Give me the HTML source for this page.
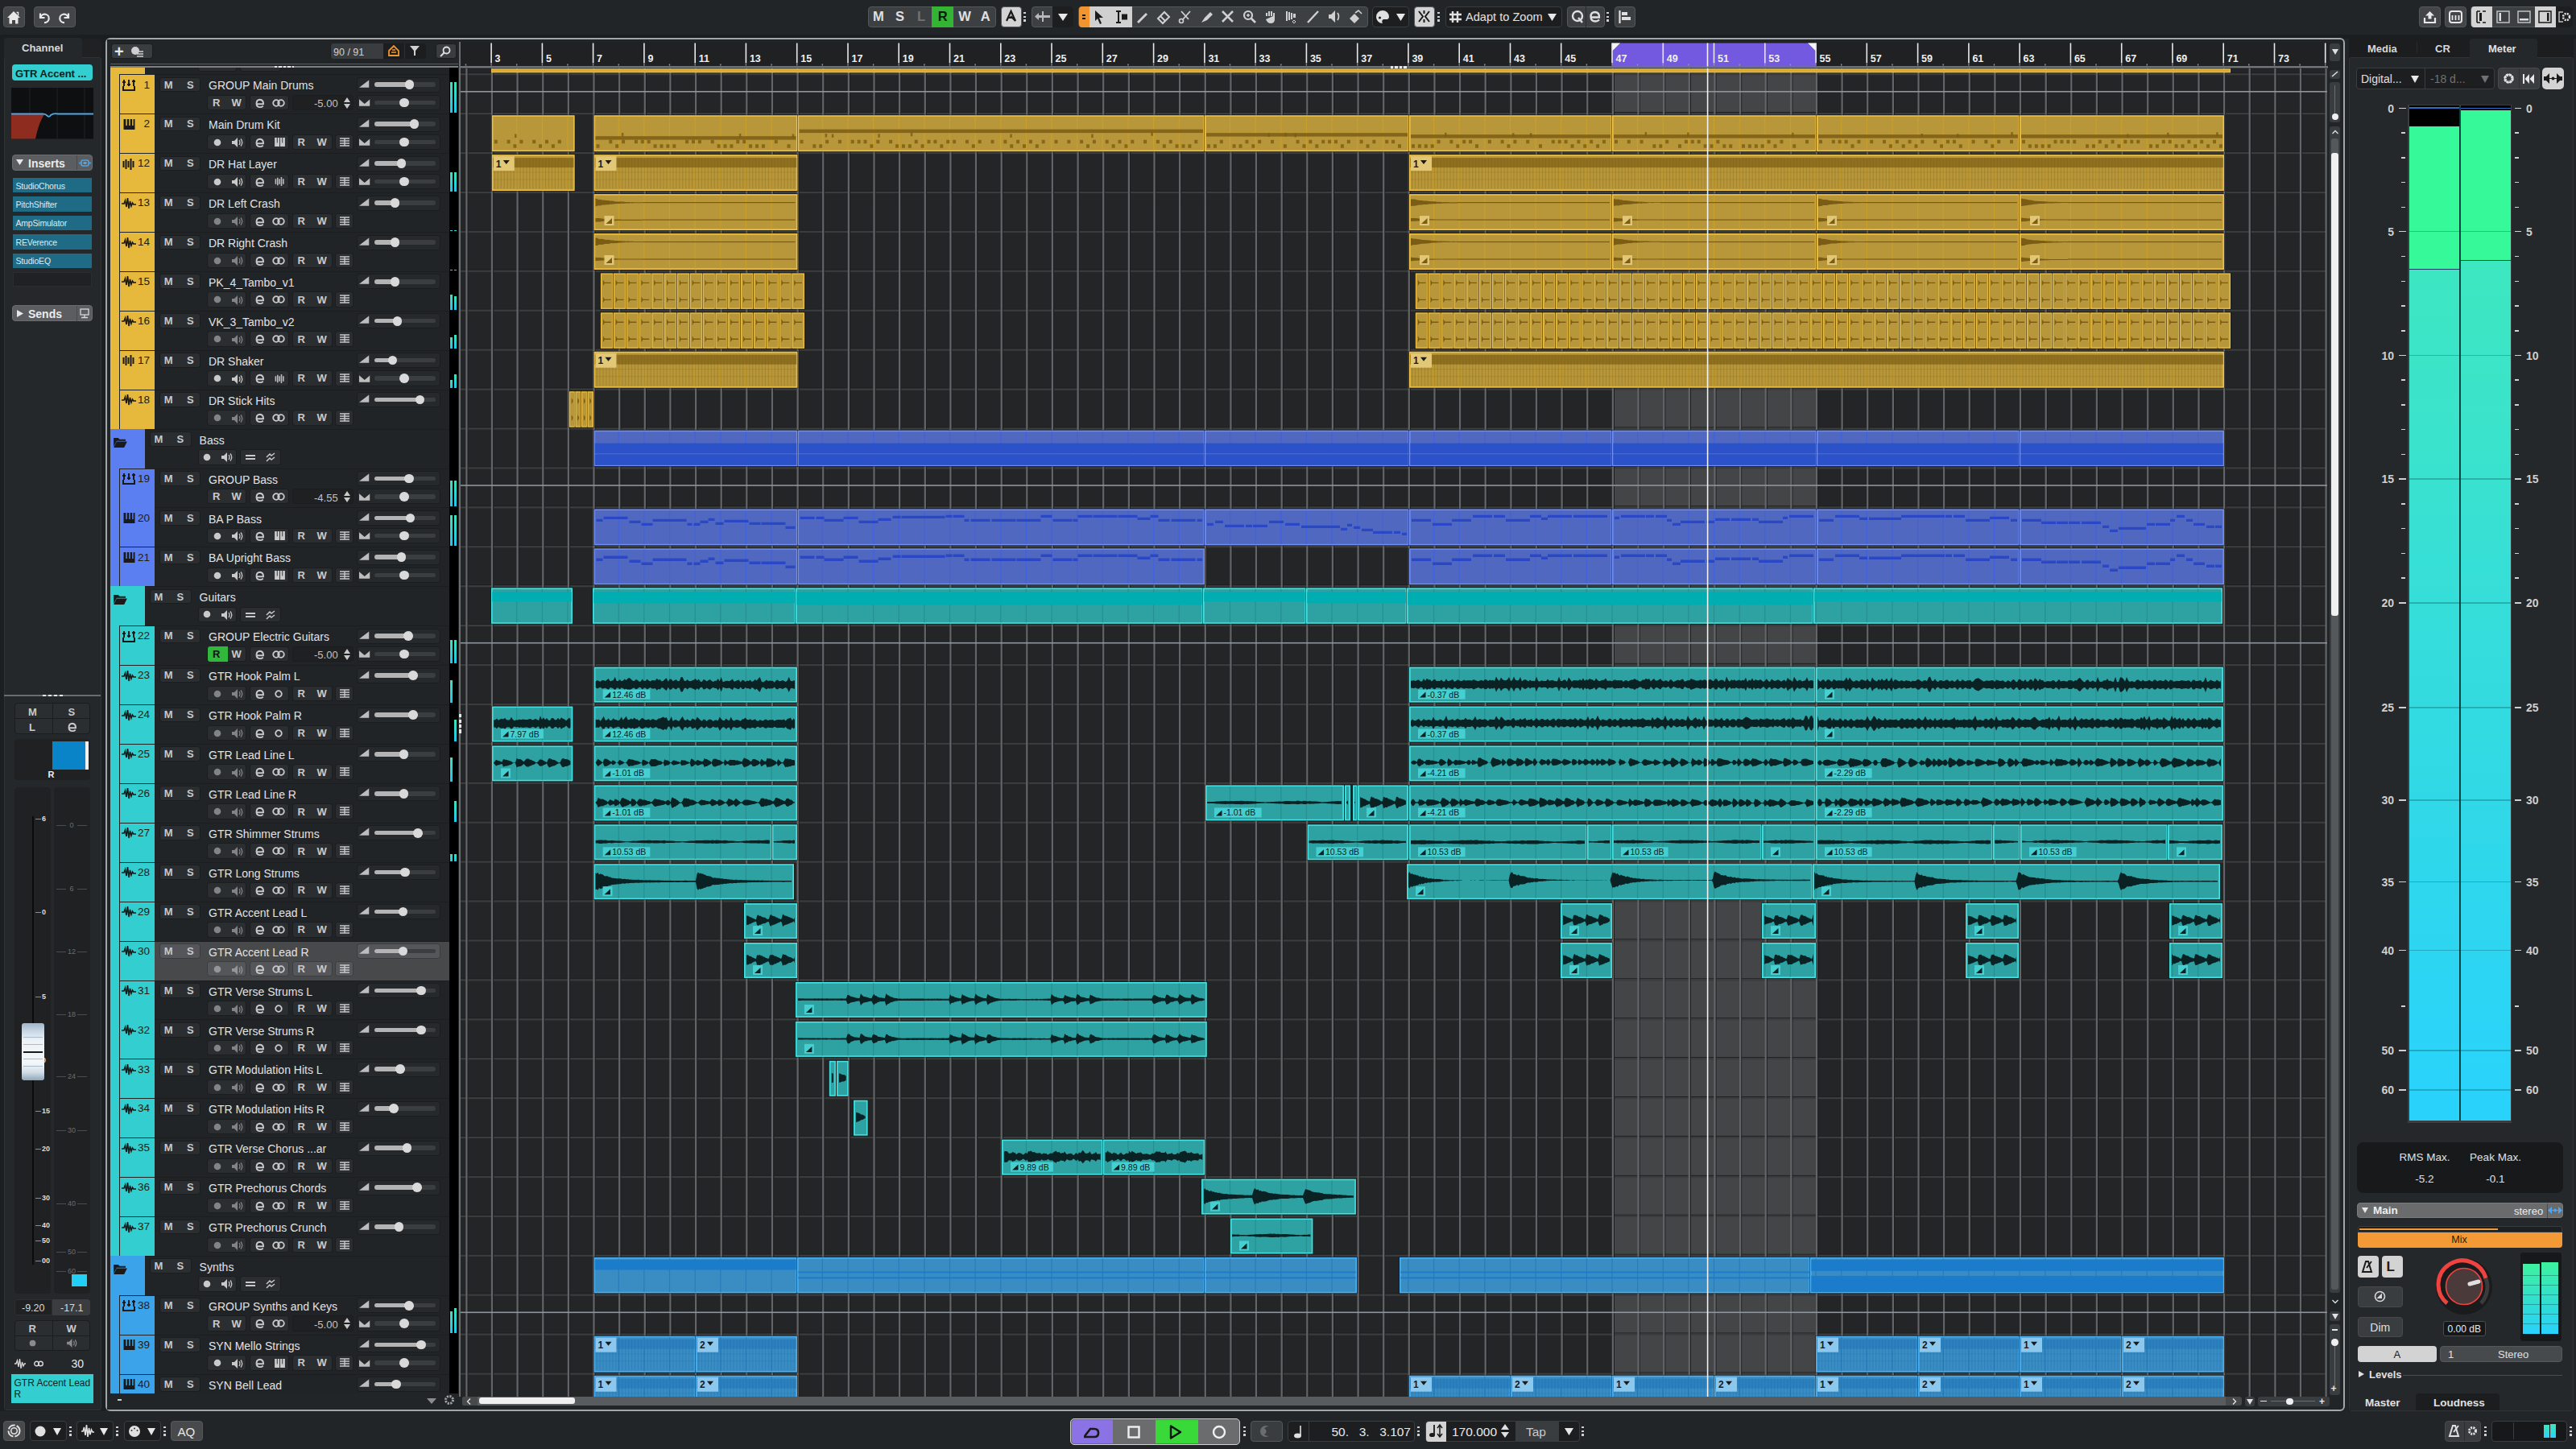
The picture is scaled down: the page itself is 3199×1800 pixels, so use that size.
<!DOCTYPE html><html><head><meta charset="utf-8"><style>
html,body{margin:0;padding:0;width:3199px;height:1800px;overflow:hidden;background:#212528;font-family:"Liberation Sans", sans-serif;}
div{box-sizing:border-box;}
.a{position:absolute;}
.t{white-space:nowrap;line-height:1;}

.r{position:absolute;left:0;width:570px;height:49px;}
.rb{position:absolute;left:192px;top:0;width:366px;height:49px;background:#212427;border-top:1.4px solid #1b1d1f;}
.sel{background:#48494b;}
.rs .bx{background:#545659;border-color:#3a3c3e;}
.cs{position:absolute;left:136.6px;top:0;width:11px;height:49px;}
.cc{position:absolute;left:148.6px;top:1px;width:43.2px;height:48px;}
.cf{position:absolute;left:136.6px;top:0;width:43.2px;height:49px;}
.num{position:absolute;right:384px;top:6.3px;font-size:13.5px;color:#241d0c;line-height:1;}
.ic{position:absolute;left:152px;top:8px;width:16px;height:14px;}
.bx{position:absolute;background:#2b2e31;border:1px solid #1a1c1e;border-radius:3.5px;}
.ms{left:197.5px;top:3.6px;width:51.6px;height:18.6px;}
.msf{left:185.6px;top:3.6px;width:52px;height:18.6px;}
.gl{position:absolute;font-weight:bold;font-size:13px;color:#c9c9c9;line-height:1;}
.nm{position:absolute;left:259px;top:7.2px;font-size:14px;color:#e2e2e2;line-height:1;white-space:nowrap;}
.nmf{left:247.6px;}
.vb{left:442.5px;top:3.5px;width:104px;height:19px;background:#26292c;}
.pb{left:442.5px;top:25.6px;width:104px;height:19.4px;background:#26292c;}
.g1{left:257px;top:25.6px;width:49.2px;height:19.4px;}
.g2{left:310px;top:25.6px;width:49.3px;height:19.4px;}
.g3{left:363px;top:25.6px;width:49.6px;height:19.4px;}
.g4{left:416.4px;top:25.6px;width:23px;height:19.4px;}
.gv{left:363px;top:25.6px;width:76.4px;height:19.4px;background:#1e2022;}
.f1{left:245.5px;top:25.6px;width:48.5px;height:19.4px;}
.f2{left:298px;top:25.6px;width:50.6px;height:19.4px;}
.st{position:absolute;left:465px;width:75.7px;height:5.5px;background:#3b3e41;border-radius:3px;}
.sf{position:absolute;left:465px;height:5.5px;background:#b4b4b4;border-radius:3px 0 0 3px;}
.kn{position:absolute;width:11.6px;height:11.6px;border-radius:50%;background:#d9d9d9;}
.mt{position:absolute;left:557.5px;top:0;width:11.5px;height:49px;background:#000;}
.mb{position:absolute;width:3.5px;background:linear-gradient(#3de3b5,#1ec8f0);}
.sv{position:absolute;overflow:visible;}

</style></head><body>
<svg width="0" height="0" style="position:absolute">
<symbol id="ivol" viewBox="0 0 13 10"><path d="M0 10L13 0V10z" fill="#bdbdbd"/></symbol>
<symbol id="ipan" viewBox="0 0 14 9"><path d="M0 0L7 6L14 0V9H0z" fill="#bdbdbd"/></symbol>
<symbol id="igrp" viewBox="0 0 16 14"><path d="M2 0v8M8 0v8M14 0v8M0 3h4M6 6h4M12 2h4M1 8v5h14v-5" stroke="#1a1a1a" stroke-width="2" fill="none"/></symbol>
<symbol id="ipia" viewBox="0 0 15 14"><path d="M0 0h3v14H0zM4.6 0h2.6v14H4.6zM8.8 0h2.6v14H8.8zM13 0h2v14h-2zM0 8.5h15v5.5H0z" fill="#1a1a1a"/></symbol>
<symbol id="iwav" viewBox="0 0 18 14"><path d="M0 7h3l1.5-4 1.5 8 1.5-11 1.5 13 1.5-9 1.5 6 1.5-4 1.2 2H18" stroke="#1a1a1a" stroke-width="1.6" fill="none"/></symbol>
<symbol id="ihat" viewBox="0 0 15 14"><path d="M1 3v8M4 1v12M7 3v8M10 0v14M13 3v8" stroke="#1a1a1a" stroke-width="2"/></symbol>
<symbol id="ifol" viewBox="0 0 18 14"><path d="M0 1h6l2 2h8v2H4L0 13z M4 6h14l-4 8H0z" fill="#1a1a1a"/></symbol>
<symbol id="irec" viewBox="0 0 10 10"><circle cx="5" cy="5" r="4.3" fill="#c9c9c9"/></symbol>
<symbol id="ispk" viewBox="0 0 14 12"><path d="M0 4h3l4-4v12l-4-4H0z" fill="#c9c9c9"/><path d="M9 3q2 3 0 6M11 1.5q3.5 4.5 0 9" stroke="#c9c9c9" stroke-width="1.3" fill="none"/></symbol>
<symbol id="ie" viewBox="0 0 12 12"><path d="M2.5 7.2h7.5q0.3-5-4.2-5.5Q1.6 1.8 1.5 6.5q0 4.6 4.6 4.6q2.3 0 3.6-1.5" stroke="#c9c9c9" stroke-width="1.9" fill="none"/></symbol>
<symbol id="iinf" viewBox="0 0 16 10"><circle cx="5" cy="5" r="3.8" stroke="#c9c9c9" stroke-width="1.8" fill="none"/><circle cx="11" cy="5" r="3.8" stroke="#c9c9c9" stroke-width="1.8" fill="none"/></symbol>
<symbol id="ioo" viewBox="0 0 10 10"><circle cx="5" cy="5" r="3.8" stroke="#c9c9c9" stroke-width="1.8" fill="none"/></symbol>
<symbol id="ikey" viewBox="0 0 14 12"><path d="M0 0h14v12H0z" fill="#c9c9c9"/><path d="M3.5 0v7M7 0v12M10.5 0v7" stroke="#2b2e31" stroke-width="1"/></symbol>
<symbol id="ilst" viewBox="0 0 12 11"><path d="M0 1h12M0 4h12M0 7h12M0 10h12M6 1v9" stroke="#c9c9c9" stroke-width="1.4"/></symbol>
<symbol id="ieq" viewBox="0 0 12 6"><path d="M0 1h12M0 5h12" stroke="#c9c9c9" stroke-width="1.8"/></symbol>
<symbol id="ishf" viewBox="0 0 12 12"><path d="M1 6l4-4 2 2 4-3M1 11l4-4 2 2 4-3" stroke="#c9c9c9" stroke-width="1.5" fill="none"/></symbol>
<symbol id="iud" viewBox="0 0 8 14"><path d="M0 6L4 0L8 6zM0 8h8L4 14z" fill="#c9c9c9"/></symbol>
</svg>
<div class="a" style="left:4.2px;top:7.5px;width:26.5px;height:26.5px;background:#434548;border:1px solid #55585b;border-radius:4px;"></div>
<svg class="sv" style="left:8.7px;top:13.5px;width:16px;height:15.5px"><path d="M0 8L8 0L16 8H13.5V15.5H10V11H6V15.5H2.5V8z" fill="#e8e8e8"/><path d="M11.5 1.5h2v4" stroke="#e8e8e8" stroke-width="1.5"/></svg>
<div class="a" style="left:41.7px;top:7.5px;width:52.8px;height:26.5px;background:#434548;border:1px solid #55585b;border-radius:4px;"></div>
<svg class="sv" style="left:47px;top:15px;width:14px;height:14px"><path d="M3 1.5V7H8.5" stroke="#e8e8e8" stroke-width="2.2" fill="none"/><path d="M3.5 6.5A5.2 5.2 0 1 1 8 13" stroke="#e8e8e8" stroke-width="2.2" fill="none"/></svg>
<svg class="sv" style="left:74px;top:15px;width:14px;height:14px"><path d="M11 1.5V7H5.5" stroke="#e8e8e8" stroke-width="2.2" fill="none"/><path d="M10.5 6.5A5.2 5.2 0 1 0 6 13" stroke="#e8e8e8" stroke-width="2.2" fill="none"/></svg>
<div class="a" style="left:1077.5px;top:7.5px;width:159.1px;height:26.5px;background:#3d4043;border:1px solid #55585b;border-radius:4px;"></div>
<div class="a" style="left:1157.0px;top:8.0px;width:26.6px;height:25.5px;background:#33b533;"></div>
<div class="gl" style="left:1083.8px;top:12px;font-size:16.5px;width:14px;text-align:center;color:#e0e0e0">M</div>
<div class="gl" style="left:1110.4px;top:12px;font-size:16.5px;width:14px;text-align:center;color:#e0e0e0">S</div>
<div class="gl" style="left:1137.0px;top:12px;font-size:16.5px;width:14px;text-align:center;color:#707274">L</div>
<div class="gl" style="left:1163.6px;top:12px;font-size:16.5px;width:14px;text-align:center;color:#0f1a0f">R</div>
<div class="gl" style="left:1190.2px;top:12px;font-size:16.5px;width:14px;text-align:center;color:#e0e0e0">W</div>
<div class="gl" style="left:1216.8px;top:12px;font-size:16.5px;width:14px;text-align:center;color:#e0e0e0">A</div>
<div class="a" style="left:1242.5px;top:7.5px;width:26.1px;height:26.5px;background:#d3d3d3;border:1px solid #55585b;border-radius:4px;"></div>
<svg class="sv" style="left:1247px;top:12px;width:17px;height:17px"><path d="M3 14L8.5 2L14 14M5 10h7" stroke="#1a1a1a" stroke-width="2.2" fill="none"/><path d="M8 8l6 6" stroke="#1a1a1a" stroke-width="2"/></svg>
<div class="a" style="left:1271px;top:15px;width:3px;height:12px;background:repeating-linear-gradient(#d0d0d0 0 2.5px,transparent 2.5px 4.6px)"></div>
<div class="a" style="left:1281.0px;top:7.5px;width:52.0px;height:26.5px;background:#3d4043;border:1px solid #55585b;border-radius:4px;"></div>
<div class="a" style="left:1307.0px;top:8.0px;width:25.5px;height:25.5px;background:#1c1e20;border-radius:0 4px 4px 0"></div>
<svg class="sv" style="left:1285px;top:13px;width:19px;height:15px"><path d="M0 7.5L5 3v9z M5 6h14v3H5z M9 1h2v13H9z" fill="#b8b8b8"/></svg>
<svg class="sv" style="left:1314px;top:17px;width:12px;height:9px"><path d="M0 0h12L6 9z" fill="#e8e8e8"/></svg>
<div class="a" style="left:1339.0px;top:7.5px;width:359.5px;height:26.5px;background:#3d4043;border:1px solid #55585b;border-radius:4px;"></div>
<div class="a" style="left:1339.5px;top:8.0px;width:13.0px;height:25.5px;background:#f0952f;border-radius:4px 0 0 4px"></div>
<div class="a" style="left:1352.5px;top:8.0px;width:53.0px;height:25.5px;background:#d0d0d0;"></div>
<div class="a" style="left:1344.0px;top:17.5px;width:4.0px;height:2.5px;background:#1a1a1a;"></div>
<div class="a" style="left:1344.0px;top:21.5px;width:4.0px;height:2.5px;background:#1a1a1a;"></div>
<svg class="sv" style="left:1359px;top:13px;width:12px;height:17px"><path d="M1 0L11 9H6l3 7-2 1-3-7-3 3z" fill="#1a1a1a"/></svg>
<svg class="sv" style="left:1385px;top:13px;width:17px;height:16px"><path d="M1 1h6M1 15h6M4 1v14" stroke="#1a1a1a" stroke-width="2"/><rect x="8" y="4.5" width="7" height="7" fill="#1a1a1a"/></svg>
<svg class="sv" style="left:1410.0px;top:12px;width:17px;height:18px"><path d="M2 15L13 4l2 2L4 17z" fill="#d0d0d0"/></svg>
<svg class="sv" style="left:1436.5px;top:12px;width:17px;height:18px"><path d="M1 11l8-8 6 6-8 8z" stroke="#d0d0d0" stroke-width="2" fill="none"/><path d="M4 8l6 6" stroke="#d0d0d0" stroke-width="2"/></svg>
<svg class="sv" style="left:1463.0px;top:12px;width:17px;height:18px"><circle cx="4" cy="14" r="2.5" stroke="#d0d0d0" stroke-width="1.6" fill="none"/><path d="M6 12L15 2M4 2l9 10" stroke="#d0d0d0" stroke-width="1.8"/></svg>
<svg class="sv" style="left:1489.5px;top:12px;width:17px;height:18px"><path d="M2 16l4-6 7-7 3 3-7 7z" fill="#d0d0d0"/></svg>
<svg class="sv" style="left:1516.0px;top:12px;width:17px;height:18px"><path d="M2 2l13 13M15 2L2 15" stroke="#d0d0d0" stroke-width="2.6"/></svg>
<svg class="sv" style="left:1542.5px;top:12px;width:17px;height:18px"><circle cx="7" cy="7" r="5" stroke="#d0d0d0" stroke-width="2.2" fill="none"/><path d="M10.5 10.5L16 16" stroke="#d0d0d0" stroke-width="2.6"/><path d="M5 7h4M7 5v4" stroke="#d0d0d0" stroke-width="1.5"/></svg>
<svg class="sv" style="left:1569.0px;top:12px;width:17px;height:18px"><path d="M3 8V4h2v4M6 8V2h2v6M9 8V2h2v6M12 8V4h2v8q0 5-5 5-4 0-6-5z" fill="#d0d0d0"/></svg>
<svg class="sv" style="left:1595.5px;top:12px;width:17px;height:18px"><path d="M1 2h2v12H1zM4 3h2v10H4zM7 4h2v8H7zM10 5h3v5h-3z" fill="#d0d0d0"/><path d="M9 15l2-2 2 2-2 2z" stroke="#d0d0d0" fill="none"/></svg>
<svg class="sv" style="left:1622.0px;top:12px;width:17px;height:18px"><path d="M2 16L15 2" stroke="#d0d0d0" stroke-width="2.4"/></svg>
<svg class="sv" style="left:1648.5px;top:12px;width:17px;height:18px"><path d="M1 6h3l5-5v15l-5-5H1z" fill="#d0d0d0"/><path d="M12 4q3 4.5 0 9" stroke="#d0d0d0" stroke-width="1.8" fill="none"/></svg>
<svg class="sv" style="left:1675.0px;top:12px;width:17px;height:18px"><path d="M1 11l6-6 6 6-6 6z" fill="#d0d0d0"/><path d="M8 4l4-3 4 4" stroke="#d0d0d0" stroke-width="1.6" fill="none"/></svg>
<div class="a" style="left:1704.0px;top:7.5px;width:46.0px;height:26.5px;background:#1c1e20;border:1px solid #3a3d40;border-radius:4px"></div>
<svg class="sv" style="left:1709px;top:13px;width:17px;height:16px"><path d="M8 0a8 8 0 1 0 0 16q-2-3 1-5l5 0q2-1 2-3A8 8 0 0 0 8 0z" fill="#e0e0e0"/><circle cx="4.5" cy="9" r="1.6" fill="#1c1e20"/></svg>
<svg class="sv" style="left:1734px;top:17px;width:11px;height:9px"><path d="M0 0h11L5.5 9z" fill="#e8e8e8"/></svg>
<div class="a" style="left:1755.7px;top:7.5px;width:26.3px;height:26.5px;background:#d3d3d3;border:1px solid #55585b;border-radius:4px;"></div>
<svg class="sv" style="left:1760px;top:12px;width:17px;height:17px"><path d="M2 2l5 6.5L2 15M15 2l-5 6.5L15 15M8.5 1v4M8.5 12v4" stroke="#1a1a1a" stroke-width="2" fill="none"/></svg>
<div class="a" style="left:1784.5px;top:15px;width:3px;height:12px;background:repeating-linear-gradient(#d0d0d0 0 2.5px,transparent 2.5px 4.6px)"></div>
<div class="a" style="left:1794.6px;top:7.5px;width:145.4px;height:26.5px;background:#1c1e20;border:1px solid #3a3d40;border-radius:4px"></div>
<svg class="sv" style="left:1799px;top:13px;width:17px;height:16px"><path d="M5 1v14M11 1v14M1 5h15M1 11h15" stroke="#e0e0e0" stroke-width="2.4"/></svg>
<div class="a t" style="left:1820.0px;top:13.5px;font-size:14.6px;color:#e2e2e2;font-weight:normal;">Adapt to Zoom</div>
<svg class="sv" style="left:1922px;top:17px;width:11px;height:9px"><path d="M0 0h11L5.5 9z" fill="#e8e8e8"/></svg>
<div class="a" style="left:1946.0px;top:7.5px;width:46.5px;height:26.5px;background:#3d4043;border:1px solid #55585b;border-radius:4px;"></div>
<div class="a" style="left:1969.0px;top:8.0px;width:1.0px;height:25.5px;background:#2a2d30;"></div>
<svg class="sv" style="left:1951px;top:12px;width:16px;height:17px"><circle cx="8" cy="8" r="6" stroke="#e0e0e0" stroke-width="2.4" fill="none"/><path d="M9 10l5 6" stroke="#e0e0e0" stroke-width="2.4"/></svg>
<svg class="sv" style="left:1974px;top:13px;width:14px;height:15px"><path d="M2.5 8.5h9.5q0.3-6-5-6.5Q1.5 2 1.5 7.5q0 6 6 6q2.5 0 4.5-2" stroke="#e0e0e0" stroke-width="2.3" fill="none"/></svg>
<div class="a" style="left:1995px;top:15px;width:3px;height:12px;background:repeating-linear-gradient(#d0d0d0 0 2.5px,transparent 2.5px 4.6px)"></div>
<div class="a" style="left:2005.0px;top:7.5px;width:26.0px;height:26.5px;background:#3d4043;border:1px solid #55585b;border-radius:4px;"></div>
<svg class="sv" style="left:2010px;top:13px;width:16px;height:16px"><path d="M1.5 0v16" stroke="#e0e0e0" stroke-width="2.2"/><path d="M4 2h7v4H4zM4 8h11v4H4z" fill="#e0e0e0"/></svg>
<div class="a" style="left:3004.0px;top:7.5px;width:27.0px;height:26.5px;background:#434548;border:1px solid #55585b;border-radius:4px;"></div>
<svg class="sv" style="left:3010px;top:13px;width:15px;height:16px"><path d="M7.5 1L2 6.5h3.5v4h4v-4H13z" fill="#e8e8e8"/><path d="M1 9v6h13V9" stroke="#e8e8e8" stroke-width="2.2" fill="none"/></svg>
<div class="a" style="left:3036.0px;top:7.5px;width:27.0px;height:26.5px;background:#434548;border:1px solid #55585b;border-radius:4px;"></div>
<svg class="sv" style="left:3041px;top:13px;width:17px;height:16px"><rect x="1" y="1" width="15" height="14" rx="3" stroke="#e8e8e8" stroke-width="2" fill="none"/><path d="M4.5 6v6M8.5 6v6M12.5 6v6" stroke="#e8e8e8" stroke-width="1.8"/></svg>
<div class="a" style="left:3068.0px;top:7.5px;width:127.0px;height:26.5px;background:#3d4043;border:1px solid #55585b;border-radius:4px;"></div>
<div class="a" style="left:3068.5px;top:8.0px;width:26.0px;height:25.5px;background:#d3d3d3;border-radius:4px 0 0 4px"></div>
<div class="a" style="left:3148.0px;top:8.0px;width:26.0px;height:25.5px;background:#d3d3d3;"></div>
<div class="a" style="left:3174.0px;top:8.0px;width:20.5px;height:25.5px;background:#1c1e20;border-radius:0 4px 4px 0"></div>
<svg class="sv" style="left:3075px;top:13px;width:13px;height:16px"><path d="M1 1h4M1 15h4M1 1v14M12 1H8M12 15H8" stroke="#1a1a1a" stroke-width="1.6" fill="none"/><rect x="4" y="3" width="3" height="10" fill="#1a1a1a"/></svg>
<svg class="sv" style="left:3100px;top:13px;width:17px;height:16px"><rect x="1" y="1" width="15" height="14" stroke="#c0c0c0" stroke-width="1.5" fill="none"/><rect x="3.5" y="3" width="2.5" height="10" fill="#e0e0e0"/></svg>
<svg class="sv" style="left:3126px;top:13px;width:17px;height:16px"><rect x="1" y="1" width="15" height="14" stroke="#c0c0c0" stroke-width="1.5" fill="none"/><rect x="3" y="10" width="11" height="2.5" fill="#e0e0e0"/></svg>
<svg class="sv" style="left:3152px;top:13px;width:17px;height:16px"><rect x="1" y="1" width="15" height="14" stroke="#1a1a1a" stroke-width="1.5" fill="none"/><rect x="11" y="3" width="2.5" height="10" fill="#1a1a1a"/></svg>
<svg class="sv" style="left:3177px;top:13px;width:16px;height:16px"><path d="M6 2H1v12h5" stroke="#c0c0c0" stroke-width="1.4" fill="none"/><circle cx="10" cy="8" r="4" stroke="#e0e0e0" stroke-width="2.6" fill="none" stroke-dasharray="2 1.2"/></svg>
<div class="a" style="left:0.0px;top:42.5px;width:3199.0px;height:5.5px;background:#1b1e20;"></div>
<div class="a" style="left:0.0px;top:48.0px;width:131.0px;height:1705.0px;background:#1c1f21;"></div>
<div class="a" style="left:5.0px;top:71.0px;width:121.0px;height:1681.0px;background:#25282b;border:1px solid #303336;border-radius:3px;"></div>
<div class="a" style="left:5.0px;top:47.0px;width:97.0px;height:25.0px;background:#25282b;border-radius:4px 4px 0 0;"></div>
<div class="a t" style="left:27.0px;top:53.0px;font-size:13px;color:#d8d8d8;font-weight:bold;">Channel</div>
<div class="a" style="left:131.0px;top:47.0px;width:2781.0px;height:1706.0px;background:#212528;border:2px solid #a3a6a7;border-radius:6px;"></div>
<div class="a" style="left:2917.0px;top:47.0px;width:279.0px;height:1706.0px;background:#1c1f21;"></div>
<div class="a" style="left:2917.0px;top:71.0px;width:279.0px;height:1682.0px;background:#25282b;border:1px solid #303336;border-radius:3px;"></div>
<div class="a" style="left:102.0px;top:47.5px;width:23.5px;height:23.5px;background:#1f2123;border-radius:4px 4px 0 0"></div>
<div class="a" style="left:15.0px;top:79.8px;width:100.0px;height:20.4px;background:#33cfd0;border-radius:4px"></div>
<div class="a t" style="left:19.0px;top:84.5px;font-size:13px;color:#0d1f20;font-weight:bold;">GTR Accent ...</div>
<svg class="sv" style="left:13.7px;top:109px;width:102px;height:63.5px"><rect width="102" height="63.5" fill="#0e0f10"/><path d="M23 0v63.5M57 0v63.5M91 0v63.5" stroke="#1b1c1d" stroke-width="1.5"/><path d="M0 32.5H42Q35 40 30 63.5H0z" fill="#8e2c1f"/><path d="M0 32.5H38Q42 32 45 35Q47 37 49 34Q52 31.5 58 32.5H102" stroke="#4ea6e6" stroke-width="1.8" fill="none"/></svg>
<div class="a" style="left:15.0px;top:192.0px;width:100.0px;height:19.5px;background:#5b5d60;border:1px solid #6a6c6f;border-radius:4px"></div>
<div class="a" style="left:95.0px;top:192.5px;width:1.0px;height:18.5px;background:#47494c;"></div>
<svg class="sv" style="left:20px;top:197px;width:9px;height:9px"><path d="M0 1h9L4.5 8z" fill="#e8e8e8"/></svg>
<div class="a t" style="left:35.0px;top:195.5px;font-size:14px;color:#ececec;font-weight:bold;">Inserts</div>
<svg class="sv" style="left:98px;top:196.5px;width:15px;height:11px"><rect x="3" y="2" width="9" height="7" rx="2" stroke="#4ea6e6" stroke-width="1.6" fill="none"/><path d="M0 5.5h3M12 5.5h3" stroke="#4ea6e6" stroke-width="1.6"/><rect x="5.5" y="4" width="4" height="3" fill="#4ea6e6"/></svg>
<div class="a" style="left:16.0px;top:221.0px;width:97.6px;height:18.2px;background:#1f6b86;"></div>
<div class="a t" style="left:19.5px;top:225.5px;font-size:10.5px;color:#dfe9ee;font-weight:normal;letter-spacing:-0.2px">StudioChorus</div>
<div class="a" style="left:16.0px;top:244.4px;width:97.6px;height:18.2px;background:#1f6b86;"></div>
<div class="a t" style="left:19.5px;top:248.9px;font-size:10.5px;color:#dfe9ee;font-weight:normal;letter-spacing:-0.2px">PitchShifter</div>
<div class="a" style="left:16.0px;top:267.9px;width:97.6px;height:18.2px;background:#1f6b86;"></div>
<div class="a t" style="left:19.5px;top:272.4px;font-size:10.5px;color:#dfe9ee;font-weight:normal;letter-spacing:-0.2px">AmpSimulator</div>
<div class="a" style="left:16.0px;top:291.4px;width:97.6px;height:18.2px;background:#1f6b86;"></div>
<div class="a t" style="left:19.5px;top:295.9px;font-size:10.5px;color:#dfe9ee;font-weight:normal;letter-spacing:-0.2px">REVerence</div>
<div class="a" style="left:16.0px;top:314.8px;width:97.6px;height:18.2px;background:#1f6b86;"></div>
<div class="a t" style="left:19.5px;top:319.3px;font-size:10.5px;color:#dfe9ee;font-weight:normal;letter-spacing:-0.2px">StudioEQ</div>
<div class="a" style="left:16.0px;top:338.0px;width:97.6px;height:18.2px;background:#1f2123;border:1px solid #2a2c2e"></div>
<div class="a" style="left:15.0px;top:379.4px;width:100.0px;height:19.9px;background:#5b5d60;border:1px solid #6a6c6f;border-radius:4px"></div>
<div class="a" style="left:95.0px;top:380.0px;width:1.0px;height:18.5px;background:#47494c;"></div>
<svg class="sv" style="left:21px;top:384.5px;width:8px;height:9px"><path d="M0 0v9l8-4.5z" fill="#e8e8e8"/></svg>
<div class="a t" style="left:35.0px;top:383.0px;font-size:14px;color:#ececec;font-weight:bold;">Sends</div>
<svg class="sv" style="left:99px;top:383px;width:12px;height:12px"><rect x="1" y="1" width="10" height="7" stroke="#d8d8d8" stroke-width="1.3" fill="none"/><path d="M6 8v3M2 11.5h8" stroke="#d8d8d8" stroke-width="1.3"/></svg>
<div class="a" style="left:5.0px;top:863.0px;width:120.0px;height:1.8px;background:#6a6d70;"></div>
<div class="a" style="left:53px;top:862.5px;width:25px;height:2.8px;background:repeating-linear-gradient(90deg,#e8e8e8 0 4px,transparent 4px 7px)"></div>
<div class="a" style="left:17.6px;top:872.8px;width:94.8px;height:39.2px;background:#2b2e31;border:1px solid #1a1c1e;border-radius:4px"></div>
<div class="a" style="left:64.6px;top:873.0px;width:1.0px;height:39.0px;background:#1a1c1e;"></div>
<div class="a" style="left:17.6px;top:892.3px;width:94.8px;height:1.0px;background:#1a1c1e;"></div>
<div class="gl" style="left:35px;top:877.5px;font-size:13px">M</div><div class="gl" style="left:84.5px;top:877.5px;font-size:13px">S</div>
<div class="gl" style="left:36px;top:897px;font-size:13px">L</div>
<svg class="sv" style="left:83.5px;top:897px;width:12px;height:12px"><use href="#ie"/></svg>
<div class="a" style="left:17.6px;top:918.3px;width:94.8px;height:50.7px;background:#1f2123;border-radius:4px"></div>
<div class="a" style="left:64.7px;top:920.8px;width:45.3px;height:34.9px;background:#0a84c8;"></div>
<div class="a" style="left:106.0px;top:920.8px;width:4.0px;height:34.9px;background:#f0f0f0;"></div>
<div class="gl" style="left:59.5px;top:957px;font-size:11px;color:#f0f0f0">R</div>
<div class="a" style="left:17.6px;top:977.5px;width:45.5px;height:629.5px;background:#1f2123;border-radius:4px"></div>
<div class="a" style="left:66.8px;top:977.5px;width:45.6px;height:629.5px;background:#1f2123;border-radius:4px"></div>
<div class="a" style="left:40.2px;top:1014.0px;width:2.2px;height:557.0px;background:#0b0b0b;"></div>
<div class="a" style="left:43.5px;top:1017.1px;width:7.0px;height:1.0px;background:#8a8c8e;"></div>
<div class="gl" style="left:52px;top:1013.1px;font-size:9px;color:#dcdcdc">6</div>
<div class="a" style="left:43.5px;top:1133.3px;width:7.0px;height:1.0px;background:#8a8c8e;"></div>
<div class="gl" style="left:52px;top:1129.3px;font-size:9px;color:#dcdcdc">0</div>
<div class="a" style="left:43.5px;top:1238.1px;width:7.0px;height:1.0px;background:#8a8c8e;"></div>
<div class="gl" style="left:52px;top:1234.1px;font-size:9px;color:#dcdcdc">5</div>
<div class="a" style="left:43.5px;top:1317.2px;width:7.0px;height:1.0px;background:#8a8c8e;"></div>
<div class="gl" style="left:52px;top:1313.2px;font-size:9px;color:#dcdcdc">0</div>
<div class="a" style="left:43.5px;top:1379.5px;width:7.0px;height:1.0px;background:#8a8c8e;"></div>
<div class="gl" style="left:52px;top:1375.5px;font-size:9px;color:#dcdcdc">15</div>
<div class="a" style="left:43.5px;top:1426.5px;width:7.0px;height:1.0px;background:#8a8c8e;"></div>
<div class="gl" style="left:52px;top:1422.5px;font-size:9px;color:#dcdcdc">20</div>
<div class="a" style="left:43.5px;top:1487.5px;width:7.0px;height:1.0px;background:#8a8c8e;"></div>
<div class="gl" style="left:52px;top:1483.5px;font-size:9px;color:#dcdcdc">30</div>
<div class="a" style="left:43.5px;top:1522.1px;width:7.0px;height:1.0px;background:#8a8c8e;"></div>
<div class="gl" style="left:52px;top:1518.1px;font-size:9px;color:#dcdcdc">40</div>
<div class="a" style="left:43.5px;top:1541.2px;width:7.0px;height:1.0px;background:#8a8c8e;"></div>
<div class="gl" style="left:52px;top:1537.2px;font-size:9px;color:#dcdcdc">50</div>
<div class="a" style="left:43.5px;top:1566.2px;width:7.0px;height:1.0px;background:#8a8c8e;"></div>
<div class="gl" style="left:52px;top:1562.2px;font-size:9px;color:#dcdcdc">00</div>
<div class="a" style="left:27px;top:1270.6px;width:27.7px;height:71px;border-radius:3px;background:linear-gradient(#9fb6cc 0,#c9d7e3 14%,#edf2f6 30%,#f4f7f9 70%,#d2dde6 86%,#8ea6bb 100%)"></div>
<div class="a" style="left:29.0px;top:1306.0px;width:23.7px;height:1.8px;background:#1a1a1a;"></div>
<div class="a" style="left:29.0px;top:1288.0px;width:23.7px;height:1.0px;background:#a9bccc;"></div>
<div class="a" style="left:29.0px;top:1297.0px;width:23.7px;height:1.0px;background:#a9bccc;"></div>
<div class="a" style="left:29.0px;top:1315.0px;width:23.7px;height:1.0px;background:#a9bccc;"></div>
<div class="a" style="left:29.0px;top:1324.0px;width:23.7px;height:1.0px;background:#a9bccc;"></div>
<div class="a" style="left:70.0px;top:1025.0px;width:12.0px;height:1.0px;background:#4a4c4e;"></div>
<div class="a" style="left:96.0px;top:1025.0px;width:12.0px;height:1.0px;background:#4a4c4e;"></div>
<div class="a t" style="left:80px;top:1021.0px;width:18px;text-align:center;font-size:9px;color:#6c6e70">0</div>
<div class="a" style="left:70.0px;top:1103.5px;width:12.0px;height:1.0px;background:#4a4c4e;"></div>
<div class="a" style="left:96.0px;top:1103.5px;width:12.0px;height:1.0px;background:#4a4c4e;"></div>
<div class="a t" style="left:80px;top:1099.5px;width:18px;text-align:center;font-size:9px;color:#6c6e70">6</div>
<div class="a" style="left:70.0px;top:1181.5px;width:12.0px;height:1.0px;background:#4a4c4e;"></div>
<div class="a" style="left:96.0px;top:1181.5px;width:12.0px;height:1.0px;background:#4a4c4e;"></div>
<div class="a t" style="left:80px;top:1177.5px;width:18px;text-align:center;font-size:9px;color:#6c6e70">12</div>
<div class="a" style="left:70.0px;top:1260.1px;width:12.0px;height:1.0px;background:#4a4c4e;"></div>
<div class="a" style="left:96.0px;top:1260.1px;width:12.0px;height:1.0px;background:#4a4c4e;"></div>
<div class="a t" style="left:80px;top:1256.1px;width:18px;text-align:center;font-size:9px;color:#6c6e70">18</div>
<div class="a" style="left:70.0px;top:1336.5px;width:12.0px;height:1.0px;background:#4a4c4e;"></div>
<div class="a" style="left:96.0px;top:1336.5px;width:12.0px;height:1.0px;background:#4a4c4e;"></div>
<div class="a t" style="left:80px;top:1332.5px;width:18px;text-align:center;font-size:9px;color:#6c6e70">24</div>
<div class="a" style="left:70.0px;top:1404.0px;width:12.0px;height:1.0px;background:#4a4c4e;"></div>
<div class="a" style="left:96.0px;top:1404.0px;width:12.0px;height:1.0px;background:#4a4c4e;"></div>
<div class="a t" style="left:80px;top:1400.0px;width:18px;text-align:center;font-size:9px;color:#6c6e70">30</div>
<div class="a" style="left:70.0px;top:1494.5px;width:12.0px;height:1.0px;background:#4a4c4e;"></div>
<div class="a" style="left:96.0px;top:1494.5px;width:12.0px;height:1.0px;background:#4a4c4e;"></div>
<div class="a t" style="left:80px;top:1490.5px;width:18px;text-align:center;font-size:9px;color:#6c6e70">40</div>
<div class="a" style="left:70.0px;top:1554.5px;width:12.0px;height:1.0px;background:#4a4c4e;"></div>
<div class="a" style="left:96.0px;top:1554.5px;width:12.0px;height:1.0px;background:#4a4c4e;"></div>
<div class="a t" style="left:80px;top:1550.5px;width:18px;text-align:center;font-size:9px;color:#6c6e70">50</div>
<div class="a" style="left:70.0px;top:1578.5px;width:12.0px;height:1.0px;background:#4a4c4e;"></div>
<div class="a" style="left:96.0px;top:1578.5px;width:12.0px;height:1.0px;background:#4a4c4e;"></div>
<div class="a t" style="left:80px;top:1574.5px;width:18px;text-align:center;font-size:9px;color:#6c6e70">60</div>
<div class="a" style="left:89.0px;top:1582.6px;width:18.7px;height:15.0px;background:#22d0f5;"></div>
<div class="a" style="left:17.6px;top:1613.8px;width:47.0px;height:19.8px;background:#1f2123;border:1px solid #2d2f31;border-radius:4px 0 0 4px"></div>
<div class="a" style="left:64.6px;top:1613.8px;width:47.8px;height:19.8px;background:#3a3c3f;border-radius:0 4px 4px 0"></div>
<div class="a t" style="left:27.0px;top:1618.5px;font-size:12.5px;color:#d8d8d8;font-weight:normal;">-9.20</div>
<div class="a t" style="left:75.0px;top:1618.5px;font-size:12.5px;color:#d8d8d8;font-weight:normal;">-17.1</div>
<div class="a" style="left:17.6px;top:1640.0px;width:94.8px;height:38.4px;background:#2b2e31;border:1px solid #1a1c1e;border-radius:4px"></div>
<div class="a" style="left:64.6px;top:1640.0px;width:1.0px;height:38.4px;background:#1a1c1e;"></div>
<div class="a" style="left:17.6px;top:1659.0px;width:94.8px;height:1.0px;background:#1a1c1e;"></div>
<div class="gl" style="left:35.5px;top:1644px;font-size:13px">R</div><div class="gl" style="left:82.5px;top:1644px;font-size:13px">W</div>
<svg class="sv" style="left:36px;top:1664px;width:9px;height:9px;opacity:.6"><use href="#irec"/></svg>
<svg class="sv" style="left:83px;top:1663px;width:13px;height:11px;opacity:.6"><use href="#ispk"/></svg>
<svg class="sv" style="left:18px;top:1688px;width:14px;height:12px"><path d="M0 6h2l1.5-4 1.5 8 1.5-10 1.5 12 1.5-8 1.5 5 1.5-3H14" stroke="#d8d8d8" stroke-width="1.3" fill="none"/></svg>
<svg class="sv" style="left:42px;top:1690px;width:12px;height:8px"><circle cx="3.5" cy="4" r="2.8" stroke="#d8d8d8" stroke-width="1.4" fill="none"/><circle cx="8.5" cy="4" r="2.8" stroke="#d8d8d8" stroke-width="1.4" fill="none"/></svg>
<div class="a t" style="left:88.5px;top:1687.0px;font-size:14px;color:#e8e8e8;font-weight:normal;">30</div>
<div class="a" style="left:13.6px;top:1707.0px;width:102.4px;height:36.0px;background:#33cfd0;"></div>
<div class="a t" style="left:17.5px;top:1711.5px;font-size:12px;color:#0d1f20;font-weight:normal;">GTR Accent Lead</div>
<div class="a t" style="left:17.5px;top:1726.0px;font-size:12px;color:#0d1f20;font-weight:normal;">R</div>
<div class="a" style="left:2917.6px;top:47.7px;width:149.4px;height:23.0px;background:#1b1d1f;border-radius:4px 4px 0 0"></div>
<div class="a" style="left:3001.0px;top:52.0px;width:1.0px;height:14.0px;background:#2a2c2e;"></div>
<div class="a" style="left:3067.0px;top:47.7px;width:83.5px;height:25.0px;background:#25282b;border-radius:4px 4px 0 0"></div>
<div class="a" style="left:3150.5px;top:47.7px;width:45.0px;height:23.0px;background:#1b1d1f;"></div>
<div class="a t" style="left:2940.0px;top:53.5px;font-size:13px;color:#d8d8d8;font-weight:bold;">Media</div>
<div class="a t" style="left:3024.0px;top:53.5px;font-size:13px;color:#d8d8d8;font-weight:bold;">CR</div>
<div class="a t" style="left:3090.0px;top:53.5px;font-size:13px;color:#e2e2e2;font-weight:bold;">Meter</div>
<div class="a" style="left:2926.0px;top:84.4px;width:171.6px;height:26.2px;background:#1c1e20;border:1px solid #3a3d40;border-radius:4px"></div>
<div class="a" style="left:3011.0px;top:85.0px;width:1.0px;height:25.0px;background:#3a3d40;"></div>
<div class="a t" style="left:2932.0px;top:91.0px;font-size:14px;color:#e0e0e0;font-weight:normal;">Digital...</div>
<svg class="sv" style="left:2994px;top:93.5px;width:10px;height:9px"><path d="M0 0h10L5 9z" fill="#e8e8e8"/></svg>
<div class="a t" style="left:3018.0px;top:91.0px;font-size:14px;color:#6f7173;font-weight:normal;">-18 d...</div>
<svg class="sv" style="left:3081px;top:93.5px;width:10px;height:9px"><path d="M0 0h10L5 9z" fill="#6f7173"/></svg>
<div class="a" style="left:3101.6px;top:84.4px;width:52.0px;height:26.2px;background:#3a3d40;border:1px solid #48494b;border-radius:4px"></div>
<div class="a" style="left:3127.5px;top:85.0px;width:1.0px;height:25.0px;background:#2e3033;"></div>
<svg class="sv" style="left:3108px;top:90px;width:15px;height:15px"><circle cx="7.5" cy="7.5" r="4.6" stroke="#e0e0e0" stroke-width="3.4" fill="none" stroke-dasharray="2.4 1.2"/><circle cx="7.5" cy="7.5" r="5" stroke="#e0e0e0" stroke-width="1.5" fill="none"/></svg>
<svg class="sv" style="left:3133px;top:92px;width:15px;height:12px"><path d="M1 0v12" stroke="#e8e8e8" stroke-width="2"/><path d="M8 0L2.5 6 8 12zM14 0L8.5 6 14 12z" fill="#e8e8e8"/></svg>
<div class="a" style="left:3157.0px;top:84.4px;width:26.7px;height:26.2px;background:#d3d3d3;border-radius:5px"></div>
<svg class="sv" style="left:3159px;top:91px;width:23px;height:13px"><path d="M0 4h3l4-4v13l-4-4H0zM23 4h-3l-4-4v13l4-4h3z" fill="#1a1a1a"/><circle cx="11.5" cy="6.5" r="2" fill="#1a1a1a"/><path d="M7 6.5h9" stroke="#1a1a1a" stroke-width="1"/></svg>
<div class="a" style="left:2990.4px;top:129.8px;width:129.1px;height:1265.2px;background:#3b3d3f;"></div>
<div class="a" style="left:3054.4px;top:131.0px;width:1.1px;height:1261.4px;background:#0c3a38;"></div>
<div class="a" style="left:2992.0px;top:131.0px;width:62.4px;height:1261.4px;background:#000;"></div>
<div class="a" style="left:3055.5px;top:131.0px;width:62.5px;height:1261.4px;background:#000;"></div>
<div class="a" style="left:2992.0px;top:335.0px;width:62.4px;height:1057.4px;background:linear-gradient(#3de6c2 0%,#3ae3cc 20%,#33dbe0 50%,#2ed6ef 75%,#29d2fc 100%);"></div>
<div class="a" style="left:3055.5px;top:324.0px;width:62.5px;height:1068.4px;background:linear-gradient(#3de7c0 0%,#3ae3cc 21%,#33dbe0 51%,#2ed6ef 76%,#29d2fc 100%);"></div>
<div class="a" style="left:2992.0px;top:156.6px;width:62.4px;height:178.4px;background:#36f99a;"></div>
<div class="a" style="left:3055.5px;top:137.0px;width:62.5px;height:187.0px;background:#36f99a;"></div>
<div class="a" style="left:2992.0px;top:334.0px;width:62.4px;height:1.3px;background:#1d3f6a;"></div>
<div class="a" style="left:3055.5px;top:323.0px;width:62.5px;height:1.3px;background:#1d3f6a;"></div>
<div class="a" style="left:2992.0px;top:133.0px;width:62.4px;height:1.5px;background:#2a6fc0;"></div>
<div class="a" style="left:3055.5px;top:133.5px;width:62.5px;height:1.5px;background:#2a6fc0;"></div>
<div class="a" style="left:2979.0px;top:133.7px;width:8.5px;height:1.6px;background:#d0d0d0;"></div>
<div class="a" style="left:3122.5px;top:133.7px;width:8.5px;height:1.6px;background:#d0d0d0;"></div>
<div class="a t" style="left:2937px;top:127.5px;width:36px;text-align:right;font-size:14px;font-weight:bold;color:#cfcfcf">0</div>
<div class="a t" style="left:3137px;top:127.5px;font-size:14px;font-weight:bold;color:#cfcfcf">0</div>
<div class="a" style="left:2992.0px;top:287.0px;width:126.0px;height:1.2px;background:rgba(0,60,60,.28);"></div>
<div class="a" style="left:2979.0px;top:286.8px;width:8.5px;height:1.6px;background:#d0d0d0;"></div>
<div class="a" style="left:3122.5px;top:286.8px;width:8.5px;height:1.6px;background:#d0d0d0;"></div>
<div class="a t" style="left:2937px;top:280.6px;width:36px;text-align:right;font-size:14px;font-weight:bold;color:#cfcfcf">5</div>
<div class="a t" style="left:3137px;top:280.6px;font-size:14px;font-weight:bold;color:#cfcfcf">5</div>
<div class="a" style="left:2992.0px;top:441.0px;width:126.0px;height:1.2px;background:rgba(0,60,60,.28);"></div>
<div class="a" style="left:2979.0px;top:440.8px;width:8.5px;height:1.6px;background:#d0d0d0;"></div>
<div class="a" style="left:3122.5px;top:440.8px;width:8.5px;height:1.6px;background:#d0d0d0;"></div>
<div class="a t" style="left:2937px;top:434.6px;width:36px;text-align:right;font-size:14px;font-weight:bold;color:#cfcfcf">10</div>
<div class="a t" style="left:3137px;top:434.6px;font-size:14px;font-weight:bold;color:#cfcfcf">10</div>
<div class="a" style="left:2992.0px;top:594.4px;width:126.0px;height:1.2px;background:rgba(0,60,60,.28);"></div>
<div class="a" style="left:2979.0px;top:594.2px;width:8.5px;height:1.6px;background:#d0d0d0;"></div>
<div class="a" style="left:3122.5px;top:594.2px;width:8.5px;height:1.6px;background:#d0d0d0;"></div>
<div class="a t" style="left:2937px;top:588.0px;width:36px;text-align:right;font-size:14px;font-weight:bold;color:#cfcfcf">15</div>
<div class="a t" style="left:3137px;top:588.0px;font-size:14px;font-weight:bold;color:#cfcfcf">15</div>
<div class="a" style="left:2992.0px;top:748.4px;width:126.0px;height:1.2px;background:rgba(0,60,60,.28);"></div>
<div class="a" style="left:2979.0px;top:748.2px;width:8.5px;height:1.6px;background:#d0d0d0;"></div>
<div class="a" style="left:3122.5px;top:748.2px;width:8.5px;height:1.6px;background:#d0d0d0;"></div>
<div class="a t" style="left:2937px;top:742.0px;width:36px;text-align:right;font-size:14px;font-weight:bold;color:#cfcfcf">20</div>
<div class="a t" style="left:3137px;top:742.0px;font-size:14px;font-weight:bold;color:#cfcfcf">20</div>
<div class="a" style="left:2992.0px;top:878.4px;width:126.0px;height:1.2px;background:rgba(0,60,60,.28);"></div>
<div class="a" style="left:2979.0px;top:878.2px;width:8.5px;height:1.6px;background:#d0d0d0;"></div>
<div class="a" style="left:3122.5px;top:878.2px;width:8.5px;height:1.6px;background:#d0d0d0;"></div>
<div class="a t" style="left:2937px;top:872.0px;width:36px;text-align:right;font-size:14px;font-weight:bold;color:#cfcfcf">25</div>
<div class="a t" style="left:3137px;top:872.0px;font-size:14px;font-weight:bold;color:#cfcfcf">25</div>
<div class="a" style="left:2992.0px;top:993.4px;width:126.0px;height:1.2px;background:rgba(0,60,60,.28);"></div>
<div class="a" style="left:2979.0px;top:993.2px;width:8.5px;height:1.6px;background:#d0d0d0;"></div>
<div class="a" style="left:3122.5px;top:993.2px;width:8.5px;height:1.6px;background:#d0d0d0;"></div>
<div class="a t" style="left:2937px;top:987.0px;width:36px;text-align:right;font-size:14px;font-weight:bold;color:#cfcfcf">30</div>
<div class="a t" style="left:3137px;top:987.0px;font-size:14px;font-weight:bold;color:#cfcfcf">30</div>
<div class="a" style="left:2992.0px;top:1095.1px;width:126.0px;height:1.2px;background:rgba(0,60,60,.28);"></div>
<div class="a" style="left:2979.0px;top:1094.9px;width:8.5px;height:1.6px;background:#d0d0d0;"></div>
<div class="a" style="left:3122.5px;top:1094.9px;width:8.5px;height:1.6px;background:#d0d0d0;"></div>
<div class="a t" style="left:2937px;top:1088.7px;width:36px;text-align:right;font-size:14px;font-weight:bold;color:#cfcfcf">35</div>
<div class="a t" style="left:3137px;top:1088.7px;font-size:14px;font-weight:bold;color:#cfcfcf">35</div>
<div class="a" style="left:2992.0px;top:1180.1px;width:126.0px;height:1.2px;background:rgba(0,60,60,.28);"></div>
<div class="a" style="left:2979.0px;top:1179.9px;width:8.5px;height:1.6px;background:#d0d0d0;"></div>
<div class="a" style="left:3122.5px;top:1179.9px;width:8.5px;height:1.6px;background:#d0d0d0;"></div>
<div class="a t" style="left:2937px;top:1173.7px;width:36px;text-align:right;font-size:14px;font-weight:bold;color:#cfcfcf">40</div>
<div class="a t" style="left:3137px;top:1173.7px;font-size:14px;font-weight:bold;color:#cfcfcf">40</div>
<div class="a" style="left:2992.0px;top:1304.4px;width:126.0px;height:1.2px;background:rgba(0,60,60,.28);"></div>
<div class="a" style="left:2979.0px;top:1304.2px;width:8.5px;height:1.6px;background:#d0d0d0;"></div>
<div class="a" style="left:3122.5px;top:1304.2px;width:8.5px;height:1.6px;background:#d0d0d0;"></div>
<div class="a t" style="left:2937px;top:1298.0px;width:36px;text-align:right;font-size:14px;font-weight:bold;color:#cfcfcf">50</div>
<div class="a t" style="left:3137px;top:1298.0px;font-size:14px;font-weight:bold;color:#cfcfcf">50</div>
<div class="a" style="left:2992.0px;top:1353.4px;width:126.0px;height:1.2px;background:rgba(0,60,60,.28);"></div>
<div class="a" style="left:2979.0px;top:1353.2px;width:8.5px;height:1.6px;background:#d0d0d0;"></div>
<div class="a" style="left:3122.5px;top:1353.2px;width:8.5px;height:1.6px;background:#d0d0d0;"></div>
<div class="a t" style="left:2937px;top:1347.0px;width:36px;text-align:right;font-size:14px;font-weight:bold;color:#cfcfcf">60</div>
<div class="a t" style="left:3137px;top:1347.0px;font-size:14px;font-weight:bold;color:#cfcfcf">60</div>
<div class="a" style="left:2982.0px;top:164.4px;width:5.0px;height:1.6px;background:#d0d0d0;"></div>
<div class="a" style="left:3122.5px;top:164.4px;width:5.0px;height:1.6px;background:#d0d0d0;"></div>
<div class="a" style="left:2982.0px;top:195.1px;width:5.0px;height:1.6px;background:#d0d0d0;"></div>
<div class="a" style="left:3122.5px;top:195.1px;width:5.0px;height:1.6px;background:#d0d0d0;"></div>
<div class="a" style="left:2982.0px;top:225.8px;width:5.0px;height:1.6px;background:#d0d0d0;"></div>
<div class="a" style="left:3122.5px;top:225.8px;width:5.0px;height:1.6px;background:#d0d0d0;"></div>
<div class="a" style="left:2982.0px;top:256.5px;width:5.0px;height:1.6px;background:#d0d0d0;"></div>
<div class="a" style="left:3122.5px;top:256.5px;width:5.0px;height:1.6px;background:#d0d0d0;"></div>
<div class="a" style="left:2982.0px;top:317.9px;width:5.0px;height:1.6px;background:#d0d0d0;"></div>
<div class="a" style="left:3122.5px;top:317.9px;width:5.0px;height:1.6px;background:#d0d0d0;"></div>
<div class="a" style="left:2982.0px;top:348.6px;width:5.0px;height:1.6px;background:#d0d0d0;"></div>
<div class="a" style="left:3122.5px;top:348.6px;width:5.0px;height:1.6px;background:#d0d0d0;"></div>
<div class="a" style="left:2982.0px;top:379.3px;width:5.0px;height:1.6px;background:#d0d0d0;"></div>
<div class="a" style="left:3122.5px;top:379.3px;width:5.0px;height:1.6px;background:#d0d0d0;"></div>
<div class="a" style="left:2982.0px;top:410.0px;width:5.0px;height:1.6px;background:#d0d0d0;"></div>
<div class="a" style="left:3122.5px;top:410.0px;width:5.0px;height:1.6px;background:#d0d0d0;"></div>
<div class="a" style="left:2982.0px;top:471.4px;width:5.0px;height:1.6px;background:#d0d0d0;"></div>
<div class="a" style="left:3122.5px;top:471.4px;width:5.0px;height:1.6px;background:#d0d0d0;"></div>
<div class="a" style="left:2982.0px;top:502.1px;width:5.0px;height:1.6px;background:#d0d0d0;"></div>
<div class="a" style="left:3122.5px;top:502.1px;width:5.0px;height:1.6px;background:#d0d0d0;"></div>
<div class="a" style="left:2982.0px;top:532.8px;width:5.0px;height:1.6px;background:#d0d0d0;"></div>
<div class="a" style="left:3122.5px;top:532.8px;width:5.0px;height:1.6px;background:#d0d0d0;"></div>
<div class="a" style="left:2982.0px;top:563.5px;width:5.0px;height:1.6px;background:#d0d0d0;"></div>
<div class="a" style="left:3122.5px;top:563.5px;width:5.0px;height:1.6px;background:#d0d0d0;"></div>
<div class="a" style="left:2982.0px;top:625.0px;width:5.0px;height:1.6px;background:#d0d0d0;"></div>
<div class="a" style="left:3122.5px;top:625.0px;width:5.0px;height:1.6px;background:#d0d0d0;"></div>
<div class="a" style="left:2982.0px;top:655.8px;width:5.0px;height:1.6px;background:#d0d0d0;"></div>
<div class="a" style="left:3122.5px;top:655.8px;width:5.0px;height:1.6px;background:#d0d0d0;"></div>
<div class="a" style="left:2982.0px;top:686.6px;width:5.0px;height:1.6px;background:#d0d0d0;"></div>
<div class="a" style="left:3122.5px;top:686.6px;width:5.0px;height:1.6px;background:#d0d0d0;"></div>
<div class="a" style="left:2982.0px;top:717.4px;width:5.0px;height:1.6px;background:#d0d0d0;"></div>
<div class="a" style="left:3122.5px;top:717.4px;width:5.0px;height:1.6px;background:#d0d0d0;"></div>
<div class="a" style="left:2982.0px;top:1249.2px;width:5.0px;height:1.6px;background:#d0d0d0;"></div>
<div class="a" style="left:3122.5px;top:1249.2px;width:5.0px;height:1.6px;background:#d0d0d0;"></div>
<div class="a" style="left:2926.7px;top:1419.0px;width:256.7px;height:63.0px;background:#18191b;border-radius:8px"></div>
<div class="a t" style="left:2971px;top:1431px;width:80px;text-align:center;font-size:13.5px;color:#e0e0e0">RMS Max.</div>
<div class="a t" style="left:3059px;top:1431px;width:80px;text-align:center;font-size:13.5px;color:#e0e0e0">Peak Max.</div>
<div class="a t" style="left:2971px;top:1457.5px;width:80px;text-align:center;font-size:13.5px;color:#e0e0e0">-5.2</div>
<div class="a t" style="left:3059px;top:1457.5px;width:80px;text-align:center;font-size:13.5px;color:#e0e0e0">-0.1</div>
<div class="a" style="left:2927.0px;top:1494.0px;width:256.0px;height:19.0px;background:#6a6b6d;border:1px solid #7a7b7d;border-radius:4px"></div>
<div class="a" style="left:3163.0px;top:1494.5px;width:1.0px;height:18.0px;background:#4a4b4d;"></div>
<svg class="sv" style="left:2933px;top:1500px;width:8px;height:8px"><path d="M0 0h8L4 7z" fill="#e8e8e8"/></svg>
<div class="a t" style="left:2947.0px;top:1497.0px;font-size:13.5px;color:#f0f0f0;font-weight:bold;">Main</div>
<div class="a t" style="left:3122.0px;top:1497.5px;font-size:13px;color:#ececec;font-weight:normal;">stereo</div>
<svg class="sv" style="left:3164px;top:1498px;width:18px;height:11px"><path d="M0 5.5L5 1v9zM18 5.5L13 1v9z" fill="#4ea6f0"/><circle cx="9" cy="5.5" r="2" fill="#4ea6f0"/><path d="M4 5.5h10" stroke="#4ea6f0"/></svg>
<div class="a" style="left:2927.7px;top:1523.0px;width:254.0px;height:8.0px;background:#1d1f21;border:1px solid #3a3c3e;border-radius:3px 3px 0 0"></div>
<div class="a" style="left:2930.0px;top:1525.5px;width:172.0px;height:2.2px;background:#f39a37;"></div>
<div class="a" style="left:2927.7px;top:1530.5px;width:254.0px;height:19.0px;background:#f39a37;border-radius:0 0 4px 4px"></div>
<div class="a t" style="left:2927px;top:1534px;width:254px;text-align:center;font-size:12.5px;color:#2a1a08">Mix</div>
<div class="a" style="left:2927.5px;top:1560.0px;width:26.5px;height:27.0px;background:#d3d3d3;border-radius:4px"></div>
<svg class="sv" style="left:2932px;top:1565px;width:16px;height:16px"><path d="M2 15L6 2h3l4 13z" stroke="#1a1a1a" stroke-width="2" fill="none"/><path d="M7 10l6-8" stroke="#1a1a1a" stroke-width="1.8"/></svg>
<div class="a" style="left:2957.8px;top:1560.0px;width:26.2px;height:27.0px;background:#d3d3d3;border-radius:4px"></div>
<div class="gl" style="left:2963.5px;top:1565px;font-size:17px;color:#1a1a1a">L</div>
<div class="a" style="left:2927.5px;top:1598.0px;width:56.5px;height:25.5px;background:#3a3d40;border:1px solid #48494b;border-radius:4px"></div>
<svg class="sv" style="left:2948px;top:1603px;width:15px;height:15px"><circle cx="7.5" cy="7.5" r="6" stroke="#d8d8d8" stroke-width="1.6" fill="none"/><path d="M3.5 10L10 3.5V10z" fill="#d8d8d8"/></svg>
<div class="a" style="left:2927.5px;top:1635.7px;width:56.5px;height:25.3px;background:#3a3d40;border:1px solid #48494b;border-radius:4px"></div>
<div class="a t" style="left:2927.5px;top:1641.5px;width:56.5px;text-align:center;font-size:14px;color:#e0e0e0">Dim</div>
<svg class="sv" style="left:3024px;top:1562px;width:72px;height:72px"><circle cx="36" cy="36" r="35" fill="#1a1b1d"/><path d="M15 57A30 30 0 1 1 63 26" stroke="#f0433f" stroke-width="5" fill="none"/><path d="M63 26A30 30 0 0 1 57 57" stroke="#3a3b3d" stroke-width="5" fill="none"/><circle cx="36" cy="36" r="22.5" fill="#4a3a3a" stroke="#f0433f" stroke-width="1.6"/><path d="M43 33L54 30" stroke="#e0e0e0" stroke-width="5" stroke-linecap="round"/></svg>
<div class="a" style="left:3034.0px;top:1640.5px;width:52.6px;height:19.2px;background:#161719;border:1px solid #4a4c4e;border-radius:3px"></div>
<div class="a t" style="left:3034px;top:1645px;width:52.6px;text-align:center;font-size:12px;color:#e8e8e8">0.00 dB</div>
<div class="a" style="left:3129.6px;top:1556.4px;width:51.0px;height:109.6px;background:#17181a;border-radius:3px"></div>
<div class="a" style="left:3133.0px;top:1570.0px;width:21.0px;height:87.0px;background:linear-gradient(#3df29e,#30dcd6 60%,#29d2fc);"></div>
<div class="a" style="left:3155.5px;top:1568.0px;width:21.0px;height:89.0px;background:linear-gradient(#3df29e,#30dcd6 60%,#29d2fc);"></div>
<div class="a" style="left:3133.0px;top:1584.0px;width:43.5px;height:0.8px;background:rgba(0,60,60,.35);"></div>
<div class="a" style="left:3133.0px;top:1596.0px;width:43.5px;height:0.8px;background:rgba(0,60,60,.35);"></div>
<div class="a" style="left:3133.0px;top:1608.0px;width:43.5px;height:0.8px;background:rgba(0,60,60,.35);"></div>
<div class="a" style="left:3133.0px;top:1620.0px;width:43.5px;height:0.8px;background:rgba(0,60,60,.35);"></div>
<div class="a" style="left:3133.0px;top:1632.0px;width:43.5px;height:0.8px;background:rgba(0,60,60,.35);"></div>
<div class="a" style="left:3133.0px;top:1644.0px;width:43.5px;height:0.8px;background:rgba(0,60,60,.35);"></div>
<div class="a" style="left:2927.5px;top:1672.0px;width:98.8px;height:20.3px;background:#d3d3d3;border-radius:4px"></div>
<div class="a t" style="left:2927.5px;top:1676px;width:98.8px;text-align:center;font-size:13px;color:#1a1a1a">A</div>
<div class="a" style="left:3029.5px;top:1672.0px;width:152.5px;height:20.3px;background:#474a4d;border:1px solid #55585b;border-radius:4px"></div>
<div class="a t" style="left:3040.0px;top:1676.0px;font-size:13px;color:#e0e0e0;font-weight:normal;">1</div>
<div class="a t" style="left:3102.0px;top:1676.0px;font-size:13px;color:#e0e0e0;font-weight:normal;">Stereo</div>
<svg class="sv" style="left:2929px;top:1703px;width:7px;height:8px"><path d="M0 0v8l7-4z" fill="#e0e0e0"/></svg>
<div class="a t" style="left:2942.0px;top:1701.0px;font-size:13px;color:#e0e0e0;font-weight:bold;">Levels</div>
<div class="a" style="left:2984.0px;top:1708.0px;width:98.0px;height:1.2px;background:#4a4c4e;"></div>
<div class="a" style="left:2984.0px;top:1708.0px;width:198.0px;height:1.2px;background:#4a4c4e;"></div>
<div class="a" style="left:2917.6px;top:1731.0px;width:82.0px;height:21.0px;background:#25282b;"></div>
<div class="a" style="left:2999.5px;top:1731.0px;width:104.0px;height:21.0px;background:#1b1d1f;border-radius:4px 4px 0 0"></div>
<div class="a t" style="left:2937.0px;top:1736.0px;font-size:13.5px;color:#e0e0e0;font-weight:bold;">Master</div>
<div class="a t" style="left:3022.0px;top:1736.0px;font-size:13.5px;color:#e0e0e0;font-weight:bold;">Loudness</div>
<div class="a" style="left:4.2px;top:1765.4px;width:26.5px;height:24.9px;background:#48494b;border:1px solid #55585b;border-radius:4px;"></div>
<svg class="sv" style="left:9px;top:1769px;width:17px;height:17px"><circle cx="8.5" cy="8.5" r="7" stroke="#e0e0e0" stroke-width="2" fill="none" stroke-dasharray="10 2"/><circle cx="8.5" cy="8.5" r="3.8" stroke="#e0e0e0" stroke-width="1.6" fill="none"/></svg>
<div class="a" style="left:36.6px;top:1765.4px;width:46.1px;height:24.9px;background:#1c1e20;border:1px solid #3a3d40;border-radius:4px"></div>
<svg class="sv" style="left:42.1px;top:1770px;width:16px;height:16px"><circle cx="8" cy="8" r="6.5" fill="#e0e0e0"/></svg>
<svg class="sv" style="left:65.6px;top:1774px;width:10px;height:9px"><path d="M0 0h10L5 9z" fill="#e8e8e8"/></svg>
<div class="a" style="left:85.7px;top:1771.5px;width:3px;height:12px;background:repeating-linear-gradient(#d0d0d0 0 2.5px,transparent 2.5px 4.6px)"></div>
<div class="a" style="left:95.0px;top:1765.4px;width:46.4px;height:24.9px;background:#1c1e20;border:1px solid #3a3d40;border-radius:4px"></div>
<svg class="sv" style="left:100.5px;top:1770px;width:16px;height:16px"><path d="M0 8h2l1.5-5 1.5 10 1.5-13 1.5 15 1.5-11 1.5 8 1.5-6 1.5 3H16" stroke="#e0e0e0" stroke-width="1.6" fill="none"/></svg>
<svg class="sv" style="left:124px;top:1774px;width:10px;height:9px"><path d="M0 0h10L5 9z" fill="#e8e8e8"/></svg>
<div class="a" style="left:144.4px;top:1771.5px;width:3px;height:12px;background:repeating-linear-gradient(#d0d0d0 0 2.5px,transparent 2.5px 4.6px)"></div>
<div class="a" style="left:153.7px;top:1765.4px;width:45.9px;height:24.9px;background:#1c1e20;border:1px solid #3a3d40;border-radius:4px"></div>
<svg class="sv" style="left:159.2px;top:1770px;width:16px;height:16px"><circle cx="8" cy="8" r="7" fill="#e0e0e0"/><circle cx="4.5" cy="7" r="1" fill="#333"/><circle cx="8" cy="4.5" r="1" fill="#333"/><circle cx="11.5" cy="7" r="1" fill="#333"/></svg>
<svg class="sv" style="left:182.7px;top:1774px;width:10px;height:9px"><path d="M0 0h10L5 9z" fill="#e8e8e8"/></svg>
<div class="a" style="left:202.6px;top:1771.5px;width:3px;height:12px;background:repeating-linear-gradient(#d0d0d0 0 2.5px,transparent 2.5px 4.6px)"></div>
<div class="a" style="left:212.0px;top:1765.4px;width:39.6px;height:24.9px;background:#48494b;border:1px solid #55585b;border-radius:4px;"></div>
<div class="gl" style="left:220.5px;top:1771px;font-size:15px;font-weight:normal;color:#e8e8e8">AQ</div>
<div class="a" style="left:1329.3px;top:1762.0px;width:211.2px;height:32.7px;background:#6b6c6e;border:1.5px solid #cfd0d1;border-radius:5px"></div>
<div class="a" style="left:1330.8px;top:1763.5px;width:51.0px;height:29.7px;background:#8b73e6;border-radius:3.5px 0 0 3.5px"></div>
<div class="a" style="left:1434.5px;top:1763.5px;width:53.0px;height:29.7px;background:#39d93a;"></div>
<svg class="sv" style="left:1343px;top:1769px;width:24px;height:18px"><path d="M3 16h13q5 0 5-5t-5-5h-5l-7 9" stroke="#1a1a1a" stroke-width="2.6" fill="none"/></svg>
<svg class="sv" style="left:1400px;top:1771px;width:16px;height:16px"><rect x="1.5" y="1.5" width="13" height="13" stroke="#f0f0f0" stroke-width="2.4" fill="none"/></svg>
<svg class="sv" style="left:1452px;top:1770px;width:16px;height:18px"><path d="M2 1.5L14 9L2 16.5z" stroke="#111" stroke-width="2.4" fill="none" stroke-linejoin="round"/></svg>
<svg class="sv" style="left:1505px;top:1770px;width:18px;height:18px"><circle cx="9" cy="9" r="7" stroke="#f0f0f0" stroke-width="2.4" fill="none"/></svg>
<div class="a" style="left:1543.5px;top:1772px;width:3px;height:12px;background:repeating-linear-gradient(#d0d0d0 0 2.5px,transparent 2.5px 4.6px)"></div>
<div class="a" style="left:1552.7px;top:1765.4px;width:40.0px;height:25.6px;background:#3a3d40;border:1px solid #55585b;border-radius:4px;"></div>
<svg class="sv" style="left:1563px;top:1770px;width:18px;height:16px"><circle cx="9" cy="8" r="7" fill="#6a6c6e"/><circle cx="12" cy="8" r="6" fill="#3a3d40"/><circle cx="6" cy="8" r="3.5" fill="#6a6c6e"/></svg>
<div class="a" style="left:1599.0px;top:1765.4px;width:158.0px;height:25.6px;background:#1c1e20;border:1px solid #3a3d40;border-radius:4px"></div>
<div class="a" style="left:1624.7px;top:1766.0px;width:1.0px;height:24.5px;background:#3a3d40;"></div>
<svg class="sv" style="left:1606px;top:1770px;width:12px;height:17px"><path d="M9 1v12" stroke="#e0e0e0" stroke-width="1.6"/><ellipse cx="5.5" cy="13.5" rx="4.5" ry="3" fill="#e0e0e0"/></svg>
<div class="a t" style="left:1630px;top:1771px;width:122px;text-align:right;font-size:15.5px;color:#e8e8e8;word-spacing:2px">50.&nbsp; 3.&nbsp; 3.107</div>
<div class="a" style="left:1760px;top:1772px;width:3px;height:12px;background:repeating-linear-gradient(#d0d0d0 0 2.5px,transparent 2.5px 4.6px)"></div>
<div class="a" style="left:1770.0px;top:1765.4px;width:191.7px;height:25.6px;background:#1c1e20;border:1px solid #3a3d40;border-radius:4px"></div>
<div class="a" style="left:1770.5px;top:1766.0px;width:25.5px;height:24.5px;background:#d3d3d3;border-radius:3.5px 0 0 3.5px"></div>
<svg class="sv" style="left:1775px;top:1769px;width:16px;height:18px"><path d="M6 1v12" stroke="#1a1a1a" stroke-width="1.8"/><ellipse cx="3.5" cy="13.5" rx="3.5" ry="2.6" fill="#1a1a1a"/><path d="M10 5l3-4 3 4M10 12l3 4 3-4M13 1v15" stroke="#1a1a1a" stroke-width="1.5" fill="none"/></svg>
<div class="a t" style="left:1803.0px;top:1771.0px;font-size:15.5px;color:#e8e8e8;font-weight:normal;">170.000</div>
<svg class="sv" style="left:1864px;top:1769px;width:10px;height:18px"><path d="M0 7L5 0L10 7zM0 10h10L5 17z" fill="#e0e0e0"/></svg>
<div class="a" style="left:1881.5px;top:1766.0px;width:54.5px;height:24.5px;background:#3a3d40;"></div>
<div class="a t" style="left:1895.0px;top:1771.0px;font-size:15.5px;color:#c8c8c8;font-weight:normal;">Tap</div>
<svg class="sv" style="left:1943px;top:1774px;width:11px;height:9px"><path d="M0 0h11L5.5 9z" fill="#e8e8e8"/></svg>
<div class="a" style="left:1964px;top:1772px;width:3px;height:12px;background:repeating-linear-gradient(#d0d0d0 0 2.5px,transparent 2.5px 4.6px)"></div>
<div class="a" style="left:3035.7px;top:1765.0px;width:45.8px;height:25.5px;background:#3a3d40;border:1px solid #48494b;border-radius:4px"></div>
<div class="a" style="left:3060.0px;top:1765.5px;width:1.0px;height:24.5px;background:#2a2c2e;"></div>
<svg class="sv" style="left:3040px;top:1769px;width:16px;height:16px"><path d="M2 15L6 2h3l4 13z" stroke="#e0e0e0" stroke-width="2" fill="none"/><path d="M7 10l6-8" stroke="#e0e0e0" stroke-width="1.8"/></svg>
<svg class="sv" style="left:3064px;top:1771px;width:13px;height:13px"><circle cx="6.5" cy="6.5" r="4" stroke="#e0e0e0" stroke-width="3" fill="none" stroke-dasharray="2 1.2"/></svg>
<div class="a" style="left:3084.5px;top:1771.5px;width:3px;height:12px;background:repeating-linear-gradient(#d0d0d0 0 2.5px,transparent 2.5px 4.6px)"></div>
<div class="a" style="left:3093.7px;top:1765.0px;width:94.3px;height:25.5px;background:#17181a;border:1px solid #3a3d40;border-radius:4px"></div>
<div class="a" style="left:3121.0px;top:1767.0px;width:1.0px;height:21.0px;background:#3a3d40;"></div>
<div class="a" style="left:3159.0px;top:1769.5px;width:6.5px;height:16.5px;background:linear-gradient(#3de6b5,#29d2fc);"></div>
<div class="a" style="left:3167.0px;top:1768.5px;width:6.5px;height:17.5px;background:linear-gradient(#3de6b5,#29d2fc);"></div>
<div class="a" style="left:3191px;top:1771.5px;width:3px;height:12px;background:repeating-linear-gradient(#d0d0d0 0 2.5px,transparent 2.5px 4.6px)"></div>
<div class="a" style="left:133px;top:49px;width:437px;height:35px;background:#212528"></div>
<div class="bx" style="left:137.7px;top:53.7px;width:52.3px;height:19.7px;background:#3a3d40"></div>
<div class="a" style="left:142px;top:54px;font-size:20px;color:#e8e8e8;font-weight:bold;line-height:1">+</div>
<svg class="sv" style="left:162px;top:57px;width:16px;height:14px"><circle cx="6" cy="6" r="5" fill="#cfcfcf"/><path d="M8 7h8M8 10h8M8 13h8" stroke="#cfcfcf" stroke-width="1.5"/></svg>
<div class="bx" style="left:410px;top:53.7px;width:118.6px;height:19.7px;background:#1b1d1f"></div>
<div class="a" style="left:410.5px;top:54.2px;width:65px;height:18.7px;background:#3a3d40;border-radius:3px 0 0 3px"></div>
<div class="a" style="left:414px;top:58.5px;font-size:12.5px;color:#cfcfcf;line-height:1">90 / 91</div>
<svg class="sv" style="left:482px;top:56px;width:14px;height:14px"><path d="M1 7L7 1L13 7V13H1z" stroke="#f0962e" stroke-width="1.8" fill="none"/><path d="M4 9h6M5 6h4" stroke="#f0962e" stroke-width="1.4"/></svg>
<div class="a" style="left:502px;top:54.2px;width:1px;height:18.7px;background:#2c2f32"></div>
<svg class="sv" style="left:509px;top:56px;width:12px;height:14px"><path d="M0 1h12L7 7v6H5V7z" fill="#d0d0d0"/></svg>
<div class="bx" style="left:540.5px;top:53.7px;width:26px;height:19.7px;background:#3a3d40"></div>
<svg class="sv" style="left:546px;top:57px;width:14px;height:14px"><circle cx="8.5" cy="5.5" r="4" stroke="#e0e0e0" stroke-width="1.8" fill="none"/><path d="M5.5 8.5L1 13" stroke="#e0e0e0" stroke-width="2"/></svg>
<div class="a" style="left:137px;top:82.2px;width:432px;height:2.2px;background:#7d8083"></div>
<div class="a" style="left:137px;top:78.8px;width:432px;height:1.4px;background:#5d6063"></div>
<div class="a" style="left:137px;top:78.8px;width:43px;height:1.6px;background:#d0342c"></div>
<div class="a" style="left:341px;top:82px;width:24px;height:2.5px;background:repeating-linear-gradient(90deg,#e8e8e8 0 3.5px,transparent 3.5px 5.5px)"></div>
<div class="a" style="left:569.8px;top:52px;width:2.5px;height:1683px;background:#6b6e70"></div>
<div class="a" style="left:0;top:84.4px;width:570px;height:1646.6px;overflow:hidden"><div class="a" style="left:0;top:-84.4px;width:570px;height:1800px">
<div class="a" style="left:136.6px;top:84.4px;width:43.5px;height:7.9px;background:#e6b83c"></div>
<div class="a" style="left:192px;top:84.4px;width:366px;height:7.9px;background:#212427"></div>
<div class="a" style="left:557.5px;top:84.4px;width:11.5px;height:7.9px;background:#000"></div>
<div class="bx" style="left:245.5px;top:78px;width:48.5px;height:10.5px"></div><div class="bx" style="left:298px;top:78px;width:50.6px;height:10.5px"></div>
<div class="r" style="top:92.3px">
<div class="mt"></div>
<div class="cs" style="background:#e6b83c"></div>
<div class="rb"></div>
<div class="cc" style="background:#e6b83c"></div>
<svg class="sv" style="left:152px;top:6.5px;width:16px;height:14px;"><use href="#igrp"/></svg>
<div class="num" style="right:384px">1</div>
<div class="bx ms"></div>
<div class="gl" style="left:203.7px;top:6.3px;">M</div>
<div class="gl" style="left:232px;top:6.3px;">S</div>
<div class="nm">GROUP Main Drums</div>
<div class="bx vb"></div>
<svg class="sv" style="left:446px;top:6.5px;width:12.5px;height:10px;"><use href="#ivol"/></svg>
<div class="st" style="top:10.2px"></div><div class="sf" style="top:10.2px;width:43.4px"></div>
<div class="kn" style="left:502.6px;top:7.2px"></div>
<div class="bx g1"></div><div class="bx g2"></div><div class="bx gv"></div>
<div class="gl" style="left:264px;top:28.8px;">R</div>
<div class="gl" style="left:287.5px;top:28.8px;">W</div>
<svg class="sv" style="left:317px;top:29.5px;width:12px;height:12px;"><use href="#ie"/></svg>
<svg class="sv" style="left:338px;top:30.5px;width:16px;height:10px;"><use href="#iinf"/></svg>
<div class="gl" style="left:390px;top:30px;font-weight:normal;font-size:13px;color:#c2c2c2">-5.00</div>
<svg class="sv" style="left:427px;top:28.5px;width:8px;height:14px;"><use href="#iud"/></svg>
<div class="bx pb"></div>
<svg class="sv" style="left:446px;top:31px;width:13.5px;height:9px;"><use href="#ipan"/></svg>
<div class="st" style="top:32.6px"></div>
<div class="kn" style="left:496.4px;top:29.5px"></div>
</div>
<div class="mb" style="left:558.8px;top:102.3px;height:37.5px"></div>
<div class="mb" style="left:563.5px;top:102.3px;height:37.5px"></div>
<div class="r" style="top:141.2px">
<div class="mt"></div>
<div class="cs" style="background:#e6b83c"></div>
<div class="rb"></div>
<div class="cc" style="background:#e6b83c"></div>
<svg class="sv" style="left:153px;top:6.5px;width:15px;height:13px;"><use href="#ipia"/></svg>
<div class="num" style="right:384px">2</div>
<div class="bx ms"></div>
<div class="gl" style="left:203.7px;top:6.3px;">M</div>
<div class="gl" style="left:232px;top:6.3px;">S</div>
<div class="nm">Main Drum Kit</div>
<div class="bx vb"></div>
<svg class="sv" style="left:446px;top:6.5px;width:12.5px;height:10px;"><use href="#ivol"/></svg>
<div class="st" style="top:10.2px"></div><div class="sf" style="top:10.2px;width:49.5px"></div>
<div class="kn" style="left:508.7px;top:7.2px"></div>
<div class="bx g1"></div><div class="bx g2"></div><div class="bx g3"></div><div class="bx g4"></div>
<svg class="sv" style="left:264.5px;top:30.5px;width:10px;height:10px;"><use href="#irec"/></svg>
<svg class="sv" style="left:287.5px;top:30px;width:14px;height:12px;"><use href="#ispk"/></svg>
<svg class="sv" style="left:317px;top:29.5px;width:12px;height:12px;"><use href="#ie"/></svg>
<svg class="sv" style="left:340.5px;top:30px;width:13px;height:11px;"><use href="#ikey"/></svg>
<div class="gl" style="left:369.5px;top:28.8px;">R</div>
<div class="gl" style="left:393.5px;top:28.8px;">W</div>
<svg class="sv" style="left:422px;top:29.5px;width:12px;height:11px;"><use href="#ilst"/></svg>
<div class="bx pb"></div>
<svg class="sv" style="left:446px;top:31px;width:13.5px;height:9px;"><use href="#ipan"/></svg>
<div class="st" style="top:32.6px"></div>
<div class="kn" style="left:496.4px;top:29.5px"></div>
</div>
<div class="r" style="top:190.1px">
<div class="mt"></div>
<div class="cs" style="background:#e6b83c"></div>
<div class="rb"></div>
<div class="cc" style="background:#e6b83c"></div>
<svg class="sv" style="left:152px;top:6.5px;width:16px;height:14px;"><use href="#ihat"/></svg>
<div class="num" style="right:384px">12</div>
<div class="bx ms"></div>
<div class="gl" style="left:203.7px;top:6.3px;">M</div>
<div class="gl" style="left:232px;top:6.3px;">S</div>
<div class="nm">DR Hat Layer</div>
<div class="bx vb"></div>
<svg class="sv" style="left:446px;top:6.5px;width:12.5px;height:10px;"><use href="#ivol"/></svg>
<div class="st" style="top:10.2px"></div><div class="sf" style="top:10.2px;width:33.4px"></div>
<div class="kn" style="left:492.6px;top:7.2px"></div>
<div class="bx g1"></div><div class="bx g2"></div><div class="bx g3"></div><div class="bx g4"></div>
<svg class="sv" style="left:264.5px;top:30.5px;width:10px;height:10px;"><use href="#irec"/></svg>
<svg class="sv" style="left:287.5px;top:30px;width:14px;height:12px;"><use href="#ispk"/></svg>
<svg class="sv" style="left:317px;top:29.5px;width:12px;height:12px;"><use href="#ie"/></svg>
<svg class="sv" style="left:340.5px;top:30px;width:13px;height:11px;filter:invert(.8)"><use href="#ihat"/></svg>
<div class="gl" style="left:369.5px;top:28.8px;">R</div>
<div class="gl" style="left:393.5px;top:28.8px;">W</div>
<svg class="sv" style="left:422px;top:29.5px;width:12px;height:11px;"><use href="#ilst"/></svg>
<div class="bx pb"></div>
<svg class="sv" style="left:446px;top:31px;width:13.5px;height:9px;"><use href="#ipan"/></svg>
<div class="st" style="top:32.6px"></div>
<div class="kn" style="left:496.4px;top:29.5px"></div>
</div>
<div class="mb" style="left:558.8px;top:214.1px;height:23.5px"></div>
<div class="mb" style="left:563.5px;top:214.1px;height:23.5px"></div>
<div class="r" style="top:239.1px">
<div class="mt"></div>
<div class="cs" style="background:#e6b83c"></div>
<div class="rb"></div>
<div class="cc" style="background:#e6b83c"></div>
<svg class="sv" style="left:150.5px;top:6.5px;width:18px;height:14px;"><use href="#iwav"/></svg>
<div class="num" style="right:384px">13</div>
<div class="bx ms"></div>
<div class="gl" style="left:203.7px;top:6.3px;">M</div>
<div class="gl" style="left:232px;top:6.3px;">S</div>
<div class="nm">DR Left Crash</div>
<div class="bx vb"></div>
<svg class="sv" style="left:446px;top:6.5px;width:12.5px;height:10px;"><use href="#ivol"/></svg>
<div class="st" style="top:10.2px"></div><div class="sf" style="top:10.2px;width:25.7px"></div>
<div class="kn" style="left:484.9px;top:7.2px"></div>
<div class="bx g1"></div><div class="bx g2"></div><div class="bx g3"></div><div class="bx g4"></div>
<svg class="sv" style="left:264.5px;top:30.5px;width:10px;height:10px;opacity:.55"><use href="#irec"/></svg>
<svg class="sv" style="left:287.5px;top:30px;width:14px;height:12px;opacity:.55"><use href="#ispk"/></svg>
<svg class="sv" style="left:317px;top:29.5px;width:12px;height:12px;"><use href="#ie"/></svg>
<svg class="sv" style="left:338px;top:30.5px;width:16px;height:10px;"><use href="#iinf"/></svg>
<div class="gl" style="left:369.5px;top:28.8px;">R</div>
<div class="gl" style="left:393.5px;top:28.8px;">W</div>
<svg class="sv" style="left:422px;top:29.5px;width:12px;height:11px;"><use href="#ilst"/></svg>
</div>
<div class="mb" style="left:558.8px;top:285.6px;height:1.5px"></div>
<div class="mb" style="left:563.5px;top:285.6px;height:1.5px"></div>
<div class="r" style="top:288.0px">
<div class="mt"></div>
<div class="cs" style="background:#e6b83c"></div>
<div class="rb"></div>
<div class="cc" style="background:#e6b83c"></div>
<svg class="sv" style="left:150.5px;top:6.5px;width:18px;height:14px;"><use href="#iwav"/></svg>
<div class="num" style="right:384px">14</div>
<div class="bx ms"></div>
<div class="gl" style="left:203.7px;top:6.3px;">M</div>
<div class="gl" style="left:232px;top:6.3px;">S</div>
<div class="nm">DR Right Crash</div>
<div class="bx vb"></div>
<svg class="sv" style="left:446px;top:6.5px;width:12.5px;height:10px;"><use href="#ivol"/></svg>
<div class="st" style="top:10.2px"></div><div class="sf" style="top:10.2px;width:25.7px"></div>
<div class="kn" style="left:484.9px;top:7.2px"></div>
<div class="bx g1"></div><div class="bx g2"></div><div class="bx g3"></div><div class="bx g4"></div>
<svg class="sv" style="left:264.5px;top:30.5px;width:10px;height:10px;opacity:.55"><use href="#irec"/></svg>
<svg class="sv" style="left:287.5px;top:30px;width:14px;height:12px;opacity:.55"><use href="#ispk"/></svg>
<svg class="sv" style="left:317px;top:29.5px;width:12px;height:12px;"><use href="#ie"/></svg>
<svg class="sv" style="left:338px;top:30.5px;width:16px;height:10px;"><use href="#iinf"/></svg>
<div class="gl" style="left:369.5px;top:28.8px;">R</div>
<div class="gl" style="left:393.5px;top:28.8px;">W</div>
<svg class="sv" style="left:422px;top:29.5px;width:12px;height:11px;"><use href="#ilst"/></svg>
</div>
<div class="mb" style="left:558.8px;top:334.8px;height:1.2px"></div>
<div class="mb" style="left:563.5px;top:334.8px;height:1.2px"></div>
<div class="r" style="top:336.9px">
<div class="mt"></div>
<div class="cs" style="background:#e6b83c"></div>
<div class="rb"></div>
<div class="cc" style="background:#e6b83c"></div>
<svg class="sv" style="left:150.5px;top:6.5px;width:18px;height:14px;"><use href="#iwav"/></svg>
<div class="num" style="right:384px">15</div>
<div class="bx ms"></div>
<div class="gl" style="left:203.7px;top:6.3px;">M</div>
<div class="gl" style="left:232px;top:6.3px;">S</div>
<div class="nm">PK_4_Tambo_v1</div>
<div class="bx vb"></div>
<svg class="sv" style="left:446px;top:6.5px;width:12.5px;height:10px;"><use href="#ivol"/></svg>
<div class="st" style="top:10.2px"></div><div class="sf" style="top:10.2px;width:25.7px"></div>
<div class="kn" style="left:484.9px;top:7.2px"></div>
<div class="bx g1"></div><div class="bx g2"></div><div class="bx g3"></div><div class="bx g4"></div>
<svg class="sv" style="left:264.5px;top:30.5px;width:10px;height:10px;opacity:.55"><use href="#irec"/></svg>
<svg class="sv" style="left:287.5px;top:30px;width:14px;height:12px;opacity:.55"><use href="#ispk"/></svg>
<svg class="sv" style="left:317px;top:29.5px;width:12px;height:12px;"><use href="#ie"/></svg>
<svg class="sv" style="left:338px;top:30.5px;width:16px;height:10px;"><use href="#iinf"/></svg>
<div class="gl" style="left:369.5px;top:28.8px;">R</div>
<div class="gl" style="left:393.5px;top:28.8px;">W</div>
<svg class="sv" style="left:422px;top:29.5px;width:12px;height:11px;"><use href="#ilst"/></svg>
</div>
<div class="mb" style="left:558.8px;top:366.4px;height:18.5px"></div>
<div class="mb" style="left:563.5px;top:367.9px;height:17.0px"></div>
<div class="r" style="top:385.8px">
<div class="mt"></div>
<div class="cs" style="background:#e6b83c"></div>
<div class="rb"></div>
<div class="cc" style="background:#e6b83c"></div>
<svg class="sv" style="left:150.5px;top:6.5px;width:18px;height:14px;"><use href="#iwav"/></svg>
<div class="num" style="right:384px">16</div>
<div class="bx ms"></div>
<div class="gl" style="left:203.7px;top:6.3px;">M</div>
<div class="gl" style="left:232px;top:6.3px;">S</div>
<div class="nm">VK_3_Tambo_v2</div>
<div class="bx vb"></div>
<svg class="sv" style="left:446px;top:6.5px;width:12.5px;height:10px;"><use href="#ivol"/></svg>
<div class="st" style="top:10.2px"></div><div class="sf" style="top:10.2px;width:28.5px"></div>
<div class="kn" style="left:487.7px;top:7.2px"></div>
<div class="bx g1"></div><div class="bx g2"></div><div class="bx g3"></div><div class="bx g4"></div>
<svg class="sv" style="left:264.5px;top:30.5px;width:10px;height:10px;opacity:.55"><use href="#irec"/></svg>
<svg class="sv" style="left:287.5px;top:30px;width:14px;height:12px;opacity:.55"><use href="#ispk"/></svg>
<svg class="sv" style="left:317px;top:29.5px;width:12px;height:12px;"><use href="#ie"/></svg>
<svg class="sv" style="left:338px;top:30.5px;width:16px;height:10px;"><use href="#iinf"/></svg>
<div class="gl" style="left:369.5px;top:28.8px;">R</div>
<div class="gl" style="left:393.5px;top:28.8px;">W</div>
<svg class="sv" style="left:422px;top:29.5px;width:12px;height:11px;"><use href="#ilst"/></svg>
</div>
<div class="mb" style="left:558.8px;top:418.8px;height:14.5px"></div>
<div class="mb" style="left:563.5px;top:415.8px;height:17.5px"></div>
<div class="r" style="top:434.7px">
<div class="mt"></div>
<div class="cs" style="background:#e6b83c"></div>
<div class="rb"></div>
<div class="cc" style="background:#e6b83c"></div>
<svg class="sv" style="left:152px;top:6.5px;width:16px;height:14px;"><use href="#ihat"/></svg>
<div class="num" style="right:384px">17</div>
<div class="bx ms"></div>
<div class="gl" style="left:203.7px;top:6.3px;">M</div>
<div class="gl" style="left:232px;top:6.3px;">S</div>
<div class="nm">DR Shaker</div>
<div class="bx vb"></div>
<svg class="sv" style="left:446px;top:6.5px;width:12.5px;height:10px;"><use href="#ivol"/></svg>
<div class="st" style="top:10.2px"></div><div class="sf" style="top:10.2px;width:22.5px"></div>
<div class="kn" style="left:481.7px;top:7.2px"></div>
<div class="bx g1"></div><div class="bx g2"></div><div class="bx g3"></div><div class="bx g4"></div>
<svg class="sv" style="left:264.5px;top:30.5px;width:10px;height:10px;"><use href="#irec"/></svg>
<svg class="sv" style="left:287.5px;top:30px;width:14px;height:12px;"><use href="#ispk"/></svg>
<svg class="sv" style="left:317px;top:29.5px;width:12px;height:12px;"><use href="#ie"/></svg>
<svg class="sv" style="left:340.5px;top:30px;width:13px;height:11px;filter:invert(.8)"><use href="#ihat"/></svg>
<div class="gl" style="left:369.5px;top:28.8px;">R</div>
<div class="gl" style="left:393.5px;top:28.8px;">W</div>
<svg class="sv" style="left:422px;top:29.5px;width:12px;height:11px;"><use href="#ilst"/></svg>
<div class="bx pb"></div>
<svg class="sv" style="left:446px;top:31px;width:13.5px;height:9px;"><use href="#ipan"/></svg>
<div class="st" style="top:32.6px"></div>
<div class="kn" style="left:496.4px;top:29.5px"></div>
</div>
<div class="mb" style="left:558.8px;top:471.7px;height:10.6px"></div>
<div class="mb" style="left:563.5px;top:464.7px;height:17.6px"></div>
<div class="r" style="top:483.7px">
<div class="mt"></div>
<div class="cs" style="background:#e6b83c"></div>
<div class="rb"></div>
<div class="cc" style="background:#e6b83c"></div>
<svg class="sv" style="left:150.5px;top:6.5px;width:18px;height:14px;"><use href="#iwav"/></svg>
<div class="num" style="right:384px">18</div>
<div class="bx ms"></div>
<div class="gl" style="left:203.7px;top:6.3px;">M</div>
<div class="gl" style="left:232px;top:6.3px;">S</div>
<div class="nm">DR Stick Hits</div>
<div class="bx vb"></div>
<svg class="sv" style="left:446px;top:6.5px;width:12.5px;height:10px;"><use href="#ivol"/></svg>
<div class="st" style="top:10.2px"></div><div class="sf" style="top:10.2px;width:56.5px"></div>
<div class="kn" style="left:515.7px;top:7.2px"></div>
<div class="bx g1"></div><div class="bx g2"></div><div class="bx g3"></div><div class="bx g4"></div>
<svg class="sv" style="left:264.5px;top:30.5px;width:10px;height:10px;opacity:.55"><use href="#irec"/></svg>
<svg class="sv" style="left:287.5px;top:30px;width:14px;height:12px;opacity:.55"><use href="#ispk"/></svg>
<svg class="sv" style="left:317px;top:29.5px;width:12px;height:12px;"><use href="#ie"/></svg>
<svg class="sv" style="left:338px;top:30.5px;width:16px;height:10px;"><use href="#iinf"/></svg>
<div class="gl" style="left:369.5px;top:28.8px;">R</div>
<div class="gl" style="left:393.5px;top:28.8px;">W</div>
<svg class="sv" style="left:422px;top:29.5px;width:12px;height:11px;"><use href="#ilst"/></svg>
</div>
<div class="r" style="top:532.6px">
<div class="mt"></div>
<div class="cf" style="background:#5b7ff0"></div>
<div class="rb" style="left:180px;width:378px"></div>
<svg class="sv" style="left:141px;top:10px;width:17px;height:13px;"><use href="#ifol"/></svg>
<div class="bx msf"></div>
<div class="gl" style="left:191.5px;top:6.3px;">M</div>
<div class="gl" style="left:219.5px;top:6.3px;">S</div>
<div class="nm nmf">Bass</div>
<div class="bx f1"></div><div class="bx f2"></div>
<svg class="sv" style="left:251.5px;top:30px;width:10px;height:10px;"><use href="#irec"/></svg>
<svg class="sv" style="left:275px;top:29.5px;width:14px;height:12px;"><use href="#ispk"/></svg>
<svg class="sv" style="left:305px;top:32.5px;width:12px;height:6px;"><use href="#ieq"/></svg>
<svg class="sv" style="left:330px;top:29.5px;width:12px;height:12px;"><use href="#ishf"/></svg>
</div>
<div class="r" style="top:581.5px">
<div class="mt"></div>
<div class="cs" style="background:#5b7ff0"></div>
<div class="rb"></div>
<div class="cc" style="background:#5b7ff0"></div>
<svg class="sv" style="left:152px;top:6.5px;width:16px;height:14px;"><use href="#igrp"/></svg>
<div class="num" style="right:384px">19</div>
<div class="bx ms"></div>
<div class="gl" style="left:203.7px;top:6.3px;">M</div>
<div class="gl" style="left:232px;top:6.3px;">S</div>
<div class="nm">GROUP Bass</div>
<div class="bx vb"></div>
<svg class="sv" style="left:446px;top:6.5px;width:12.5px;height:10px;"><use href="#ivol"/></svg>
<div class="st" style="top:10.2px"></div><div class="sf" style="top:10.2px;width:43.0px"></div>
<div class="kn" style="left:502.2px;top:7.2px"></div>
<div class="bx g1"></div><div class="bx g2"></div><div class="bx gv"></div>
<div class="gl" style="left:264px;top:28.8px;">R</div>
<div class="gl" style="left:287.5px;top:28.8px;">W</div>
<svg class="sv" style="left:317px;top:29.5px;width:12px;height:12px;"><use href="#ie"/></svg>
<svg class="sv" style="left:338px;top:30.5px;width:16px;height:10px;"><use href="#iinf"/></svg>
<div class="gl" style="left:390px;top:30px;font-weight:normal;font-size:13px;color:#c2c2c2">-4.55</div>
<svg class="sv" style="left:427px;top:28.5px;width:8px;height:14px;"><use href="#iud"/></svg>
<div class="bx pb"></div>
<svg class="sv" style="left:446px;top:31px;width:13.5px;height:9px;"><use href="#ipan"/></svg>
<div class="st" style="top:32.6px"></div>
<div class="kn" style="left:496.4px;top:29.5px"></div>
</div>
<div class="mb" style="left:558.8px;top:597.0px;height:31.5px"></div>
<div class="mb" style="left:563.5px;top:597.0px;height:31.5px"></div>
<div class="r" style="top:630.4px">
<div class="mt"></div>
<div class="cs" style="background:#5b7ff0"></div>
<div class="rb"></div>
<div class="cc" style="background:#5b7ff0"></div>
<svg class="sv" style="left:153px;top:6.5px;width:15px;height:13px;"><use href="#ipia"/></svg>
<div class="num" style="right:384px">20</div>
<div class="bx ms"></div>
<div class="gl" style="left:203.7px;top:6.3px;">M</div>
<div class="gl" style="left:232px;top:6.3px;">S</div>
<div class="nm">BA P Bass</div>
<div class="bx vb"></div>
<svg class="sv" style="left:446px;top:6.5px;width:12.5px;height:10px;"><use href="#ivol"/></svg>
<div class="st" style="top:10.2px"></div><div class="sf" style="top:10.2px;width:44.5px"></div>
<div class="kn" style="left:503.7px;top:7.2px"></div>
<div class="bx g1"></div><div class="bx g2"></div><div class="bx g3"></div><div class="bx g4"></div>
<svg class="sv" style="left:264.5px;top:30.5px;width:10px;height:10px;"><use href="#irec"/></svg>
<svg class="sv" style="left:287.5px;top:30px;width:14px;height:12px;"><use href="#ispk"/></svg>
<svg class="sv" style="left:317px;top:29.5px;width:12px;height:12px;"><use href="#ie"/></svg>
<svg class="sv" style="left:340.5px;top:30px;width:13px;height:11px;"><use href="#ikey"/></svg>
<div class="gl" style="left:369.5px;top:28.8px;">R</div>
<div class="gl" style="left:393.5px;top:28.8px;">W</div>
<svg class="sv" style="left:422px;top:29.5px;width:12px;height:11px;"><use href="#ilst"/></svg>
<div class="bx pb"></div>
<svg class="sv" style="left:446px;top:31px;width:13.5px;height:9px;"><use href="#ipan"/></svg>
<div class="st" style="top:32.6px"></div>
<div class="kn" style="left:496.4px;top:29.5px"></div>
</div>
<div class="mb" style="left:558.8px;top:640.4px;height:37.5px"></div>
<div class="mb" style="left:563.5px;top:640.4px;height:37.5px"></div>
<div class="r" style="top:679.3px">
<div class="mt"></div>
<div class="cs" style="background:#5b7ff0"></div>
<div class="rb"></div>
<div class="cc" style="background:#5b7ff0"></div>
<svg class="sv" style="left:153px;top:6.5px;width:15px;height:13px;"><use href="#ipia"/></svg>
<div class="num" style="right:384px">21</div>
<div class="bx ms"></div>
<div class="gl" style="left:203.7px;top:6.3px;">M</div>
<div class="gl" style="left:232px;top:6.3px;">S</div>
<div class="nm">BA Upright Bass</div>
<div class="bx vb"></div>
<svg class="sv" style="left:446px;top:6.5px;width:12.5px;height:10px;"><use href="#ivol"/></svg>
<div class="st" style="top:10.2px"></div><div class="sf" style="top:10.2px;width:33.5px"></div>
<div class="kn" style="left:492.7px;top:7.2px"></div>
<div class="bx g1"></div><div class="bx g2"></div><div class="bx g3"></div><div class="bx g4"></div>
<svg class="sv" style="left:264.5px;top:30.5px;width:10px;height:10px;"><use href="#irec"/></svg>
<svg class="sv" style="left:287.5px;top:30px;width:14px;height:12px;"><use href="#ispk"/></svg>
<svg class="sv" style="left:317px;top:29.5px;width:12px;height:12px;"><use href="#ie"/></svg>
<svg class="sv" style="left:340.5px;top:30px;width:13px;height:11px;"><use href="#ikey"/></svg>
<div class="gl" style="left:369.5px;top:28.8px;">R</div>
<div class="gl" style="left:393.5px;top:28.8px;">W</div>
<svg class="sv" style="left:422px;top:29.5px;width:12px;height:11px;"><use href="#ilst"/></svg>
<div class="bx pb"></div>
<svg class="sv" style="left:446px;top:31px;width:13.5px;height:9px;"><use href="#ipan"/></svg>
<div class="st" style="top:32.6px"></div>
<div class="kn" style="left:496.4px;top:29.5px"></div>
</div>
<div class="r" style="top:728.3px">
<div class="mt"></div>
<div class="cf" style="background:#33cfd0"></div>
<div class="rb" style="left:180px;width:378px"></div>
<svg class="sv" style="left:141px;top:10px;width:17px;height:13px;"><use href="#ifol"/></svg>
<div class="bx msf"></div>
<div class="gl" style="left:191.5px;top:6.3px;">M</div>
<div class="gl" style="left:219.5px;top:6.3px;">S</div>
<div class="nm nmf">Guitars</div>
<div class="bx f1"></div><div class="bx f2"></div>
<svg class="sv" style="left:251.5px;top:30px;width:10px;height:10px;"><use href="#irec"/></svg>
<svg class="sv" style="left:275px;top:29.5px;width:14px;height:12px;"><use href="#ispk"/></svg>
<svg class="sv" style="left:305px;top:32.5px;width:12px;height:6px;"><use href="#ieq"/></svg>
<svg class="sv" style="left:330px;top:29.5px;width:12px;height:12px;"><use href="#ishf"/></svg>
</div>
<div class="r" style="top:777.2px">
<div class="mt"></div>
<div class="cs" style="background:#33cfd0"></div>
<div class="rb"></div>
<div class="cc" style="background:#33cfd0"></div>
<svg class="sv" style="left:152px;top:6.5px;width:16px;height:14px;"><use href="#igrp"/></svg>
<div class="num" style="right:384px">22</div>
<div class="bx ms"></div>
<div class="gl" style="left:203.7px;top:6.3px;">M</div>
<div class="gl" style="left:232px;top:6.3px;">S</div>
<div class="nm">GROUP Electric Guitars</div>
<div class="bx vb"></div>
<svg class="sv" style="left:446px;top:6.5px;width:12.5px;height:10px;"><use href="#ivol"/></svg>
<div class="st" style="top:10.2px"></div><div class="sf" style="top:10.2px;width:42.0px"></div>
<div class="kn" style="left:501.2px;top:7.2px"></div>
<div class="bx g1"></div><div class="bx g2"></div><div class="bx gv"></div>
<div class="a" style="left:257.5px;top:26.1px;width:25px;height:18.4px;background:#2fb83a;border-radius:3px 0 0 3px"></div>
<div class="gl" style="left:264px;top:28.8px;color:#111;">R</div>
<div class="gl" style="left:287.5px;top:28.8px;">W</div>
<svg class="sv" style="left:317px;top:29.5px;width:12px;height:12px;"><use href="#ie"/></svg>
<svg class="sv" style="left:338px;top:30.5px;width:16px;height:10px;"><use href="#iinf"/></svg>
<div class="gl" style="left:390px;top:30px;font-weight:normal;font-size:13px;color:#c2c2c2">-5.00</div>
<svg class="sv" style="left:427px;top:28.5px;width:8px;height:14px;"><use href="#iud"/></svg>
<div class="bx pb"></div>
<svg class="sv" style="left:446px;top:31px;width:13.5px;height:9px;"><use href="#ipan"/></svg>
<div class="st" style="top:32.6px"></div>
<div class="kn" style="left:496.4px;top:29.5px"></div>
</div>
<div class="mb" style="left:558.8px;top:795.2px;height:29.0px"></div>
<div class="mb" style="left:563.5px;top:795.2px;height:29.0px"></div>
<div class="r" style="top:826.1px">
<div class="mt"></div>
<div class="cs" style="background:#33cfd0"></div>
<div class="rb"></div>
<div class="cc" style="background:#33cfd0"></div>
<svg class="sv" style="left:150.5px;top:6.5px;width:18px;height:14px;"><use href="#iwav"/></svg>
<div class="num" style="right:384px">23</div>
<div class="bx ms"></div>
<div class="gl" style="left:203.7px;top:6.3px;">M</div>
<div class="gl" style="left:232px;top:6.3px;">S</div>
<div class="nm">GTR Hook Palm L</div>
<div class="bx vb"></div>
<svg class="sv" style="left:446px;top:6.5px;width:12.5px;height:10px;"><use href="#ivol"/></svg>
<div class="st" style="top:10.2px"></div><div class="sf" style="top:10.2px;width:48.0px"></div>
<div class="kn" style="left:507.2px;top:7.2px"></div>
<div class="bx g1"></div><div class="bx g2"></div><div class="bx g3"></div><div class="bx g4"></div>
<svg class="sv" style="left:264.5px;top:30.5px;width:10px;height:10px;opacity:.55"><use href="#irec"/></svg>
<svg class="sv" style="left:287.5px;top:30px;width:14px;height:12px;opacity:.55"><use href="#ispk"/></svg>
<svg class="sv" style="left:317px;top:29.5px;width:12px;height:12px;"><use href="#ie"/></svg>
<svg class="sv" style="left:341px;top:30.5px;width:10px;height:10px;"><use href="#ioo"/></svg>
<div class="gl" style="left:369.5px;top:28.8px;">R</div>
<div class="gl" style="left:393.5px;top:28.8px;">W</div>
<svg class="sv" style="left:422px;top:29.5px;width:12px;height:11px;"><use href="#ilst"/></svg>
</div>
<div class="mb" style="left:558.8px;top:844.7px;height:28.1px"></div>
<div class="r" style="top:875.0px">
<div class="mt"></div>
<div class="cs" style="background:#33cfd0"></div>
<div class="rb"></div>
<div class="cc" style="background:#33cfd0"></div>
<svg class="sv" style="left:150.5px;top:6.5px;width:18px;height:14px;"><use href="#iwav"/></svg>
<div class="num" style="right:384px">24</div>
<div class="bx ms"></div>
<div class="gl" style="left:203.7px;top:6.3px;">M</div>
<div class="gl" style="left:232px;top:6.3px;">S</div>
<div class="nm">GTR Hook Palm R</div>
<div class="bx vb"></div>
<svg class="sv" style="left:446px;top:6.5px;width:12.5px;height:10px;"><use href="#ivol"/></svg>
<div class="st" style="top:10.2px"></div><div class="sf" style="top:10.2px;width:48.0px"></div>
<div class="kn" style="left:507.2px;top:7.2px"></div>
<div class="bx g1"></div><div class="bx g2"></div><div class="bx g3"></div><div class="bx g4"></div>
<svg class="sv" style="left:264.5px;top:30.5px;width:10px;height:10px;opacity:.55"><use href="#irec"/></svg>
<svg class="sv" style="left:287.5px;top:30px;width:14px;height:12px;opacity:.55"><use href="#ispk"/></svg>
<svg class="sv" style="left:317px;top:29.5px;width:12px;height:12px;"><use href="#ie"/></svg>
<svg class="sv" style="left:341px;top:30.5px;width:10px;height:10px;"><use href="#ioo"/></svg>
<div class="gl" style="left:369.5px;top:28.8px;">R</div>
<div class="gl" style="left:393.5px;top:28.8px;">W</div>
<svg class="sv" style="left:422px;top:29.5px;width:12px;height:11px;"><use href="#ilst"/></svg>
</div>
<div class="mb" style="left:563.5px;top:894.0px;height:27.0px"></div>
<div class="r" style="top:923.9px">
<div class="mt"></div>
<div class="cs" style="background:#33cfd0"></div>
<div class="rb"></div>
<div class="cc" style="background:#33cfd0"></div>
<svg class="sv" style="left:150.5px;top:6.5px;width:18px;height:14px;"><use href="#iwav"/></svg>
<div class="num" style="right:384px">25</div>
<div class="bx ms"></div>
<div class="gl" style="left:203.7px;top:6.3px;">M</div>
<div class="gl" style="left:232px;top:6.3px;">S</div>
<div class="nm">GTR Lead Line L</div>
<div class="bx vb"></div>
<svg class="sv" style="left:446px;top:6.5px;width:12.5px;height:10px;"><use href="#ivol"/></svg>
<div class="st" style="top:10.2px"></div><div class="sf" style="top:10.2px;width:36.5px"></div>
<div class="kn" style="left:495.7px;top:7.2px"></div>
<div class="bx g1"></div><div class="bx g2"></div><div class="bx g3"></div><div class="bx g4"></div>
<svg class="sv" style="left:264.5px;top:30.5px;width:10px;height:10px;opacity:.55"><use href="#irec"/></svg>
<svg class="sv" style="left:287.5px;top:30px;width:14px;height:12px;opacity:.55"><use href="#ispk"/></svg>
<svg class="sv" style="left:317px;top:29.5px;width:12px;height:12px;"><use href="#ie"/></svg>
<svg class="sv" style="left:338px;top:30.5px;width:16px;height:10px;"><use href="#iinf"/></svg>
<div class="gl" style="left:369.5px;top:28.8px;">R</div>
<div class="gl" style="left:393.5px;top:28.8px;">W</div>
<svg class="sv" style="left:422px;top:29.5px;width:12px;height:11px;"><use href="#ilst"/></svg>
</div>
<div class="mb" style="left:558.8px;top:940.9px;height:30.0px"></div>
<div class="r" style="top:972.9px">
<div class="mt"></div>
<div class="cs" style="background:#33cfd0"></div>
<div class="rb"></div>
<div class="cc" style="background:#33cfd0"></div>
<svg class="sv" style="left:150.5px;top:6.5px;width:18px;height:14px;"><use href="#iwav"/></svg>
<div class="num" style="right:384px">26</div>
<div class="bx ms"></div>
<div class="gl" style="left:203.7px;top:6.3px;">M</div>
<div class="gl" style="left:232px;top:6.3px;">S</div>
<div class="nm">GTR Lead Line R</div>
<div class="bx vb"></div>
<svg class="sv" style="left:446px;top:6.5px;width:12.5px;height:10px;"><use href="#ivol"/></svg>
<div class="st" style="top:10.2px"></div><div class="sf" style="top:10.2px;width:36.5px"></div>
<div class="kn" style="left:495.7px;top:7.2px"></div>
<div class="bx g1"></div><div class="bx g2"></div><div class="bx g3"></div><div class="bx g4"></div>
<svg class="sv" style="left:264.5px;top:30.5px;width:10px;height:10px;opacity:.55"><use href="#irec"/></svg>
<svg class="sv" style="left:287.5px;top:30px;width:14px;height:12px;opacity:.55"><use href="#ispk"/></svg>
<svg class="sv" style="left:317px;top:29.5px;width:12px;height:12px;"><use href="#ie"/></svg>
<svg class="sv" style="left:338px;top:30.5px;width:16px;height:10px;"><use href="#iinf"/></svg>
<div class="gl" style="left:369.5px;top:28.8px;">R</div>
<div class="gl" style="left:393.5px;top:28.8px;">W</div>
<svg class="sv" style="left:422px;top:29.5px;width:12px;height:11px;"><use href="#ilst"/></svg>
</div>
<div class="mb" style="left:563.5px;top:994.9px;height:25.8px"></div>
<div class="r" style="top:1021.8px">
<div class="mt"></div>
<div class="cs" style="background:#33cfd0"></div>
<div class="rb"></div>
<div class="cc" style="background:#33cfd0"></div>
<svg class="sv" style="left:150.5px;top:6.5px;width:18px;height:14px;"><use href="#iwav"/></svg>
<div class="num" style="right:384px">27</div>
<div class="bx ms"></div>
<div class="gl" style="left:203.7px;top:6.3px;">M</div>
<div class="gl" style="left:232px;top:6.3px;">S</div>
<div class="nm">GTR Shimmer Strums</div>
<div class="bx vb"></div>
<svg class="sv" style="left:446px;top:6.5px;width:12.5px;height:10px;"><use href="#ivol"/></svg>
<div class="st" style="top:10.2px"></div><div class="sf" style="top:10.2px;width:54.0px"></div>
<div class="kn" style="left:513.2px;top:7.2px"></div>
<div class="bx g1"></div><div class="bx g2"></div><div class="bx g3"></div><div class="bx g4"></div>
<svg class="sv" style="left:264.5px;top:30.5px;width:10px;height:10px;opacity:.55"><use href="#irec"/></svg>
<svg class="sv" style="left:287.5px;top:30px;width:14px;height:12px;opacity:.55"><use href="#ispk"/></svg>
<svg class="sv" style="left:317px;top:29.5px;width:12px;height:12px;"><use href="#ie"/></svg>
<svg class="sv" style="left:338px;top:30.5px;width:16px;height:10px;"><use href="#iinf"/></svg>
<div class="gl" style="left:369.5px;top:28.8px;">R</div>
<div class="gl" style="left:393.5px;top:28.8px;">W</div>
<svg class="sv" style="left:422px;top:29.5px;width:12px;height:11px;"><use href="#ilst"/></svg>
</div>
<div class="mb" style="left:558.8px;top:1060.5px;height:9.3px"></div>
<div class="mb" style="left:563.5px;top:1060.5px;height:9.3px"></div>
<div class="r" style="top:1070.7px">
<div class="mt"></div>
<div class="cs" style="background:#33cfd0"></div>
<div class="rb"></div>
<div class="cc" style="background:#33cfd0"></div>
<svg class="sv" style="left:150.5px;top:6.5px;width:18px;height:14px;"><use href="#iwav"/></svg>
<div class="num" style="right:384px">28</div>
<div class="bx ms"></div>
<div class="gl" style="left:203.7px;top:6.3px;">M</div>
<div class="gl" style="left:232px;top:6.3px;">S</div>
<div class="nm">GTR Long Strums</div>
<div class="bx vb"></div>
<svg class="sv" style="left:446px;top:6.5px;width:12.5px;height:10px;"><use href="#ivol"/></svg>
<div class="st" style="top:10.2px"></div><div class="sf" style="top:10.2px;width:38.0px"></div>
<div class="kn" style="left:497.2px;top:7.2px"></div>
<div class="bx g1"></div><div class="bx g2"></div><div class="bx g3"></div><div class="bx g4"></div>
<svg class="sv" style="left:264.5px;top:30.5px;width:10px;height:10px;opacity:.55"><use href="#irec"/></svg>
<svg class="sv" style="left:287.5px;top:30px;width:14px;height:12px;opacity:.55"><use href="#ispk"/></svg>
<svg class="sv" style="left:317px;top:29.5px;width:12px;height:12px;"><use href="#ie"/></svg>
<svg class="sv" style="left:338px;top:30.5px;width:16px;height:10px;"><use href="#iinf"/></svg>
<div class="gl" style="left:369.5px;top:28.8px;">R</div>
<div class="gl" style="left:393.5px;top:28.8px;">W</div>
<svg class="sv" style="left:422px;top:29.5px;width:12px;height:11px;"><use href="#ilst"/></svg>
</div>
<div class="r" style="top:1119.6px">
<div class="mt"></div>
<div class="cs" style="background:#33cfd0"></div>
<div class="rb"></div>
<div class="cc" style="background:#33cfd0"></div>
<svg class="sv" style="left:150.5px;top:6.5px;width:18px;height:14px;"><use href="#iwav"/></svg>
<div class="num" style="right:384px">29</div>
<div class="bx ms"></div>
<div class="gl" style="left:203.7px;top:6.3px;">M</div>
<div class="gl" style="left:232px;top:6.3px;">S</div>
<div class="nm">GTR Accent Lead L</div>
<div class="bx vb"></div>
<svg class="sv" style="left:446px;top:6.5px;width:12.5px;height:10px;"><use href="#ivol"/></svg>
<div class="st" style="top:10.2px"></div><div class="sf" style="top:10.2px;width:35.5px"></div>
<div class="kn" style="left:494.7px;top:7.2px"></div>
<div class="bx g1"></div><div class="bx g2"></div><div class="bx g3"></div><div class="bx g4"></div>
<svg class="sv" style="left:264.5px;top:30.5px;width:10px;height:10px;opacity:.55"><use href="#irec"/></svg>
<svg class="sv" style="left:287.5px;top:30px;width:14px;height:12px;opacity:.55"><use href="#ispk"/></svg>
<svg class="sv" style="left:317px;top:29.5px;width:12px;height:12px;"><use href="#ie"/></svg>
<svg class="sv" style="left:338px;top:30.5px;width:16px;height:10px;"><use href="#iinf"/></svg>
<div class="gl" style="left:369.5px;top:28.8px;">R</div>
<div class="gl" style="left:393.5px;top:28.8px;">W</div>
<svg class="sv" style="left:422px;top:29.5px;width:12px;height:11px;"><use href="#ilst"/></svg>
</div>
<div class="r rs" style="top:1168.5px">
<div class="mt"></div>
<div class="cs" style="background:#33cfd0"></div>
<div class="rb sel"></div>
<div class="cc" style="background:#33cfd0"></div>
<svg class="sv" style="left:150.5px;top:6.5px;width:18px;height:14px;"><use href="#iwav"/></svg>
<div class="num" style="right:384px">30</div>
<div class="bx ms"></div>
<div class="gl" style="left:203.7px;top:6.3px;">M</div>
<div class="gl" style="left:232px;top:6.3px;">S</div>
<div class="nm">GTR Accent Lead R</div>
<div class="bx vb"></div>
<svg class="sv" style="left:446px;top:6.5px;width:12.5px;height:10px;"><use href="#ivol"/></svg>
<div class="st" style="top:10.2px"></div><div class="sf" style="top:10.2px;width:35.5px"></div>
<div class="kn" style="left:494.7px;top:7.2px"></div>
<div class="bx g1"></div><div class="bx g2"></div><div class="bx g3"></div><div class="bx g4"></div>
<svg class="sv" style="left:264.5px;top:30.5px;width:10px;height:10px;opacity:.55"><use href="#irec"/></svg>
<svg class="sv" style="left:287.5px;top:30px;width:14px;height:12px;opacity:.55"><use href="#ispk"/></svg>
<svg class="sv" style="left:317px;top:29.5px;width:12px;height:12px;"><use href="#ie"/></svg>
<svg class="sv" style="left:338px;top:30.5px;width:16px;height:10px;"><use href="#iinf"/></svg>
<div class="gl" style="left:369.5px;top:28.8px;">R</div>
<div class="gl" style="left:393.5px;top:28.8px;">W</div>
<svg class="sv" style="left:422px;top:29.5px;width:12px;height:11px;"><use href="#ilst"/></svg>
</div>
<div class="r" style="top:1217.5px">
<div class="mt"></div>
<div class="cs" style="background:#33cfd0"></div>
<div class="rb"></div>
<div class="cc" style="background:#33cfd0"></div>
<svg class="sv" style="left:150.5px;top:6.5px;width:18px;height:14px;"><use href="#iwav"/></svg>
<div class="num" style="right:384px">31</div>
<div class="bx ms"></div>
<div class="gl" style="left:203.7px;top:6.3px;">M</div>
<div class="gl" style="left:232px;top:6.3px;">S</div>
<div class="nm">GTR Verse Strums L</div>
<div class="bx vb"></div>
<svg class="sv" style="left:446px;top:6.5px;width:12.5px;height:10px;"><use href="#ivol"/></svg>
<div class="st" style="top:10.2px"></div><div class="sf" style="top:10.2px;width:58.0px"></div>
<div class="kn" style="left:517.2px;top:7.2px"></div>
<div class="bx g1"></div><div class="bx g2"></div><div class="bx g3"></div><div class="bx g4"></div>
<svg class="sv" style="left:264.5px;top:30.5px;width:10px;height:10px;opacity:.55"><use href="#irec"/></svg>
<svg class="sv" style="left:287.5px;top:30px;width:14px;height:12px;opacity:.55"><use href="#ispk"/></svg>
<svg class="sv" style="left:317px;top:29.5px;width:12px;height:12px;"><use href="#ie"/></svg>
<svg class="sv" style="left:341px;top:30.5px;width:10px;height:10px;"><use href="#ioo"/></svg>
<div class="gl" style="left:369.5px;top:28.8px;">R</div>
<div class="gl" style="left:393.5px;top:28.8px;">W</div>
<svg class="sv" style="left:422px;top:29.5px;width:12px;height:11px;"><use href="#ilst"/></svg>
</div>
<div class="r" style="top:1266.4px">
<div class="mt"></div>
<div class="cs" style="background:#33cfd0"></div>
<div class="rb"></div>
<div class="cc" style="background:#33cfd0"></div>
<svg class="sv" style="left:150.5px;top:6.5px;width:18px;height:14px;"><use href="#iwav"/></svg>
<div class="num" style="right:384px">32</div>
<div class="bx ms"></div>
<div class="gl" style="left:203.7px;top:6.3px;">M</div>
<div class="gl" style="left:232px;top:6.3px;">S</div>
<div class="nm">GTR Verse Strums R</div>
<div class="bx vb"></div>
<svg class="sv" style="left:446px;top:6.5px;width:12.5px;height:10px;"><use href="#ivol"/></svg>
<div class="st" style="top:10.2px"></div><div class="sf" style="top:10.2px;width:58.0px"></div>
<div class="kn" style="left:517.2px;top:7.2px"></div>
<div class="bx g1"></div><div class="bx g2"></div><div class="bx g3"></div><div class="bx g4"></div>
<svg class="sv" style="left:264.5px;top:30.5px;width:10px;height:10px;opacity:.55"><use href="#irec"/></svg>
<svg class="sv" style="left:287.5px;top:30px;width:14px;height:12px;opacity:.55"><use href="#ispk"/></svg>
<svg class="sv" style="left:317px;top:29.5px;width:12px;height:12px;"><use href="#ie"/></svg>
<svg class="sv" style="left:341px;top:30.5px;width:10px;height:10px;"><use href="#ioo"/></svg>
<div class="gl" style="left:369.5px;top:28.8px;">R</div>
<div class="gl" style="left:393.5px;top:28.8px;">W</div>
<svg class="sv" style="left:422px;top:29.5px;width:12px;height:11px;"><use href="#ilst"/></svg>
</div>
<div class="r" style="top:1315.3px">
<div class="mt"></div>
<div class="cs" style="background:#33cfd0"></div>
<div class="rb"></div>
<div class="cc" style="background:#33cfd0"></div>
<svg class="sv" style="left:150.5px;top:6.5px;width:18px;height:14px;"><use href="#iwav"/></svg>
<div class="num" style="right:384px">33</div>
<div class="bx ms"></div>
<div class="gl" style="left:203.7px;top:6.3px;">M</div>
<div class="gl" style="left:232px;top:6.3px;">S</div>
<div class="nm">GTR Modulation Hits L</div>
<div class="bx vb"></div>
<svg class="sv" style="left:446px;top:6.5px;width:12.5px;height:10px;"><use href="#ivol"/></svg>
<div class="st" style="top:10.2px"></div><div class="sf" style="top:10.2px;width:32.0px"></div>
<div class="kn" style="left:491.2px;top:7.2px"></div>
<div class="bx g1"></div><div class="bx g2"></div><div class="bx g3"></div><div class="bx g4"></div>
<svg class="sv" style="left:264.5px;top:30.5px;width:10px;height:10px;opacity:.55"><use href="#irec"/></svg>
<svg class="sv" style="left:287.5px;top:30px;width:14px;height:12px;opacity:.55"><use href="#ispk"/></svg>
<svg class="sv" style="left:317px;top:29.5px;width:12px;height:12px;"><use href="#ie"/></svg>
<svg class="sv" style="left:338px;top:30.5px;width:16px;height:10px;"><use href="#iinf"/></svg>
<div class="gl" style="left:369.5px;top:28.8px;">R</div>
<div class="gl" style="left:393.5px;top:28.8px;">W</div>
<svg class="sv" style="left:422px;top:29.5px;width:12px;height:11px;"><use href="#ilst"/></svg>
</div>
<div class="r" style="top:1364.2px">
<div class="mt"></div>
<div class="cs" style="background:#33cfd0"></div>
<div class="rb"></div>
<div class="cc" style="background:#33cfd0"></div>
<svg class="sv" style="left:150.5px;top:6.5px;width:18px;height:14px;"><use href="#iwav"/></svg>
<div class="num" style="right:384px">34</div>
<div class="bx ms"></div>
<div class="gl" style="left:203.7px;top:6.3px;">M</div>
<div class="gl" style="left:232px;top:6.3px;">S</div>
<div class="nm">GTR Modulation Hits R</div>
<div class="bx vb"></div>
<svg class="sv" style="left:446px;top:6.5px;width:12.5px;height:10px;"><use href="#ivol"/></svg>
<div class="st" style="top:10.2px"></div><div class="sf" style="top:10.2px;width:24.0px"></div>
<div class="kn" style="left:483.2px;top:7.2px"></div>
<div class="bx g1"></div><div class="bx g2"></div><div class="bx g3"></div><div class="bx g4"></div>
<svg class="sv" style="left:264.5px;top:30.5px;width:10px;height:10px;opacity:.55"><use href="#irec"/></svg>
<svg class="sv" style="left:287.5px;top:30px;width:14px;height:12px;opacity:.55"><use href="#ispk"/></svg>
<svg class="sv" style="left:317px;top:29.5px;width:12px;height:12px;"><use href="#ie"/></svg>
<svg class="sv" style="left:338px;top:30.5px;width:16px;height:10px;"><use href="#iinf"/></svg>
<div class="gl" style="left:369.5px;top:28.8px;">R</div>
<div class="gl" style="left:393.5px;top:28.8px;">W</div>
<svg class="sv" style="left:422px;top:29.5px;width:12px;height:11px;"><use href="#ilst"/></svg>
</div>
<div class="r" style="top:1413.1px">
<div class="mt"></div>
<div class="cs" style="background:#33cfd0"></div>
<div class="rb"></div>
<div class="cc" style="background:#33cfd0"></div>
<svg class="sv" style="left:150.5px;top:6.5px;width:18px;height:14px;"><use href="#iwav"/></svg>
<div class="num" style="right:384px">35</div>
<div class="bx ms"></div>
<div class="gl" style="left:203.7px;top:6.3px;">M</div>
<div class="gl" style="left:232px;top:6.3px;">S</div>
<div class="nm">GTR Verse Chorus ...ar</div>
<div class="bx vb"></div>
<svg class="sv" style="left:446px;top:6.5px;width:12.5px;height:10px;"><use href="#ivol"/></svg>
<div class="st" style="top:10.2px"></div><div class="sf" style="top:10.2px;width:40.5px"></div>
<div class="kn" style="left:499.7px;top:7.2px"></div>
<div class="bx g1"></div><div class="bx g2"></div><div class="bx g3"></div><div class="bx g4"></div>
<svg class="sv" style="left:264.5px;top:30.5px;width:10px;height:10px;opacity:.55"><use href="#irec"/></svg>
<svg class="sv" style="left:287.5px;top:30px;width:14px;height:12px;opacity:.55"><use href="#ispk"/></svg>
<svg class="sv" style="left:317px;top:29.5px;width:12px;height:12px;"><use href="#ie"/></svg>
<svg class="sv" style="left:338px;top:30.5px;width:16px;height:10px;"><use href="#iinf"/></svg>
<div class="gl" style="left:369.5px;top:28.8px;">R</div>
<div class="gl" style="left:393.5px;top:28.8px;">W</div>
<svg class="sv" style="left:422px;top:29.5px;width:12px;height:11px;"><use href="#ilst"/></svg>
</div>
<div class="r" style="top:1462.1px">
<div class="mt"></div>
<div class="cs" style="background:#33cfd0"></div>
<div class="rb"></div>
<div class="cc" style="background:#33cfd0"></div>
<svg class="sv" style="left:150.5px;top:6.5px;width:18px;height:14px;"><use href="#iwav"/></svg>
<div class="num" style="right:384px">36</div>
<div class="bx ms"></div>
<div class="gl" style="left:203.7px;top:6.3px;">M</div>
<div class="gl" style="left:232px;top:6.3px;">S</div>
<div class="nm">GTR Prechorus Chords</div>
<div class="bx vb"></div>
<svg class="sv" style="left:446px;top:6.5px;width:12.5px;height:10px;"><use href="#ivol"/></svg>
<div class="st" style="top:10.2px"></div><div class="sf" style="top:10.2px;width:53.0px"></div>
<div class="kn" style="left:512.2px;top:7.2px"></div>
<div class="bx g1"></div><div class="bx g2"></div><div class="bx g3"></div><div class="bx g4"></div>
<svg class="sv" style="left:264.5px;top:30.5px;width:10px;height:10px;opacity:.55"><use href="#irec"/></svg>
<svg class="sv" style="left:287.5px;top:30px;width:14px;height:12px;opacity:.55"><use href="#ispk"/></svg>
<svg class="sv" style="left:317px;top:29.5px;width:12px;height:12px;"><use href="#ie"/></svg>
<svg class="sv" style="left:338px;top:30.5px;width:16px;height:10px;"><use href="#iinf"/></svg>
<div class="gl" style="left:369.5px;top:28.8px;">R</div>
<div class="gl" style="left:393.5px;top:28.8px;">W</div>
<svg class="sv" style="left:422px;top:29.5px;width:12px;height:11px;"><use href="#ilst"/></svg>
</div>
<div class="r" style="top:1511.0px">
<div class="mt"></div>
<div class="cs" style="background:#33cfd0"></div>
<div class="rb"></div>
<div class="cc" style="background:#33cfd0"></div>
<svg class="sv" style="left:150.5px;top:6.5px;width:18px;height:14px;"><use href="#iwav"/></svg>
<div class="num" style="right:384px">37</div>
<div class="bx ms"></div>
<div class="gl" style="left:203.7px;top:6.3px;">M</div>
<div class="gl" style="left:232px;top:6.3px;">S</div>
<div class="nm">GTR Prechorus Crunch</div>
<div class="bx vb"></div>
<svg class="sv" style="left:446px;top:6.5px;width:12.5px;height:10px;"><use href="#ivol"/></svg>
<div class="st" style="top:10.2px"></div><div class="sf" style="top:10.2px;width:30.5px"></div>
<div class="kn" style="left:489.7px;top:7.2px"></div>
<div class="bx g1"></div><div class="bx g2"></div><div class="bx g3"></div><div class="bx g4"></div>
<svg class="sv" style="left:264.5px;top:30.5px;width:10px;height:10px;opacity:.55"><use href="#irec"/></svg>
<svg class="sv" style="left:287.5px;top:30px;width:14px;height:12px;opacity:.55"><use href="#ispk"/></svg>
<svg class="sv" style="left:317px;top:29.5px;width:12px;height:12px;"><use href="#ie"/></svg>
<svg class="sv" style="left:338px;top:30.5px;width:16px;height:10px;"><use href="#iinf"/></svg>
<div class="gl" style="left:369.5px;top:28.8px;">R</div>
<div class="gl" style="left:393.5px;top:28.8px;">W</div>
<svg class="sv" style="left:422px;top:29.5px;width:12px;height:11px;"><use href="#ilst"/></svg>
</div>
<div class="r" style="top:1559.9px">
<div class="mt"></div>
<div class="cf" style="background:#3aa3ea"></div>
<div class="rb" style="left:180px;width:378px"></div>
<svg class="sv" style="left:141px;top:10px;width:17px;height:13px;"><use href="#ifol"/></svg>
<div class="bx msf"></div>
<div class="gl" style="left:191.5px;top:6.3px;">M</div>
<div class="gl" style="left:219.5px;top:6.3px;">S</div>
<div class="nm nmf">Synths</div>
<div class="bx f1"></div><div class="bx f2"></div>
<svg class="sv" style="left:251.5px;top:30px;width:10px;height:10px;"><use href="#irec"/></svg>
<svg class="sv" style="left:275px;top:29.5px;width:14px;height:12px;"><use href="#ispk"/></svg>
<svg class="sv" style="left:305px;top:32.5px;width:12px;height:6px;"><use href="#ieq"/></svg>
<svg class="sv" style="left:330px;top:29.5px;width:12px;height:12px;"><use href="#ishf"/></svg>
</div>
<div class="r" style="top:1608.8px">
<div class="mt"></div>
<div class="cs" style="background:#3aa3ea"></div>
<div class="rb"></div>
<div class="cc" style="background:#3aa3ea"></div>
<svg class="sv" style="left:152px;top:6.5px;width:16px;height:14px;"><use href="#igrp"/></svg>
<div class="num" style="right:384px">38</div>
<div class="bx ms"></div>
<div class="gl" style="left:203.7px;top:6.3px;">M</div>
<div class="gl" style="left:232px;top:6.3px;">S</div>
<div class="nm">GROUP Synths and Keys</div>
<div class="bx vb"></div>
<svg class="sv" style="left:446px;top:6.5px;width:12.5px;height:10px;"><use href="#ivol"/></svg>
<div class="st" style="top:10.2px"></div><div class="sf" style="top:10.2px;width:43.0px"></div>
<div class="kn" style="left:502.2px;top:7.2px"></div>
<div class="bx g1"></div><div class="bx g2"></div><div class="bx gv"></div>
<div class="gl" style="left:264px;top:28.8px;">R</div>
<div class="gl" style="left:287.5px;top:28.8px;">W</div>
<svg class="sv" style="left:317px;top:29.5px;width:12px;height:12px;"><use href="#ie"/></svg>
<svg class="sv" style="left:338px;top:30.5px;width:16px;height:10px;"><use href="#iinf"/></svg>
<div class="gl" style="left:390px;top:30px;font-weight:normal;font-size:13px;color:#c2c2c2">-5.00</div>
<svg class="sv" style="left:427px;top:28.5px;width:8px;height:14px;"><use href="#iud"/></svg>
<div class="bx pb"></div>
<svg class="sv" style="left:446px;top:31px;width:13.5px;height:9px;"><use href="#ipan"/></svg>
<div class="st" style="top:32.6px"></div>
<div class="kn" style="left:496.4px;top:29.5px"></div>
</div>
<div class="mb" style="left:558.8px;top:1629.1px;height:27.2px"></div>
<div class="mb" style="left:563.5px;top:1625.3px;height:31.0px"></div>
<div class="r" style="top:1657.7px">
<div class="mt"></div>
<div class="cs" style="background:#3aa3ea"></div>
<div class="rb"></div>
<div class="cc" style="background:#3aa3ea"></div>
<svg class="sv" style="left:153px;top:6.5px;width:15px;height:13px;"><use href="#ipia"/></svg>
<div class="num" style="right:384px">39</div>
<div class="bx ms"></div>
<div class="gl" style="left:203.7px;top:6.3px;">M</div>
<div class="gl" style="left:232px;top:6.3px;">S</div>
<div class="nm">SYN Mello Strings</div>
<div class="bx vb"></div>
<svg class="sv" style="left:446px;top:6.5px;width:12.5px;height:10px;"><use href="#ivol"/></svg>
<div class="st" style="top:10.2px"></div><div class="sf" style="top:10.2px;width:58.0px"></div>
<div class="kn" style="left:517.2px;top:7.2px"></div>
<div class="bx g1"></div><div class="bx g2"></div><div class="bx g3"></div><div class="bx g4"></div>
<svg class="sv" style="left:264.5px;top:30.5px;width:10px;height:10px;"><use href="#irec"/></svg>
<svg class="sv" style="left:287.5px;top:30px;width:14px;height:12px;"><use href="#ispk"/></svg>
<svg class="sv" style="left:317px;top:29.5px;width:12px;height:12px;"><use href="#ie"/></svg>
<svg class="sv" style="left:340.5px;top:30px;width:13px;height:11px;"><use href="#ikey"/></svg>
<div class="gl" style="left:369.5px;top:28.8px;">R</div>
<div class="gl" style="left:393.5px;top:28.8px;">W</div>
<svg class="sv" style="left:422px;top:29.5px;width:12px;height:11px;"><use href="#ilst"/></svg>
<div class="bx pb"></div>
<svg class="sv" style="left:446px;top:31px;width:13.5px;height:9px;"><use href="#ipan"/></svg>
<div class="st" style="top:32.6px"></div>
<div class="kn" style="left:496.4px;top:29.5px"></div>
</div>
<div class="r" style="top:1706.7px">
<div class="mt"></div>
<div class="cs" style="background:#3aa3ea"></div>
<div class="rb"></div>
<div class="cc" style="background:#3aa3ea"></div>
<svg class="sv" style="left:153px;top:6.5px;width:15px;height:13px;"><use href="#ipia"/></svg>
<div class="num" style="right:384px">40</div>
<div class="bx ms"></div>
<div class="gl" style="left:203.7px;top:6.3px;">M</div>
<div class="gl" style="left:232px;top:6.3px;">S</div>
<div class="nm">SYN Bell Lead</div>
<div class="bx vb"></div>
<svg class="sv" style="left:446px;top:6.5px;width:12.5px;height:10px;"><use href="#ivol"/></svg>
<div class="st" style="top:10.2px"></div><div class="sf" style="top:10.2px;width:27.0px"></div>
<div class="kn" style="left:486.2px;top:7.2px"></div>
<div class="bx g1"></div><div class="bx g2"></div><div class="bx g3"></div><div class="bx g4"></div>
<svg class="sv" style="left:264.5px;top:30.5px;width:10px;height:10px;"><use href="#irec"/></svg>
<svg class="sv" style="left:287.5px;top:30px;width:14px;height:12px;"><use href="#ispk"/></svg>
<svg class="sv" style="left:317px;top:29.5px;width:12px;height:12px;"><use href="#ie"/></svg>
<svg class="sv" style="left:340.5px;top:30px;width:13px;height:11px;"><use href="#ikey"/></svg>
<div class="gl" style="left:369.5px;top:28.8px;">R</div>
<div class="gl" style="left:393.5px;top:28.8px;">W</div>
<svg class="sv" style="left:422px;top:29.5px;width:12px;height:11px;"><use href="#ilst"/></svg>
<div class="bx pb"></div>
<svg class="sv" style="left:446px;top:31px;width:13.5px;height:9px;"><use href="#ipan"/></svg>
<div class="st" style="top:32.6px"></div>
<div class="kn" style="left:496.4px;top:29.5px"></div>
</div>
</div></div>
<div class="a" style="left:133px;top:1731px;width:437px;height:20px;background:#212528"></div>
<div class="a" style="left:146px;top:1738px;width:5px;height:1.5px;background:#cfcfcf"></div>
<svg class="sv" style="left:530px;top:1737px;width:12px;height:8px"><path d="M0 0h12L6 7z" fill="#8a8c8e"/></svg>
<svg class="sv" style="left:551px;top:1732px;width:14px;height:14px"><circle cx="7" cy="7" r="4.5" stroke="#a0a0a0" stroke-width="3" fill="none" stroke-dasharray="2.2 1.3"/><circle cx="7" cy="7" r="2" fill="#212528"/></svg>
<svg class="a" style="left:0;top:0;font-family:Liberation Sans" width="3199" height="1800" viewBox="0 0 3199 1800">
<defs><clipPath id="arrclip"><rect x="572" y="84.4" width="2318" height="1650.6"/></clipPath></defs>
<rect x="572" y="52.5" width="2320.5" height="30" fill="#1f2123"/>
<rect x="572" y="82.2" width="2319" height="2.2" fill="#7d8083"/>
<rect x="2002.0" y="53.5" width="253.1" height="29" fill="#7359e0"/>
<path d="M2002.0 53.5h10l-10 10zM2255.1 53.5h-10l10 10z" fill="#f4f4f4"/>
<text x="614.6" y="76.5" font-size="12.5" font-weight="bold" fill="#f0f0f0">3</text>
<text x="677.9" y="76.5" font-size="12.5" font-weight="bold" fill="#f0f0f0">5</text>
<text x="741.1" y="76.5" font-size="12.5" font-weight="bold" fill="#f0f0f0">7</text>
<text x="804.4" y="76.5" font-size="12.5" font-weight="bold" fill="#f0f0f0">9</text>
<text x="867.7" y="76.5" font-size="12.5" font-weight="bold" fill="#f0f0f0">11</text>
<text x="930.9" y="76.5" font-size="12.5" font-weight="bold" fill="#f0f0f0">13</text>
<text x="994.2" y="76.5" font-size="12.5" font-weight="bold" fill="#f0f0f0">15</text>
<text x="1057.5" y="76.5" font-size="12.5" font-weight="bold" fill="#f0f0f0">17</text>
<text x="1120.7" y="76.5" font-size="12.5" font-weight="bold" fill="#f0f0f0">19</text>
<text x="1184.0" y="76.5" font-size="12.5" font-weight="bold" fill="#f0f0f0">21</text>
<text x="1247.3" y="76.5" font-size="12.5" font-weight="bold" fill="#f0f0f0">23</text>
<text x="1310.5" y="76.5" font-size="12.5" font-weight="bold" fill="#f0f0f0">25</text>
<text x="1373.8" y="76.5" font-size="12.5" font-weight="bold" fill="#f0f0f0">27</text>
<text x="1437.1" y="76.5" font-size="12.5" font-weight="bold" fill="#f0f0f0">29</text>
<text x="1500.4" y="76.5" font-size="12.5" font-weight="bold" fill="#f0f0f0">31</text>
<text x="1563.6" y="76.5" font-size="12.5" font-weight="bold" fill="#f0f0f0">33</text>
<text x="1626.9" y="76.5" font-size="12.5" font-weight="bold" fill="#f0f0f0">35</text>
<text x="1690.2" y="76.5" font-size="12.5" font-weight="bold" fill="#f0f0f0">37</text>
<text x="1753.4" y="76.5" font-size="12.5" font-weight="bold" fill="#f0f0f0">39</text>
<text x="1816.7" y="76.5" font-size="12.5" font-weight="bold" fill="#f0f0f0">41</text>
<text x="1880.0" y="76.5" font-size="12.5" font-weight="bold" fill="#f0f0f0">43</text>
<text x="1943.2" y="76.5" font-size="12.5" font-weight="bold" fill="#f0f0f0">45</text>
<text x="2006.5" y="76.5" font-size="12.5" font-weight="bold" fill="#f0f0f0">47</text>
<text x="2069.8" y="76.5" font-size="12.5" font-weight="bold" fill="#f0f0f0">49</text>
<text x="2133.0" y="76.5" font-size="12.5" font-weight="bold" fill="#f0f0f0">51</text>
<text x="2196.3" y="76.5" font-size="12.5" font-weight="bold" fill="#f0f0f0">53</text>
<text x="2259.6" y="76.5" font-size="12.5" font-weight="bold" fill="#f0f0f0">55</text>
<text x="2322.8" y="76.5" font-size="12.5" font-weight="bold" fill="#f0f0f0">57</text>
<text x="2386.1" y="76.5" font-size="12.5" font-weight="bold" fill="#f0f0f0">59</text>
<text x="2449.4" y="76.5" font-size="12.5" font-weight="bold" fill="#f0f0f0">61</text>
<text x="2512.6" y="76.5" font-size="12.5" font-weight="bold" fill="#f0f0f0">63</text>
<text x="2575.9" y="76.5" font-size="12.5" font-weight="bold" fill="#f0f0f0">65</text>
<text x="2639.2" y="76.5" font-size="12.5" font-weight="bold" fill="#f0f0f0">67</text>
<text x="2702.4" y="76.5" font-size="12.5" font-weight="bold" fill="#f0f0f0">69</text>
<text x="2765.7" y="76.5" font-size="12.5" font-weight="bold" fill="#f0f0f0">71</text>
<text x="2829.0" y="76.5" font-size="12.5" font-weight="bold" fill="#f0f0f0">73</text>
<path d="M610.1 53.5V78.5M673.4 53.5V78.5M736.6 53.5V78.5M799.9 53.5V78.5M863.2 53.5V78.5M926.4 53.5V78.5M989.7 53.5V78.5M1053.0 53.5V78.5M1116.2 53.5V78.5M1179.5 53.5V78.5M1242.8 53.5V78.5M1306.0 53.5V78.5M1369.3 53.5V78.5M1432.6 53.5V78.5M1495.9 53.5V78.5M1559.1 53.5V78.5M1622.4 53.5V78.5M1685.7 53.5V78.5M1748.9 53.5V78.5M1812.2 53.5V78.5M1875.5 53.5V78.5M1938.7 53.5V78.5M2002.0 53.5V78.5M2065.3 53.5V78.5M2128.5 53.5V78.5M2191.8 53.5V78.5M2255.1 53.5V78.5M2318.3 53.5V78.5M2381.6 53.5V78.5M2444.9 53.5V78.5M2508.1 53.5V78.5M2571.4 53.5V78.5M2634.7 53.5V78.5M2697.9 53.5V78.5M2761.2 53.5V78.5M2824.5 53.5V78.5M2887.7 53.5V78.5" stroke="#e8e8e8" stroke-width="1.6"/>
<path d="M578.5 79.5v2M610.1 79.5v2M641.7 79.5v2M673.4 79.5v2M705.0 79.5v2M736.6 79.5v2M768.3 79.5v2M799.9 79.5v2M831.5 79.5v2M863.2 79.5v2M894.8 79.5v2M926.4 79.5v2M958.1 79.5v2M989.7 79.5v2M1021.3 79.5v2M1053.0 79.5v2M1084.6 79.5v2M1116.2 79.5v2M1147.9 79.5v2M1179.5 79.5v2M1211.1 79.5v2M1242.8 79.5v2M1274.4 79.5v2M1306.0 79.5v2M1337.7 79.5v2M1369.3 79.5v2M1401.0 79.5v2M1432.6 79.5v2M1464.2 79.5v2M1495.9 79.5v2M1527.5 79.5v2M1559.1 79.5v2M1590.8 79.5v2M1622.4 79.5v2M1654.0 79.5v2M1685.7 79.5v2M1717.3 79.5v2M1748.9 79.5v2M1780.6 79.5v2M1812.2 79.5v2M1843.8 79.5v2M1875.5 79.5v2M1907.1 79.5v2M1938.7 79.5v2M1970.4 79.5v2M2002.0 79.5v2M2033.6 79.5v2M2065.3 79.5v2M2096.9 79.5v2M2128.5 79.5v2M2160.2 79.5v2M2191.8 79.5v2M2223.4 79.5v2M2255.1 79.5v2M2286.7 79.5v2M2318.3 79.5v2M2350.0 79.5v2M2381.6 79.5v2M2413.2 79.5v2M2444.9 79.5v2M2476.5 79.5v2M2508.1 79.5v2M2539.8 79.5v2M2571.4 79.5v2M2603.0 79.5v2M2634.7 79.5v2M2666.3 79.5v2M2697.9 79.5v2M2729.6 79.5v2M2761.2 79.5v2M2792.8 79.5v2M2824.5 79.5v2M2856.1 79.5v2M2887.7 79.5v2" stroke="#9a9c9e" stroke-width="1.4"/>
<rect x="2119.7" y="53.5" width="1.6" height="29" fill="#f2f2f2"/>
<g clip-path="url(#arrclip)">
<rect x="572" y="84.4" width="2318" height="1650.6" fill="#242527"/>
<rect x="2002.0" y="84.4" width="253.1" height="1650.6" fill="#444547"/>
<rect x="572" y="90.1" width="2318" height="1" fill="#1e1f21"/>
<rect x="572" y="91.1" width="2318" height="2.2" fill="#3b3c3e"/>
<rect x="572" y="139.0" width="2318" height="1" fill="#1e1f21"/>
<rect x="572" y="140.0" width="2318" height="2.2" fill="#3b3c3e"/>
<rect x="572" y="187.9" width="2318" height="1" fill="#1e1f21"/>
<rect x="572" y="188.9" width="2318" height="2.2" fill="#3b3c3e"/>
<rect x="572" y="236.9" width="2318" height="1" fill="#1e1f21"/>
<rect x="572" y="237.9" width="2318" height="2.2" fill="#3b3c3e"/>
<rect x="572" y="285.8" width="2318" height="1" fill="#1e1f21"/>
<rect x="572" y="286.8" width="2318" height="2.2" fill="#3b3c3e"/>
<rect x="572" y="334.7" width="2318" height="1" fill="#1e1f21"/>
<rect x="572" y="335.7" width="2318" height="2.2" fill="#3b3c3e"/>
<rect x="572" y="383.6" width="2318" height="1" fill="#1e1f21"/>
<rect x="572" y="384.6" width="2318" height="2.2" fill="#3b3c3e"/>
<rect x="572" y="432.5" width="2318" height="1" fill="#1e1f21"/>
<rect x="572" y="433.5" width="2318" height="2.2" fill="#3b3c3e"/>
<rect x="572" y="481.5" width="2318" height="1" fill="#1e1f21"/>
<rect x="572" y="482.5" width="2318" height="2.2" fill="#3b3c3e"/>
<rect x="572" y="530.4" width="2318" height="1" fill="#1e1f21"/>
<rect x="572" y="531.4" width="2318" height="2.2" fill="#3b3c3e"/>
<rect x="572" y="579.3" width="2318" height="1" fill="#1e1f21"/>
<rect x="572" y="580.3" width="2318" height="2.2" fill="#3b3c3e"/>
<rect x="572" y="628.2" width="2318" height="1" fill="#1e1f21"/>
<rect x="572" y="629.2" width="2318" height="2.2" fill="#3b3c3e"/>
<rect x="572" y="677.1" width="2318" height="1" fill="#1e1f21"/>
<rect x="572" y="678.1" width="2318" height="2.2" fill="#3b3c3e"/>
<rect x="572" y="726.1" width="2318" height="1" fill="#1e1f21"/>
<rect x="572" y="727.1" width="2318" height="2.2" fill="#3b3c3e"/>
<rect x="572" y="775.0" width="2318" height="1" fill="#1e1f21"/>
<rect x="572" y="776.0" width="2318" height="2.2" fill="#3b3c3e"/>
<rect x="572" y="823.9" width="2318" height="1" fill="#1e1f21"/>
<rect x="572" y="824.9" width="2318" height="2.2" fill="#3b3c3e"/>
<rect x="572" y="872.8" width="2318" height="1" fill="#1e1f21"/>
<rect x="572" y="873.8" width="2318" height="2.2" fill="#3b3c3e"/>
<rect x="572" y="921.7" width="2318" height="1" fill="#1e1f21"/>
<rect x="572" y="922.7" width="2318" height="2.2" fill="#3b3c3e"/>
<rect x="572" y="970.7" width="2318" height="1" fill="#1e1f21"/>
<rect x="572" y="971.7" width="2318" height="2.2" fill="#3b3c3e"/>
<rect x="572" y="1019.6" width="2318" height="1" fill="#1e1f21"/>
<rect x="572" y="1020.6" width="2318" height="2.2" fill="#3b3c3e"/>
<rect x="572" y="1068.5" width="2318" height="1" fill="#1e1f21"/>
<rect x="572" y="1069.5" width="2318" height="2.2" fill="#3b3c3e"/>
<rect x="572" y="1117.4" width="2318" height="1" fill="#1e1f21"/>
<rect x="572" y="1118.4" width="2318" height="2.2" fill="#3b3c3e"/>
<rect x="572" y="1166.3" width="2318" height="1" fill="#1e1f21"/>
<rect x="572" y="1167.3" width="2318" height="2.2" fill="#3b3c3e"/>
<rect x="572" y="1215.3" width="2318" height="1" fill="#1e1f21"/>
<rect x="572" y="1216.3" width="2318" height="2.2" fill="#3b3c3e"/>
<rect x="572" y="1264.2" width="2318" height="1" fill="#1e1f21"/>
<rect x="572" y="1265.2" width="2318" height="2.2" fill="#3b3c3e"/>
<rect x="572" y="1313.1" width="2318" height="1" fill="#1e1f21"/>
<rect x="572" y="1314.1" width="2318" height="2.2" fill="#3b3c3e"/>
<rect x="572" y="1362.0" width="2318" height="1" fill="#1e1f21"/>
<rect x="572" y="1363.0" width="2318" height="2.2" fill="#3b3c3e"/>
<rect x="572" y="1410.9" width="2318" height="1" fill="#1e1f21"/>
<rect x="572" y="1411.9" width="2318" height="2.2" fill="#3b3c3e"/>
<rect x="572" y="1459.9" width="2318" height="1" fill="#1e1f21"/>
<rect x="572" y="1460.9" width="2318" height="2.2" fill="#3b3c3e"/>
<rect x="572" y="1508.8" width="2318" height="1" fill="#1e1f21"/>
<rect x="572" y="1509.8" width="2318" height="2.2" fill="#3b3c3e"/>
<rect x="572" y="1557.7" width="2318" height="1" fill="#1e1f21"/>
<rect x="572" y="1558.7" width="2318" height="2.2" fill="#3b3c3e"/>
<rect x="572" y="1606.6" width="2318" height="1" fill="#1e1f21"/>
<rect x="572" y="1607.6" width="2318" height="2.2" fill="#3b3c3e"/>
<rect x="572" y="1655.5" width="2318" height="1" fill="#1e1f21"/>
<rect x="572" y="1656.5" width="2318" height="2.2" fill="#3b3c3e"/>
<rect x="572" y="1704.5" width="2318" height="1" fill="#1e1f21"/>
<rect x="572" y="1705.5" width="2318" height="2.2" fill="#3b3c3e"/>
<rect x="572" y="1753.4" width="2318" height="1" fill="#1e1f21"/>
<rect x="572" y="1754.4" width="2318" height="2.2" fill="#3b3c3e"/>
<path d="M581.0 84.4V1735M612.6 84.4V1735M644.2 84.4V1735M675.9 84.4V1735M707.5 84.4V1735M739.1 84.4V1735M770.8 84.4V1735M802.4 84.4V1735M834.0 84.4V1735M865.7 84.4V1735M897.3 84.4V1735M928.9 84.4V1735M960.6 84.4V1735M992.2 84.4V1735M1023.8 84.4V1735M1055.5 84.4V1735M1087.1 84.4V1735M1118.7 84.4V1735M1150.4 84.4V1735M1182.0 84.4V1735M1213.6 84.4V1735M1245.3 84.4V1735M1276.9 84.4V1735M1308.5 84.4V1735M1340.2 84.4V1735M1371.8 84.4V1735M1403.5 84.4V1735M1435.1 84.4V1735M1466.7 84.4V1735M1498.4 84.4V1735M1530.0 84.4V1735M1561.6 84.4V1735M1593.3 84.4V1735M1624.9 84.4V1735M1656.5 84.4V1735M1688.2 84.4V1735M1719.8 84.4V1735M1751.4 84.4V1735M1783.1 84.4V1735M1814.7 84.4V1735M1846.3 84.4V1735M1878.0 84.4V1735M1909.6 84.4V1735M1941.2 84.4V1735M1972.9 84.4V1735M2004.5 84.4V1735M2036.1 84.4V1735M2067.8 84.4V1735M2099.4 84.4V1735M2131.0 84.4V1735M2162.7 84.4V1735M2194.3 84.4V1735M2225.9 84.4V1735M2257.6 84.4V1735M2289.2 84.4V1735M2320.8 84.4V1735M2352.5 84.4V1735M2384.1 84.4V1735M2415.7 84.4V1735M2447.4 84.4V1735M2479.0 84.4V1735M2510.6 84.4V1735M2542.3 84.4V1735M2573.9 84.4V1735M2605.5 84.4V1735M2637.2 84.4V1735M2668.8 84.4V1735M2700.4 84.4V1735M2732.1 84.4V1735M2763.7 84.4V1735M2795.3 84.4V1735M2827.0 84.4V1735M2858.6 84.4V1735M2890.2 84.4V1735" stroke="#1c1d1f" stroke-width="1"/>
<path d="M579.4 84.4V1735M611.0 84.4V1735M642.6 84.4V1735M674.3 84.4V1735M705.9 84.4V1735M737.5 84.4V1735M769.2 84.4V1735M800.8 84.4V1735M832.4 84.4V1735M864.1 84.4V1735M895.7 84.4V1735M927.3 84.4V1735M959.0 84.4V1735M990.6 84.4V1735M1022.2 84.4V1735M1053.9 84.4V1735M1085.5 84.4V1735M1117.1 84.4V1735M1148.8 84.4V1735M1180.4 84.4V1735M1212.0 84.4V1735M1243.7 84.4V1735M1275.3 84.4V1735M1306.9 84.4V1735M1338.6 84.4V1735M1370.2 84.4V1735M1401.9 84.4V1735M1433.5 84.4V1735M1465.1 84.4V1735M1496.8 84.4V1735M1528.4 84.4V1735M1560.0 84.4V1735M1591.7 84.4V1735M1623.3 84.4V1735M1654.9 84.4V1735M1686.6 84.4V1735M1718.2 84.4V1735M1749.8 84.4V1735M1781.5 84.4V1735M1813.1 84.4V1735M1844.7 84.4V1735M1876.4 84.4V1735M1908.0 84.4V1735M1939.6 84.4V1735M1971.3 84.4V1735M2002.9 84.4V1735M2034.5 84.4V1735M2066.2 84.4V1735M2097.8 84.4V1735M2129.4 84.4V1735M2161.1 84.4V1735M2192.7 84.4V1735M2224.3 84.4V1735M2256.0 84.4V1735M2287.6 84.4V1735M2319.2 84.4V1735M2350.9 84.4V1735M2382.5 84.4V1735M2414.1 84.4V1735M2445.8 84.4V1735M2477.4 84.4V1735M2509.0 84.4V1735M2540.7 84.4V1735M2572.3 84.4V1735M2603.9 84.4V1735M2635.6 84.4V1735M2667.2 84.4V1735M2698.8 84.4V1735M2730.5 84.4V1735M2762.1 84.4V1735M2793.7 84.4V1735M2825.4 84.4V1735M2857.0 84.4V1735M2888.6 84.4V1735" stroke="#636467" stroke-width="2.2"/>
<rect x="572" y="113.0" width="2318" height="1.6" fill="#8e959c"/>
<rect x="572" y="602.2" width="2318" height="1.6" fill="#8e959c"/>
<rect x="572" y="797.9" width="2318" height="1.6" fill="#8e959c"/>
<rect x="572" y="1629.5" width="2318" height="1.6" fill="#8e959c"/>
<rect x="610.1" y="85.3" width="2159.9" height="5" fill="#efc245"/>
<rect x="611.1" y="86.3" width="2157.9" height="3" fill="#d9aa35"/>
<rect x="610.3" y="142.7" width="103.9" height="46" fill="#15150f"/>
<rect x="610.8" y="143.2" width="102.9" height="45" fill="#efc245"/>
<rect x="612.4" y="144.8" width="99.7" height="41.8" fill="#b8973a"/>
<path d="M641.7 144.7v42M673.4 144.7v42M705 144.7v42" stroke="#c99f2a" stroke-width="1.2"/>
<path d="M613.8 176h4M629.6 176h4M637.5 181.5h4M645.4 176h4M661.2 176h4M669.1 181.5h4M677 176h4M684.9 181.5h4M692.8 176h4M639.1 168.9h2.5" stroke="#7a5c14" stroke-width="4.6" opacity="0.8"/>
<rect x="737" y="142.7" width="254" height="46" fill="#15150f"/>
<rect x="737.5" y="143.2" width="253" height="45" fill="#efc245"/>
<rect x="739.1" y="144.8" width="249.8" height="41.8" fill="#b8973a"/>
<path d="M768.3 144.7v42M799.9 144.7v42M831.5 144.7v42M863.2 144.7v42M894.8 144.7v42M926.4 144.7v42M958.1 144.7v42" stroke="#c99f2a" stroke-width="1.2"/>
<rect x="739.5" y="169.2" width="249" height="4.4" fill="#7a5c14" opacity="0.85"/>
<path d="M740.5 181.5h4M756.3 176h4M764.2 181.5h4M772.1 176h4M787.9 176h4M795.8 176h4M803.7 176h4M811.6 181.5h4M819.5 181.5h4M827.4 181.5h4M835.3 181.5h4M851.1 176h4M859 176h4M866.9 176h4M882.7 176h4M890.6 181.5h4M898.5 181.5h4M906.4 181.5h4M914.3 176h4M922.2 176h4M930.1 181.5h4M938 181.5h4M945.9 181.5h4M961.7 176h4M977.5 181.5h4M983.7 168.8h2.5M771.9 167.2h2.5M917.8 168.4h2.5" stroke="#7a5c14" stroke-width="4.6" opacity="0.8"/>
<rect x="990" y="142.7" width="506.5" height="46" fill="#15150f"/>
<rect x="990.5" y="143.2" width="505.5" height="45" fill="#efc245"/>
<rect x="992.1" y="144.8" width="502.3" height="41.8" fill="#b8973a"/>
<path d="M1021.3 144.7v42M1053 144.7v42M1084.6 144.7v42M1116.2 144.7v42M1147.9 144.7v42M1179.5 144.7v42M1211.1 144.7v42M1242.8 144.7v42M1274.4 144.7v42M1306 144.7v42M1337.7 144.7v42M1369.3 144.7v42M1401 144.7v42M1432.6 144.7v42M1464.2 144.7v42" stroke="#c99f2a" stroke-width="1.2"/>
<rect x="992.5" y="160.7" width="501.5" height="4.4" fill="#7a5c14" opacity="0.85"/>
<path d="M993.5 176h4M1009.3 181.5h4M1017.2 181.5h4M1025.1 176h4M1040.9 176h4M1056.7 176h4M1064.6 176h4M1072.5 176h4M1080.4 181.5h4M1088.3 176h4M1104.1 176h4M1112 181.5h4M1119.9 181.5h4M1127.8 181.5h4M1135.7 176h4M1143.6 181.5h4M1151.5 176h4M1159.4 176h4M1167.3 181.5h4M1175.2 176h4M1183.1 176h4M1198.9 176h4M1206.8 181.5h4M1214.7 176h4M1230.5 176h4M1246.3 176h4M1254.2 181.5h4M1262.1 176h4M1270 181.5h4M1277.9 176h4M1285.8 181.5h4M1293.7 176h4M1309.5 176h4M1325.3 176h4M1341.1 176h4M1349 181.5h4M1356.9 176h4M1372.7 176h4M1380.6 181.5h4M1388.5 176h4M1396.4 181.5h4M1404.3 176h4M1420.1 176h4M1435.9 176h4M1443.8 181.5h4M1451.7 176h4M1459.6 181.5h4M1467.5 181.5h4M1475.4 181.5h4M1483.3 176h4M1032.8 168.7h2.5M1355.2 168.9h2.5M1090.3 168.5h2.5M1024.6 168.2h2.5M1130.8 166.9h2.5M1429.3 166.5h2.5M1254.3 168.8h2.5" stroke="#7a5c14" stroke-width="4.6" opacity="0.8"/>
<rect x="1495.5" y="142.7" width="255" height="46" fill="#15150f"/>
<rect x="1496" y="143.2" width="254" height="45" fill="#efc245"/>
<rect x="1497.6" y="144.8" width="250.8" height="41.8" fill="#b8973a"/>
<path d="M1527.5 144.7v42M1559.1 144.7v42M1590.8 144.7v42M1622.4 144.7v42M1654 144.7v42M1685.7 144.7v42M1717.3 144.7v42" stroke="#c99f2a" stroke-width="1.2"/>
<rect x="1498" y="165.2" width="250" height="4.4" fill="#7a5c14" opacity="0.85"/>
<path d="M1499 181.5h4M1506.9 181.5h4M1514.8 176h4M1530.6 181.5h4M1538.5 181.5h4M1546.4 176h4M1554.3 181.5h4M1562.2 176h4M1578 176h4M1593.8 181.5h4M1609.6 176h4M1617.5 181.5h4M1625.4 176h4M1633.3 181.5h4M1641.2 176h4M1649.1 176h4M1657 176h4M1664.9 181.5h4M1672.8 176h4M1688.6 176h4M1696.5 181.5h4M1704.4 176h4M1720.2 176h4M1728.1 176h4M1736 181.5h4M1607.4 168.1h2.5M1574.5 167.7h2.5M1595.2 167.3h2.5" stroke="#7a5c14" stroke-width="4.6" opacity="0.8"/>
<rect x="1749.5" y="142.7" width="253" height="46" fill="#15150f"/>
<rect x="1750" y="143.2" width="252" height="45" fill="#efc245"/>
<rect x="1751.6" y="144.8" width="248.8" height="41.8" fill="#b8973a"/>
<path d="M1780.6 144.7v42M1812.2 144.7v42M1843.8 144.7v42M1875.5 144.7v42M1907.1 144.7v42M1938.7 144.7v42M1970.4 144.7v42" stroke="#c99f2a" stroke-width="1.2"/>
<rect x="1752" y="167.2" width="248" height="4.4" fill="#7a5c14" opacity="0.85"/>
<path d="M1753 181.5h4M1760.9 181.5h4M1768.8 181.5h4M1776.7 181.5h4M1784.6 176h4M1800.4 176h4M1808.3 181.5h4M1816.2 176h4M1824.1 176h4M1832 181.5h4M1847.8 176h4M1863.6 176h4M1871.5 181.5h4M1879.4 176h4M1895.2 176h4M1911 181.5h4M1926.8 176h4M1934.7 176h4M1942.6 176h4M1950.5 181.5h4M1958.4 176h4M1966.3 181.5h4M1974.2 176h4M1982.1 181.5h4M1990 176h4M1878 167.5h2.5M1899.9 167.5h2.5M1794 167.1h2.5" stroke="#7a5c14" stroke-width="4.6" opacity="0.8"/>
<rect x="2001.5" y="142.7" width="255" height="46" fill="#15150f"/>
<rect x="2002" y="143.2" width="254" height="45" fill="#efc245"/>
<rect x="2003.6" y="144.8" width="250.8" height="41.8" fill="#b8973a"/>
<path d="M2033.6 144.7v42M2065.3 144.7v42M2096.9 144.7v42M2128.5 144.7v42M2160.2 144.7v42M2191.8 144.7v42M2223.4 144.7v42" stroke="#c99f2a" stroke-width="1.2"/>
<rect x="2004" y="167.2" width="250" height="4.4" fill="#7a5c14" opacity="0.85"/>
<path d="M2005 176h4M2020.8 176h4M2036.6 176h4M2052.4 181.5h4M2060.3 181.5h4M2068.2 176h4M2084 181.5h4M2091.9 176h4M2099.8 176h4M2107.7 176h4M2115.6 181.5h4M2123.5 181.5h4M2131.4 176h4M2139.3 181.5h4M2147.2 181.5h4M2163 181.5h4M2170.9 181.5h4M2178.8 181.5h4M2186.7 181.5h4M2194.6 176h4M2202.5 181.5h4M2210.4 176h4M2226.2 181.5h4M2242 176h4M2225.1 167.1h2.5M2095.1 166.7h2.5M2042.6 166.4h2.5" stroke="#7a5c14" stroke-width="4.6" opacity="0.8"/>
<rect x="2255.5" y="142.7" width="253" height="46" fill="#15150f"/>
<rect x="2256" y="143.2" width="252" height="45" fill="#efc245"/>
<rect x="2257.6" y="144.8" width="248.8" height="41.8" fill="#b8973a"/>
<path d="M2286.7 144.7v42M2318.3 144.7v42M2350 144.7v42M2381.6 144.7v42M2413.2 144.7v42M2444.9 144.7v42M2476.5 144.7v42" stroke="#c99f2a" stroke-width="1.2"/>
<rect x="2258" y="167.2" width="248" height="4.4" fill="#7a5c14" opacity="0.85"/>
<path d="M2259 176h4M2274.8 176h4M2282.7 176h4M2290.6 176h4M2298.5 181.5h4M2306.4 176h4M2322.2 176h4M2338 176h4M2345.9 181.5h4M2353.8 176h4M2361.7 181.5h4M2369.6 176h4M2377.5 181.5h4M2385.4 176h4M2401.2 176h4M2409.1 181.5h4M2417 176h4M2424.9 176h4M2432.8 181.5h4M2448.6 176h4M2464.4 176h4M2472.3 181.5h4M2480.2 176h4M2496 176h4M2385.5 168.2h2.5M2429.9 168.6h2.5M2497.3 166.3h2.5" stroke="#7a5c14" stroke-width="4.6" opacity="0.8"/>
<rect x="2507.5" y="142.7" width="255" height="46" fill="#15150f"/>
<rect x="2508" y="143.2" width="254" height="45" fill="#efc245"/>
<rect x="2509.6" y="144.8" width="250.8" height="41.8" fill="#b8973a"/>
<path d="M2539.8 144.7v42M2571.4 144.7v42M2603 144.7v42M2634.7 144.7v42M2666.3 144.7v42M2697.9 144.7v42M2729.6 144.7v42" stroke="#c99f2a" stroke-width="1.2"/>
<rect x="2510" y="167.2" width="250" height="4.4" fill="#7a5c14" opacity="0.85"/>
<path d="M2511 176h4M2518.9 181.5h4M2526.8 181.5h4M2534.7 181.5h4M2542.6 181.5h4M2550.5 176h4M2558.4 176h4M2566.3 176h4M2574.2 176h4M2590 181.5h4M2597.9 181.5h4M2605.8 176h4M2613.7 181.5h4M2621.6 176h4M2629.5 181.5h4M2637.4 176h4M2645.3 176h4M2653.2 176h4M2669 181.5h4M2676.9 181.5h4M2684.8 176h4M2692.7 176h4M2700.6 181.5h4M2708.5 181.5h4M2716.4 176h4M2724.3 181.5h4M2732.2 176h4M2740.1 181.5h4M2748 176h4M2755.9 181.5h4M2641.1 168.8h2.5M2691 167.1h2.5M2752.2 166.6h2.5" stroke="#7a5c14" stroke-width="4.6" opacity="0.8"/>
<rect x="610.3" y="191.6" width="103.9" height="46" fill="#15150f"/>
<rect x="610.8" y="192.1" width="102.9" height="45" fill="#efc245"/>
<rect x="612.4" y="193.7" width="99.7" height="41.8" fill="#b8973a"/>
<path d="M641.7 193.6v42M673.4 193.6v42M705 193.6v42" stroke="#c99f2a" stroke-width="1.2"/>
<rect x="612.1" y="196.1" width="100.3" height="12" fill="#8f7020"/>
<path d="M613.8 215.6H710.7" stroke="#7a5c14" stroke-width="38" stroke-dasharray="1.2 2.75" opacity="0.28"/>
<path d="M612.1 214.1H712.4M612.1 223.1H712.4" stroke="#7a5c14" stroke-width="1" opacity="0.2"/>
<rect x="612.8" y="194.1" width="26" height="18" fill="#e2c777"/>
<text x="615.8" y="207.6" font-size="12" font-weight="bold" fill="#1a1a1a">1</text>
<path d="M624.8 199.1h8l-4 5z" fill="#1a1a1a"/>
<rect x="737" y="191.6" width="254" height="46" fill="#15150f"/>
<rect x="737.5" y="192.1" width="253" height="45" fill="#efc245"/>
<rect x="739.1" y="193.7" width="249.8" height="41.8" fill="#b8973a"/>
<path d="M768.3 193.6v42M799.9 193.6v42M831.5 193.6v42M863.2 193.6v42M894.8 193.6v42M926.4 193.6v42M958.1 193.6v42" stroke="#c99f2a" stroke-width="1.2"/>
<rect x="738.8" y="196.1" width="250.4" height="12" fill="#8f7020"/>
<path d="M740.5 215.6H987.5" stroke="#7a5c14" stroke-width="38" stroke-dasharray="1.2 2.75" opacity="0.28"/>
<path d="M738.8 214.1H989.2M738.8 223.1H989.2" stroke="#7a5c14" stroke-width="1" opacity="0.2"/>
<rect x="739.5" y="194.1" width="26" height="18" fill="#e2c777"/>
<text x="742.5" y="207.6" font-size="12" font-weight="bold" fill="#1a1a1a">1</text>
<path d="M751.5 199.1h8l-4 5z" fill="#1a1a1a"/>
<rect x="1749.5" y="191.6" width="1013" height="46" fill="#15150f"/>
<rect x="1750" y="192.1" width="1012" height="45" fill="#efc245"/>
<rect x="1751.6" y="193.7" width="1008.8" height="41.8" fill="#b8973a"/>
<path d="M1780.6 193.6v42M1812.2 193.6v42M1843.8 193.6v42M1875.5 193.6v42M1907.1 193.6v42M1938.7 193.6v42M1970.4 193.6v42M2002 193.6v42M2033.6 193.6v42M2065.3 193.6v42M2096.9 193.6v42M2128.5 193.6v42M2160.2 193.6v42M2191.8 193.6v42M2223.4 193.6v42M2255.1 193.6v42M2286.7 193.6v42M2318.3 193.6v42M2350 193.6v42M2381.6 193.6v42M2413.2 193.6v42M2444.9 193.6v42M2476.5 193.6v42M2508.1 193.6v42M2539.8 193.6v42M2571.4 193.6v42M2603 193.6v42M2634.7 193.6v42M2666.3 193.6v42M2697.9 193.6v42M2729.6 193.6v42" stroke="#c99f2a" stroke-width="1.2"/>
<rect x="1751.3" y="196.1" width="1009.4" height="12" fill="#8f7020"/>
<path d="M1753 215.6H2759" stroke="#7a5c14" stroke-width="38" stroke-dasharray="1.2 2.75" opacity="0.28"/>
<path d="M1751.3 214.1H2760.7M1751.3 223.1H2760.7" stroke="#7a5c14" stroke-width="1" opacity="0.2"/>
<rect x="1752" y="194.1" width="26" height="18" fill="#e2c777"/>
<text x="1755" y="207.6" font-size="12" font-weight="bold" fill="#1a1a1a">1</text>
<path d="M1764 199.1h8l-4 5z" fill="#1a1a1a"/>
<rect x="737" y="240.6" width="254" height="46" fill="#15150f"/>
<rect x="737.5" y="241.1" width="253" height="45" fill="#efc245"/>
<rect x="739.1" y="242.7" width="249.8" height="41.8" fill="#b8973a"/>
<path d="M768.3 242.6v42M799.9 242.6v42M831.5 242.6v42M863.2 242.6v42M894.8 242.6v42M926.4 242.6v42M958.1 242.6v42" stroke="#c99f2a" stroke-width="1.2"/>
<path d="M739.5 251.6l0 -5 2 0.7 2 0.6 2 -0.2 2 0.7 2 0.2 2 0.2 2 0.1 2 0.1 2 0.5 2 0 2 0.2 2 0.5 2 0.2 2 0.1 2 -0.1 2 0.2 2 0 2 0.1 2 0.2 2 0.1 2 0.1 2 0.1 2 -0.1 2 0.1 2 0 2 0 2 0 2 0 2 0 0 1.1 -2 0 -2 0 -2 0 -2 0 -2 0 -2 0.1 -2 -0.1 -2 0.1 -2 0.1 -2 0.1 -2 0.1 -2 0.1 -2 0 -2 0.2 -2 -0.1 -2 0.1 -2 0.2 -2 0.4 -2 0.2 -2 0 -2 0.5 -2 0 -2 0.1 -2 0.2 -2 0.2 -2 0.6 -2 -0.2 -2 0.6 -2 0.6z" fill="#7a5c14"/>
<rect x="797.5" y="251" width="190" height="1.2" fill="#7a5c14"/>
<path d="M739.5 273.1l0 -2.2 2 0.1 2 0.1 2 0.1 2 0.4 2 0.1 2 0.1 2 0 2 0.3 2 0 2 0.1 2 0.2 2 0 2 0.1 2 0.1 2 0 2 0.2 2 0 2 -0.1 2 0.1 2 0 2 0 2 0 2 -0.1 2 0.1 2 0 2 0 2 0 2 0 2 0 0 1.1 -2 0 -2 0 -2 0 -2 0 -2 0 -2 0.1 -2 -0.1 -2 0 -2 0 -2 0 -2 0.1 -2 -0.1 -2 0 -2 0.2 -2 0 -2 0.1 -2 0.1 -2 0 -2 0.2 -2 0.1 -2 0 -2 0.3 -2 0 -2 0.1 -2 0.1 -2 0.4 -2 0.1 -2 0 -2 0.1z" fill="#7a5c14"/>
<rect x="797.5" y="272.5" width="190" height="1.2" fill="#7a5c14"/>
<rect x="750.5" y="268.1" width="12" height="12" fill="#e2c777"/>
<path d="M752.5 278.1L760 271.1V278.1z" fill="#7a5c14"/>
<rect x="1749.5" y="240.6" width="253" height="46" fill="#15150f"/>
<rect x="1750" y="241.1" width="252" height="45" fill="#efc245"/>
<rect x="1751.6" y="242.7" width="248.8" height="41.8" fill="#b8973a"/>
<path d="M1780.6 242.6v42M1812.2 242.6v42M1843.8 242.6v42M1875.5 242.6v42M1907.1 242.6v42M1938.7 242.6v42M1970.4 242.6v42" stroke="#c99f2a" stroke-width="1.2"/>
<path d="M1752 251.6l0 -4.4 2 0.3 2 0.1 2 0.1 2 0.8 2 0.3 2 0.2 2 -0.1 2 0.6 2 -0.1 2 0.2 2 0.4 2 0 2 0.2 2 0.1 2 0 2 0.4 2 0.1 2 -0.1 2 0.2 2 0.1 2 0 2 0.1 2 0 2 0.2 2 0 2 0 2 0 2 0 2 0 0 1.1 -2 0 -2 0 -2 0 -2 0 -2 0 -2 0.1 -2 0 -2 0.1 -2 0 -2 0.1 -2 0.2 -2 -0.1 -2 0.1 -2 0.3 -2 0 -2 0.1 -2 0.2 -2 0 -2 0.4 -2 0.2 -2 -0.1 -2 0.5 -2 -0.1 -2 0.2 -2 0.3 -2 0.7 -2 0.1 -2 0.1 -2 0.3z" fill="#7a5c14"/>
<rect x="1810" y="251" width="189" height="1.2" fill="#7a5c14"/>
<path d="M1752 273.1l0 -2.2 2 0.1 2 0.1 2 -0.1 2 0.3 2 0.1 2 0.3 2 0 2 0 2 0.2 2 0 2 0.1 2 0.2 2 0.1 2 -0.1 2 0.2 2 0.1 2 -0.1 2 0 2 0 2 0 2 0.1 2 0 2 0 2 -0.1 2 0.1 2 0 2 0 2 0 2 0 0 0.9 -2 0 -2 0 -2 0 -2 0 -2 0.1 -2 -0.1 -2 0 -2 0 -2 0.1 -2 0 -2 0 -2 0 -2 -0.1 -2 0.1 -2 0.1 -2 -0.1 -2 0.1 -2 0.2 -2 0.1 -2 0 -2 0.2 -2 0 -2 0 -2 0.3 -2 0.1 -2 0.3 -2 -0.1 -2 0.1 -2 0.1z" fill="#7a5c14"/>
<rect x="1810" y="272.5" width="189" height="1.2" fill="#7a5c14"/>
<rect x="1763" y="268.1" width="12" height="12" fill="#e2c777"/>
<path d="M1765 278.1L1772.5 271.1V278.1z" fill="#7a5c14"/>
<rect x="2001.5" y="240.6" width="255" height="46" fill="#15150f"/>
<rect x="2002" y="241.1" width="254" height="45" fill="#efc245"/>
<rect x="2003.6" y="242.7" width="250.8" height="41.8" fill="#b8973a"/>
<path d="M2033.6 242.6v42M2065.3 242.6v42M2096.9 242.6v42M2128.5 242.6v42M2160.2 242.6v42M2191.8 242.6v42M2223.4 242.6v42" stroke="#c99f2a" stroke-width="1.2"/>
<path d="M2004 251.6l0 -4.5 2 0.3 2 0.3 2 -0.2 2 0.7 2 0.1 2 0.7 2 0 2 0.1 2 0.4 2 0 2 0.2 2 0.4 2 0.3 2 -0.1 2 0.3 2 0.1 2 -0.1 2 0.1 2 0.1 2 0.1 2 0.2 2 0.1 2 0 2 -0.1 2 0.1 2 0 2 0 2 0 2 0 0 0.9 -2 0 -2 0 -2 0 -2 0 -2 0.1 -2 -0.1 -2 0 -2 0.1 -2 0.2 -2 0.1 -2 0.1 -2 0.1 -2 -0.1 -2 0.1 -2 0.3 -2 -0.1 -2 0.3 -2 0.3 -2 0.2 -2 0 -2 0.4 -2 0 -2 0 -2 0.6 -2 0.1 -2 0.6 -2 -0.1 -2 0.3 -2 0.2z" fill="#7a5c14"/>
<rect x="2062" y="251" width="191" height="1.2" fill="#7a5c14"/>
<path d="M2004 273.1l0 -2.5 2 0.2 2 0.1 2 0.4 2 0 2 0.1 2 0.1 2 0.3 2 0 2 0.1 2 0.1 2 0 2 0.2 2 0.1 2 0 2 0.1 2 0.1 2 0 2 0 2 0.1 2 -0.1 2 0 2 0 2 -0.1 2 0 2 0 2 0 2 0.1 2 0 2 -0.1 0 1.2 -2 -0.1 -2 0 -2 0.1 -2 0 -2 0 -2 0 -2 0 -2 0 -2 0 -2 -0.1 -2 0.1 -2 0 -2 0 -2 0.1 -2 0.1 -2 0 -2 0.1 -2 0.2 -2 0 -2 0.1 -2 0.1 -2 0 -2 0.3 -2 0.1 -2 0.1 -2 0 -2 0.4 -2 0.1 -2 0.2z" fill="#7a5c14"/>
<rect x="2062" y="272.5" width="191" height="1.2" fill="#7a5c14"/>
<rect x="2015" y="268.1" width="12" height="12" fill="#e2c777"/>
<path d="M2017 278.1L2024.5 271.1V278.1z" fill="#7a5c14"/>
<rect x="2255.5" y="240.6" width="253" height="46" fill="#15150f"/>
<rect x="2256" y="241.1" width="252" height="45" fill="#efc245"/>
<rect x="2257.6" y="242.7" width="248.8" height="41.8" fill="#b8973a"/>
<path d="M2286.7 242.6v42M2318.3 242.6v42M2350 242.6v42M2381.6 242.6v42M2413.2 242.6v42M2444.9 242.6v42M2476.5 242.6v42" stroke="#c99f2a" stroke-width="1.2"/>
<path d="M2258 251.6l0 -5 2 0.4 2 0.2 2 0.8 2 0 2 0.1 2 0.3 2 0.7 2 0 2 0.2 2 0.2 2 0 2 0.3 2 0.2 2 0 2 0.2 2 0.2 2 0.1 2 0 2 0.2 2 0 2 0.1 2 0.1 2 0 2 0 2 0.1 2 0 2 0.1 2 0 2 -0.1 0 1.2 -2 -0.1 -2 0 -2 0.1 -2 0 -2 0.1 -2 0 -2 0 -2 0.1 -2 0 -2 0 -2 0.2 -2 0 -2 0.1 -2 0.2 -2 0.2 -2 0 -2 0.2 -2 0.3 -2 0 -2 0.2 -2 0.2 -2 0 -2 0.7 -2 0.3 -2 0.1 -2 0 -2 0.8 -2 0.2 -2 0.4z" fill="#7a5c14"/>
<rect x="2316" y="251" width="189" height="1.2" fill="#7a5c14"/>
<path d="M2258 273.1l0 -2.5 2 0.2 2 0.1 2 0.2 2 0.2 2 0.3 2 -0.1 2 0.3 2 0.1 2 0.2 2 0 2 0.2 2 0.1 2 0 2 0 2 0.1 2 0.1 2 0 2 0 2 0 2 0 2 0 2 0 2 0 2 0 2 0 2 0 2 0 2 0 2 0 0 1.1 -2 0 -2 0 -2 0 -2 0 -2 0 -2 0 -2 0 -2 0 -2 0 -2 0 -2 0 -2 0 -2 0 -2 0.1 -2 0.1 -2 0 -2 0 -2 0 -2 0.2 -2 0 -2 0.1 -2 0.1 -2 0.3 -2 -0.1 -2 0.3 -2 0.2 -2 0.2 -2 0.1 -2 0.2z" fill="#7a5c14"/>
<rect x="2316" y="272.5" width="189" height="1.2" fill="#7a5c14"/>
<rect x="2269" y="268.1" width="12" height="12" fill="#e2c777"/>
<path d="M2271 278.1L2278.5 271.1V278.1z" fill="#7a5c14"/>
<rect x="2507.5" y="240.6" width="255" height="46" fill="#15150f"/>
<rect x="2508" y="241.1" width="254" height="45" fill="#efc245"/>
<rect x="2509.6" y="242.7" width="250.8" height="41.8" fill="#b8973a"/>
<path d="M2539.8 242.6v42M2571.4 242.6v42M2603 242.6v42M2634.7 242.6v42M2666.3 242.6v42M2697.9 242.6v42M2729.6 242.6v42" stroke="#c99f2a" stroke-width="1.2"/>
<path d="M2510 251.6l0 -5 2 0.4 2 0.2 2 0.3 2 0.4 2 0.7 2 -0.1 2 0.6 2 0.3 2 0.3 2 0 2 0.3 2 0.1 2 0 2 0.1 2 0.1 2 0.3 2 0.1 2 0 2 0 2 0 2 0.1 2 0 2 0.1 2 0 2 0.1 2 0 2 0 2 0 2 0 0 1.1 -2 0 -2 0 -2 0 -2 0 -2 0.1 -2 0 -2 0.1 -2 0 -2 0.1 -2 0 -2 0 -2 0 -2 0.1 -2 0.3 -2 0.1 -2 0.1 -2 0 -2 0.1 -2 0.3 -2 0 -2 0.3 -2 0.3 -2 0.5 -2 -0.1 -2 0.6 -2 0.3 -2 0.3 -2 0.2 -2 0.4z" fill="#7a5c14"/>
<rect x="2568" y="251" width="191" height="1.2" fill="#7a5c14"/>
<path d="M2510 273.1l0 -2.5 2 0.1 2 0.2 2 0.1 2 0.4 2 -0.1 2 0.3 2 0.1 2 0.1 2 0.1 2 0.2 2 0.1 2 0 2 0.1 2 0 2 0.1 2 0 2 0.2 2 -0.1 2 0 2 0 2 -0.1 2 0.1 2 0 2 0 2 0 2 0 2 0 2 -0.1 2 0.1 0 1 -2 0.1 -2 -0.1 -2 0 -2 0 -2 0 -2 0 -2 0 -2 0.1 -2 -0.1 -2 0 -2 0 -2 -0.1 -2 0.1 -2 0 -2 0.1 -2 0 -2 0.1 -2 0 -2 0.1 -2 0.2 -2 0.1 -2 0.1 -2 0.1 -2 0.3 -2 -0.1 -2 0.4 -2 0.1 -2 0.2 -2 0.1z" fill="#7a5c14"/>
<rect x="2568" y="272.5" width="191" height="1.2" fill="#7a5c14"/>
<rect x="2521" y="268.1" width="12" height="12" fill="#e2c777"/>
<path d="M2523 278.1L2530.5 271.1V278.1z" fill="#7a5c14"/>
<rect x="737" y="289.5" width="254" height="46" fill="#15150f"/>
<rect x="737.5" y="290" width="253" height="45" fill="#efc245"/>
<rect x="739.1" y="291.6" width="249.8" height="41.8" fill="#b8973a"/>
<path d="M768.3 291.5v42M799.9 291.5v42M831.5 291.5v42M863.2 291.5v42M894.8 291.5v42M926.4 291.5v42M958.1 291.5v42" stroke="#c99f2a" stroke-width="1.2"/>
<path d="M739.5 300.5l0 -4.9 2 0 2 1.2 2 0.1 2 -0.2 2 0.5 2 0.6 2 0.1 2 -0.1 2 0.4 2 0.4 2 -0.2 2 0.5 2 0 2 0.1 2 0.2 2 0 2 0.3 2 0 2 0.2 2 -0.1 2 0.2 2 0 2 0 2 0.1 2 0.1 2 -0.1 2 0 2 0.1 2 -0.1 0 1.1 -2 -0.1 -2 0.1 -2 0 -2 -0.1 -2 0.1 -2 0 -2 0 -2 0 -2 0.2 -2 -0.1 -2 0.2 -2 0 -2 0.3 -2 0 -2 0.2 -2 0.1 -2 0 -2 0.4 -2 -0.2 -2 0.4 -2 0.4 -2 -0.1 -2 0.1 -2 0.6 -2 0.5 -2 -0.2 -2 0.1 -2 1.1 -2 0z" fill="#7a5c14"/>
<rect x="797.5" y="299.9" width="190" height="1.2" fill="#7a5c14"/>
<path d="M739.5 322l0 -2.4 2 0.3 2 0.2 2 -0.1 2 0.3 2 0.1 2 0.2 2 0.2 2 0 2 0.1 2 0.1 2 0.1 2 0 2 0.1 2 0.1 2 0.1 2 0 2 0.1 2 -0.1 2 0 2 0.1 2 -0.1 2 0.1 2 -0.1 2 0 2 0.1 2 -0.1 2 0 2 0.1 2 -0.1 0 1.1 -2 -0.1 -2 0.1 -2 0 -2 -0.1 -2 0.1 -2 0 -2 -0.1 -2 0.1 -2 -0.1 -2 0.1 -2 0 -2 -0.1 -2 0.1 -2 0 -2 0.1 -2 0.1 -2 0.1 -2 0 -2 0.1 -2 0 -2 0.1 -2 0 -2 0.2 -2 0.2 -2 0.1 -2 0.3 -2 -0.1 -2 0.2 -2 0.3z" fill="#7a5c14"/>
<rect x="797.5" y="321.4" width="190" height="1.2" fill="#7a5c14"/>
<rect x="750.5" y="317" width="12" height="12" fill="#e2c777"/>
<path d="M752.5 327L760 320V327z" fill="#7a5c14"/>
<rect x="1749.5" y="289.5" width="253" height="46" fill="#15150f"/>
<rect x="1750" y="290" width="252" height="45" fill="#efc245"/>
<rect x="1751.6" y="291.6" width="248.8" height="41.8" fill="#b8973a"/>
<path d="M1780.6 291.5v42M1812.2 291.5v42M1843.8 291.5v42M1875.5 291.5v42M1907.1 291.5v42M1938.7 291.5v42M1970.4 291.5v42" stroke="#c99f2a" stroke-width="1.2"/>
<path d="M1752 300.5l0 -4.8 2 0.6 2 0.4 2 -0.3 2 0.6 2 0.2 2 0.4 2 0.3 2 0 2 0.3 2 0.1 2 0.2 2 0.1 2 0.3 2 0.2 2 0.1 2 0 2 0.2 2 0 2 0.1 2 0.2 2 -0.1 2 0.2 2 -0.1 2 0.1 2 0.1 2 -0.1 2 0 2 0.1 2 -0.1 0 1.1 -2 -0.1 -2 0.1 -2 0 -2 -0.1 -2 0.1 -2 0.1 -2 -0.1 -2 0.2 -2 -0.1 -2 0.2 -2 0.1 -2 0 -2 0.2 -2 0 -2 0.1 -2 0.2 -2 0.3 -2 0.1 -2 0.2 -2 0.1 -2 0.3 -2 0 -2 0.3 -2 0.4 -2 0.2 -2 0.6 -2 -0.3 -2 0.4 -2 0.5z" fill="#7a5c14"/>
<rect x="1810" y="299.9" width="189" height="1.2" fill="#7a5c14"/>
<path d="M1752 322l0 -2.5 2 0.5 2 0.1 2 0.2 2 0 2 0.2 2 0.1 2 0.4 2 0 2 0.2 2 0 2 0 2 0.2 2 0 2 0 2 0.1 2 0.1 2 0 2 0 2 0.1 2 -0.1 2 0 2 0 2 0 2 -0.1 2 0.1 2 0 2 0 2 -0.1 2 0 0 1.1 -2 0 -2 -0.1 -2 0 -2 0 -2 0.1 -2 -0.1 -2 0 -2 0 -2 0 -2 -0.1 -2 0.1 -2 0 -2 0 -2 0.1 -2 0.1 -2 0 -2 0 -2 0.2 -2 0 -2 0 -2 0.2 -2 0 -2 0.4 -2 0.1 -2 0.2 -2 0 -2 0.2 -2 0.1 -2 0.5z" fill="#7a5c14"/>
<rect x="1810" y="321.4" width="189" height="1.2" fill="#7a5c14"/>
<rect x="1763" y="317" width="12" height="12" fill="#e2c777"/>
<path d="M1765 327L1772.5 320V327z" fill="#7a5c14"/>
<rect x="2001.5" y="289.5" width="255" height="46" fill="#15150f"/>
<rect x="2002" y="290" width="254" height="45" fill="#efc245"/>
<rect x="2003.6" y="291.6" width="250.8" height="41.8" fill="#b8973a"/>
<path d="M2033.6 291.5v42M2065.3 291.5v42M2096.9 291.5v42M2128.5 291.5v42M2160.2 291.5v42M2191.8 291.5v42M2223.4 291.5v42" stroke="#c99f2a" stroke-width="1.2"/>
<path d="M2004 300.5l0 -5.1 2 1.1 2 0.1 2 0.4 2 -0.1 2 0.4 2 0.1 2 0.7 2 0 2 0.4 2 0.1 2 0 2 0.3 2 0.1 2 0 2 0.2 2 0.2 2 0 2 0 2 0.2 2 -0.1 2 0.1 2 0.1 2 0.1 2 -0.1 2 0.1 2 0 2 0 2 -0.1 2 0 0 1.1 -2 0 -2 -0.1 -2 0 -2 0 -2 0.1 -2 0 -2 0.1 -2 0.1 -2 0.1 -2 -0.1 -2 0.2 -2 0 -2 0 -2 0.2 -2 0.1 -2 0 -2 0.1 -2 0.3 -2 0 -2 0.1 -2 0.4 -2 0 -2 0.7 -2 0.1 -2 0.3 -2 -0.1 -2 0.4 -2 0.1 -2 1z" fill="#7a5c14"/>
<rect x="2062" y="299.9" width="191" height="1.2" fill="#7a5c14"/>
<path d="M2004 322l0 -2.2 2 -0.1 2 0.5 2 0 2 0.1 2 0.1 2 0.3 2 0.1 2 0.2 2 0 2 0.1 2 0 2 0.1 2 0 2 0.1 2 0.1 2 0 2 0 2 0.1 2 0 2 -0.1 2 0 2 0 2 0 2 0 2 0 2 0 2 0 2 0 2 -0.1 0 1.2 -2 -0.1 -2 0 -2 0 -2 0 -2 0 -2 0 -2 0 -2 0 -2 0 -2 0 -2 0 -2 0.1 -2 0 -2 0 -2 0.1 -2 0.1 -2 0 -2 0.1 -2 0 -2 0.1 -2 0 -2 0.2 -2 0.1 -2 0.2 -2 0.1 -2 0.1 -2 0 -2 0.4 -2 -0.1z" fill="#7a5c14"/>
<rect x="2062" y="321.4" width="191" height="1.2" fill="#7a5c14"/>
<rect x="2015" y="317" width="12" height="12" fill="#e2c777"/>
<path d="M2017 327L2024.5 320V327z" fill="#7a5c14"/>
<rect x="2255.5" y="289.5" width="253" height="46" fill="#15150f"/>
<rect x="2256" y="290" width="252" height="45" fill="#efc245"/>
<rect x="2257.6" y="291.6" width="248.8" height="41.8" fill="#b8973a"/>
<path d="M2286.7 291.5v42M2318.3 291.5v42M2350 291.5v42M2381.6 291.5v42M2413.2 291.5v42M2444.9 291.5v42M2476.5 291.5v42" stroke="#c99f2a" stroke-width="1.2"/>
<path d="M2258 300.5l0 -4.4 2 -0.3 2 0.9 2 0.1 2 0.2 2 0.2 2 0.5 2 0.2 2 0.5 2 0 2 0.2 2 0 2 0.3 2 0.1 2 0.2 2 0.2 2 -0.1 2 0.1 2 0.2 2 0.1 2 0 2 0.1 2 0 2 0.1 2 0.1 2 0 2 0 2 0 2 0 2 -0.1 0 1.2 -2 -0.1 -2 0 -2 0 -2 0 -2 0 -2 0.1 -2 0.1 -2 0 -2 0.1 -2 0 -2 0.1 -2 0.2 -2 0.1 -2 -0.1 -2 0.2 -2 0.2 -2 0.1 -2 0.3 -2 0 -2 0.2 -2 0 -2 0.5 -2 0.2 -2 0.5 -2 0.2 -2 0.2 -2 0.1 -2 0.9 -2 -0.3z" fill="#7a5c14"/>
<rect x="2316" y="299.9" width="189" height="1.2" fill="#7a5c14"/>
<path d="M2258 322l0 -2.4 2 0.1 2 0.1 2 0.5 2 0.1 2 0.2 2 0.1 2 0.1 2 0.1 2 0 2 0 2 0.2 2 0.1 2 0.1 2 0 2 0.1 2 0.1 2 -0.1 2 0 2 0.1 2 0 2 0 2 -0.1 2 0.1 2 -0.1 2 0 2 0.1 2 0 2 0 2 -0.1 0 1.2 -2 -0.1 -2 0 -2 0 -2 0.1 -2 0 -2 -0.1 -2 0.1 -2 -0.1 -2 0 -2 0 -2 0.1 -2 0 -2 -0.1 -2 0.1 -2 0.1 -2 0 -2 0.1 -2 0.1 -2 0.1 -2 0 -2 0 -2 0.1 -2 0.1 -2 0.1 -2 0.2 -2 0.1 -2 0.5 -2 0 -2 0.1z" fill="#7a5c14"/>
<rect x="2316" y="321.4" width="189" height="1.2" fill="#7a5c14"/>
<rect x="2269" y="317" width="12" height="12" fill="#e2c777"/>
<path d="M2271 327L2278.5 320V327z" fill="#7a5c14"/>
<rect x="2507.5" y="289.5" width="255" height="46" fill="#15150f"/>
<rect x="2508" y="290" width="254" height="45" fill="#efc245"/>
<rect x="2509.6" y="291.6" width="250.8" height="41.8" fill="#b8973a"/>
<path d="M2539.8 291.5v42M2571.4 291.5v42M2603 291.5v42M2634.7 291.5v42M2666.3 291.5v42M2697.9 291.5v42M2729.6 291.5v42" stroke="#c99f2a" stroke-width="1.2"/>
<path d="M2510 300.5l0 -4.8 2 0.3 2 0.1 2 1 2 0.3 2 0.4 2 0.2 2 0.3 2 0.1 2 0 2 0 2 0.3 2 0.3 2 0.1 2 0 2 0.2 2 0.2 2 -0.1 2 0.1 2 0.2 2 0.1 2 0.1 2 -0.1 2 0.2 2 0 2 0 2 0.1 2 0 2 0 2 -0.1 0 1.2 -2 -0.1 -2 0 -2 0 -2 0.1 -2 0 -2 0 -2 0.2 -2 -0.1 -2 0.1 -2 0.1 -2 0.2 -2 0.1 -2 -0.1 -2 0.2 -2 0.2 -2 0 -2 0.1 -2 0.3 -2 0.3 -2 0 -2 0 -2 0.1 -2 0.3 -2 0.2 -2 0.4 -2 0.3 -2 0.9 -2 0.1 -2 0.3z" fill="#7a5c14"/>
<rect x="2568" y="299.9" width="191" height="1.2" fill="#7a5c14"/>
<path d="M2510 322l0 -2.3 2 0.1 2 0.4 2 0.1 2 0.3 2 0.2 2 0 2 0.2 2 0.1 2 0 2 0.3 2 0 2 0.2 2 0 2 0.1 2 0.1 2 0 2 0.1 2 0.1 2 0 2 0 2 0 2 0.1 2 0 2 -0.1 2 0 2 0.1 2 0 2 -0.1 2 0.1 0 1 -2 0 -2 -0.1 -2 0 -2 0.1 -2 0 -2 -0.1 -2 0 -2 0.1 -2 0 -2 0 -2 0 -2 0.1 -2 0.1 -2 0 -2 0.1 -2 0.1 -2 0 -2 0.2 -2 0 -2 0.2 -2 0 -2 0 -2 0.2 -2 0 -2 0.1 -2 0.2 -2 0.1 -2 0.4 -2 0.1z" fill="#7a5c14"/>
<rect x="2568" y="321.4" width="191" height="1.2" fill="#7a5c14"/>
<rect x="2521" y="317" width="12" height="12" fill="#e2c777"/>
<path d="M2523 327L2530.5 320V327z" fill="#7a5c14"/>
<rect x="745.4" y="338.9" width="16.8" height="45.5" fill="#15150f"/>
<rect x="745.9" y="339.4" width="15.8" height="44.5" fill="#efc245"/>
<rect x="747.2" y="340.7" width="13.2" height="41.9" fill="#b8973a"/>
<rect x="761.2" y="338.9" width="16.8" height="45.5" fill="#15150f"/>
<rect x="761.7" y="339.4" width="15.8" height="44.5" fill="#efc245"/>
<rect x="763" y="340.7" width="13.2" height="41.9" fill="#b8973a"/>
<rect x="777" y="338.9" width="16.8" height="45.5" fill="#15150f"/>
<rect x="777.5" y="339.4" width="15.8" height="44.5" fill="#efc245"/>
<rect x="778.8" y="340.7" width="13.2" height="41.9" fill="#b8973a"/>
<rect x="792.9" y="338.9" width="16.8" height="45.5" fill="#15150f"/>
<rect x="793.4" y="339.4" width="15.8" height="44.5" fill="#efc245"/>
<rect x="794.7" y="340.7" width="13.2" height="41.9" fill="#b8973a"/>
<rect x="808.7" y="338.9" width="16.8" height="45.5" fill="#15150f"/>
<rect x="809.2" y="339.4" width="15.8" height="44.5" fill="#efc245"/>
<rect x="810.5" y="340.7" width="13.2" height="41.9" fill="#b8973a"/>
<rect x="824.5" y="338.9" width="16.8" height="45.5" fill="#15150f"/>
<rect x="825" y="339.4" width="15.8" height="44.5" fill="#efc245"/>
<rect x="826.3" y="340.7" width="13.2" height="41.9" fill="#b8973a"/>
<rect x="840.3" y="338.9" width="16.8" height="45.5" fill="#15150f"/>
<rect x="840.8" y="339.4" width="15.8" height="44.5" fill="#efc245"/>
<rect x="842.1" y="340.7" width="13.2" height="41.9" fill="#b8973a"/>
<rect x="856.1" y="338.9" width="16.8" height="45.5" fill="#15150f"/>
<rect x="856.6" y="339.4" width="15.8" height="44.5" fill="#efc245"/>
<rect x="857.9" y="340.7" width="13.2" height="41.9" fill="#b8973a"/>
<rect x="872" y="338.9" width="16.8" height="45.5" fill="#15150f"/>
<rect x="872.5" y="339.4" width="15.8" height="44.5" fill="#efc245"/>
<rect x="873.8" y="340.7" width="13.2" height="41.9" fill="#b8973a"/>
<rect x="887.8" y="338.9" width="16.8" height="45.5" fill="#15150f"/>
<rect x="888.3" y="339.4" width="15.8" height="44.5" fill="#efc245"/>
<rect x="889.6" y="340.7" width="13.2" height="41.9" fill="#b8973a"/>
<rect x="903.6" y="338.9" width="16.8" height="45.5" fill="#15150f"/>
<rect x="904.1" y="339.4" width="15.8" height="44.5" fill="#efc245"/>
<rect x="905.4" y="340.7" width="13.2" height="41.9" fill="#b8973a"/>
<rect x="919.4" y="338.9" width="16.8" height="45.5" fill="#15150f"/>
<rect x="919.9" y="339.4" width="15.8" height="44.5" fill="#efc245"/>
<rect x="921.2" y="340.7" width="13.2" height="41.9" fill="#b8973a"/>
<rect x="935.2" y="338.9" width="16.8" height="45.5" fill="#15150f"/>
<rect x="935.7" y="339.4" width="15.8" height="44.5" fill="#efc245"/>
<rect x="937" y="340.7" width="13.2" height="41.9" fill="#b8973a"/>
<rect x="951" y="338.9" width="16.8" height="45.5" fill="#15150f"/>
<rect x="951.5" y="339.4" width="15.8" height="44.5" fill="#efc245"/>
<rect x="952.8" y="340.7" width="13.2" height="41.9" fill="#b8973a"/>
<rect x="966.9" y="338.9" width="16.8" height="45.5" fill="#15150f"/>
<rect x="967.4" y="339.4" width="15.8" height="44.5" fill="#efc245"/>
<rect x="968.7" y="340.7" width="13.2" height="41.9" fill="#b8973a"/>
<rect x="982.7" y="338.9" width="16.8" height="45.5" fill="#15150f"/>
<rect x="983.2" y="339.4" width="15.8" height="44.5" fill="#efc245"/>
<rect x="984.5" y="340.7" width="13.2" height="41.9" fill="#b8973a"/>
<path d="M748.9 347.4l2 3.3H758.7v1.3H750.9l-2 3.3zM748.9 368.4l2 3.3H758.7v1.3H750.9l-2 3.3zM764.7 347.4l2 3.3H774.5v1.3H766.7l-2 3.3zM764.7 368.4l2 3.3H774.5v1.3H766.7l-2 3.3zM780.5 347.4l2 3.3H790.4v1.3H782.5l-2 3.3zM780.5 368.4l2 3.3H790.4v1.3H782.5l-2 3.3zM796.4 347.4l2 3.3H806.2v1.3H798.4l-2 3.3zM796.4 368.4l2 3.3H806.2v1.3H798.4l-2 3.3zM812.2 347.4l2 3.3H822v1.3H814.2l-2 3.3zM812.2 368.4l2 3.3H822v1.3H814.2l-2 3.3zM828 347.4l2 3.3H837.8v1.3H830l-2 3.3zM828 368.4l2 3.3H837.8v1.3H830l-2 3.3zM843.8 347.4l2 3.3H853.6v1.3H845.8l-2 3.3zM843.8 368.4l2 3.3H853.6v1.3H845.8l-2 3.3zM859.6 347.4l2 3.3H869.5v1.3H861.6l-2 3.3zM859.6 368.4l2 3.3H869.5v1.3H861.6l-2 3.3zM875.5 347.4l2 3.3H885.3v1.3H877.5l-2 3.3zM875.5 368.4l2 3.3H885.3v1.3H877.5l-2 3.3zM891.3 347.4l2 3.3H901.1v1.3H893.3l-2 3.3zM891.3 368.4l2 3.3H901.1v1.3H893.3l-2 3.3zM907.1 347.4l2 3.3H916.9v1.3H909.1l-2 3.3zM907.1 368.4l2 3.3H916.9v1.3H909.1l-2 3.3zM922.9 347.4l2 3.3H932.7v1.3H924.9l-2 3.3zM922.9 368.4l2 3.3H932.7v1.3H924.9l-2 3.3zM938.7 347.4l2 3.3H948.5v1.3H940.7l-2 3.3zM938.7 368.4l2 3.3H948.5v1.3H940.7l-2 3.3zM954.5 347.4l2 3.3H964.4v1.3H956.5l-2 3.3zM954.5 368.4l2 3.3H964.4v1.3H956.5l-2 3.3zM970.4 347.4l2 3.3H980.2v1.3H972.4l-2 3.3zM970.4 368.4l2 3.3H980.2v1.3H972.4l-2 3.3zM986.2 347.4l2 3.3H996v1.3H988.2l-2 3.3zM986.2 368.4l2 3.3H996v1.3H988.2l-2 3.3z" fill="#7a5c14"/>
<rect x="1757.3" y="338.9" width="16.8" height="45.5" fill="#15150f"/>
<rect x="1757.8" y="339.4" width="15.8" height="44.5" fill="#efc245"/>
<rect x="1759.1" y="340.7" width="13.2" height="41.9" fill="#b8973a"/>
<rect x="1773.1" y="338.9" width="16.8" height="45.5" fill="#15150f"/>
<rect x="1773.6" y="339.4" width="15.8" height="44.5" fill="#efc245"/>
<rect x="1774.9" y="340.7" width="13.2" height="41.9" fill="#b8973a"/>
<rect x="1788.9" y="338.9" width="16.8" height="45.5" fill="#15150f"/>
<rect x="1789.4" y="339.4" width="15.8" height="44.5" fill="#efc245"/>
<rect x="1790.7" y="340.7" width="13.2" height="41.9" fill="#b8973a"/>
<rect x="1804.7" y="338.9" width="16.8" height="45.5" fill="#15150f"/>
<rect x="1805.2" y="339.4" width="15.8" height="44.5" fill="#efc245"/>
<rect x="1806.5" y="340.7" width="13.2" height="41.9" fill="#b8973a"/>
<rect x="1820.6" y="338.9" width="16.8" height="45.5" fill="#15150f"/>
<rect x="1821.1" y="339.4" width="15.8" height="44.5" fill="#efc245"/>
<rect x="1822.4" y="340.7" width="13.2" height="41.9" fill="#b8973a"/>
<rect x="1836.4" y="338.9" width="16.8" height="45.5" fill="#15150f"/>
<rect x="1836.9" y="339.4" width="15.8" height="44.5" fill="#efc245"/>
<rect x="1838.2" y="340.7" width="13.2" height="41.9" fill="#b8973a"/>
<rect x="1852.2" y="338.9" width="16.8" height="45.5" fill="#15150f"/>
<rect x="1852.7" y="339.4" width="15.8" height="44.5" fill="#efc245"/>
<rect x="1854" y="340.7" width="13.2" height="41.9" fill="#b8973a"/>
<rect x="1868" y="338.9" width="16.8" height="45.5" fill="#15150f"/>
<rect x="1868.5" y="339.4" width="15.8" height="44.5" fill="#efc245"/>
<rect x="1869.8" y="340.7" width="13.2" height="41.9" fill="#b8973a"/>
<rect x="1883.8" y="338.9" width="16.8" height="45.5" fill="#15150f"/>
<rect x="1884.3" y="339.4" width="15.8" height="44.5" fill="#efc245"/>
<rect x="1885.6" y="340.7" width="13.2" height="41.9" fill="#b8973a"/>
<rect x="1899.6" y="338.9" width="16.8" height="45.5" fill="#15150f"/>
<rect x="1900.1" y="339.4" width="15.8" height="44.5" fill="#efc245"/>
<rect x="1901.4" y="340.7" width="13.2" height="41.9" fill="#b8973a"/>
<rect x="1915.5" y="338.9" width="16.8" height="45.5" fill="#15150f"/>
<rect x="1916" y="339.4" width="15.8" height="44.5" fill="#efc245"/>
<rect x="1917.3" y="340.7" width="13.2" height="41.9" fill="#b8973a"/>
<rect x="1931.3" y="338.9" width="16.8" height="45.5" fill="#15150f"/>
<rect x="1931.8" y="339.4" width="15.8" height="44.5" fill="#efc245"/>
<rect x="1933.1" y="340.7" width="13.2" height="41.9" fill="#b8973a"/>
<rect x="1947.1" y="338.9" width="16.8" height="45.5" fill="#15150f"/>
<rect x="1947.6" y="339.4" width="15.8" height="44.5" fill="#efc245"/>
<rect x="1948.9" y="340.7" width="13.2" height="41.9" fill="#b8973a"/>
<rect x="1962.9" y="338.9" width="16.8" height="45.5" fill="#15150f"/>
<rect x="1963.4" y="339.4" width="15.8" height="44.5" fill="#efc245"/>
<rect x="1964.7" y="340.7" width="13.2" height="41.9" fill="#b8973a"/>
<rect x="1978.7" y="338.9" width="16.8" height="45.5" fill="#15150f"/>
<rect x="1979.2" y="339.4" width="15.8" height="44.5" fill="#efc245"/>
<rect x="1980.5" y="340.7" width="13.2" height="41.9" fill="#b8973a"/>
<rect x="1994.5" y="338.9" width="16.8" height="45.5" fill="#15150f"/>
<rect x="1995" y="339.4" width="15.8" height="44.5" fill="#efc245"/>
<rect x="1996.3" y="340.7" width="13.2" height="41.9" fill="#b8973a"/>
<rect x="2010.3" y="338.9" width="16.8" height="45.5" fill="#15150f"/>
<rect x="2010.8" y="339.4" width="15.8" height="44.5" fill="#efc245"/>
<rect x="2012.1" y="340.7" width="13.2" height="41.9" fill="#b8973a"/>
<rect x="2026.2" y="338.9" width="16.8" height="45.5" fill="#15150f"/>
<rect x="2026.7" y="339.4" width="15.8" height="44.5" fill="#efc245"/>
<rect x="2028" y="340.7" width="13.2" height="41.9" fill="#b8973a"/>
<rect x="2042" y="338.9" width="16.8" height="45.5" fill="#15150f"/>
<rect x="2042.5" y="339.4" width="15.8" height="44.5" fill="#efc245"/>
<rect x="2043.8" y="340.7" width="13.2" height="41.9" fill="#b8973a"/>
<rect x="2057.8" y="338.9" width="16.8" height="45.5" fill="#15150f"/>
<rect x="2058.3" y="339.4" width="15.8" height="44.5" fill="#efc245"/>
<rect x="2059.6" y="340.7" width="13.2" height="41.9" fill="#b8973a"/>
<rect x="2073.6" y="338.9" width="16.8" height="45.5" fill="#15150f"/>
<rect x="2074.1" y="339.4" width="15.8" height="44.5" fill="#efc245"/>
<rect x="2075.4" y="340.7" width="13.2" height="41.9" fill="#b8973a"/>
<rect x="2089.4" y="338.9" width="16.8" height="45.5" fill="#15150f"/>
<rect x="2089.9" y="339.4" width="15.8" height="44.5" fill="#efc245"/>
<rect x="2091.2" y="340.7" width="13.2" height="41.9" fill="#b8973a"/>
<rect x="2105.2" y="338.9" width="16.8" height="45.5" fill="#15150f"/>
<rect x="2105.7" y="339.4" width="15.8" height="44.5" fill="#efc245"/>
<rect x="2107" y="340.7" width="13.2" height="41.9" fill="#b8973a"/>
<rect x="2121.1" y="338.9" width="16.8" height="45.5" fill="#15150f"/>
<rect x="2121.6" y="339.4" width="15.8" height="44.5" fill="#efc245"/>
<rect x="2122.9" y="340.7" width="13.2" height="41.9" fill="#b8973a"/>
<rect x="2136.9" y="338.9" width="16.8" height="45.5" fill="#15150f"/>
<rect x="2137.4" y="339.4" width="15.8" height="44.5" fill="#efc245"/>
<rect x="2138.7" y="340.7" width="13.2" height="41.9" fill="#b8973a"/>
<rect x="2152.7" y="338.9" width="16.8" height="45.5" fill="#15150f"/>
<rect x="2153.2" y="339.4" width="15.8" height="44.5" fill="#efc245"/>
<rect x="2154.5" y="340.7" width="13.2" height="41.9" fill="#b8973a"/>
<rect x="2168.5" y="338.9" width="16.8" height="45.5" fill="#15150f"/>
<rect x="2169" y="339.4" width="15.8" height="44.5" fill="#efc245"/>
<rect x="2170.3" y="340.7" width="13.2" height="41.9" fill="#b8973a"/>
<rect x="2184.3" y="338.9" width="16.8" height="45.5" fill="#15150f"/>
<rect x="2184.8" y="339.4" width="15.8" height="44.5" fill="#efc245"/>
<rect x="2186.1" y="340.7" width="13.2" height="41.9" fill="#b8973a"/>
<rect x="2200.1" y="338.9" width="16.8" height="45.5" fill="#15150f"/>
<rect x="2200.6" y="339.4" width="15.8" height="44.5" fill="#efc245"/>
<rect x="2201.9" y="340.7" width="13.2" height="41.9" fill="#b8973a"/>
<rect x="2216" y="338.9" width="16.8" height="45.5" fill="#15150f"/>
<rect x="2216.5" y="339.4" width="15.8" height="44.5" fill="#efc245"/>
<rect x="2217.8" y="340.7" width="13.2" height="41.9" fill="#b8973a"/>
<rect x="2231.8" y="338.9" width="16.8" height="45.5" fill="#15150f"/>
<rect x="2232.3" y="339.4" width="15.8" height="44.5" fill="#efc245"/>
<rect x="2233.6" y="340.7" width="13.2" height="41.9" fill="#b8973a"/>
<rect x="2247.6" y="338.9" width="16.8" height="45.5" fill="#15150f"/>
<rect x="2248.1" y="339.4" width="15.8" height="44.5" fill="#efc245"/>
<rect x="2249.4" y="340.7" width="13.2" height="41.9" fill="#b8973a"/>
<rect x="2263.4" y="338.9" width="16.8" height="45.5" fill="#15150f"/>
<rect x="2263.9" y="339.4" width="15.8" height="44.5" fill="#efc245"/>
<rect x="2265.2" y="340.7" width="13.2" height="41.9" fill="#b8973a"/>
<rect x="2279.2" y="338.9" width="16.8" height="45.5" fill="#15150f"/>
<rect x="2279.7" y="339.4" width="15.8" height="44.5" fill="#efc245"/>
<rect x="2281" y="340.7" width="13.2" height="41.9" fill="#b8973a"/>
<rect x="2295" y="338.9" width="16.8" height="45.5" fill="#15150f"/>
<rect x="2295.5" y="339.4" width="15.8" height="44.5" fill="#efc245"/>
<rect x="2296.8" y="340.7" width="13.2" height="41.9" fill="#b8973a"/>
<rect x="2310.8" y="338.9" width="16.8" height="45.5" fill="#15150f"/>
<rect x="2311.3" y="339.4" width="15.8" height="44.5" fill="#efc245"/>
<rect x="2312.6" y="340.7" width="13.2" height="41.9" fill="#b8973a"/>
<rect x="2326.7" y="338.9" width="16.8" height="45.5" fill="#15150f"/>
<rect x="2327.2" y="339.4" width="15.8" height="44.5" fill="#efc245"/>
<rect x="2328.5" y="340.7" width="13.2" height="41.9" fill="#b8973a"/>
<rect x="2342.5" y="338.9" width="16.8" height="45.5" fill="#15150f"/>
<rect x="2343" y="339.4" width="15.8" height="44.5" fill="#efc245"/>
<rect x="2344.3" y="340.7" width="13.2" height="41.9" fill="#b8973a"/>
<rect x="2358.3" y="338.9" width="16.8" height="45.5" fill="#15150f"/>
<rect x="2358.8" y="339.4" width="15.8" height="44.5" fill="#efc245"/>
<rect x="2360.1" y="340.7" width="13.2" height="41.9" fill="#b8973a"/>
<rect x="2374.1" y="338.9" width="16.8" height="45.5" fill="#15150f"/>
<rect x="2374.6" y="339.4" width="15.8" height="44.5" fill="#efc245"/>
<rect x="2375.9" y="340.7" width="13.2" height="41.9" fill="#b8973a"/>
<rect x="2389.9" y="338.9" width="16.8" height="45.5" fill="#15150f"/>
<rect x="2390.4" y="339.4" width="15.8" height="44.5" fill="#efc245"/>
<rect x="2391.7" y="340.7" width="13.2" height="41.9" fill="#b8973a"/>
<rect x="2405.7" y="338.9" width="16.8" height="45.5" fill="#15150f"/>
<rect x="2406.2" y="339.4" width="15.8" height="44.5" fill="#efc245"/>
<rect x="2407.5" y="340.7" width="13.2" height="41.9" fill="#b8973a"/>
<rect x="2421.6" y="338.9" width="16.8" height="45.5" fill="#15150f"/>
<rect x="2422.1" y="339.4" width="15.8" height="44.5" fill="#efc245"/>
<rect x="2423.4" y="340.7" width="13.2" height="41.9" fill="#b8973a"/>
<rect x="2437.4" y="338.9" width="16.8" height="45.5" fill="#15150f"/>
<rect x="2437.9" y="339.4" width="15.8" height="44.5" fill="#efc245"/>
<rect x="2439.2" y="340.7" width="13.2" height="41.9" fill="#b8973a"/>
<rect x="2453.2" y="338.9" width="16.8" height="45.5" fill="#15150f"/>
<rect x="2453.7" y="339.4" width="15.8" height="44.5" fill="#efc245"/>
<rect x="2455" y="340.7" width="13.2" height="41.9" fill="#b8973a"/>
<rect x="2469" y="338.9" width="16.8" height="45.5" fill="#15150f"/>
<rect x="2469.5" y="339.4" width="15.8" height="44.5" fill="#efc245"/>
<rect x="2470.8" y="340.7" width="13.2" height="41.9" fill="#b8973a"/>
<rect x="2484.8" y="338.9" width="16.8" height="45.5" fill="#15150f"/>
<rect x="2485.3" y="339.4" width="15.8" height="44.5" fill="#efc245"/>
<rect x="2486.6" y="340.7" width="13.2" height="41.9" fill="#b8973a"/>
<rect x="2500.6" y="338.9" width="16.8" height="45.5" fill="#15150f"/>
<rect x="2501.1" y="339.4" width="15.8" height="44.5" fill="#efc245"/>
<rect x="2502.4" y="340.7" width="13.2" height="41.9" fill="#b8973a"/>
<rect x="2516.4" y="338.9" width="16.8" height="45.5" fill="#15150f"/>
<rect x="2516.9" y="339.4" width="15.8" height="44.5" fill="#efc245"/>
<rect x="2518.2" y="340.7" width="13.2" height="41.9" fill="#b8973a"/>
<rect x="2532.3" y="338.9" width="16.8" height="45.5" fill="#15150f"/>
<rect x="2532.8" y="339.4" width="15.8" height="44.5" fill="#efc245"/>
<rect x="2534.1" y="340.7" width="13.2" height="41.9" fill="#b8973a"/>
<rect x="2548.1" y="338.9" width="16.8" height="45.5" fill="#15150f"/>
<rect x="2548.6" y="339.4" width="15.8" height="44.5" fill="#efc245"/>
<rect x="2549.9" y="340.7" width="13.2" height="41.9" fill="#b8973a"/>
<rect x="2563.9" y="338.9" width="16.8" height="45.5" fill="#15150f"/>
<rect x="2564.4" y="339.4" width="15.8" height="44.5" fill="#efc245"/>
<rect x="2565.7" y="340.7" width="13.2" height="41.9" fill="#b8973a"/>
<rect x="2579.7" y="338.9" width="16.8" height="45.5" fill="#15150f"/>
<rect x="2580.2" y="339.4" width="15.8" height="44.5" fill="#efc245"/>
<rect x="2581.5" y="340.7" width="13.2" height="41.9" fill="#b8973a"/>
<rect x="2595.5" y="338.9" width="16.8" height="45.5" fill="#15150f"/>
<rect x="2596" y="339.4" width="15.8" height="44.5" fill="#efc245"/>
<rect x="2597.3" y="340.7" width="13.2" height="41.9" fill="#b8973a"/>
<rect x="2611.3" y="338.9" width="16.8" height="45.5" fill="#15150f"/>
<rect x="2611.8" y="339.4" width="15.8" height="44.5" fill="#efc245"/>
<rect x="2613.1" y="340.7" width="13.2" height="41.9" fill="#b8973a"/>
<rect x="2627.2" y="338.9" width="16.8" height="45.5" fill="#15150f"/>
<rect x="2627.7" y="339.4" width="15.8" height="44.5" fill="#efc245"/>
<rect x="2629" y="340.7" width="13.2" height="41.9" fill="#b8973a"/>
<rect x="2643" y="338.9" width="16.8" height="45.5" fill="#15150f"/>
<rect x="2643.5" y="339.4" width="15.8" height="44.5" fill="#efc245"/>
<rect x="2644.8" y="340.7" width="13.2" height="41.9" fill="#b8973a"/>
<rect x="2658.8" y="338.9" width="16.8" height="45.5" fill="#15150f"/>
<rect x="2659.3" y="339.4" width="15.8" height="44.5" fill="#efc245"/>
<rect x="2660.6" y="340.7" width="13.2" height="41.9" fill="#b8973a"/>
<rect x="2674.6" y="338.9" width="16.8" height="45.5" fill="#15150f"/>
<rect x="2675.1" y="339.4" width="15.8" height="44.5" fill="#efc245"/>
<rect x="2676.4" y="340.7" width="13.2" height="41.9" fill="#b8973a"/>
<rect x="2690.4" y="338.9" width="16.8" height="45.5" fill="#15150f"/>
<rect x="2690.9" y="339.4" width="15.8" height="44.5" fill="#efc245"/>
<rect x="2692.2" y="340.7" width="13.2" height="41.9" fill="#b8973a"/>
<rect x="2706.2" y="338.9" width="16.8" height="45.5" fill="#15150f"/>
<rect x="2706.7" y="339.4" width="15.8" height="44.5" fill="#efc245"/>
<rect x="2708" y="340.7" width="13.2" height="41.9" fill="#b8973a"/>
<rect x="2722.1" y="338.9" width="16.8" height="45.5" fill="#15150f"/>
<rect x="2722.6" y="339.4" width="15.8" height="44.5" fill="#efc245"/>
<rect x="2723.9" y="340.7" width="13.2" height="41.9" fill="#b8973a"/>
<rect x="2737.9" y="338.9" width="16.8" height="45.5" fill="#15150f"/>
<rect x="2738.4" y="339.4" width="15.8" height="44.5" fill="#efc245"/>
<rect x="2739.7" y="340.7" width="13.2" height="41.9" fill="#b8973a"/>
<rect x="2753.7" y="338.9" width="16.8" height="45.5" fill="#15150f"/>
<rect x="2754.2" y="339.4" width="15.8" height="44.5" fill="#efc245"/>
<rect x="2755.5" y="340.7" width="13.2" height="41.9" fill="#b8973a"/>
<path d="M1760.8 347.4l2 3.3H1770.6v1.3H1762.8l-2 3.3zM1760.8 368.4l2 3.3H1770.6v1.3H1762.8l-2 3.3zM1776.6 347.4l2 3.3H1786.4v1.3H1778.6l-2 3.3zM1776.6 368.4l2 3.3H1786.4v1.3H1778.6l-2 3.3zM1792.4 347.4l2 3.3H1802.2v1.3H1794.4l-2 3.3zM1792.4 368.4l2 3.3H1802.2v1.3H1794.4l-2 3.3zM1808.2 347.4l2 3.3H1818.1v1.3H1810.2l-2 3.3zM1808.2 368.4l2 3.3H1818.1v1.3H1810.2l-2 3.3zM1824.1 347.4l2 3.3H1833.9v1.3H1826.1l-2 3.3zM1824.1 368.4l2 3.3H1833.9v1.3H1826.1l-2 3.3zM1839.9 347.4l2 3.3H1849.7v1.3H1841.9l-2 3.3zM1839.9 368.4l2 3.3H1849.7v1.3H1841.9l-2 3.3zM1855.7 347.4l2 3.3H1865.5v1.3H1857.7l-2 3.3zM1855.7 368.4l2 3.3H1865.5v1.3H1857.7l-2 3.3zM1871.5 347.4l2 3.3H1881.3v1.3H1873.5l-2 3.3zM1871.5 368.4l2 3.3H1881.3v1.3H1873.5l-2 3.3zM1887.3 347.4l2 3.3H1897.1v1.3H1889.3l-2 3.3zM1887.3 368.4l2 3.3H1897.1v1.3H1889.3l-2 3.3zM1903.1 347.4l2 3.3H1913v1.3H1905.1l-2 3.3zM1903.1 368.4l2 3.3H1913v1.3H1905.1l-2 3.3zM1919 347.4l2 3.3H1928.8v1.3H1921l-2 3.3zM1919 368.4l2 3.3H1928.8v1.3H1921l-2 3.3zM1934.8 347.4l2 3.3H1944.6v1.3H1936.8l-2 3.3zM1934.8 368.4l2 3.3H1944.6v1.3H1936.8l-2 3.3zM1950.6 347.4l2 3.3H1960.4v1.3H1952.6l-2 3.3zM1950.6 368.4l2 3.3H1960.4v1.3H1952.6l-2 3.3zM1966.4 347.4l2 3.3H1976.2v1.3H1968.4l-2 3.3zM1966.4 368.4l2 3.3H1976.2v1.3H1968.4l-2 3.3zM1982.2 347.4l2 3.3H1992v1.3H1984.2l-2 3.3zM1982.2 368.4l2 3.3H1992v1.3H1984.2l-2 3.3zM1998 347.4l2 3.3H2007.8v1.3H2000l-2 3.3zM1998 368.4l2 3.3H2007.8v1.3H2000l-2 3.3zM2013.8 347.4l2 3.3H2023.7v1.3H2015.8l-2 3.3zM2013.8 368.4l2 3.3H2023.7v1.3H2015.8l-2 3.3zM2029.7 347.4l2 3.3H2039.5v1.3H2031.7l-2 3.3zM2029.7 368.4l2 3.3H2039.5v1.3H2031.7l-2 3.3zM2045.5 347.4l2 3.3H2055.3v1.3H2047.5l-2 3.3zM2045.5 368.4l2 3.3H2055.3v1.3H2047.5l-2 3.3zM2061.3 347.4l2 3.3H2071.1v1.3H2063.3l-2 3.3zM2061.3 368.4l2 3.3H2071.1v1.3H2063.3l-2 3.3zM2077.1 347.4l2 3.3H2086.9v1.3H2079.1l-2 3.3zM2077.1 368.4l2 3.3H2086.9v1.3H2079.1l-2 3.3zM2092.9 347.4l2 3.3H2102.7v1.3H2094.9l-2 3.3zM2092.9 368.4l2 3.3H2102.7v1.3H2094.9l-2 3.3zM2108.7 347.4l2 3.3H2118.6v1.3H2110.7l-2 3.3zM2108.7 368.4l2 3.3H2118.6v1.3H2110.7l-2 3.3zM2124.6 347.4l2 3.3H2134.4v1.3H2126.6l-2 3.3zM2124.6 368.4l2 3.3H2134.4v1.3H2126.6l-2 3.3zM2140.4 347.4l2 3.3H2150.2v1.3H2142.4l-2 3.3zM2140.4 368.4l2 3.3H2150.2v1.3H2142.4l-2 3.3zM2156.2 347.4l2 3.3H2166v1.3H2158.2l-2 3.3zM2156.2 368.4l2 3.3H2166v1.3H2158.2l-2 3.3zM2172 347.4l2 3.3H2181.8v1.3H2174l-2 3.3zM2172 368.4l2 3.3H2181.8v1.3H2174l-2 3.3zM2187.8 347.4l2 3.3H2197.6v1.3H2189.8l-2 3.3zM2187.8 368.4l2 3.3H2197.6v1.3H2189.8l-2 3.3zM2203.6 347.4l2 3.3H2213.5v1.3H2205.6l-2 3.3zM2203.6 368.4l2 3.3H2213.5v1.3H2205.6l-2 3.3zM2219.5 347.4l2 3.3H2229.3v1.3H2221.5l-2 3.3zM2219.5 368.4l2 3.3H2229.3v1.3H2221.5l-2 3.3zM2235.3 347.4l2 3.3H2245.1v1.3H2237.3l-2 3.3zM2235.3 368.4l2 3.3H2245.1v1.3H2237.3l-2 3.3zM2251.1 347.4l2 3.3H2260.9v1.3H2253.1l-2 3.3zM2251.1 368.4l2 3.3H2260.9v1.3H2253.1l-2 3.3zM2266.9 347.4l2 3.3H2276.7v1.3H2268.9l-2 3.3zM2266.9 368.4l2 3.3H2276.7v1.3H2268.9l-2 3.3zM2282.7 347.4l2 3.3H2292.5v1.3H2284.7l-2 3.3zM2282.7 368.4l2 3.3H2292.5v1.3H2284.7l-2 3.3zM2298.5 347.4l2 3.3H2308.3v1.3H2300.5l-2 3.3zM2298.5 368.4l2 3.3H2308.3v1.3H2300.5l-2 3.3zM2314.3 347.4l2 3.3H2324.2v1.3H2316.3l-2 3.3zM2314.3 368.4l2 3.3H2324.2v1.3H2316.3l-2 3.3zM2330.2 347.4l2 3.3H2340v1.3H2332.2l-2 3.3zM2330.2 368.4l2 3.3H2340v1.3H2332.2l-2 3.3zM2346 347.4l2 3.3H2355.8v1.3H2348l-2 3.3zM2346 368.4l2 3.3H2355.8v1.3H2348l-2 3.3zM2361.8 347.4l2 3.3H2371.6v1.3H2363.8l-2 3.3zM2361.8 368.4l2 3.3H2371.6v1.3H2363.8l-2 3.3zM2377.6 347.4l2 3.3H2387.4v1.3H2379.6l-2 3.3zM2377.6 368.4l2 3.3H2387.4v1.3H2379.6l-2 3.3zM2393.4 347.4l2 3.3H2403.2v1.3H2395.4l-2 3.3zM2393.4 368.4l2 3.3H2403.2v1.3H2395.4l-2 3.3zM2409.2 347.4l2 3.3H2419.1v1.3H2411.2l-2 3.3zM2409.2 368.4l2 3.3H2419.1v1.3H2411.2l-2 3.3zM2425.1 347.4l2 3.3H2434.9v1.3H2427.1l-2 3.3zM2425.1 368.4l2 3.3H2434.9v1.3H2427.1l-2 3.3zM2440.9 347.4l2 3.3H2450.7v1.3H2442.9l-2 3.3zM2440.9 368.4l2 3.3H2450.7v1.3H2442.9l-2 3.3zM2456.7 347.4l2 3.3H2466.5v1.3H2458.7l-2 3.3zM2456.7 368.4l2 3.3H2466.5v1.3H2458.7l-2 3.3zM2472.5 347.4l2 3.3H2482.3v1.3H2474.5l-2 3.3zM2472.5 368.4l2 3.3H2482.3v1.3H2474.5l-2 3.3zM2488.3 347.4l2 3.3H2498.1v1.3H2490.3l-2 3.3zM2488.3 368.4l2 3.3H2498.1v1.3H2490.3l-2 3.3zM2504.1 347.4l2 3.3H2514v1.3H2506.1l-2 3.3zM2504.1 368.4l2 3.3H2514v1.3H2506.1l-2 3.3zM2519.9 347.4l2 3.3H2529.8v1.3H2521.9l-2 3.3zM2519.9 368.4l2 3.3H2529.8v1.3H2521.9l-2 3.3zM2535.8 347.4l2 3.3H2545.6v1.3H2537.8l-2 3.3zM2535.8 368.4l2 3.3H2545.6v1.3H2537.8l-2 3.3zM2551.6 347.4l2 3.3H2561.4v1.3H2553.6l-2 3.3zM2551.6 368.4l2 3.3H2561.4v1.3H2553.6l-2 3.3zM2567.4 347.4l2 3.3H2577.2v1.3H2569.4l-2 3.3zM2567.4 368.4l2 3.3H2577.2v1.3H2569.4l-2 3.3zM2583.2 347.4l2 3.3H2593v1.3H2585.2l-2 3.3zM2583.2 368.4l2 3.3H2593v1.3H2585.2l-2 3.3zM2599 347.4l2 3.3H2608.8v1.3H2601l-2 3.3zM2599 368.4l2 3.3H2608.8v1.3H2601l-2 3.3zM2614.8 347.4l2 3.3H2624.7v1.3H2616.8l-2 3.3zM2614.8 368.4l2 3.3H2624.7v1.3H2616.8l-2 3.3zM2630.7 347.4l2 3.3H2640.5v1.3H2632.7l-2 3.3zM2630.7 368.4l2 3.3H2640.5v1.3H2632.7l-2 3.3zM2646.5 347.4l2 3.3H2656.3v1.3H2648.5l-2 3.3zM2646.5 368.4l2 3.3H2656.3v1.3H2648.5l-2 3.3zM2662.3 347.4l2 3.3H2672.1v1.3H2664.3l-2 3.3zM2662.3 368.4l2 3.3H2672.1v1.3H2664.3l-2 3.3zM2678.1 347.4l2 3.3H2687.9v1.3H2680.1l-2 3.3zM2678.1 368.4l2 3.3H2687.9v1.3H2680.1l-2 3.3zM2693.9 347.4l2 3.3H2703.7v1.3H2695.9l-2 3.3zM2693.9 368.4l2 3.3H2703.7v1.3H2695.9l-2 3.3zM2709.7 347.4l2 3.3H2719.6v1.3H2711.7l-2 3.3zM2709.7 368.4l2 3.3H2719.6v1.3H2711.7l-2 3.3zM2725.6 347.4l2 3.3H2735.4v1.3H2727.6l-2 3.3zM2725.6 368.4l2 3.3H2735.4v1.3H2727.6l-2 3.3zM2741.4 347.4l2 3.3H2751.2v1.3H2743.4l-2 3.3zM2741.4 368.4l2 3.3H2751.2v1.3H2743.4l-2 3.3zM2757.2 347.4l2 3.3H2767v1.3H2759.2l-2 3.3zM2757.2 368.4l2 3.3H2767v1.3H2759.2l-2 3.3z" fill="#7a5c14"/>
<rect x="745.4" y="387.8" width="16.8" height="45.5" fill="#15150f"/>
<rect x="745.9" y="388.3" width="15.8" height="44.5" fill="#efc245"/>
<rect x="747.2" y="389.6" width="13.2" height="41.9" fill="#b8973a"/>
<rect x="761.2" y="387.8" width="16.8" height="45.5" fill="#15150f"/>
<rect x="761.7" y="388.3" width="15.8" height="44.5" fill="#efc245"/>
<rect x="763" y="389.6" width="13.2" height="41.9" fill="#b8973a"/>
<rect x="777" y="387.8" width="16.8" height="45.5" fill="#15150f"/>
<rect x="777.5" y="388.3" width="15.8" height="44.5" fill="#efc245"/>
<rect x="778.8" y="389.6" width="13.2" height="41.9" fill="#b8973a"/>
<rect x="792.9" y="387.8" width="16.8" height="45.5" fill="#15150f"/>
<rect x="793.4" y="388.3" width="15.8" height="44.5" fill="#efc245"/>
<rect x="794.7" y="389.6" width="13.2" height="41.9" fill="#b8973a"/>
<rect x="808.7" y="387.8" width="16.8" height="45.5" fill="#15150f"/>
<rect x="809.2" y="388.3" width="15.8" height="44.5" fill="#efc245"/>
<rect x="810.5" y="389.6" width="13.2" height="41.9" fill="#b8973a"/>
<rect x="824.5" y="387.8" width="16.8" height="45.5" fill="#15150f"/>
<rect x="825" y="388.3" width="15.8" height="44.5" fill="#efc245"/>
<rect x="826.3" y="389.6" width="13.2" height="41.9" fill="#b8973a"/>
<rect x="840.3" y="387.8" width="16.8" height="45.5" fill="#15150f"/>
<rect x="840.8" y="388.3" width="15.8" height="44.5" fill="#efc245"/>
<rect x="842.1" y="389.6" width="13.2" height="41.9" fill="#b8973a"/>
<rect x="856.1" y="387.8" width="16.8" height="45.5" fill="#15150f"/>
<rect x="856.6" y="388.3" width="15.8" height="44.5" fill="#efc245"/>
<rect x="857.9" y="389.6" width="13.2" height="41.9" fill="#b8973a"/>
<rect x="872" y="387.8" width="16.8" height="45.5" fill="#15150f"/>
<rect x="872.5" y="388.3" width="15.8" height="44.5" fill="#efc245"/>
<rect x="873.8" y="389.6" width="13.2" height="41.9" fill="#b8973a"/>
<rect x="887.8" y="387.8" width="16.8" height="45.5" fill="#15150f"/>
<rect x="888.3" y="388.3" width="15.8" height="44.5" fill="#efc245"/>
<rect x="889.6" y="389.6" width="13.2" height="41.9" fill="#b8973a"/>
<rect x="903.6" y="387.8" width="16.8" height="45.5" fill="#15150f"/>
<rect x="904.1" y="388.3" width="15.8" height="44.5" fill="#efc245"/>
<rect x="905.4" y="389.6" width="13.2" height="41.9" fill="#b8973a"/>
<rect x="919.4" y="387.8" width="16.8" height="45.5" fill="#15150f"/>
<rect x="919.9" y="388.3" width="15.8" height="44.5" fill="#efc245"/>
<rect x="921.2" y="389.6" width="13.2" height="41.9" fill="#b8973a"/>
<rect x="935.2" y="387.8" width="16.8" height="45.5" fill="#15150f"/>
<rect x="935.7" y="388.3" width="15.8" height="44.5" fill="#efc245"/>
<rect x="937" y="389.6" width="13.2" height="41.9" fill="#b8973a"/>
<rect x="951" y="387.8" width="16.8" height="45.5" fill="#15150f"/>
<rect x="951.5" y="388.3" width="15.8" height="44.5" fill="#efc245"/>
<rect x="952.8" y="389.6" width="13.2" height="41.9" fill="#b8973a"/>
<rect x="966.9" y="387.8" width="16.8" height="45.5" fill="#15150f"/>
<rect x="967.4" y="388.3" width="15.8" height="44.5" fill="#efc245"/>
<rect x="968.7" y="389.6" width="13.2" height="41.9" fill="#b8973a"/>
<rect x="982.7" y="387.8" width="16.8" height="45.5" fill="#15150f"/>
<rect x="983.2" y="388.3" width="15.8" height="44.5" fill="#efc245"/>
<rect x="984.5" y="389.6" width="13.2" height="41.9" fill="#b8973a"/>
<path d="M748.9 396.3l2 3.3H758.7v1.3H750.9l-2 3.3zM748.9 417.3l2 3.3H758.7v1.3H750.9l-2 3.3zM764.7 396.3l2 3.3H774.5v1.3H766.7l-2 3.3zM764.7 417.3l2 3.3H774.5v1.3H766.7l-2 3.3zM780.5 396.3l2 3.3H790.4v1.3H782.5l-2 3.3zM780.5 417.3l2 3.3H790.4v1.3H782.5l-2 3.3zM796.4 396.3l2 3.3H806.2v1.3H798.4l-2 3.3zM796.4 417.3l2 3.3H806.2v1.3H798.4l-2 3.3zM812.2 396.3l2 3.3H822v1.3H814.2l-2 3.3zM812.2 417.3l2 3.3H822v1.3H814.2l-2 3.3zM828 396.3l2 3.3H837.8v1.3H830l-2 3.3zM828 417.3l2 3.3H837.8v1.3H830l-2 3.3zM843.8 396.3l2 3.3H853.6v1.3H845.8l-2 3.3zM843.8 417.3l2 3.3H853.6v1.3H845.8l-2 3.3zM859.6 396.3l2 3.3H869.5v1.3H861.6l-2 3.3zM859.6 417.3l2 3.3H869.5v1.3H861.6l-2 3.3zM875.5 396.3l2 3.3H885.3v1.3H877.5l-2 3.3zM875.5 417.3l2 3.3H885.3v1.3H877.5l-2 3.3zM891.3 396.3l2 3.3H901.1v1.3H893.3l-2 3.3zM891.3 417.3l2 3.3H901.1v1.3H893.3l-2 3.3zM907.1 396.3l2 3.3H916.9v1.3H909.1l-2 3.3zM907.1 417.3l2 3.3H916.9v1.3H909.1l-2 3.3zM922.9 396.3l2 3.3H932.7v1.3H924.9l-2 3.3zM922.9 417.3l2 3.3H932.7v1.3H924.9l-2 3.3zM938.7 396.3l2 3.3H948.5v1.3H940.7l-2 3.3zM938.7 417.3l2 3.3H948.5v1.3H940.7l-2 3.3zM954.5 396.3l2 3.3H964.4v1.3H956.5l-2 3.3zM954.5 417.3l2 3.3H964.4v1.3H956.5l-2 3.3zM970.4 396.3l2 3.3H980.2v1.3H972.4l-2 3.3zM970.4 417.3l2 3.3H980.2v1.3H972.4l-2 3.3zM986.2 396.3l2 3.3H996v1.3H988.2l-2 3.3zM986.2 417.3l2 3.3H996v1.3H988.2l-2 3.3z" fill="#7a5c14"/>
<rect x="1757.3" y="387.8" width="16.8" height="45.5" fill="#15150f"/>
<rect x="1757.8" y="388.3" width="15.8" height="44.5" fill="#efc245"/>
<rect x="1759.1" y="389.6" width="13.2" height="41.9" fill="#b8973a"/>
<rect x="1773.1" y="387.8" width="16.8" height="45.5" fill="#15150f"/>
<rect x="1773.6" y="388.3" width="15.8" height="44.5" fill="#efc245"/>
<rect x="1774.9" y="389.6" width="13.2" height="41.9" fill="#b8973a"/>
<rect x="1788.9" y="387.8" width="16.8" height="45.5" fill="#15150f"/>
<rect x="1789.4" y="388.3" width="15.8" height="44.5" fill="#efc245"/>
<rect x="1790.7" y="389.6" width="13.2" height="41.9" fill="#b8973a"/>
<rect x="1804.7" y="387.8" width="16.8" height="45.5" fill="#15150f"/>
<rect x="1805.2" y="388.3" width="15.8" height="44.5" fill="#efc245"/>
<rect x="1806.5" y="389.6" width="13.2" height="41.9" fill="#b8973a"/>
<rect x="1820.6" y="387.8" width="16.8" height="45.5" fill="#15150f"/>
<rect x="1821.1" y="388.3" width="15.8" height="44.5" fill="#efc245"/>
<rect x="1822.4" y="389.6" width="13.2" height="41.9" fill="#b8973a"/>
<rect x="1836.4" y="387.8" width="16.8" height="45.5" fill="#15150f"/>
<rect x="1836.9" y="388.3" width="15.8" height="44.5" fill="#efc245"/>
<rect x="1838.2" y="389.6" width="13.2" height="41.9" fill="#b8973a"/>
<rect x="1852.2" y="387.8" width="16.8" height="45.5" fill="#15150f"/>
<rect x="1852.7" y="388.3" width="15.8" height="44.5" fill="#efc245"/>
<rect x="1854" y="389.6" width="13.2" height="41.9" fill="#b8973a"/>
<rect x="1868" y="387.8" width="16.8" height="45.5" fill="#15150f"/>
<rect x="1868.5" y="388.3" width="15.8" height="44.5" fill="#efc245"/>
<rect x="1869.8" y="389.6" width="13.2" height="41.9" fill="#b8973a"/>
<rect x="1883.8" y="387.8" width="16.8" height="45.5" fill="#15150f"/>
<rect x="1884.3" y="388.3" width="15.8" height="44.5" fill="#efc245"/>
<rect x="1885.6" y="389.6" width="13.2" height="41.9" fill="#b8973a"/>
<rect x="1899.6" y="387.8" width="16.8" height="45.5" fill="#15150f"/>
<rect x="1900.1" y="388.3" width="15.8" height="44.5" fill="#efc245"/>
<rect x="1901.4" y="389.6" width="13.2" height="41.9" fill="#b8973a"/>
<rect x="1915.5" y="387.8" width="16.8" height="45.5" fill="#15150f"/>
<rect x="1916" y="388.3" width="15.8" height="44.5" fill="#efc245"/>
<rect x="1917.3" y="389.6" width="13.2" height="41.9" fill="#b8973a"/>
<rect x="1931.3" y="387.8" width="16.8" height="45.5" fill="#15150f"/>
<rect x="1931.8" y="388.3" width="15.8" height="44.5" fill="#efc245"/>
<rect x="1933.1" y="389.6" width="13.2" height="41.9" fill="#b8973a"/>
<rect x="1947.1" y="387.8" width="16.8" height="45.5" fill="#15150f"/>
<rect x="1947.6" y="388.3" width="15.8" height="44.5" fill="#efc245"/>
<rect x="1948.9" y="389.6" width="13.2" height="41.9" fill="#b8973a"/>
<rect x="1962.9" y="387.8" width="16.8" height="45.5" fill="#15150f"/>
<rect x="1963.4" y="388.3" width="15.8" height="44.5" fill="#efc245"/>
<rect x="1964.7" y="389.6" width="13.2" height="41.9" fill="#b8973a"/>
<rect x="1978.7" y="387.8" width="16.8" height="45.5" fill="#15150f"/>
<rect x="1979.2" y="388.3" width="15.8" height="44.5" fill="#efc245"/>
<rect x="1980.5" y="389.6" width="13.2" height="41.9" fill="#b8973a"/>
<rect x="1994.5" y="387.8" width="16.8" height="45.5" fill="#15150f"/>
<rect x="1995" y="388.3" width="15.8" height="44.5" fill="#efc245"/>
<rect x="1996.3" y="389.6" width="13.2" height="41.9" fill="#b8973a"/>
<rect x="2010.3" y="387.8" width="16.8" height="45.5" fill="#15150f"/>
<rect x="2010.8" y="388.3" width="15.8" height="44.5" fill="#efc245"/>
<rect x="2012.1" y="389.6" width="13.2" height="41.9" fill="#b8973a"/>
<rect x="2026.2" y="387.8" width="16.8" height="45.5" fill="#15150f"/>
<rect x="2026.7" y="388.3" width="15.8" height="44.5" fill="#efc245"/>
<rect x="2028" y="389.6" width="13.2" height="41.9" fill="#b8973a"/>
<rect x="2042" y="387.8" width="16.8" height="45.5" fill="#15150f"/>
<rect x="2042.5" y="388.3" width="15.8" height="44.5" fill="#efc245"/>
<rect x="2043.8" y="389.6" width="13.2" height="41.9" fill="#b8973a"/>
<rect x="2057.8" y="387.8" width="16.8" height="45.5" fill="#15150f"/>
<rect x="2058.3" y="388.3" width="15.8" height="44.5" fill="#efc245"/>
<rect x="2059.6" y="389.6" width="13.2" height="41.9" fill="#b8973a"/>
<rect x="2073.6" y="387.8" width="16.8" height="45.5" fill="#15150f"/>
<rect x="2074.1" y="388.3" width="15.8" height="44.5" fill="#efc245"/>
<rect x="2075.4" y="389.6" width="13.2" height="41.9" fill="#b8973a"/>
<rect x="2089.4" y="387.8" width="16.8" height="45.5" fill="#15150f"/>
<rect x="2089.9" y="388.3" width="15.8" height="44.5" fill="#efc245"/>
<rect x="2091.2" y="389.6" width="13.2" height="41.9" fill="#b8973a"/>
<rect x="2105.2" y="387.8" width="16.8" height="45.5" fill="#15150f"/>
<rect x="2105.7" y="388.3" width="15.8" height="44.5" fill="#efc245"/>
<rect x="2107" y="389.6" width="13.2" height="41.9" fill="#b8973a"/>
<rect x="2121.1" y="387.8" width="16.8" height="45.5" fill="#15150f"/>
<rect x="2121.6" y="388.3" width="15.8" height="44.5" fill="#efc245"/>
<rect x="2122.9" y="389.6" width="13.2" height="41.9" fill="#b8973a"/>
<rect x="2136.9" y="387.8" width="16.8" height="45.5" fill="#15150f"/>
<rect x="2137.4" y="388.3" width="15.8" height="44.5" fill="#efc245"/>
<rect x="2138.7" y="389.6" width="13.2" height="41.9" fill="#b8973a"/>
<rect x="2152.7" y="387.8" width="16.8" height="45.5" fill="#15150f"/>
<rect x="2153.2" y="388.3" width="15.8" height="44.5" fill="#efc245"/>
<rect x="2154.5" y="389.6" width="13.2" height="41.9" fill="#b8973a"/>
<rect x="2168.5" y="387.8" width="16.8" height="45.5" fill="#15150f"/>
<rect x="2169" y="388.3" width="15.8" height="44.5" fill="#efc245"/>
<rect x="2170.3" y="389.6" width="13.2" height="41.9" fill="#b8973a"/>
<rect x="2184.3" y="387.8" width="16.8" height="45.5" fill="#15150f"/>
<rect x="2184.8" y="388.3" width="15.8" height="44.5" fill="#efc245"/>
<rect x="2186.1" y="389.6" width="13.2" height="41.9" fill="#b8973a"/>
<rect x="2200.1" y="387.8" width="16.8" height="45.5" fill="#15150f"/>
<rect x="2200.6" y="388.3" width="15.8" height="44.5" fill="#efc245"/>
<rect x="2201.9" y="389.6" width="13.2" height="41.9" fill="#b8973a"/>
<rect x="2216" y="387.8" width="16.8" height="45.5" fill="#15150f"/>
<rect x="2216.5" y="388.3" width="15.8" height="44.5" fill="#efc245"/>
<rect x="2217.8" y="389.6" width="13.2" height="41.9" fill="#b8973a"/>
<rect x="2231.8" y="387.8" width="16.8" height="45.5" fill="#15150f"/>
<rect x="2232.3" y="388.3" width="15.8" height="44.5" fill="#efc245"/>
<rect x="2233.6" y="389.6" width="13.2" height="41.9" fill="#b8973a"/>
<rect x="2247.6" y="387.8" width="16.8" height="45.5" fill="#15150f"/>
<rect x="2248.1" y="388.3" width="15.8" height="44.5" fill="#efc245"/>
<rect x="2249.4" y="389.6" width="13.2" height="41.9" fill="#b8973a"/>
<rect x="2263.4" y="387.8" width="16.8" height="45.5" fill="#15150f"/>
<rect x="2263.9" y="388.3" width="15.8" height="44.5" fill="#efc245"/>
<rect x="2265.2" y="389.6" width="13.2" height="41.9" fill="#b8973a"/>
<rect x="2279.2" y="387.8" width="16.8" height="45.5" fill="#15150f"/>
<rect x="2279.7" y="388.3" width="15.8" height="44.5" fill="#efc245"/>
<rect x="2281" y="389.6" width="13.2" height="41.9" fill="#b8973a"/>
<rect x="2295" y="387.8" width="16.8" height="45.5" fill="#15150f"/>
<rect x="2295.5" y="388.3" width="15.8" height="44.5" fill="#efc245"/>
<rect x="2296.8" y="389.6" width="13.2" height="41.9" fill="#b8973a"/>
<rect x="2310.8" y="387.8" width="16.8" height="45.5" fill="#15150f"/>
<rect x="2311.3" y="388.3" width="15.8" height="44.5" fill="#efc245"/>
<rect x="2312.6" y="389.6" width="13.2" height="41.9" fill="#b8973a"/>
<rect x="2326.7" y="387.8" width="16.8" height="45.5" fill="#15150f"/>
<rect x="2327.2" y="388.3" width="15.8" height="44.5" fill="#efc245"/>
<rect x="2328.5" y="389.6" width="13.2" height="41.9" fill="#b8973a"/>
<rect x="2342.5" y="387.8" width="16.8" height="45.5" fill="#15150f"/>
<rect x="2343" y="388.3" width="15.8" height="44.5" fill="#efc245"/>
<rect x="2344.3" y="389.6" width="13.2" height="41.9" fill="#b8973a"/>
<rect x="2358.3" y="387.8" width="16.8" height="45.5" fill="#15150f"/>
<rect x="2358.8" y="388.3" width="15.8" height="44.5" fill="#efc245"/>
<rect x="2360.1" y="389.6" width="13.2" height="41.9" fill="#b8973a"/>
<rect x="2374.1" y="387.8" width="16.8" height="45.5" fill="#15150f"/>
<rect x="2374.6" y="388.3" width="15.8" height="44.5" fill="#efc245"/>
<rect x="2375.9" y="389.6" width="13.2" height="41.9" fill="#b8973a"/>
<rect x="2389.9" y="387.8" width="16.8" height="45.5" fill="#15150f"/>
<rect x="2390.4" y="388.3" width="15.8" height="44.5" fill="#efc245"/>
<rect x="2391.7" y="389.6" width="13.2" height="41.9" fill="#b8973a"/>
<rect x="2405.7" y="387.8" width="16.8" height="45.5" fill="#15150f"/>
<rect x="2406.2" y="388.3" width="15.8" height="44.5" fill="#efc245"/>
<rect x="2407.5" y="389.6" width="13.2" height="41.9" fill="#b8973a"/>
<rect x="2421.6" y="387.8" width="16.8" height="45.5" fill="#15150f"/>
<rect x="2422.1" y="388.3" width="15.8" height="44.5" fill="#efc245"/>
<rect x="2423.4" y="389.6" width="13.2" height="41.9" fill="#b8973a"/>
<rect x="2437.4" y="387.8" width="16.8" height="45.5" fill="#15150f"/>
<rect x="2437.9" y="388.3" width="15.8" height="44.5" fill="#efc245"/>
<rect x="2439.2" y="389.6" width="13.2" height="41.9" fill="#b8973a"/>
<rect x="2453.2" y="387.8" width="16.8" height="45.5" fill="#15150f"/>
<rect x="2453.7" y="388.3" width="15.8" height="44.5" fill="#efc245"/>
<rect x="2455" y="389.6" width="13.2" height="41.9" fill="#b8973a"/>
<rect x="2469" y="387.8" width="16.8" height="45.5" fill="#15150f"/>
<rect x="2469.5" y="388.3" width="15.8" height="44.5" fill="#efc245"/>
<rect x="2470.8" y="389.6" width="13.2" height="41.9" fill="#b8973a"/>
<rect x="2484.8" y="387.8" width="16.8" height="45.5" fill="#15150f"/>
<rect x="2485.3" y="388.3" width="15.8" height="44.5" fill="#efc245"/>
<rect x="2486.6" y="389.6" width="13.2" height="41.9" fill="#b8973a"/>
<rect x="2500.6" y="387.8" width="16.8" height="45.5" fill="#15150f"/>
<rect x="2501.1" y="388.3" width="15.8" height="44.5" fill="#efc245"/>
<rect x="2502.4" y="389.6" width="13.2" height="41.9" fill="#b8973a"/>
<rect x="2516.4" y="387.8" width="16.8" height="45.5" fill="#15150f"/>
<rect x="2516.9" y="388.3" width="15.8" height="44.5" fill="#efc245"/>
<rect x="2518.2" y="389.6" width="13.2" height="41.9" fill="#b8973a"/>
<rect x="2532.3" y="387.8" width="16.8" height="45.5" fill="#15150f"/>
<rect x="2532.8" y="388.3" width="15.8" height="44.5" fill="#efc245"/>
<rect x="2534.1" y="389.6" width="13.2" height="41.9" fill="#b8973a"/>
<rect x="2548.1" y="387.8" width="16.8" height="45.5" fill="#15150f"/>
<rect x="2548.6" y="388.3" width="15.8" height="44.5" fill="#efc245"/>
<rect x="2549.9" y="389.6" width="13.2" height="41.9" fill="#b8973a"/>
<rect x="2563.9" y="387.8" width="16.8" height="45.5" fill="#15150f"/>
<rect x="2564.4" y="388.3" width="15.8" height="44.5" fill="#efc245"/>
<rect x="2565.7" y="389.6" width="13.2" height="41.9" fill="#b8973a"/>
<rect x="2579.7" y="387.8" width="16.8" height="45.5" fill="#15150f"/>
<rect x="2580.2" y="388.3" width="15.8" height="44.5" fill="#efc245"/>
<rect x="2581.5" y="389.6" width="13.2" height="41.9" fill="#b8973a"/>
<rect x="2595.5" y="387.8" width="16.8" height="45.5" fill="#15150f"/>
<rect x="2596" y="388.3" width="15.8" height="44.5" fill="#efc245"/>
<rect x="2597.3" y="389.6" width="13.2" height="41.9" fill="#b8973a"/>
<rect x="2611.3" y="387.8" width="16.8" height="45.5" fill="#15150f"/>
<rect x="2611.8" y="388.3" width="15.8" height="44.5" fill="#efc245"/>
<rect x="2613.1" y="389.6" width="13.2" height="41.9" fill="#b8973a"/>
<rect x="2627.2" y="387.8" width="16.8" height="45.5" fill="#15150f"/>
<rect x="2627.7" y="388.3" width="15.8" height="44.5" fill="#efc245"/>
<rect x="2629" y="389.6" width="13.2" height="41.9" fill="#b8973a"/>
<rect x="2643" y="387.8" width="16.8" height="45.5" fill="#15150f"/>
<rect x="2643.5" y="388.3" width="15.8" height="44.5" fill="#efc245"/>
<rect x="2644.8" y="389.6" width="13.2" height="41.9" fill="#b8973a"/>
<rect x="2658.8" y="387.8" width="16.8" height="45.5" fill="#15150f"/>
<rect x="2659.3" y="388.3" width="15.8" height="44.5" fill="#efc245"/>
<rect x="2660.6" y="389.6" width="13.2" height="41.9" fill="#b8973a"/>
<rect x="2674.6" y="387.8" width="16.8" height="45.5" fill="#15150f"/>
<rect x="2675.1" y="388.3" width="15.8" height="44.5" fill="#efc245"/>
<rect x="2676.4" y="389.6" width="13.2" height="41.9" fill="#b8973a"/>
<rect x="2690.4" y="387.8" width="16.8" height="45.5" fill="#15150f"/>
<rect x="2690.9" y="388.3" width="15.8" height="44.5" fill="#efc245"/>
<rect x="2692.2" y="389.6" width="13.2" height="41.9" fill="#b8973a"/>
<rect x="2706.2" y="387.8" width="16.8" height="45.5" fill="#15150f"/>
<rect x="2706.7" y="388.3" width="15.8" height="44.5" fill="#efc245"/>
<rect x="2708" y="389.6" width="13.2" height="41.9" fill="#b8973a"/>
<rect x="2722.1" y="387.8" width="16.8" height="45.5" fill="#15150f"/>
<rect x="2722.6" y="388.3" width="15.8" height="44.5" fill="#efc245"/>
<rect x="2723.9" y="389.6" width="13.2" height="41.9" fill="#b8973a"/>
<rect x="2737.9" y="387.8" width="16.8" height="45.5" fill="#15150f"/>
<rect x="2738.4" y="388.3" width="15.8" height="44.5" fill="#efc245"/>
<rect x="2739.7" y="389.6" width="13.2" height="41.9" fill="#b8973a"/>
<rect x="2753.7" y="387.8" width="16.8" height="45.5" fill="#15150f"/>
<rect x="2754.2" y="388.3" width="15.8" height="44.5" fill="#efc245"/>
<rect x="2755.5" y="389.6" width="13.2" height="41.9" fill="#b8973a"/>
<path d="M1760.8 396.3l2 3.3H1770.6v1.3H1762.8l-2 3.3zM1760.8 417.3l2 3.3H1770.6v1.3H1762.8l-2 3.3zM1776.6 396.3l2 3.3H1786.4v1.3H1778.6l-2 3.3zM1776.6 417.3l2 3.3H1786.4v1.3H1778.6l-2 3.3zM1792.4 396.3l2 3.3H1802.2v1.3H1794.4l-2 3.3zM1792.4 417.3l2 3.3H1802.2v1.3H1794.4l-2 3.3zM1808.2 396.3l2 3.3H1818.1v1.3H1810.2l-2 3.3zM1808.2 417.3l2 3.3H1818.1v1.3H1810.2l-2 3.3zM1824.1 396.3l2 3.3H1833.9v1.3H1826.1l-2 3.3zM1824.1 417.3l2 3.3H1833.9v1.3H1826.1l-2 3.3zM1839.9 396.3l2 3.3H1849.7v1.3H1841.9l-2 3.3zM1839.9 417.3l2 3.3H1849.7v1.3H1841.9l-2 3.3zM1855.7 396.3l2 3.3H1865.5v1.3H1857.7l-2 3.3zM1855.7 417.3l2 3.3H1865.5v1.3H1857.7l-2 3.3zM1871.5 396.3l2 3.3H1881.3v1.3H1873.5l-2 3.3zM1871.5 417.3l2 3.3H1881.3v1.3H1873.5l-2 3.3zM1887.3 396.3l2 3.3H1897.1v1.3H1889.3l-2 3.3zM1887.3 417.3l2 3.3H1897.1v1.3H1889.3l-2 3.3zM1903.1 396.3l2 3.3H1913v1.3H1905.1l-2 3.3zM1903.1 417.3l2 3.3H1913v1.3H1905.1l-2 3.3zM1919 396.3l2 3.3H1928.8v1.3H1921l-2 3.3zM1919 417.3l2 3.3H1928.8v1.3H1921l-2 3.3zM1934.8 396.3l2 3.3H1944.6v1.3H1936.8l-2 3.3zM1934.8 417.3l2 3.3H1944.6v1.3H1936.8l-2 3.3zM1950.6 396.3l2 3.3H1960.4v1.3H1952.6l-2 3.3zM1950.6 417.3l2 3.3H1960.4v1.3H1952.6l-2 3.3zM1966.4 396.3l2 3.3H1976.2v1.3H1968.4l-2 3.3zM1966.4 417.3l2 3.3H1976.2v1.3H1968.4l-2 3.3zM1982.2 396.3l2 3.3H1992v1.3H1984.2l-2 3.3zM1982.2 417.3l2 3.3H1992v1.3H1984.2l-2 3.3zM1998 396.3l2 3.3H2007.8v1.3H2000l-2 3.3zM1998 417.3l2 3.3H2007.8v1.3H2000l-2 3.3zM2013.8 396.3l2 3.3H2023.7v1.3H2015.8l-2 3.3zM2013.8 417.3l2 3.3H2023.7v1.3H2015.8l-2 3.3zM2029.7 396.3l2 3.3H2039.5v1.3H2031.7l-2 3.3zM2029.7 417.3l2 3.3H2039.5v1.3H2031.7l-2 3.3zM2045.5 396.3l2 3.3H2055.3v1.3H2047.5l-2 3.3zM2045.5 417.3l2 3.3H2055.3v1.3H2047.5l-2 3.3zM2061.3 396.3l2 3.3H2071.1v1.3H2063.3l-2 3.3zM2061.3 417.3l2 3.3H2071.1v1.3H2063.3l-2 3.3zM2077.1 396.3l2 3.3H2086.9v1.3H2079.1l-2 3.3zM2077.1 417.3l2 3.3H2086.9v1.3H2079.1l-2 3.3zM2092.9 396.3l2 3.3H2102.7v1.3H2094.9l-2 3.3zM2092.9 417.3l2 3.3H2102.7v1.3H2094.9l-2 3.3zM2108.7 396.3l2 3.3H2118.6v1.3H2110.7l-2 3.3zM2108.7 417.3l2 3.3H2118.6v1.3H2110.7l-2 3.3zM2124.6 396.3l2 3.3H2134.4v1.3H2126.6l-2 3.3zM2124.6 417.3l2 3.3H2134.4v1.3H2126.6l-2 3.3zM2140.4 396.3l2 3.3H2150.2v1.3H2142.4l-2 3.3zM2140.4 417.3l2 3.3H2150.2v1.3H2142.4l-2 3.3zM2156.2 396.3l2 3.3H2166v1.3H2158.2l-2 3.3zM2156.2 417.3l2 3.3H2166v1.3H2158.2l-2 3.3zM2172 396.3l2 3.3H2181.8v1.3H2174l-2 3.3zM2172 417.3l2 3.3H2181.8v1.3H2174l-2 3.3zM2187.8 396.3l2 3.3H2197.6v1.3H2189.8l-2 3.3zM2187.8 417.3l2 3.3H2197.6v1.3H2189.8l-2 3.3zM2203.6 396.3l2 3.3H2213.5v1.3H2205.6l-2 3.3zM2203.6 417.3l2 3.3H2213.5v1.3H2205.6l-2 3.3zM2219.5 396.3l2 3.3H2229.3v1.3H2221.5l-2 3.3zM2219.5 417.3l2 3.3H2229.3v1.3H2221.5l-2 3.3zM2235.3 396.3l2 3.3H2245.1v1.3H2237.3l-2 3.3zM2235.3 417.3l2 3.3H2245.1v1.3H2237.3l-2 3.3zM2251.1 396.3l2 3.3H2260.9v1.3H2253.1l-2 3.3zM2251.1 417.3l2 3.3H2260.9v1.3H2253.1l-2 3.3zM2266.9 396.3l2 3.3H2276.7v1.3H2268.9l-2 3.3zM2266.9 417.3l2 3.3H2276.7v1.3H2268.9l-2 3.3zM2282.7 396.3l2 3.3H2292.5v1.3H2284.7l-2 3.3zM2282.7 417.3l2 3.3H2292.5v1.3H2284.7l-2 3.3zM2298.5 396.3l2 3.3H2308.3v1.3H2300.5l-2 3.3zM2298.5 417.3l2 3.3H2308.3v1.3H2300.5l-2 3.3zM2314.3 396.3l2 3.3H2324.2v1.3H2316.3l-2 3.3zM2314.3 417.3l2 3.3H2324.2v1.3H2316.3l-2 3.3zM2330.2 396.3l2 3.3H2340v1.3H2332.2l-2 3.3zM2330.2 417.3l2 3.3H2340v1.3H2332.2l-2 3.3zM2346 396.3l2 3.3H2355.8v1.3H2348l-2 3.3zM2346 417.3l2 3.3H2355.8v1.3H2348l-2 3.3zM2361.8 396.3l2 3.3H2371.6v1.3H2363.8l-2 3.3zM2361.8 417.3l2 3.3H2371.6v1.3H2363.8l-2 3.3zM2377.6 396.3l2 3.3H2387.4v1.3H2379.6l-2 3.3zM2377.6 417.3l2 3.3H2387.4v1.3H2379.6l-2 3.3zM2393.4 396.3l2 3.3H2403.2v1.3H2395.4l-2 3.3zM2393.4 417.3l2 3.3H2403.2v1.3H2395.4l-2 3.3zM2409.2 396.3l2 3.3H2419.1v1.3H2411.2l-2 3.3zM2409.2 417.3l2 3.3H2419.1v1.3H2411.2l-2 3.3zM2425.1 396.3l2 3.3H2434.9v1.3H2427.1l-2 3.3zM2425.1 417.3l2 3.3H2434.9v1.3H2427.1l-2 3.3zM2440.9 396.3l2 3.3H2450.7v1.3H2442.9l-2 3.3zM2440.9 417.3l2 3.3H2450.7v1.3H2442.9l-2 3.3zM2456.7 396.3l2 3.3H2466.5v1.3H2458.7l-2 3.3zM2456.7 417.3l2 3.3H2466.5v1.3H2458.7l-2 3.3zM2472.5 396.3l2 3.3H2482.3v1.3H2474.5l-2 3.3zM2472.5 417.3l2 3.3H2482.3v1.3H2474.5l-2 3.3zM2488.3 396.3l2 3.3H2498.1v1.3H2490.3l-2 3.3zM2488.3 417.3l2 3.3H2498.1v1.3H2490.3l-2 3.3zM2504.1 396.3l2 3.3H2514v1.3H2506.1l-2 3.3zM2504.1 417.3l2 3.3H2514v1.3H2506.1l-2 3.3zM2519.9 396.3l2 3.3H2529.8v1.3H2521.9l-2 3.3zM2519.9 417.3l2 3.3H2529.8v1.3H2521.9l-2 3.3zM2535.8 396.3l2 3.3H2545.6v1.3H2537.8l-2 3.3zM2535.8 417.3l2 3.3H2545.6v1.3H2537.8l-2 3.3zM2551.6 396.3l2 3.3H2561.4v1.3H2553.6l-2 3.3zM2551.6 417.3l2 3.3H2561.4v1.3H2553.6l-2 3.3zM2567.4 396.3l2 3.3H2577.2v1.3H2569.4l-2 3.3zM2567.4 417.3l2 3.3H2577.2v1.3H2569.4l-2 3.3zM2583.2 396.3l2 3.3H2593v1.3H2585.2l-2 3.3zM2583.2 417.3l2 3.3H2593v1.3H2585.2l-2 3.3zM2599 396.3l2 3.3H2608.8v1.3H2601l-2 3.3zM2599 417.3l2 3.3H2608.8v1.3H2601l-2 3.3zM2614.8 396.3l2 3.3H2624.7v1.3H2616.8l-2 3.3zM2614.8 417.3l2 3.3H2624.7v1.3H2616.8l-2 3.3zM2630.7 396.3l2 3.3H2640.5v1.3H2632.7l-2 3.3zM2630.7 417.3l2 3.3H2640.5v1.3H2632.7l-2 3.3zM2646.5 396.3l2 3.3H2656.3v1.3H2648.5l-2 3.3zM2646.5 417.3l2 3.3H2656.3v1.3H2648.5l-2 3.3zM2662.3 396.3l2 3.3H2672.1v1.3H2664.3l-2 3.3zM2662.3 417.3l2 3.3H2672.1v1.3H2664.3l-2 3.3zM2678.1 396.3l2 3.3H2687.9v1.3H2680.1l-2 3.3zM2678.1 417.3l2 3.3H2687.9v1.3H2680.1l-2 3.3zM2693.9 396.3l2 3.3H2703.7v1.3H2695.9l-2 3.3zM2693.9 417.3l2 3.3H2703.7v1.3H2695.9l-2 3.3zM2709.7 396.3l2 3.3H2719.6v1.3H2711.7l-2 3.3zM2709.7 417.3l2 3.3H2719.6v1.3H2711.7l-2 3.3zM2725.6 396.3l2 3.3H2735.4v1.3H2727.6l-2 3.3zM2725.6 417.3l2 3.3H2735.4v1.3H2727.6l-2 3.3zM2741.4 396.3l2 3.3H2751.2v1.3H2743.4l-2 3.3zM2741.4 417.3l2 3.3H2751.2v1.3H2743.4l-2 3.3zM2757.2 396.3l2 3.3H2767v1.3H2759.2l-2 3.3zM2757.2 417.3l2 3.3H2767v1.3H2759.2l-2 3.3z" fill="#7a5c14"/>
<rect x="737" y="436.2" width="254" height="46" fill="#15150f"/>
<rect x="737.5" y="436.7" width="253" height="45" fill="#efc245"/>
<rect x="739.1" y="438.3" width="249.8" height="41.8" fill="#b8973a"/>
<path d="M768.3 438.2v42M799.9 438.2v42M831.5 438.2v42M863.2 438.2v42M894.8 438.2v42M926.4 438.2v42M958.1 438.2v42" stroke="#c99f2a" stroke-width="1.2"/>
<rect x="738.8" y="440.7" width="250.4" height="12" fill="#8f7020"/>
<path d="M740.5 460.2H987.5" stroke="#7a5c14" stroke-width="38" stroke-dasharray="1.2 2.75" opacity="0.28"/>
<path d="M738.8 458.7H989.2M738.8 467.7H989.2" stroke="#7a5c14" stroke-width="1" opacity="0.2"/>
<rect x="739.5" y="438.7" width="26" height="18" fill="#e2c777"/>
<text x="742.5" y="452.2" font-size="12" font-weight="bold" fill="#1a1a1a">1</text>
<path d="M751.5 443.7h8l-4 5z" fill="#1a1a1a"/>
<rect x="1749.5" y="436.2" width="1013" height="46" fill="#15150f"/>
<rect x="1750" y="436.7" width="1012" height="45" fill="#efc245"/>
<rect x="1751.6" y="438.3" width="1008.8" height="41.8" fill="#b8973a"/>
<path d="M1780.6 438.2v42M1812.2 438.2v42M1843.8 438.2v42M1875.5 438.2v42M1907.1 438.2v42M1938.7 438.2v42M1970.4 438.2v42M2002 438.2v42M2033.6 438.2v42M2065.3 438.2v42M2096.9 438.2v42M2128.5 438.2v42M2160.2 438.2v42M2191.8 438.2v42M2223.4 438.2v42M2255.1 438.2v42M2286.7 438.2v42M2318.3 438.2v42M2350 438.2v42M2381.6 438.2v42M2413.2 438.2v42M2444.9 438.2v42M2476.5 438.2v42M2508.1 438.2v42M2539.8 438.2v42M2571.4 438.2v42M2603 438.2v42M2634.7 438.2v42M2666.3 438.2v42M2697.9 438.2v42M2729.6 438.2v42" stroke="#c99f2a" stroke-width="1.2"/>
<rect x="1751.3" y="440.7" width="1009.4" height="12" fill="#8f7020"/>
<path d="M1753 460.2H2759" stroke="#7a5c14" stroke-width="38" stroke-dasharray="1.2 2.75" opacity="0.28"/>
<path d="M1751.3 458.7H2760.7M1751.3 467.7H2760.7" stroke="#7a5c14" stroke-width="1" opacity="0.2"/>
<rect x="1752" y="438.7" width="26" height="18" fill="#e2c777"/>
<text x="1755" y="452.2" font-size="12" font-weight="bold" fill="#1a1a1a">1</text>
<path d="M1764 443.7h8l-4 5z" fill="#1a1a1a"/>
<rect x="706.2" y="485.7" width="8.6" height="45.5" fill="#15150f"/>
<rect x="706.7" y="486.2" width="7.6" height="44.5" fill="#efc245"/>
<rect x="708" y="487.5" width="5" height="41.9" fill="#b8973a"/>
<rect x="713.8" y="485.7" width="8.6" height="45.5" fill="#15150f"/>
<rect x="714.3" y="486.2" width="7.6" height="44.5" fill="#efc245"/>
<rect x="715.6" y="487.5" width="5" height="41.9" fill="#b8973a"/>
<rect x="721.4" y="485.7" width="8.6" height="45.5" fill="#15150f"/>
<rect x="721.9" y="486.2" width="7.6" height="44.5" fill="#efc245"/>
<rect x="723.1" y="487.5" width="5" height="41.9" fill="#b8973a"/>
<rect x="728.9" y="485.7" width="8.6" height="45.5" fill="#15150f"/>
<rect x="729.4" y="486.2" width="7.6" height="44.5" fill="#efc245"/>
<rect x="730.7" y="487.5" width="5" height="41.9" fill="#b8973a"/>
<path d="M709.7 494.2l2 3.3H711.3v1.3H711.7l-2 3.3zM709.7 515.2l2 3.3H711.3v1.3H711.7l-2 3.3zM717.3 494.2l2 3.3H718.9v1.3H719.3l-2 3.3zM717.3 515.2l2 3.3H718.9v1.3H719.3l-2 3.3zM724.9 494.2l2 3.3H726.4v1.3H726.9l-2 3.3zM724.9 515.2l2 3.3H726.4v1.3H726.9l-2 3.3zM732.4 494.2l2 3.3H734v1.3H734.4l-2 3.3zM732.4 515.2l2 3.3H734v1.3H734.4l-2 3.3z" fill="#7a5c14"/>
<rect x="737" y="534.1" width="254" height="45.5" fill="#15150f"/>
<rect x="737.5" y="534.6" width="253" height="44.5" fill="#6f8ff6"/>
<rect x="739.1" y="536.2" width="249.8" height="41.3" fill="#5068bf"/>
<path d="M768.3 536.1v41.5M799.9 536.1v41.5M831.5 536.1v41.5M863.2 536.1v41.5M894.8 536.1v41.5M926.4 536.1v41.5M958.1 536.1v41.5" stroke="#4262dc" stroke-width="1.2"/>
<rect x="738.8" y="550.6" width="250.4" height="12.5" fill="#2b52c9"/>
<rect x="738.8" y="564.4" width="250.4" height="13.4" fill="#2b52c9"/>
<rect x="990" y="534.1" width="506.5" height="45.5" fill="#15150f"/>
<rect x="990.5" y="534.6" width="505.5" height="44.5" fill="#6f8ff6"/>
<rect x="992.1" y="536.2" width="502.3" height="41.3" fill="#5068bf"/>
<path d="M1021.3 536.1v41.5M1053 536.1v41.5M1084.6 536.1v41.5M1116.2 536.1v41.5M1147.9 536.1v41.5M1179.5 536.1v41.5M1211.1 536.1v41.5M1242.8 536.1v41.5M1274.4 536.1v41.5M1306 536.1v41.5M1337.7 536.1v41.5M1369.3 536.1v41.5M1401 536.1v41.5M1432.6 536.1v41.5M1464.2 536.1v41.5" stroke="#4262dc" stroke-width="1.2"/>
<rect x="991.8" y="550.6" width="502.9" height="12.5" fill="#2b52c9"/>
<rect x="991.8" y="564.4" width="502.9" height="13.4" fill="#2b52c9"/>
<rect x="1495.5" y="534.1" width="255" height="45.5" fill="#15150f"/>
<rect x="1496" y="534.6" width="254" height="44.5" fill="#6f8ff6"/>
<rect x="1497.6" y="536.2" width="250.8" height="41.3" fill="#5068bf"/>
<path d="M1527.5 536.1v41.5M1559.1 536.1v41.5M1590.8 536.1v41.5M1622.4 536.1v41.5M1654 536.1v41.5M1685.7 536.1v41.5M1717.3 536.1v41.5" stroke="#4262dc" stroke-width="1.2"/>
<rect x="1497.3" y="550.6" width="251.4" height="12.5" fill="#2b52c9"/>
<rect x="1497.3" y="564.4" width="251.4" height="13.4" fill="#2b52c9"/>
<rect x="1749.5" y="534.1" width="253" height="45.5" fill="#15150f"/>
<rect x="1750" y="534.6" width="252" height="44.5" fill="#6f8ff6"/>
<rect x="1751.6" y="536.2" width="248.8" height="41.3" fill="#5068bf"/>
<path d="M1780.6 536.1v41.5M1812.2 536.1v41.5M1843.8 536.1v41.5M1875.5 536.1v41.5M1907.1 536.1v41.5M1938.7 536.1v41.5M1970.4 536.1v41.5" stroke="#4262dc" stroke-width="1.2"/>
<rect x="1751.3" y="550.6" width="249.4" height="12.5" fill="#2b52c9"/>
<rect x="1751.3" y="564.4" width="249.4" height="13.4" fill="#2b52c9"/>
<rect x="2001.5" y="534.1" width="255" height="45.5" fill="#15150f"/>
<rect x="2002" y="534.6" width="254" height="44.5" fill="#6f8ff6"/>
<rect x="2003.6" y="536.2" width="250.8" height="41.3" fill="#5068bf"/>
<path d="M2033.6 536.1v41.5M2065.3 536.1v41.5M2096.9 536.1v41.5M2128.5 536.1v41.5M2160.2 536.1v41.5M2191.8 536.1v41.5M2223.4 536.1v41.5" stroke="#4262dc" stroke-width="1.2"/>
<rect x="2003.3" y="550.6" width="251.4" height="12.5" fill="#2b52c9"/>
<rect x="2003.3" y="564.4" width="251.4" height="13.4" fill="#2b52c9"/>
<rect x="2255.5" y="534.1" width="253" height="45.5" fill="#15150f"/>
<rect x="2256" y="534.6" width="252" height="44.5" fill="#6f8ff6"/>
<rect x="2257.6" y="536.2" width="248.8" height="41.3" fill="#5068bf"/>
<path d="M2286.7 536.1v41.5M2318.3 536.1v41.5M2350 536.1v41.5M2381.6 536.1v41.5M2413.2 536.1v41.5M2444.9 536.1v41.5M2476.5 536.1v41.5" stroke="#4262dc" stroke-width="1.2"/>
<rect x="2257.3" y="550.6" width="249.4" height="12.5" fill="#2b52c9"/>
<rect x="2257.3" y="564.4" width="249.4" height="13.4" fill="#2b52c9"/>
<rect x="2507.5" y="534.1" width="255" height="45.5" fill="#15150f"/>
<rect x="2508" y="534.6" width="254" height="44.5" fill="#6f8ff6"/>
<rect x="2509.6" y="536.2" width="250.8" height="41.3" fill="#5068bf"/>
<path d="M2539.8 536.1v41.5M2571.4 536.1v41.5M2603 536.1v41.5M2634.7 536.1v41.5M2666.3 536.1v41.5M2697.9 536.1v41.5M2729.6 536.1v41.5" stroke="#4262dc" stroke-width="1.2"/>
<rect x="2509.3" y="550.6" width="251.4" height="12.5" fill="#2b52c9"/>
<rect x="2509.3" y="564.4" width="251.4" height="13.4" fill="#2b52c9"/>
<rect x="737" y="631.9" width="254" height="46" fill="#15150f"/>
<rect x="737.5" y="632.4" width="253" height="45" fill="#6f8ff6"/>
<rect x="739.1" y="634" width="249.8" height="41.8" fill="#5068bf"/>
<path d="M768.3 633.9v42M799.9 633.9v42M831.5 633.9v42M863.2 633.9v42M894.8 633.9v42M926.4 633.9v42M958.1 633.9v42" stroke="#4262dc" stroke-width="1.2"/>
<path d="M740.5 646.4h8M749.5 643.4h30M781.5 648.4h14M796.5 651.4h14M810.5 646.4h18M828.5 646.4h24M853.5 651.4h6M861.5 651.4h8M869.5 648.4h10M879.5 645.4h8M888.5 650.4h10M899.5 647.4h30M930.5 650.4h14M945.5 650.4h30M975.5 655.4h12" stroke="#2a48c6" stroke-width="3.4"/>
<rect x="737" y="680.8" width="254" height="46" fill="#15150f"/>
<rect x="737.5" y="681.3" width="253" height="45" fill="#6f8ff6"/>
<rect x="739.1" y="682.9" width="249.8" height="41.8" fill="#5068bf"/>
<path d="M768.3 682.8v42M799.9 682.8v42M831.5 682.8v42M863.2 682.8v42M894.8 682.8v42M926.4 682.8v42M958.1 682.8v42" stroke="#4262dc" stroke-width="1.2"/>
<path d="M740.5 695.3h8M749.5 692.3h30M781.5 697.3h14M796.5 700.3h14M810.5 695.3h18M828.5 695.3h24M853.5 700.3h6M861.5 700.3h8M869.5 697.3h10M879.5 694.3h8M888.5 699.3h10M899.5 696.3h30M930.5 699.3h14M945.5 699.3h30M975.5 704.3h12" stroke="#2a48c6" stroke-width="3.4"/>
<rect x="990" y="631.9" width="506.5" height="46" fill="#15150f"/>
<rect x="990.5" y="632.4" width="505.5" height="45" fill="#6f8ff6"/>
<rect x="992.1" y="634" width="502.3" height="41.8" fill="#5068bf"/>
<path d="M1021.3 633.9v42M1053 633.9v42M1084.6 633.9v42M1116.2 633.9v42M1147.9 633.9v42M1179.5 633.9v42M1211.1 633.9v42M1242.8 633.9v42M1274.4 633.9v42M1306 633.9v42M1337.7 633.9v42M1369.3 633.9v42M1401 633.9v42M1432.6 633.9v42M1464.2 633.9v42" stroke="#4262dc" stroke-width="1.2"/>
<path d="M993.5 643.4h18M1013.5 643.4h10M1023.5 646.4h24M1047.5 643.4h18M1066.5 648.4h14M1080.5 648.4h10M1090.5 645.4h10M1100.5 645.4h6M1108.5 642.4h10M1119.5 642.4h30M1149.5 642.4h24M1174.5 641.4h8M1183.5 641.4h14M1197.5 646.4h6M1205.5 646.4h24M1231.5 646.4h30M1262.5 646.4h30M1292.5 641.4h14M1307.5 646.4h24M1332.5 646.4h6M1338.5 641.4h18M1357.5 641.4h30M1388.5 641.4h24M1412.5 644.4h10M1422.5 644.4h6M1428.5 641.4h10M1438.5 646.4h14M1454.5 646.4h30M1486.5 646.4h6.5" stroke="#2a48c6" stroke-width="3.4"/>
<rect x="990" y="680.8" width="506.5" height="46" fill="#15150f"/>
<rect x="990.5" y="681.3" width="505.5" height="45" fill="#6f8ff6"/>
<rect x="992.1" y="682.9" width="502.3" height="41.8" fill="#5068bf"/>
<path d="M1021.3 682.8v42M1053 682.8v42M1084.6 682.8v42M1116.2 682.8v42M1147.9 682.8v42M1179.5 682.8v42M1211.1 682.8v42M1242.8 682.8v42M1274.4 682.8v42M1306 682.8v42M1337.7 682.8v42M1369.3 682.8v42M1401 682.8v42M1432.6 682.8v42M1464.2 682.8v42" stroke="#4262dc" stroke-width="1.2"/>
<path d="M993.5 692.3h18M1013.5 692.3h10M1023.5 695.3h24M1047.5 692.3h18M1066.5 697.3h14M1080.5 697.3h10M1090.5 694.3h10M1100.5 694.3h6M1108.5 691.3h10M1119.5 691.3h30M1149.5 691.3h24M1174.5 690.3h8M1183.5 690.3h14M1197.5 695.3h6M1205.5 695.3h24M1231.5 695.3h30M1262.5 695.3h30M1292.5 690.3h14M1307.5 695.3h24M1332.5 695.3h6M1338.5 690.3h18M1357.5 690.3h30M1388.5 690.3h24M1412.5 693.3h10M1422.5 693.3h6M1428.5 690.3h10M1438.5 695.3h14M1454.5 695.3h30M1486.5 695.3h6.5" stroke="#2a48c6" stroke-width="3.4"/>
<rect x="1495.5" y="631.9" width="255" height="46" fill="#15150f"/>
<rect x="1496" y="632.4" width="254" height="45" fill="#6f8ff6"/>
<rect x="1497.6" y="634" width="250.8" height="41.8" fill="#5068bf"/>
<path d="M1527.5 633.9v42M1559.1 633.9v42M1590.8 633.9v42M1622.4 633.9v42M1654 633.9v42M1685.7 633.9v42M1717.3 633.9v42" stroke="#4262dc" stroke-width="1.2"/>
<path d="M1499 651.4h8M1509 648.4h10M1521 653.4h24M1547 653.4h8M1556 653.4h18M1576 648.4h18M1596 651.4h18M1616 654.4h24M1640 654.4h24M1665 657.4h8M1673 652.4h6M1681 655.4h8M1691 658.4h14M1705 661.4h24M1731 661.4h8M1741 663.4h6" stroke="#2a48c6" stroke-width="3.4"/>
<rect x="1749.5" y="631.9" width="253" height="46" fill="#15150f"/>
<rect x="1750" y="632.4" width="252" height="45" fill="#6f8ff6"/>
<rect x="1751.6" y="634" width="248.8" height="41.8" fill="#5068bf"/>
<path d="M1780.6 633.9v42M1812.2 633.9v42M1843.8 633.9v42M1875.5 633.9v42M1907.1 633.9v42M1938.7 633.9v42M1970.4 633.9v42" stroke="#4262dc" stroke-width="1.2"/>
<path d="M1753 646.4h24M1779 651.4h24M1803 646.4h24M1829 641.4h24M1855 641.4h14M1870 646.4h30M1900 641.4h14M1914 644.4h8M1922 641.4h6M1928 641.4h24M1954 641.4h18M1972 641.4h24" stroke="#2a48c6" stroke-width="3.4"/>
<rect x="1749.5" y="680.8" width="253" height="46" fill="#15150f"/>
<rect x="1750" y="681.3" width="252" height="45" fill="#6f8ff6"/>
<rect x="1751.6" y="682.9" width="248.8" height="41.8" fill="#5068bf"/>
<path d="M1780.6 682.8v42M1812.2 682.8v42M1843.8 682.8v42M1875.5 682.8v42M1907.1 682.8v42M1938.7 682.8v42M1970.4 682.8v42" stroke="#4262dc" stroke-width="1.2"/>
<path d="M1753 695.3h24M1779 700.3h24M1803 695.3h24M1829 690.3h24M1855 690.3h14M1870 695.3h30M1900 690.3h14M1914 693.3h8M1922 690.3h6M1928 690.3h24M1954 690.3h18M1972 690.3h24" stroke="#2a48c6" stroke-width="3.4"/>
<rect x="2001.5" y="631.9" width="255" height="46" fill="#15150f"/>
<rect x="2002" y="632.4" width="254" height="45" fill="#6f8ff6"/>
<rect x="2003.6" y="634" width="250.8" height="41.8" fill="#5068bf"/>
<path d="M2033.6 633.9v42M2065.3 633.9v42M2096.9 633.9v42M2128.5 633.9v42M2160.2 633.9v42M2191.8 633.9v42M2223.4 633.9v42" stroke="#4262dc" stroke-width="1.2"/>
<path d="M2005 643.4h6M2013 641.4h30M2044 641.4h10M2056 641.4h8M2064 641.4h6M2070 646.4h6M2077 651.4h10M2087 648.4h30M2119 648.4h10M2130 645.4h18M2150 645.4h10M2160 645.4h14M2176 645.4h8M2184 648.4h30M2214 643.4h6M2222 641.4h30" stroke="#2a48c6" stroke-width="3.4"/>
<rect x="2001.5" y="680.8" width="255" height="46" fill="#15150f"/>
<rect x="2002" y="681.3" width="254" height="45" fill="#6f8ff6"/>
<rect x="2003.6" y="682.9" width="250.8" height="41.8" fill="#5068bf"/>
<path d="M2033.6 682.8v42M2065.3 682.8v42M2096.9 682.8v42M2128.5 682.8v42M2160.2 682.8v42M2191.8 682.8v42M2223.4 682.8v42" stroke="#4262dc" stroke-width="1.2"/>
<path d="M2005 692.3h6M2013 690.3h30M2044 690.3h10M2056 690.3h8M2064 690.3h6M2070 695.3h6M2077 700.3h10M2087 697.3h30M2119 697.3h10M2130 694.3h18M2150 694.3h10M2160 694.3h14M2176 694.3h8M2184 697.3h30M2214 692.3h6M2222 690.3h30" stroke="#2a48c6" stroke-width="3.4"/>
<rect x="2255.5" y="631.9" width="253" height="46" fill="#15150f"/>
<rect x="2256" y="632.4" width="252" height="45" fill="#6f8ff6"/>
<rect x="2257.6" y="634" width="248.8" height="41.8" fill="#5068bf"/>
<path d="M2286.7 633.9v42M2318.3 633.9v42M2350 633.9v42M2381.6 633.9v42M2413.2 633.9v42M2444.9 633.9v42M2476.5 633.9v42" stroke="#4262dc" stroke-width="1.2"/>
<path d="M2259 646.4h18M2279 641.4h30M2309 644.4h10M2321 644.4h10M2331 644.4h30M2361 641.4h30M2391 641.4h24M2416 641.4h8M2426 641.4h14M2441 646.4h30M2471 643.4h24M2497 646.4h8" stroke="#2a48c6" stroke-width="3.4"/>
<rect x="2255.5" y="680.8" width="253" height="46" fill="#15150f"/>
<rect x="2256" y="681.3" width="252" height="45" fill="#6f8ff6"/>
<rect x="2257.6" y="682.9" width="248.8" height="41.8" fill="#5068bf"/>
<path d="M2286.7 682.8v42M2318.3 682.8v42M2350 682.8v42M2381.6 682.8v42M2413.2 682.8v42M2444.9 682.8v42M2476.5 682.8v42" stroke="#4262dc" stroke-width="1.2"/>
<path d="M2259 695.3h18M2279 690.3h30M2309 693.3h10M2321 693.3h10M2331 693.3h30M2361 690.3h30M2391 690.3h24M2416 690.3h8M2426 690.3h14M2441 695.3h30M2471 692.3h24M2497 695.3h8" stroke="#2a48c6" stroke-width="3.4"/>
<rect x="2507.5" y="631.9" width="255" height="46" fill="#15150f"/>
<rect x="2508" y="632.4" width="254" height="45" fill="#6f8ff6"/>
<rect x="2509.6" y="634" width="250.8" height="41.8" fill="#5068bf"/>
<path d="M2539.8 633.9v42M2571.4 633.9v42M2603 633.9v42M2634.7 633.9v42M2666.3 633.9v42M2697.9 633.9v42M2729.6 633.9v42" stroke="#4262dc" stroke-width="1.2"/>
<path d="M2511 646.4h24M2535 649.4h18M2554 649.4h6M2560 649.4h8M2569 649.4h14M2585 649.4h24M2611 654.4h8M2620 659.4h10M2631 656.4h24M2655 656.4h10M2666 651.4h10M2677 651.4h10M2687 651.4h8M2695 646.4h6M2703 641.4h10M2715 646.4h8M2724 651.4h14M2740 654.4h10M2751 654.4h8" stroke="#2a48c6" stroke-width="3.4"/>
<rect x="2507.5" y="680.8" width="255" height="46" fill="#15150f"/>
<rect x="2508" y="681.3" width="254" height="45" fill="#6f8ff6"/>
<rect x="2509.6" y="682.9" width="250.8" height="41.8" fill="#5068bf"/>
<path d="M2539.8 682.8v42M2571.4 682.8v42M2603 682.8v42M2634.7 682.8v42M2666.3 682.8v42M2697.9 682.8v42M2729.6 682.8v42" stroke="#4262dc" stroke-width="1.2"/>
<path d="M2511 695.3h24M2535 698.3h18M2554 698.3h6M2560 698.3h8M2569 698.3h14M2585 698.3h24M2611 703.3h8M2620 708.3h10M2631 705.3h24M2655 705.3h10M2666 700.3h10M2677 700.3h10M2687 700.3h8M2695 695.3h6M2703 690.3h10M2715 695.3h8M2724 700.3h14M2740 703.3h10M2751 703.3h8" stroke="#2a48c6" stroke-width="3.4"/>
<rect x="609.5" y="729.8" width="102" height="45.5" fill="#15150f"/>
<rect x="610" y="730.3" width="101" height="44.5" fill="#44e2e2"/>
<rect x="611.6" y="731.9" width="97.8" height="41.3" fill="#2ea2a3"/>
<path d="M641.7 731.8v41.5M673.4 731.8v41.5M705 731.8v41.5" stroke="#25908f" stroke-width="1.2"/>
<rect x="611.3" y="735.3" width="98.4" height="12" fill="#00adb0"/>
<rect x="735.5" y="729.8" width="253" height="45.5" fill="#15150f"/>
<rect x="736" y="730.3" width="252" height="44.5" fill="#44e2e2"/>
<rect x="737.6" y="731.9" width="248.8" height="41.3" fill="#2ea2a3"/>
<path d="M768.3 731.8v41.5M799.9 731.8v41.5M831.5 731.8v41.5M863.2 731.8v41.5M894.8 731.8v41.5M926.4 731.8v41.5M958.1 731.8v41.5" stroke="#25908f" stroke-width="1.2"/>
<rect x="737.3" y="735.3" width="249.4" height="14" fill="#00adb0"/>
<rect x="987.5" y="729.8" width="507" height="45.5" fill="#15150f"/>
<rect x="988" y="730.3" width="506" height="44.5" fill="#44e2e2"/>
<rect x="989.6" y="731.9" width="502.8" height="41.3" fill="#2ea2a3"/>
<path d="M1021.3 731.8v41.5M1053 731.8v41.5M1084.6 731.8v41.5M1116.2 731.8v41.5M1147.9 731.8v41.5M1179.5 731.8v41.5M1211.1 731.8v41.5M1242.8 731.8v41.5M1274.4 731.8v41.5M1306 731.8v41.5M1337.7 731.8v41.5M1369.3 731.8v41.5M1401 731.8v41.5M1432.6 731.8v41.5M1464.2 731.8v41.5" stroke="#25908f" stroke-width="1.2"/>
<rect x="989.3" y="735.3" width="503.4" height="16" fill="#00adb0"/>
<rect x="1493.5" y="729.8" width="129" height="45.5" fill="#15150f"/>
<rect x="1494" y="730.3" width="128" height="44.5" fill="#44e2e2"/>
<rect x="1495.6" y="731.9" width="124.8" height="41.3" fill="#2ea2a3"/>
<path d="M1527.5 731.8v41.5M1559.1 731.8v41.5M1590.8 731.8v41.5" stroke="#25908f" stroke-width="1.2"/>
<rect x="1495.3" y="735.3" width="125.4" height="12" fill="#00adb0"/>
<rect x="1621.5" y="729.8" width="126" height="45.5" fill="#15150f"/>
<rect x="1622" y="730.3" width="125" height="44.5" fill="#44e2e2"/>
<rect x="1623.6" y="731.9" width="121.8" height="41.3" fill="#2ea2a3"/>
<path d="M1654 731.8v41.5M1685.7 731.8v41.5M1717.3 731.8v41.5" stroke="#25908f" stroke-width="1.2"/>
<rect x="1623.3" y="735.3" width="122.4" height="14" fill="#00adb0"/>
<rect x="1746.5" y="729.8" width="506" height="45.5" fill="#15150f"/>
<rect x="1747" y="730.3" width="505" height="44.5" fill="#44e2e2"/>
<rect x="1748.6" y="731.9" width="501.8" height="41.3" fill="#2ea2a3"/>
<path d="M1780.6 731.8v41.5M1812.2 731.8v41.5M1843.8 731.8v41.5M1875.5 731.8v41.5M1907.1 731.8v41.5M1938.7 731.8v41.5M1970.4 731.8v41.5M2002 731.8v41.5M2033.6 731.8v41.5M2065.3 731.8v41.5M2096.9 731.8v41.5M2128.5 731.8v41.5M2160.2 731.8v41.5M2191.8 731.8v41.5M2223.4 731.8v41.5" stroke="#25908f" stroke-width="1.2"/>
<rect x="1748.3" y="735.3" width="502.4" height="16" fill="#00adb0"/>
<rect x="2251.5" y="729.8" width="509" height="45.5" fill="#15150f"/>
<rect x="2252" y="730.3" width="508" height="44.5" fill="#44e2e2"/>
<rect x="2253.6" y="731.9" width="504.8" height="41.3" fill="#2ea2a3"/>
<path d="M2255.1 731.8v41.5M2286.7 731.8v41.5M2318.3 731.8v41.5M2350 731.8v41.5M2381.6 731.8v41.5M2413.2 731.8v41.5M2444.9 731.8v41.5M2476.5 731.8v41.5M2508.1 731.8v41.5M2539.8 731.8v41.5M2571.4 731.8v41.5M2603 731.8v41.5M2634.7 731.8v41.5M2666.3 731.8v41.5M2697.9 731.8v41.5M2729.6 731.8v41.5" stroke="#25908f" stroke-width="1.2"/>
<rect x="2253.3" y="735.3" width="505.4" height="12" fill="#00adb0"/>
<rect x="737.2" y="828.1" width="253.3" height="45" fill="#15150f"/>
<rect x="737.7" y="828.6" width="252.3" height="44" fill="#44e2e2"/>
<rect x="739.3" y="830.2" width="249.1" height="40.8" fill="#2ea2a3"/>
<path d="M768.3 830.1v41M799.9 830.1v41M831.5 830.1v41M863.2 830.1v41M894.8 830.1v41M926.4 830.1v41M958.1 830.1v41" stroke="#25908f" stroke-width="1.2"/>
<path d="M739.7 850.1l0 -3.5 2 -1.6 2 1 2 0.7 2 -1.7 2 0.1 2 0.8 2 -1.3 2 -1.6 2 3.3 2 -0.6 2 -0.6 2 -4.3 2 5.1 2 0.1 2 -2.1 2 2.3 2 -0.7 2 -2 2 1.4 2 -2.1 2 -0.9 2 1.9 2 2 2 0.1 2 -2 2 0.9 2 1.9 2 -0.1 2 -3.1 2 2.4 2 -0.2 2 -2.3 2 2 2 1 2 -1.4 2 -0.1 2 0.7 2 -2.9 2 2 2 -0.8 2 2.5 2 -0.7 2 -1.9 2 -1.6 2 4.5 2 -3.1 2 0.2 2 2.4 2 -1.2 2 -0.9 2 2.1 2 -0.1 2 -5.1 2 0.2 2 4.5 2 0.4 2 -2.1 2 2.1 2 0.2 2 -1 2 -0.7 2 -1.5 2 2.5 2 -2.2 2 3.2 2 0.4 2 -3 2 0.8 2 1.6 2 -1.3 2 -1.1 2 1.8 2 1.2 2 -1.3 2 0 2 -2.6 2 3.2 2 -5.3 2 6.2 2 -0.8 2 -0.7 2 0 2 0.5 2 -1.3 2 -1.4 2 3.3 2 -0.9 2 -0.9 2 -0.5 2 3.1 2 -2.8 2 0.1 2 2.2 2 -1.5 2 0.5 2 -1.7 2 2.5 2 -0.9 2 -2.1 2 1.6 2 -2.6 2 -1.8 2 5.3 2 1.2 2 -1.4 2 -1.7 2 1.6 2 -0.5 2 0.2 2 0 2 1.9 2 -2.4 2 -0.7 2 1.6 2 -0.1 2 -1.1 2 0.8 2 1.3 2 -1.6 2 -4.7 2 5 2 0.5 2 -1.1 1.3 0.3 0 9.9 -1.3 0.3 -2 -1 -2 0.5 -2 4.7 -2 -4.5 -2 -1.5 -2 1.2 -2 0.8 -2 -1 -2 -0.1 -2 1.6 -2 -0.7 -2 -2.3 -2 1.8 -2 0 -2 0.2 -2 -0.4 -2 1.5 -2 -1.6 -2 -1.3 -2 1.1 -2 5 -2 -1.7 -2 -2.5 -2 1.5 -2 -2 -2 -0.9 -2 2.4 -2 -1.6 -2 0.4 -2 -1.4 -2 2.1 -2 0.1 -2 -2.7 -2 2.9 -2 -0.5 -2 -0.9 -2 -0.9 -2 3.1 -2 -1.4 -2 -1.2 -2 0.5 -2 0 -2 -0.6 -2 -0.8 -2 5.9 -2 -5 -2 3 -2 -2.4 -2 0 -2 -1.2 -2 1.1 -2 1.7 -2 -1 -2 -1.3 -2 1.5 -2 0.7 -2 -2.9 -2 0.3 -2 3 -2 -2.1 -2 2.4 -2 -1.4 -2 -0.7 -2 -0.9 -2 0.2 -2 2 -2 -2 -2 0.4 -2 4.3 -2 0.2 -2 -4.9 -2 -0.1 -2 2 -2 -0.9 -2 -1.2 -2 2.3 -2 0.2 -2 -3 -2 4.2 -2 -1.5 -2 -1.8 -2 -0.6 -2 2.4 -2 -0.8 -2 1.9 -2 -2.7 -2 0.6 -2 -0.1 -2 -1.4 -2 0.9 -2 1.9 -2 -2.2 -2 -0.1 -2 2.3 -2 -2.9 -2 -0.1 -2 1.8 -2 0.9 -2 -1.9 -2 0.1 -2 1.9 -2 1.8 -2 -0.9 -2 -2 -2 1.3 -2 -1.9 -2 -0.7 -2 2.2 -2 -2 -2 0.1 -2 4.8 -2 -4.1 -2 -0.6 -2 -0.5 -2 3.1 -2 -1.5 -2 -1.2 -2 0.8 -2 0.1 -2 -1.6 -2 0.6 -2 1 -2 -1.5z" fill="#0b2224"/>
<rect x="748.7" y="856.6" width="58.6" height="12" fill="#45cfd0"/>
<path d="M750.7 866.6L758.2 859.6V866.6z" fill="#0b2224"/>
<text x="760.2" y="866.6" font-size="10.5" fill="#0b2224">12.46 dB</text>
<rect x="1749.5" y="828.1" width="506" height="45" fill="#15150f"/>
<rect x="1750" y="828.6" width="505" height="44" fill="#44e2e2"/>
<rect x="1751.6" y="830.2" width="501.8" height="40.8" fill="#2ea2a3"/>
<path d="M1780.6 830.1v41M1812.2 830.1v41M1843.8 830.1v41M1875.5 830.1v41M1907.1 830.1v41M1938.7 830.1v41M1970.4 830.1v41M2002 830.1v41M2033.6 830.1v41M2065.3 830.1v41M2096.9 830.1v41M2128.5 830.1v41M2160.2 830.1v41M2191.8 830.1v41M2223.4 830.1v41" stroke="#25908f" stroke-width="1.2"/>
<path d="M1752 850.1l0 -4.4 2 -0.2 2 -0.3 2 0.9 2 -1.3 2 -0.2 2 2 2 -0.2 2 -3.5 2 2.8 2 -3 2 1.9 2 -0.4 2 2.3 2 -2 2 -0.8 2 2.6 2 -0.5 2 0.1 2 -1.6 2 2.1 2 0.1 2 -3.2 2 3 2 -0.6 2 -0.7 2 -0.9 2 2.6 2 -0.8 2 -1.7 2 0.8 2 1.3 2 -0.5 2 -1.2 2 0.9 2 -0.2 2 -0.3 2 0.3 2 0.2 2 -1.6 2 1 2 0.8 2 0.6 2 -1.1 2 -0.4 2 1.2 2 -2 2 0.2 2 1.9 2 -1.7 2 0.9 2 -0.6 2 1.4 2 -5.5 2 3.7 2 1.5 2 -4.3 2 2.7 2 0.9 2 0.2 2 -1 2 -3.4 2 5.1 2 -1 2 -4.6 2 4.4 2 0.5 2 -0.3 2 -3.9 2 5.5 2 -1.8 2 -0.9 2 1 2 1.5 2 -2 2 1.6 2 -0.2 2 0.5 2 -5.9 2 5.3 2 1.1 2 -1.5 2 0.5 2 0.3 2 -0.1 2 -2.4 2 2.2 2 -0.6 2 -0.5 2 1 2 0.6 2 -0.1 2 -5.6 2 5.5 2 -0.2 2 -1.3 2 0 2 2.2 2 -5.4 2 2.7 2 2.7 2 -1.7 2 0 2 0.2 2 0.3 2 -1.6 2 1.6 2 -3.2 2 3.3 2 -1.7 2 1 2 -1.9 2 0.9 2 0.4 2 1.5 2 -3.4 2 2.4 2 1.3 2 -0.6 2 -0.8 2 -0.1 2 -2.2 2 3.3 2 -0.1 2 -0.3 2 1.2 2 -1.9 2 -0.3 2 0.8 2 -0.3 2 0.4 2 -0.4 2 2 2 -1.7 2 -0.3 2 1.7 2 -1.4 2 -0.7 2 0.1 2 -1.6 2 1.6 2 0.4 2 1.4 2 -0.1 2 -2.1 2 0.5 2 -1.9 2 1.1 2 -0.8 2 3.5 2 -2 2 -1.7 2 2.5 2 0.2 2 -1.2 2 -1.3 2 2.4 2 0.9 2 -1.1 2 0.3 2 1.4 2 -2.7 2 0.2 2 2.4 2 -0.6 2 -1.1 2 -0.6 2 0.9 2 -1.6 2 -0.4 2 3.3 2 -0.9 2 -0.9 2 0.3 2 -2.4 2 1.1 2 0.4 2 1.2 2 -0.1 2 -0.3 2 -0.9 2 1.1 2 -1.1 2 0.3 2 1.1 2 -1.1 2 -0.9 2 1.6 2 0.9 2 -2.9 2 0 2 3.2 2 -1.5 2 -0.6 2 0.6 2 1.9 2 -6.3 2 4.2 2 2 2 -2.5 2 1 2 -1 2 1.8 2 -1.2 2 -0.4 2 1.2 2 -1 2 0.5 2 -3.5 2 5.2 2 -2.3 2 0.9 2 -2.9 2 3.4 2 -1.9 2 1 2 0.1 2 -1.1 2 1.5 2 1.5 2 -1.9 2 -1.9 2 2.6 2 1 2 -3.4 2 1.6 2 1 2 -0.9 2 -1 2 1 2 1.5 2 -1.4 2 -0.9 2 2.4 2 -5.1 2 2.6 2 0.7 2 1.9 2 -6.2 2 3.3 2 2.6 2 -1.8 2 0 2 1.6 2 -0.6 2 -0.5 2 -4 2 4.9 2 -0.9 2 -0.2 2 0.8 0 8.6 -2 0.7 -2 -0.2 -2 -0.9 -2 4.7 -2 -3.8 -2 -0.5 -2 -0.5 -2 1.6 -2 0 -2 -1.7 -2 2.4 -2 3.1 -2 -5.9 -2 1.8 -2 0.7 -2 2.4 -2 -4.9 -2 2.3 -2 -0.9 -2 -1.3 -2 1.4 -2 0.9 -2 -0.9 -2 -0.8 -2 0.9 -2 1.5 -2 -3.2 -2 0.9 -2 2.4 -2 -1.8 -2 -1.8 -2 1.4 -2 1.4 -2 -1.1 -2 0.1 -2 1 -2 -1.8 -2 3.2 -2 -2.7 -2 0.9 -2 -2.2 -2 4.9 -2 -3.3 -2 0.5 -2 -1 -2 1.1 -2 -0.4 -2 -1.2 -2 1.7 -2 -0.9 -2 1 -2 -2.3 -2 1.9 -2 4 -2 -6 -2 1.8 -2 0.6 -2 -0.6 -2 -1.5 -2 3 -2 0 -2 -2.7 -2 0.8 -2 1.5 -2 -0.9 -2 -1 -2 1 -2 0.3 -2 -1 -2 1.1 -2 -0.8 -2 -0.3 -2 -0.1 -2 1.1 -2 0.3 -2 1.1 -2 -2.3 -2 0.2 -2 -0.9 -2 -0.9 -2 3.1 -2 -0.4 -2 -1.5 -2 0.8 -2 -0.5 -2 -1.1 -2 -0.6 -2 2.3 -2 0.2 -2 -2.6 -2 1.3 -2 0.3 -2 -1.1 -2 0.8 -2 2.3 -2 -1.2 -2 -1.1 -2 0.2 -2 2.4 -2 -1.7 -2 -1.9 -2 3.4 -2 -0.7 -2 1.1 -2 -1.8 -2 0.5 -2 -2 -2 -0.1 -2 1.4 -2 0.4 -2 1.6 -2 -1.5 -2 0.1 -2 -0.6 -2 -1.4 -2 1.6 -2 -0.3 -2 -1.6 -2 1.9 -2 -0.4 -2 0.4 -2 -0.3 -2 0.8 -2 -0.3 -2 -1.8 -2 1.1 -2 -0.3 -2 -0.1 -2 3.2 -2 -2.1 -2 -0.1 -2 -0.8 -2 -0.6 -2 1.2 -2 2.3 -2 -3.2 -2 1.4 -2 0.4 -2 0.9 -2 -1.8 -2 0.9 -2 -1.6 -2 3.1 -2 -3.1 -2 1.5 -2 -1.6 -2 0.3 -2 0.2 -2 0 -2 -1.6 -2 2.6 -2 2.6 -2 -5.1 -2 2 -2 0 -2 -1.3 -2 -0.1 -2 5.2 -2 -5.3 -2 -0.1 -2 0.5 -2 0.9 -2 -0.5 -2 -0.5 -2 2.1 -2 -2.2 -2 -0.1 -2 0.3 -2 0.5 -2 -1.4 -2 1.1 -2 5 -2 -5.6 -2 0.5 -2 -0.2 -2 1.5 -2 -1.9 -2 1.4 -2 0.9 -2 -0.9 -2 -1.7 -2 5.3 -2 -3.7 -2 -0.3 -2 0.5 -2 4.2 -2 -4.4 -2 -0.9 -2 4.9 -2 -3.2 -2 -0.9 -2 0.2 -2 0.9 -2 2.6 -2 -4.1 -2 1.4 -2 3.6 -2 -5.2 -2 1.3 -2 -0.5 -2 0.9 -2 -1.6 -2 1.8 -2 0.2 -2 -1.9 -2 1.2 -2 -0.4 -2 -1.1 -2 0.6 -2 0.8 -2 0.9 -2 -1.5 -2 0.2 -2 0.3 -2 -0.3 -2 -0.2 -2 0.9 -2 -1.1 -2 -0.5 -2 1.2 -2 0.7 -2 -1.6 -2 -0.7 -2 2.5 -2 -0.9 -2 -0.7 -2 -0.6 -2 2.8 -2 -3.1 -2 0.1 -2 2 -2 -1.5 -2 0.1 -2 -0.4 -2 2.5 -2 -0.8 -2 -1.9 -2 2.1 -2 -0.4 -2 1.8 -2 -2.9 -2 2.7 -2 -3.3 -2 -0.2 -2 1.9 -2 -0.2 -2 -1.2 -2 0.8 -2 -0.3 -2 -0.2z" fill="#0b2224"/>
<rect x="1761" y="856.6" width="58.6" height="12" fill="#45cfd0"/>
<path d="M1763 866.6L1770.5 859.6V866.6z" fill="#0b2224"/>
<text x="1772.5" y="866.6" font-size="10.5" fill="#0b2224">-0.37 dB</text>
<rect x="2254.5" y="828.1" width="507" height="45" fill="#15150f"/>
<rect x="2255" y="828.6" width="506" height="44" fill="#44e2e2"/>
<rect x="2256.6" y="830.2" width="502.8" height="40.8" fill="#2ea2a3"/>
<path d="M2286.7 830.1v41M2318.3 830.1v41M2350 830.1v41M2381.6 830.1v41M2413.2 830.1v41M2444.9 830.1v41M2476.5 830.1v41M2508.1 830.1v41M2539.8 830.1v41M2571.4 830.1v41M2603 830.1v41M2634.7 830.1v41M2666.3 830.1v41M2697.9 830.1v41M2729.6 830.1v41" stroke="#25908f" stroke-width="1.2"/>
<path d="M2257 850.1l0 -7.2 2 2.5 2 1.3 2 -2.1 2 -0.3 2 2.7 2 -2.6 2 -0.3 2 1.4 2 1.5 2 -3.3 2 1.1 2 1.3 2 -1.1 2 0.4 2 -0.2 2 0.9 2 -1.3 2 -3.5 2 4.3 2 -4.2 2 3.2 2 1.9 2 -0.1 2 -1.4 2 0.7 2 1.1 2 -2.5 2 -0.1 2 1.1 2 0.6 2 -2.7 2 2.8 2 1.1 2 -5.5 2 3 2 1.2 2 0.8 2 -2.9 2 2.1 2 -2.7 2 2.4 2 -0.5 2 -2.5 2 3.8 2 -1 2 -3.8 2 5.4 2 -2.8 2 0.5 2 1.1 2 0.9 2 -1.6 2 0.8 2 0.8 2 -1.5 2 0.6 2 0.1 2 1.2 2 -1.5 2 0.4 2 0.2 2 -2.1 2 -0.1 2 1.9 2 0.9 2 -1.4 2 -0.2 2 1.2 2 -4.9 2 -0.8 2 5.2 2 0.3 2 -2.8 2 3 2 0.8 2 -2.1 2 -0.1 2 1.4 2 -0.6 2 -1.3 2 0.3 2 2 2 -1.2 2 -0.2 2 1.7 2 -1.2 2 -2.3 2 2.6 2 0.5 2 -2.7 2 1.5 2 1.2 2 -1.4 2 0.1 2 -0.6 2 2.5 2 -1.4 2 -2.3 2 -0.7 2 -0.6 2 1.5 2 1.2 2 1.7 2 -0.4 2 -0.9 2 0.5 2 0 2 -0.7 2 -0.1 2 2 2 -2.5 2 0.4 2 0.8 2 0.4 2 -1 2 1.5 2 0.8 2 -2.1 2 0.4 2 1.5 2 -2.4 2 -0.8 2 2.6 2 0.6 2 -3.4 2 0.2 2 1.7 2 0.7 2 -2.5 2 2.8 2 -0.3 2 -2.3 2 0.2 2 2.5 2 -4.5 2 1.6 2 2.5 2 -3.2 2 1.9 2 0 2 2.2 2 -0.9 2 -0.5 2 0.3 2 0.4 2 -1.5 2 0.2 2 2.1 2 -1.5 2 -2.1 2 2.6 2 -0.3 2 -0.4 2 0.5 2 0.5 2 -1.8 2 0.1 2 0.3 2 1.5 2 -1.7 2 0.5 2 -2.5 2 -1.1 2 2.5 2 1.9 2 1 2 -2.5 2 -0.6 2 2.8 2 -0.6 2 -1.2 2 1.4 2 0.5 2 -6.1 2 5.1 2 0.7 2 -0.3 2 -1.7 2 0.6 2 -2.6 2 3 2 -0.3 2 1.1 2 0.1 2 -6 2 6.5 2 -0.2 2 -5.9 2 0.5 2 1.9 2 3.1 2 -5.8 2 4.5 2 1.5 2 -1 2 0.7 2 0.6 2 -2.3 2 -0.7 2 1.2 2 1.3 2 -2.2 2 1.8 2 0 2 -0.2 2 -1.5 2 1.4 2 0.7 2 -2.3 2 0.2 2 1.9 2 -0.9 2 -0.6 2 0.8 2 0.4 2 -2.1 2 1.2 2 1.8 2 -2.6 2 0.6 2 1.5 2 -0.1 2 -0.7 2 0.2 2 0 2 -1 2 0.5 2 0.3 2 0.1 2 -0.6 2 0.1 2 2.1 2 -2.8 2 -0.1 2 1.6 2 -0.2 2 -0.6 2 -0.3 2 2.3 2 -1.4 2 -5.1 2 6 2 -0.3 2 -2.2 2 1 2 0.9 2 0.4 2 -2.1 2 1.5 2 0.8 1 -2 0 11.4 -1 -1.9 -2 0.7 -2 1.4 -2 -2 -2 0.4 -2 0.8 -2 0.9 -2 -2.1 -2 -0.3 -2 5.7 -2 -4.8 -2 -1.4 -2 2.2 -2 -0.3 -2 -0.6 -2 -0.2 -2 1.6 -2 -0.1 -2 -2.7 -2 2 -2 0.1 -2 -0.6 -2 0.1 -2 0.3 -2 0.5 -2 -0.9 -2 0 -2 0.2 -2 -0.7 -2 -0.1 -2 1.4 -2 0.6 -2 -2.5 -2 1.8 -2 1.1 -2 -2 -2 0.4 -2 0.7 -2 -0.5 -2 -0.9 -2 1.8 -2 0.2 -2 -2.2 -2 0.6 -2 1.4 -2 -1.4 -2 -0.2 -2 0 -2 1.7 -2 -2.1 -2 1.2 -2 1.1 -2 -0.6 -2 -2.2 -2 0.6 -2 0.7 -2 -0.9 -2 1.5 -2 4.2 -2 -5.5 -2 3 -2 1.8 -2 0.5 -2 -5.6 -2 -0.2 -2 6.1 -2 -5.7 -2 0.1 -2 1 -2 -0.3 -2 2.8 -2 -2.5 -2 0.6 -2 -1.6 -2 -0.3 -2 0.7 -2 4.9 -2 -5.8 -2 0.5 -2 1.3 -2 -1.2 -2 -0.5 -2 2.7 -2 -0.6 -2 -2.4 -2 0.9 -2 1.8 -2 2.4 -2 -1.1 -2 -2.4 -2 0.5 -2 -1.6 -2 1.4 -2 0.3 -2 0 -2 -1.7 -2 0.5 -2 0.5 -2 -0.4 -2 -0.3 -2 2.5 -2 -2 -2 -1.4 -2 2 -2 0.2 -2 -1.5 -2 0.4 -2 0.3 -2 -0.5 -2 -0.9 -2 2.1 -2 0 -2 1.8 -2 -3.1 -2 2.4 -2 1.6 -2 -4.3 -2 2.4 -2 0.2 -2 -2.2 -2 -0.3 -2 2.7 -2 -2.3 -2 0.6 -2 1.6 -2 0.2 -2 -3.3 -2 0.6 -2 2.5 -2 -0.8 -2 -2.3 -2 1.5 -2 0.4 -2 -2 -2 0.8 -2 1.4 -2 -1 -2 0.4 -2 0.7 -2 0.4 -2 -2.4 -2 1.9 -2 -0.1 -2 -0.7 -2 0 -2 0.5 -2 -0.9 -2 -0.4 -2 1.6 -2 1.1 -2 1.4 -2 -0.6 -2 -0.7 -2 -2.2 -2 -1.3 -2 2.4 -2 -0.6 -2 0 -2 -1.4 -2 1.1 -2 1.5 -2 -2.6 -2 0.5 -2 2.5 -2 -2.2 -2 -1.1 -2 1.6 -2 -0.2 -2 -1.1 -2 1.9 -2 0.3 -2 -1.2 -2 -0.6 -2 1.3 -2 -0.1 -2 -2 -2 0.7 -2 2.9 -2 -2.6 -2 0.3 -2 4.9 -2 -0.7 -2 -4.6 -2 1.1 -2 -0.2 -2 -1.3 -2 0.8 -2 1.8 -2 -0.1 -2 -2 -2 0.2 -2 0.4 -2 -1.4 -2 1.1 -2 0.1 -2 0.5 -2 -1.4 -2 0.8 -2 0.8 -2 -1.5 -2 0.9 -2 1 -2 0.5 -2 -2.7 -2 5.2 -2 -3.6 -2 -1 -2 3.6 -2 -2.4 -2 -0.5 -2 2.3 -2 -2.6 -2 2 -2 -2.8 -2 0.8 -2 1.1 -2 2.8 -2 -5.3 -2 1.1 -2 2.6 -2 -2.6 -2 0.6 -2 1 -2 -0.1 -2 -2.4 -2 1.1 -2 0.7 -2 -1.3 -2 -0.1 -2 1.8 -2 3 -2 -4 -2 4.1 -2 -3.3 -2 -1.3 -2 0.9 -2 -0.2 -2 0.4 -2 -1 -2 1.3 -2 1 -2 -3.1 -2 1.4 -2 1.3 -2 -0.3 -2 -2.5 -2 2.5 -2 -0.3 -2 -2 -2 1.2 -2 2.3z" fill="#0b2224"/>
<rect x="2266" y="856.6" width="12" height="12" fill="#45cfd0"/>
<path d="M2268 866.6L2275.5 859.6V866.6z" fill="#0b2224"/>
<rect x="610.5" y="877" width="101.4" height="45" fill="#15150f"/>
<rect x="611" y="877.5" width="100.4" height="44" fill="#44e2e2"/>
<rect x="612.6" y="879.1" width="97.2" height="40.8" fill="#2ea2a3"/>
<path d="M641.7 879v41M673.4 879v41M705 879v41" stroke="#25908f" stroke-width="1.2"/>
<path d="M613 899l0 -4.6 2 -0.1 2 -1.7 2 2.2 2 -1.2 2 -0.8 2 0.7 2 -1.8 2 2.5 2 0.3 2 -0.2 2 -3.5 2 3.1 2 1.3 2 -1 2 0.3 2 -0.9 2 0.7 2 -0.9 2 0.3 2 0.2 2 0.2 2 -0.9 2 -0.1 2 1.3 2 -0.4 2 -1.3 2 1.2 2 1 2 -5.7 2 4.7 2 -2.7 2 3 2 -2.2 2 2.6 2 0.3 2 -2.9 2 0.1 2 2.2 2 0 2 -2.6 2 2.6 2 -3.1 2 1.6 2 0.7 2 1.8 2 -1.8 2 -2 1.4 2 0 9.9 -1.4 1.9 -2 -1.9 -2 -1.8 -2 1.8 -2 0.7 -2 1.6 -2 -2.9 -2 2.5 -2 -2.4 -2 0 -2 2.1 -2 0 -2 -2.7 -2 0.3 -2 2.5 -2 -2.1 -2 2.8 -2 -2.6 -2 4.5 -2 -5.4 -2 1 -2 1.2 -2 -1.2 -2 -0.3 -2 1.3 -2 -0.1 -2 -0.8 -2 0.2 -2 0.2 -2 0.3 -2 -0.8 -2 0.7 -2 -0.9 -2 0.3 -2 -0.9 -2 1.2 -2 3 -2 -3.3 -2 -0.1 -2 0.2 -2 2.4 -2 -1.7 -2 0.7 -2 -0.7 -2 -1.1 -2 2.1 -2 -1.6 -2 -0.1z" fill="#0b2224"/>
<rect x="622" y="905.5" width="52.9" height="12" fill="#45cfd0"/>
<path d="M624 915.5L631.5 908.5V915.5z" fill="#0b2224"/>
<text x="633.5" y="915.5" font-size="10.5" fill="#0b2224">7.97 dB</text>
<rect x="737.2" y="877" width="253.3" height="45" fill="#15150f"/>
<rect x="737.7" y="877.5" width="252.3" height="44" fill="#44e2e2"/>
<rect x="739.3" y="879.1" width="249.1" height="40.8" fill="#2ea2a3"/>
<path d="M768.3 879v41M799.9 879v41M831.5 879v41M863.2 879v41M894.8 879v41M926.4 879v41M958.1 879v41" stroke="#25908f" stroke-width="1.2"/>
<path d="M739.7 899l0 -5.5 2 0.7 2 -0.6 2 2.1 2 -2.7 2 -3.3 2 5.1 2 -0.3 2 -2.3 2 3.1 2 -0.8 2 -2.2 2 1.6 2 0.4 2 0.9 2 -1.1 2 -3.5 2 4 2 -2.3 2 -2.5 2 4.5 2 -0.4 2 -1.5 2 1.4 2 -2.2 2 1.8 2 0.1 2 2 2 -2.2 2 -1.5 2 1.5 2 1.2 2 -0.5 2 -0.8 2 1.9 2 -1.8 2 -0.1 2 1.3 2 -0.1 2 -2 2 0.2 2 -1 2 -1.2 2 1.7 2 -1.2 2 4.6 2 -0.8 2 -4.8 2 6 2 -1.7 2 -0.1 2 1.5 2 -0.2 2 -3 2 -2.4 2 4.3 2 0.8 2 -1.8 2 1.8 2 0.4 2 -3.1 2 1.2 2 1.1 2 -4.3 2 2 2 2.1 2 1.2 2 -2.3 2 0.7 2 1.9 2 -2.1 2 -0.4 2 0.8 2 1.6 2 -1.3 2 0 2 0.6 2 -4.8 2 2.9 2 1.8 2 -0.2 2 -2.4 2 1.9 2 0.5 2 -4.5 2 4.1 2 0.9 2 -1.1 2 -0.2 2 0.7 2 1 2 -2.3 2 -0.2 2 -1.9 2 2.7 2 0.1 2 -1 2 1.5 2 -0.4 2 -1 2 2 2 0.4 2 -1.6 2 1 2 0.5 2 -1.8 2 -0.1 2 1.2 2 -0.7 2 0 2 -0.1 2 1.5 2 -1.2 2 -0.4 2 0.1 2 0.1 2 0 2 -0.6 2 1.8 2 -2.4 2 -0.6 2 -0.9 2 3.4 2 -2.3 1.3 1.9 0 9.3 -1.3 1.8 -2 -2.2 -2 3.3 -2 -0.9 -2 -0.6 -2 -2.3 -2 1.7 -2 -0.6 -2 0 -2 0.1 -2 0.1 -2 -0.4 -2 -1.1 -2 1.5 -2 -0.1 -2 0 -2 -0.6 -2 1.2 -2 -0.1 -2 -1.7 -2 0.5 -2 0.9 -2 -1.5 -2 0.4 -2 1.9 -2 -1 -2 -0.4 -2 1.4 -2 -0.9 -2 0.1 -2 2.5 -2 -1.8 -2 -0.2 -2 -2.2 -2 1 -2 0.7 -2 -0.2 -2 -1.1 -2 0.8 -2 3.9 -2 -4.3 -2 0.5 -2 1.8 -2 -2.2 -2 -0.2 -2 1.7 -2 2.7 -2 -4.5 -2 0.5 -2 0 -2 -1.2 -2 1.5 -2 0.7 -2 -0.4 -2 -2 -2 1.8 -2 0.6 -2 -2.2 -2 1.1 -2 2 -2 1.9 -2 -4.1 -2 1 -2 1.1 -2 -2.9 -2 0.4 -2 1.7 -2 -1.8 -2 0.7 -2 4.1 -2 -2.3 -2 -2.8 -2 -0.2 -2 1.4 -2 -0.1 -2 -1.7 -2 5.7 -2 -4.6 -2 -0.7 -2 4.3 -2 -1.2 -2 1.6 -2 -1.1 -2 -0.9 -2 0.2 -2 -1.9 -2 -0.1 -2 1.2 -2 -0.1 -2 -1.7 -2 1.8 -2 -0.8 -2 -0.5 -2 1.1 -2 1.5 -2 -1.4 -2 -2.1 -2 1.9 -2 0.1 -2 1.7 -2 -2.1 -2 1.4 -2 -1.4 -2 -0.4 -2 4.3 -2 -2.4 -2 -2.2 -2 3.8 -2 -3.4 -2 -1 -2 0.8 -2 0.4 -2 1.5 -2 -2.1 -2 -0.8 -2 3 -2 -2.1 -2 -0.3 -2 4.8 -2 -3.2 -2 -2.5 -2 2 -2 -0.5 -2 0.7z" fill="#0b2224"/>
<rect x="748.7" y="905.5" width="58.6" height="12" fill="#45cfd0"/>
<path d="M750.7 915.5L758.2 908.5V915.5z" fill="#0b2224"/>
<text x="760.2" y="915.5" font-size="10.5" fill="#0b2224">12.46 dB</text>
<rect x="1749.5" y="877" width="506" height="45" fill="#15150f"/>
<rect x="1750" y="877.5" width="505" height="44" fill="#44e2e2"/>
<rect x="1751.6" y="879.1" width="501.8" height="40.8" fill="#2ea2a3"/>
<path d="M1780.6 879v41M1812.2 879v41M1843.8 879v41M1875.5 879v41M1907.1 879v41M1938.7 879v41M1970.4 879v41M2002 879v41M2033.6 879v41M2065.3 879v41M2096.9 879v41M2128.5 879v41M2160.2 879v41M2191.8 879v41M2223.4 879v41" stroke="#25908f" stroke-width="1.2"/>
<path d="M1752 899l0 -3.5 2 -2 2 1.4 2 0.3 2 -1.2 2 -1.1 2 2.6 2 -0.2 2 -2.2 2 1.5 2 0.1 2 -0.9 2 0.8 2 0.5 2 -4.5 2 3.8 2 0.4 2 0.1 2 -1.3 2 0.5 2 1.5 2 -1.9 2 -4.7 2 5.7 2 -0.3 2 -0.5 2 -0.6 2 1.6 2 -0.7 2 -1.8 2 1.6 2 0.6 2 -0.7 2 0.2 2 -2.7 2 2.7 2 -0.3 2 0 2 1.1 2 -1.4 2 -3.7 2 4.6 2 -0.7 2 -0.8 2 1.1 2 0.1 2 -1.2 2 1.3 2 1.3 2 -2 2 0.2 2 0.3 2 0.1 2 -4.7 2 3.4 2 1.7 2 -4.3 2 1.6 2 2.4 2 0.9 2 -1.2 2 0.2 2 1 2 -2.3 2 -0.9 2 3.4 2 -1.1 2 0.2 2 -1.9 2 1.7 2 -0.9 2 -1.6 2 3.2 2 -0.8 2 -0.2 2 -0.8 2 2.5 2 -1.3 2 -2.6 2 2.5 2 0.5 2 -1.8 2 0 2 1.5 2 -0.1 2 -1.5 2 2.1 2 -0.4 2 -1.5 2 -0.4 2 2.9 2 -2.2 2 -0.8 2 1.6 2 -0.3 2 -0.9 2 0.4 2 1.1 2 -0.3 2 -1.4 2 1 2 0.3 2 -2.2 2 2 2 1.1 2 -2.3 2 0.4 2 1.3 2 0.5 2 -0.7 2 -4.4 2 5.4 2 -2.1 2 -1.2 2 2.8 2 -1 2 -4.9 2 4.6 2 2 2 -2.1 2 0.7 2 0.9 2 0 2 -2 2 0 2 2.1 2 -1.2 2 -0.7 2 2.1 2 -0.3 2 -3.1 2 1.3 2 1.2 2 -0.3 2 -1.2 2 1.6 2 0 2 -2.4 2 1.9 2 0.2 2 0.3 2 -1.6 2 1 2 -0.4 2 -1.3 2 1.2 2 1.2 2 -0.1 2 -0.4 2 1 2 -4.2 2 3.2 2 -0.4 2 -2.3 2 0.9 2 1.6 2 0.7 2 -1 2 -4.6 2 5.4 2 1.1 2 -2.5 2 -0.5 2 2.7 2 -0.8 2 -1.6 2 0.6 2 1.5 2 -1.5 2 0.1 2 1.1 2 0.6 2 -6 2 4 2 1.9 2 -0.4 2 -2.2 2 -1.1 2 3.1 2 -1.5 2 1.7 2 -0.1 2 -4.8 2 4.6 2 1.3 2 -2.2 2 0.6 2 -0.1 2 1.5 2 -3.1 2 1.1 2 1 2 -0.5 2 -2.3 2 3.2 2 0.3 2 -2.2 2 -0.1 2 2.8 2 -1.8 2 -0.5 2 0.3 2 2.1 2 -2.8 2 0.1 2 1.2 2 -0.1 2 -1.7 2 -1.8 2 0.6 2 0.8 2 1.6 2 0.7 2 -0.5 2 0 2 -0.4 2 1.4 2 -2.3 2 0.9 2 0.5 2 -0.3 2 -1.3 2 0.7 2 0.9 2 0.1 2 -1.5 2 2.3 2 -1 2 -0.3 2 1.4 2 -1 2 -1.1 2 -0.8 2 3.2 2 -1.7 2 -0.8 2 2 2 -3.7 2 1.6 2 1.7 2 -0.4 2 0.3 2 -0.9 2 1.8 2 -0.8 2 -5.3 2 0.5 2 5.2 2 -4.9 2 -0.9 2 4.2 0 10.5 -2 4 -2 -0.9 -2 -4.7 -2 5 -2 0.5 -2 -5 -2 -0.8 -2 1.7 -2 -0.9 -2 0.3 -2 -0.4 -2 1.6 -2 1.5 -2 -3.5 -2 1.9 -2 -0.8 -2 -1.7 -2 3 -2 -0.8 -2 -1 -2 -1 -2 1.4 -2 -0.3 -2 -1 -2 2.2 -2 -1.4 -2 0.1 -2 0.9 -2 0.7 -2 -1.2 -2 -0.2 -2 0.4 -2 0.9 -2 -2.2 -2 1.4 -2 -0.3 -2 0 -2 -0.5 -2 0.7 -2 1.5 -2 0.8 -2 0.6 -2 -1.7 -2 -1.6 -2 -0.1 -2 1.1 -2 0.1 -2 -2.6 -2 2 -2 0.3 -2 -0.5 -2 -1.7 -2 2.6 -2 -0.1 -2 -2.1 -2 0.3 -2 3 -2 -2.2 -2 -0.5 -2 1 -2 1 -2 -3 -2 1.4 -2 -0.1 -2 0.5 -2 -2.1 -2 1.2 -2 4.4 -2 -4.5 -2 -0.1 -2 1.6 -2 -1.5 -2 3 -2 -1 -2 -2.1 -2 -0.4 -2 1.8 -2 3.8 -2 -5.7 -2 0.5 -2 1 -2 0.1 -2 -1.4 -2 1.4 -2 0.5 -2 -1.5 -2 -0.8 -2 2.6 -2 -0.4 -2 -2.4 -2 1 -2 5.1 -2 -4.4 -2 -1 -2 0.7 -2 1.5 -2 0.9 -2 -2.2 -2 -0.3 -2 3.1 -2 -4 -2 0.9 -2 -0.4 -2 0 -2 1.2 -2 1.1 -2 -1.2 -2 -0.4 -2 1 -2 -1.5 -2 0.2 -2 0.2 -2 1.8 -2 -2.3 -2 0 -2 1.5 -2 -1.1 -2 -0.3 -2 1.1 -2 1.3 -2 -3 -2 -0.3 -2 2 -2 -0.6 -2 -1.1 -2 2 -2 0 -2 -1.9 -2 0 -2 0.8 -2 0.6 -2 -2 -2 1.9 -2 4.4 -2 -4.7 -2 -1 -2 2.7 -2 -1.2 -2 -2 -2 5.2 -2 -4.2 -2 -0.7 -2 0.5 -2 1.3 -2 0.4 -2 -2.2 -2 1.1 -2 1.9 -2 -2.1 -2 0.3 -2 1 -2 -1.4 -2 -0.3 -2 1.1 -2 0.4 -2 -0.9 -2 -0.3 -2 1.6 -2 -0.8 -2 -2.1 -2 2.8 -2 -0.4 -2 -1.4 -2 -0.4 -2 2 -2 -1.5 -2 0 -2 1.4 -2 0 -2 -1.7 -2 0.5 -2 2.4 -2 -2.5 -2 -1.2 -2 2.4 -2 -0.8 -2 -0.2 -2 -0.8 -2 3 -2 -1.5 -2 -0.9 -2 1.7 -2 -1.8 -2 0.2 -2 -1.1 -2 3.2 -2 -0.9 -2 -2.2 -2 1 -2 0.2 -2 -1.1 -2 0.9 -2 2.3 -2 1.6 -2 -4.1 -2 1.6 -2 3.3 -2 -4.4 -2 0.1 -2 0.3 -2 0.2 -2 -1.9 -2 1.2 -2 1.3 -2 -1.1 -2 0.1 -2 1.1 -2 -0.7 -2 -0.7 -2 4.4 -2 -3.5 -2 -1.3 -2 1 -2 0 -2 -0.3 -2 2.5 -2 -2.6 -2 0.2 -2 -0.7 -2 0.6 -2 1.5 -2 -1.7 -2 -0.7 -2 1.5 -2 -0.6 -2 -0.4 -2 -0.3 -2 5.4 -2 -4.5 -2 -1.8 -2 1.4 -2 0.5 -2 -1.2 -2 0.1 -2 0.4 -2 3.6 -2 -4.3 -2 0.5 -2 0.7 -2 -0.9 -2 0.1 -2 1.4 -2 -2.1 -2 -0.1 -2 2.5 -2 -1.1 -2 -1.2 -2 0.3 -2 1.4 -2 -1.9z" fill="#0b2224"/>
<rect x="1761" y="905.5" width="58.6" height="12" fill="#45cfd0"/>
<path d="M1763 915.5L1770.5 908.5V915.5z" fill="#0b2224"/>
<text x="1772.5" y="915.5" font-size="10.5" fill="#0b2224">-0.37 dB</text>
<rect x="2254.5" y="877" width="507" height="45" fill="#15150f"/>
<rect x="2255" y="877.5" width="506" height="44" fill="#44e2e2"/>
<rect x="2256.6" y="879.1" width="502.8" height="40.8" fill="#2ea2a3"/>
<path d="M2286.7 879v41M2318.3 879v41M2350 879v41M2381.6 879v41M2413.2 879v41M2444.9 879v41M2476.5 879v41M2508.1 879v41M2539.8 879v41M2571.4 879v41M2603 879v41M2634.7 879v41M2666.3 879v41M2697.9 879v41M2729.6 879v41" stroke="#25908f" stroke-width="1.2"/>
<path d="M2257 899l0 -9.9 2 6.3 2 -0.8 2 -0.7 2 0.5 2 1 2 -1.5 2 -1.5 2 -1.2 2 4.3 2 -3.3 2 2.4 2 0 2 0.2 2 -2.6 2 1.8 2 1.8 2 -2.8 2 1.1 2 1.4 2 -1.6 2 -1.1 2 2.1 2 0.7 2 -1.9 2 -0.2 2 0.9 2 -1 2 0.4 2 1.1 2 -1 2 -4.5 2 4.7 2 1.7 2 -2.9 2 -3.6 2 1.8 2 3.5 2 -2.7 2 1.7 2 1.2 2 0.1 2 -2.8 2 2.4 2 -0.1 2 -0.8 2 0.5 2 0.2 2 -0.3 2 -0.5 2 1.8 2 -0.8 2 -2.2 2 0.3 2 1.8 2 -1.2 2 -0.7 2 1.7 2 -0.2 2 -1.6 2 1.7 2 1 2 -2.2 2 -1.2 2 2 2 1.4 2 -1.6 2 -3.7 2 4.1 2 0.5 2 -1.6 2 1.6 2 0.8 2 -3.4 2 3.1 2 -0.5 2 -0.7 2 -1.4 2 2.9 2 -1.3 2 -0.5 2 1 2 0 2 -0.6 2 -0.8 2 -1.9 2 3.7 2 -1.2 2 1.2 2 -0.5 2 0.3 2 -1.4 2 1.1 2 0.2 2 -1.3 2 0.5 2 1.1 2 -2 2 -3.7 2 5.4 2 0.2 2 -0.9 2 1 2 0.5 2 -2.2 2 -0.3 2 1.9 2 -1.2 2 -1.8 2 2 2 1.6 2 -5.9 2 4.8 2 0.8 2 0.1 2 -1.8 2 0.6 2 0.1 2 -1.1 2 1 2 0.1 2 -3.5 2 1.6 2 2.8 2 -0.3 2 -2.5 2 1.1 2 1.5 2 -0.4 2 -1.3 2 1.1 2 -0.3 2 0.6 2 -1.3 2 -1.8 2 -0.8 2 2.3 2 1.6 2 1.2 2 -1.3 2 -0.8 2 0.8 2 -1.3 2 0.3 2 -3 2 4.8 2 -2.6 2 1.7 2 0.3 2 -1.6 2 -4.2 2 6.3 2 -1.1 2 0.1 2 -0.2 2 0.9 2 -1 2 -2.3 2 3.4 2 -1.1 2 -4.5 2 4.9 2 1.2 2 -1.4 2 -1.9 2 2 2 -0.4 2 -0.9 2 1.3 2 0.2 2 -1.4 2 -1.1 2 3.3 2 -1.2 2 -1.2 2 0.8 2 1.5 2 -0.8 2 -0.3 2 1.1 2 0 2 -1.4 2 -0.4 2 1.4 2 0 2 -3.1 2 1.8 2 1.4 2 -3 2 0.5 2 2 2 -1.3 2 1 2 -0.3 2 0.3 2 -1.3 2 0.5 2 2.3 2 -1.5 2 -1 2 1.1 2 -3.1 2 2.3 2 -3.6 2 4.6 2 -0.5 2 -4.5 2 6.1 2 -1 2 -0.6 2 0.1 2 -2.3 2 2.5 2 -0.7 2 1.4 2 -3.6 2 2.1 2 1.2 2 1.3 2 -1 2 -5.6 2 4.6 2 -2.7 2 3.2 2 -0.8 2 -1.9 2 3.3 2 -2.8 2 3.2 2 -0.1 2 -2.9 2 0.8 2 2.1 2 -1.5 2 -1.8 2 2.6 2 0.8 2 -1.1 2 0.6 2 -3 2 2.5 2 -1.6 2 2 2 -3.6 2 1.4 2 1.6 2 1.3 2 -1.2 2 -1.6 2 1.5 2 0.6 1 -1.3 0 10.7 -1 -1.2 -2 0.6 -2 1.4 -2 -1.5 -2 -1.1 -2 1.2 -2 1.6 -2 1.4 -2 -3.4 -2 1.9 -2 -1.5 -2 2.4 -2 -2.9 -2 0.5 -2 -1 -2 0.7 -2 2.5 -2 -1.7 -2 -1.5 -2 2 -2 0.8 -2 -2.7 -2 -0.1 -2 3 -2 -2.6 -2 3.1 -2 -1.8 -2 -0.8 -2 3.1 -2 -2.6 -2 4.4 -2 -5.3 -2 -1 -2 1.3 -2 1.1 -2 2 -2 -3.4 -2 1.3 -2 -0.6 -2 2.4 -2 -2.2 -2 0.1 -2 -0.6 -2 -0.9 -2 5.8 -2 -4.3 -2 -0.5 -2 4.3 -2 -3.4 -2 2.2 -2 -2.9 -2 1 -2 -1 -2 -1.4 -2 2.1 -2 0.5 -2 -1.2 -2 0.3 -2 -0.3 -2 1 -2 -1.2 -2 1.9 -2 0.4 -2 -2.9 -2 1.3 -2 1.7 -2 -2.9 -2 0 -2 1.4 -2 -0.4 -2 -1.3 -2 0 -2 1.1 -2 -0.3 -2 -0.7 -2 1.5 -2 0.7 -2 -1.2 -2 -1.1 -2 3.1 -2 -1.1 -2 -1.3 -2 0.2 -2 1.2 -2 -0.9 -2 -0.4 -2 1.9 -2 -1.8 -2 -1.3 -2 1.2 -2 4.7 -2 -4.2 -2 -1.1 -2 3.2 -2 -2.2 -2 -0.9 -2 0.9 -2 -0.2 -2 0.1 -2 -1.1 -2 6 -2 -4 -2 -1.5 -2 0.3 -2 1.6 -2 -2.4 -2 4.5 -2 -2.8 -2 0.3 -2 -1.2 -2 0.7 -2 -0.8 -2 -1.2 -2 1.1 -2 1.5 -2 2.2 -2 -0.8 -2 -1.7 -2 -1.2 -2 0.5 -2 -0.3 -2 1 -2 -1.2 -2 -0.4 -2 1.4 -2 1 -2 -2.3 -2 -0.3 -2 2.6 -2 1.5 -2 -3.3 -2 0.1 -2 1 -2 -1 -2 0.1 -2 0.6 -2 -1.8 -2 0.1 -2 0.7 -2 4.6 -2 -5.6 -2 1.6 -2 1.9 -2 -1.7 -2 -1.2 -2 1.9 -2 -0.2 -2 -2.1 -2 0.5 -2 1 -2 -0.8 -2 0.2 -2 5.1 -2 -3.5 -2 -1.9 -2 1 -2 0.5 -2 -1.2 -2 0.2 -2 1 -2 -1.3 -2 0.3 -2 -0.5 -2 1.2 -2 -1.2 -2 3.5 -2 -1.8 -2 -0.7 -2 -0.6 -2 0 -2 0.9 -2 -0.5 -2 -1.2 -2 2.8 -2 -1.3 -2 -0.7 -2 -0.5 -2 2.9 -2 -3.3 -2 0.8 -2 1.5 -2 -1.5 -2 0.4 -2 3.9 -2 -3.5 -2 -1.5 -2 1.4 -2 1.9 -2 -1.1 -2 -2.1 -2 1 -2 1.6 -2 -1.5 -2 -0.2 -2 1.6 -2 -0.7 -2 -1.1 -2 1.8 -2 0.3 -2 -2.1 -2 -0.7 -2 1.7 -2 -0.4 -2 -0.3 -2 0.2 -2 0.5 -2 -0.8 -2 -0.1 -2 2.2 -2 -2.6 -2 0.1 -2 1.2 -2 1.6 -2 -2.6 -2 3.3 -2 1.7 -2 -3.4 -2 -2.8 -2 1.6 -2 4.5 -2 -4.3 -2 -1 -2 1 -2 0.4 -2 -0.9 -2 0.8 -2 -0.2 -2 -1.8 -2 0.7 -2 2 -2 -1.1 -2 -1.5 -2 1.3 -2 1 -2 -2.7 -2 1.7 -2 1.7 -2 -2.5 -2 0.2 -2 0 -2 2.3 -2 -3.1 -2 4.1 -2 -1.1 -2 -1.4 -2 -1.4 -2 0.9 -2 0.5 -2 -0.7 -2 -0.8 -2 6z" fill="#0b2224"/>
<rect x="2266" y="905.5" width="12" height="12" fill="#45cfd0"/>
<path d="M2268 915.5L2275.5 908.5V915.5z" fill="#0b2224"/>
<rect x="610.5" y="925.9" width="101.4" height="45" fill="#15150f"/>
<rect x="611" y="926.4" width="100.4" height="44" fill="#44e2e2"/>
<rect x="612.6" y="928" width="97.2" height="40.8" fill="#2ea2a3"/>
<path d="M641.7 927.9v41M673.4 927.9v41M705 927.9v41" stroke="#25908f" stroke-width="1.2"/>
<path d="M613 947.9l0 -0.6 1.5 -1.4 1.5 -2.1 1.5 0.7 1.5 0.5 1.5 0.3 1.5 0.9 1.5 0.3 1.5 -3.5 1.5 0.4 1.5 0.4 1.5 0.1 1.5 0.6 1.5 0.4 1.5 0.6 1.5 0.5 1.5 1.5 1.5 -0.1 1.5 0 1.5 -5.4 1.5 0.8 1.5 0.1 1.5 0.2 1.5 0.7 1.5 1.2 1.5 1.2 1.5 -1.7 1.5 -1.7 1.5 -0.3 1.5 0 1.5 1.2 1.5 0.1 1.5 1 1.5 0.4 1.5 0.7 1.5 1.3 1.5 -0.1 1.5 -1.3 1.5 -2.2 1.5 -0.2 1.5 0.4 1.5 0.7 1.5 1 1.5 0.4 1.5 1.3 1.5 -3.5 1.5 -2 1.5 0.8 1.5 0.6 1.5 0.8 1.5 -0.1 1.5 0.7 1.5 1 1.5 0.9 1.5 0.8 1.5 -0.1 1.5 -3 1.5 -2 1.5 0.1 1.5 0.8 1.5 0.1 1.5 0.2 1.5 0.7 1.5 0.8 0.9 0.6 0 4.3 -0.9 0.6 -1.5 0.8 -1.5 0.7 -1.5 0.2 -1.5 0.1 -1.5 0.8 -1.5 0.1 -1.5 -1.9 -1.5 -2.8 -1.5 -0.1 -1.5 0.8 -1.5 0.8 -1.5 1 -1.5 0.7 -1.5 -0.1 -1.5 0.8 -1.5 0.6 -1.5 0.7 -1.5 -1.9 -1.5 -3.3 -1.5 1.2 -1.5 0.4 -1.5 0.9 -1.5 0.6 -1.5 0.4 -1.5 -0.2 -1.5 -2.1 -1.5 -1.3 -1.5 -0.1 -1.5 1.2 -1.5 0.6 -1.5 0.4 -1.5 1 -1.5 0.1 -1.5 1.1 -1.5 0 -1.5 -0.3 -1.5 -1.6 -1.5 -1.6 -1.5 1.2 -1.5 1.2 -1.5 0.7 -1.5 0.2 -1.5 0.1 -1.5 0.8 -1.5 -5.1 -1.5 0 -1.5 -0.1 -1.5 1.5 -1.5 0.5 -1.5 0.6 -1.5 0.3 -1.5 0.6 -1.5 0.1 -1.5 0.4 -1.5 0.4 -1.5 -3.4 -1.5 0.2 -1.5 0.8 -1.5 0.3 -1.5 0.5 -1.5 0.7 -1.5 -2 -1.5 -1.4z" fill="#0b2224"/>
<rect x="622" y="954.4" width="12" height="12" fill="#45cfd0"/>
<path d="M624 964.4L631.5 957.4V964.4z" fill="#0b2224"/>
<rect x="737.2" y="925.9" width="253.3" height="45" fill="#15150f"/>
<rect x="737.7" y="926.4" width="252.3" height="44" fill="#44e2e2"/>
<rect x="739.3" y="928" width="249.1" height="40.8" fill="#2ea2a3"/>
<path d="M768.3 927.9v41M799.9 927.9v41M831.5 927.9v41M863.2 927.9v41M894.8 927.9v41M926.4 927.9v41M958.1 927.9v41" stroke="#25908f" stroke-width="1.2"/>
<path d="M739.7 947.9l0 -0.6 1.5 -2.6 1.5 -2 1.5 1.2 1.5 1 1.5 1.4 1.5 1 1.5 -4.2 1.5 -0.6 1.5 0.3 1.5 0.8 1.5 0.9 1.5 0.9 1.5 1.1 1.5 -2.1 1.5 0.3 1.5 1 1.5 1.5 1.5 0 1.5 -1.8 1.5 -1.7 1.5 1.3 1.5 0.4 1.5 1.1 1.5 0.8 1.5 -0.1 1.5 -1.4 1.5 -2.5 1.5 -0.6 1.5 0.9 1.5 -0.2 1.5 0.3 1.5 0.8 1.5 0.3 1.5 0.2 1.5 0.5 1.5 0.5 1.5 0.9 1.5 0.5 1.5 -3.9 1.5 0.8 1.5 0.3 1.5 0.8 1.5 0.7 1.5 1.3 1.5 -2.5 1.5 -2.2 1.5 0.5 1.5 -0.1 1.5 0 1.5 0.2 1.5 0.9 1.5 0.6 1.5 0.4 1.5 0.1 1.5 1.1 1.5 1.1 1.5 -4.3 1.5 1 1.5 0.4 1.5 0.2 1.5 1 1.5 1.7 1.5 -1.1 1.5 -1.7 1.5 -0.1 1.5 0.5 1.5 0.4 1.5 0.4 1.5 0.4 1.5 1.1 1.5 -3.3 1.5 0.3 1.5 0.1 1.5 0 1.5 1 1.5 0.4 1.5 0.7 1.5 0.7 1.5 -4.8 1.5 0.4 1.5 0.8 1.5 1.7 1.5 0.4 1.5 -1.7 1.5 0.2 1.5 0.6 1.5 0.6 1.5 0.5 1.5 -0.5 1.5 -3.5 1.5 1.1 1.5 -0.1 1.5 1 1.5 0.7 1.5 0.7 1.5 1.8 1.5 -3.6 1.5 -0.9 1.5 -0.3 1.5 0.7 1.5 0.6 1.5 0.4 1.5 0.4 1.5 0.9 1.5 1.1 1.5 0.6 1.5 -3.8 1.5 1.5 1.5 1.3 1.5 -0.6 1.5 -1.7 1.5 0.1 1.5 0.2 1.5 0 1.5 -0.1 1.5 0.7 1.5 -0.1 1.5 0.2 1.5 0.7 1.5 0.2 1.5 0.9 1.5 -3 1.5 -2.3 1.5 1 1.5 0.5 1.5 0.6 1.5 0.9 1.5 1.4 1.5 0 1.5 -2.8 1.5 0.2 1.5 0 1.5 0.9 1.5 0.4 1.5 0.9 1.5 1.8 1.5 -4.2 1.5 0.6 1.5 1.4 1.5 0.9 1.5 0 1.5 -4.2 1.5 0.9 1.5 -0.2 1.5 0.2 1.5 0.7 1.5 0.7 1.5 0.8 1.5 0.9 1.5 1.5 1.5 -4.1 1.5 1.4 1.5 1.3 1.5 1.3 1.5 0.1 1.5 -2.1 1.5 -3.3 1.5 1 1.5 -0.5 1.5 1 1.5 -0.4 1.5 0.8 1.5 0.5 1.5 -0.1 1.3 0.7 0 5.7 -1.3 0.7 -1.5 -0.1 -1.5 0.5 -1.5 0.8 -1.5 -0.3 -1.5 0.9 -1.5 -0.5 -1.5 0.9 -1.5 -3.1 -1.5 -2 -1.5 0.1 -1.5 1.2 -1.5 1.2 -1.5 1.4 -1.5 -3.9 -1.5 1.4 -1.5 0.9 -1.5 0.7 -1.5 0.7 -1.5 0.6 -1.5 0.2 -1.5 -0.1 -1.5 0.8 -1.5 -4 -1.5 0 -1.5 0.8 -1.5 1.3 -1.5 0.6 -1.5 -4 -1.5 1.7 -1.5 0.8 -1.5 0.4 -1.5 0.9 -1.5 0 -1.5 0.2 -1.5 -2.7 -1.5 0 -1.5 1.3 -1.5 0.9 -1.5 0.6 -1.5 0.4 -1.5 0.9 -1.5 -2.2 -1.5 -2.8 -1.5 0.8 -1.5 0.2 -1.5 0.6 -1.5 0.2 -1.5 -0.1 -1.5 0.7 -1.5 -0.1 -1.5 0 -1.5 0.2 -1.5 0.1 -1.5 -1.6 -1.5 -0.6 -1.5 1.2 -1.5 1.4 -1.5 -3.6 -1.5 0.6 -1.5 1 -1.5 0.9 -1.5 0.4 -1.5 0.4 -1.5 0.6 -1.5 0.7 -1.5 -0.3 -1.5 -0.8 -1.5 -3.5 -1.5 1.7 -1.5 0.7 -1.5 0.7 -1.5 1 -1.5 -0.1 -1.5 1 -1.5 -3.3 -1.5 -0.4 -1.5 0.5 -1.5 0.6 -1.5 0.6 -1.5 0.2 -1.5 -1.6 -1.5 0.3 -1.5 1.6 -1.5 0.7 -1.5 0.3 -1.5 -4.5 -1.5 0.6 -1.5 0.7 -1.5 0.4 -1.5 1 -1.5 0 -1.5 0.1 -1.5 0.3 -1.5 -3.1 -1.5 1 -1.5 0.4 -1.5 0.4 -1.5 0.4 -1.5 0.5 -1.5 -0.1 -1.5 -1.6 -1.5 -1.1 -1.5 1.6 -1.5 1 -1.5 0.2 -1.5 0.3 -1.5 1 -1.5 -4.1 -1.5 1 -1.5 1.1 -1.5 0.1 -1.5 0.4 -1.5 0.6 -1.5 0.8 -1.5 0.2 -1.5 0 -1.5 -0.1 -1.5 0.4 -1.5 -2.1 -1.5 -2.4 -1.5 1.3 -1.5 0.7 -1.5 0.7 -1.5 0.3 -1.5 0.8 -1.5 -3.7 -1.5 0.4 -1.5 0.9 -1.5 0.4 -1.5 0.5 -1.5 0.2 -1.5 0.2 -1.5 0.7 -1.5 0.3 -1.5 -0.2 -1.5 0.8 -1.5 -0.6 -1.5 -2.4 -1.5 -1.4 -1.5 -0.1 -1.5 0.8 -1.5 1 -1.5 0.4 -1.5 1.2 -1.5 -1.7 -1.5 -1.7 -1.5 0 -1.5 1.4 -1.5 1 -1.5 0.3 -1.5 -2 -1.5 1 -1.5 0.9 -1.5 0.8 -1.5 0.8 -1.5 0.3 -1.5 -0.6 -1.5 -4 -1.5 1 -1.5 1.3 -1.5 1 -1.5 1.1 -1.5 -1.9 -1.5 -2.5z" fill="#0b2224"/>
<rect x="748.7" y="954.4" width="58.6" height="12" fill="#45cfd0"/>
<path d="M750.7 964.4L758.2 957.4V964.4z" fill="#0b2224"/>
<text x="760.2" y="964.4" font-size="10.5" fill="#0b2224">-1.01 dB</text>
<rect x="1749.5" y="925.9" width="506" height="45" fill="#15150f"/>
<rect x="1750" y="926.4" width="505" height="44" fill="#44e2e2"/>
<rect x="1751.6" y="928" width="501.8" height="40.8" fill="#2ea2a3"/>
<path d="M1780.6 927.9v41M1812.2 927.9v41M1843.8 927.9v41M1875.5 927.9v41M1907.1 927.9v41M1938.7 927.9v41M1970.4 927.9v41M2002 927.9v41M2033.6 927.9v41M2065.3 927.9v41M2096.9 927.9v41M2128.5 927.9v41M2160.2 927.9v41M2191.8 927.9v41M2223.4 927.9v41" stroke="#25908f" stroke-width="1.2"/>
<path d="M1752 947.9l0 -0.6 1.5 -1.8 1.5 -0.8 1.5 0.1 1.5 0.8 1.5 0.9 1.5 -3.5 1.5 -0.6 1.5 0.4 1.5 1.4 1.5 0.4 1.5 1.7 1.5 -0.6 1.5 -2 1.5 0.5 1.5 -0.5 1.5 0.9 1.5 0.1 1.5 -0.1 1.5 0.4 1.5 0.5 1.5 0 1.5 0.8 1.5 0.3 1.5 -2.8 1.5 -1.1 1.5 0.6 1.5 1 1.5 0.7 1.5 1.5 1.5 0.8 1.5 -5.3 1.5 1.3 1.5 0.7 1.5 1.6 1.5 1 1.5 -1.7 1.5 -1.2 1.5 0.6 1.5 0.5 1.5 -0.5 1.5 0.2 1.5 0.3 1.5 0.4 1.5 0.3 1.5 0.6 1.5 0.4 1.5 -1.8 1.5 -1 1.5 1 1.5 2.3 1.5 -3.3 1.5 0.9 1.5 0.2 1.5 1.1 1.5 0 1.5 -4.6 1.5 0.3 1.5 0 1.5 1.4 1.5 0.5 1.5 0.7 1.5 0.6 1.5 0.5 1.5 1.7 1.5 0 1.5 -0.1 1.5 -3.8 1.5 -2.3 1.5 0.9 1.5 0.5 1.5 1 1.5 -0.1 1.5 0.9 1.5 0.6 1.5 1.4 1.5 -3.8 1.5 1.5 1.5 1.1 1.5 2.1 1.5 -3 1.5 -1.7 1.5 0.2 1.5 0.3 1.5 1 1.5 0.7 1.5 0.8 1.5 0 1.5 -3.7 1.5 0.5 1.5 1 1.5 -0.3 1.5 1.2 1.5 1 1.5 1.8 1.5 -4.7 1.5 0 1.5 0.6 1.5 1.1 1.5 0.6 1.5 0.7 1.5 0.9 1.5 -3.7 1.5 0.4 1.5 2.3 1.5 1.9 1.5 0 1.5 -1.8 1.5 -1.9 1.5 0.1 1.5 0.9 1.5 0.2 1.5 1.2 1.5 -2.1 1.5 -0.7 1.5 1.8 1.5 2.3 1.5 -3.5 1.5 -1 1.5 0.5 1.5 0 1.5 0.2 1.5 0.9 1.5 0.4 1.5 1 1.5 0.8 1.5 -2 1.5 -1.5 1.5 0.6 1.5 0.5 1.5 0.5 1.5 0.5 1.5 0.9 1.5 1.2 1.5 -4 1.5 0.2 1.5 0.6 1.5 1 1.5 2.3 1.5 -3.6 1.5 0.5 1.5 1 1.5 0.6 1.5 -0.4 1.5 -2.2 1.5 0.3 1.5 0.7 1.5 1.1 1.5 0.5 1.5 -0.7 1.5 -1.9 1.5 0.7 1.5 0.9 1.5 1.5 1.5 -3.7 1.5 1.2 1.5 1.4 1.5 0.5 1.5 -2.7 1.5 0.7 1.5 0.5 1.5 0.9 1.5 1.1 1.5 -0.6 1.5 -3.3 1.5 1.2 1.5 0.5 1.5 0.4 1.5 0.3 1.5 1 1.5 1.6 1.5 -0.1 1.5 0.1 1.5 -4.4 1.5 1 1.5 0.9 1.5 0 1.5 1 1.5 1.5 1.5 0 1.5 0.1 1.5 -4 1.5 -1.3 1.5 0.8 1.5 0.9 1.5 0 1.5 1 1.5 0.2 1.5 0.6 1.5 1.1 1.5 0.8 1.5 -0.1 1.5 -1.9 1.5 -1.8 1.5 -0.1 1.5 0.2 1.5 1 1.5 0 1.5 0.6 1.5 0.3 1.5 0.8 1.5 -0.5 1.5 -2.5 1.5 1 1.5 0.5 1.5 0.6 1.5 0.9 1.5 1 1.5 -0.1 1.5 -1.6 1.5 -2.9 1.5 1.1 1.5 0.8 1.5 0.7 1.5 0.6 1.5 -0.5 1.5 -3.6 1.5 -0.1 1.5 0.7 1.5 1.2 1.5 0.9 1.5 0.7 1.5 2 1.5 -1.5 1.5 -3.5 1.5 0.8 1.5 0.3 1.5 1 1.5 0.7 1.5 0.7 1.5 1.4 1.5 0 1.5 0 1.5 -5.3 1.5 1.2 1.5 1.3 1.5 0.8 1.5 0.2 1.5 -1.5 1.5 0.1 1.5 0.9 1.5 1.2 1.5 1.1 1.5 -5.3 1.5 0.7 1.5 0.7 1.5 0.5 1.5 1.1 1.5 2.1 1.5 -3.7 1.5 0 1.5 1.4 1.5 1 1.5 0.4 1.5 -3 1.5 -1 1.5 0.4 1.5 0.3 1.5 0.5 1.5 0.7 1.5 0 1.5 0.5 1.5 0.1 1.5 0.5 1.5 1 1.5 0.8 1.5 0 1.5 -2.5 1.5 -0.1 1.5 1 1.5 1.5 1.5 -4.5 1.5 1.3 1.5 1.5 1.5 1.8 1.5 -0.1 1.5 -3.1 1.5 -0.9 1.5 0.2 1.5 0.7 1.5 0.7 1.5 1.3 1.5 -1.3 1.5 -2.4 1.5 1.1 1.5 -0.3 1.5 0.6 1.5 0.7 1.5 0.6 1.5 0.6 1.5 0.4 1.5 1.1 1.5 0 1.5 -2.6 1.5 -1.1 1.5 1.6 1.5 2.1 1.5 -2.4 1.5 -2.3 1.5 0.6 1.5 0.8 1.5 -0.1 1.5 -0.1 1.5 0.6 1.5 0.6 1.5 0.5 1.5 0.4 1.5 0.3 1.5 1.1 1.5 -4.6 1.5 -0.2 1.5 0.5 1.5 1 1.5 0.2 1.5 0.9 1.5 1.4 1.5 0.8 1.5 -3 1.5 0.2 1.5 0.5 1.5 1 1.5 1.3 1.5 0 1.5 -0.7 1.5 -2.7 1.5 -0.4 1.5 -0.2 1.5 0 1.5 0.2 1.5 0.7 1.5 0.5 1.5 0.6 1.5 0.1 1.5 0.7 0.5 0 0 3.8 -0.5 0 -1.5 0.7 -1.5 0.1 -1.5 0.5 -1.5 0.4 -1.5 0.6 -1.5 0.2 -1.5 0 -1.5 -0.2 -1.5 -0.3 -1.5 -2.6 -1.5 -0.7 -1.5 0 -1.5 1.2 -1.5 1 -1.5 0.5 -1.5 0.2 -1.5 -2.9 -1.5 0.7 -1.5 1.3 -1.5 0.8 -1.5 0.2 -1.5 0.9 -1.5 0.5 -1.5 -0.2 -1.5 -4.3 -1.5 1.1 -1.5 0.3 -1.5 0.4 -1.5 0.5 -1.5 0.6 -1.5 0.6 -1.5 -0.1 -1.5 -0.1 -1.5 0.7 -1.5 0.6 -1.5 -2.2 -1.5 -2.3 -1.5 2 -1.5 1.6 -1.5 -1 -1.5 -2.5 -1.5 0 -1.5 1 -1.5 0.4 -1.5 0.6 -1.5 0.6 -1.5 0.7 -1.5 0.5 -1.5 -0.3 -1.5 1 -1.5 -2.3 -1.5 -1.2 -1.5 1.3 -1.5 0.7 -1.5 0.7 -1.5 0.2 -1.5 -0.8 -1.5 -3 -1.5 -0.1 -1.5 1.7 -1.5 1.4 -1.5 1.2 -1.5 -4.3 -1.5 1.4 -1.5 1 -1.5 -0.1 -1.5 -2.4 -1.5 0 -1.5 0.8 -1.5 0.9 -1.5 0.5 -1.5 0.1 -1.5 0.5 -1.5 0 -1.5 0.7 -1.5 0.4 -1.5 0.3 -1.5 0.3 -1.5 -0.9 -1.5 -2.9 -1.5 0.4 -1.5 1 -1.5 1.3 -1.5 0 -1.5 -3.5 -1.5 2 -1.5 1.1 -1.5 0.5 -1.5 0.7 -1.5 0.7 -1.5 -5.1 -1.5 1 -1.5 1.2 -1.5 0.9 -1.5 0.1 -1.5 -1.4 -1.5 0.2 -1.5 0.7 -1.5 1.2 -1.5 1.2 -1.5 -5.1 -1.5 0 -1.5 0 -1.5 1.3 -1.5 0.6 -1.5 0.7 -1.5 0.9 -1.5 0.3 -1.5 0.8 -1.5 -3.3 -1.5 -1.4 -1.5 1.9 -1.5 0.7 -1.5 0.9 -1.5 1.2 -1.5 0.7 -1.5 -0.1 -1.5 -3.5 -1.5 -0.5 -1.5 0.6 -1.5 0.6 -1.5 0.8 -1.5 1.1 -1.5 -2.7 -1.5 -1.5 -1.5 -0.1 -1.5 0.9 -1.5 0.9 -1.5 0.5 -1.5 0.5 -1.5 0.9 -1.5 -2.4 -1.5 -0.5 -1.5 0.7 -1.5 0.3 -1.5 0.6 -1.5 0 -1.5 1 -1.5 0.1 -1.5 -0.1 -1.5 -1.7 -1.5 -1.8 -1.5 -0.1 -1.5 0.7 -1.5 1 -1.5 0.5 -1.5 0.2 -1.5 0.9 -1.5 0 -1.5 0.8 -1.5 0.7 -1.5 -1.3 -1.5 -3.8 -1.5 0.1 -1.5 0 -1.5 1.4 -1.5 0.9 -1.5 0 -1.5 0.8 -1.5 0.9 -1.5 -4.2 -1.5 0.1 -1.5 -0.1 -1.5 1.5 -1.5 1 -1.5 0.3 -1.5 0.4 -1.5 0.5 -1.5 1.1 -1.5 -3.1 -1.5 -0.6 -1.5 1.1 -1.5 0.8 -1.5 0.5 -1.5 0.6 -1.5 -2.5 -1.5 0.5 -1.5 1.3 -1.5 1.1 -1.5 -3.6 -1.5 1.4 -1.5 0.9 -1.5 0.6 -1.5 -1.8 -1.5 -0.7 -1.5 0.5 -1.5 1 -1.5 0.7 -1.5 0.3 -1.5 -2.1 -1.5 -0.4 -1.5 0.6 -1.5 1 -1.5 0.5 -1.5 -3.4 -1.5 2.1 -1.5 0.9 -1.5 0.6 -1.5 0.2 -1.5 -3.8 -1.5 1.1 -1.5 0.9 -1.5 0.4 -1.5 0.5 -1.5 0.5 -1.5 0.6 -1.5 -1.4 -1.5 -1.9 -1.5 0.7 -1.5 0.9 -1.5 0.4 -1.5 0.9 -1.5 0.2 -1.5 0 -1.5 0.5 -1.5 -1 -1.5 -3.3 -1.5 2.2 -1.5 1.7 -1.5 -0.7 -1.5 -2 -1.5 1.2 -1.5 0.2 -1.5 0.9 -1.5 0.1 -1.5 -1.8 -1.5 -1.7 -1.5 0 -1.5 1.8 -1.5 2.2 -1.5 0.4 -1.5 -3.5 -1.5 0.9 -1.5 0.6 -1.5 0.6 -1.5 1 -1.5 0.6 -1.5 0 -1.5 -4.5 -1.5 1.7 -1.5 1 -1.5 1.1 -1.5 -0.3 -1.5 1 -1.5 0.5 -1.5 -3.5 -1.5 0 -1.5 0.8 -1.5 0.7 -1.5 1 -1.5 0.3 -1.5 0.2 -1.5 -1.6 -1.5 -2.8 -1.5 2 -1.5 1.1 -1.5 1.4 -1.5 -3.7 -1.5 1.3 -1.5 0.6 -1.5 0.8 -1.5 -0.1 -1.5 1 -1.5 0.5 -1.5 0.9 -1.5 -2.1 -1.5 -3.6 -1.5 -0.1 -1.5 0 -1.5 1.7 -1.5 0.4 -1.5 0.6 -1.5 0.6 -1.5 0.5 -1.5 1.4 -1.5 0 -1.5 0.3 -1.5 -4.4 -1.5 0 -1.5 1 -1.5 0.2 -1.5 0.9 -1.5 -3.1 -1.5 2.2 -1.5 1 -1.5 -1 -1.5 -1.7 -1.5 0.4 -1.5 0.6 -1.5 0.3 -1.5 0.4 -1.5 0.3 -1.5 0.2 -1.5 -0.4 -1.5 0.5 -1.5 0.6 -1.5 -1.2 -1.5 -1.7 -1.5 1 -1.5 1.5 -1.5 0.7 -1.5 1.2 -1.5 -5 -1.5 0.8 -1.5 1.4 -1.5 0.6 -1.5 0.9 -1.5 0.6 -1.5 -1.1 -1.5 -2.6 -1.5 0.3 -1.5 0.7 -1.5 0 -1.5 0.5 -1.5 0.4 -1.5 -0.1 -1.5 0.1 -1.5 0.8 -1.5 -0.5 -1.5 0.5 -1.5 -1.9 -1.5 -0.6 -1.5 1.6 -1.5 0.4 -1.5 1.4 -1.5 0.4 -1.5 -0.6 -1.5 -3.3 -1.5 0.9 -1.5 0.8 -1.5 0.1 -1.5 -0.8 -1.5 -1.7z" fill="#0b2224"/>
<rect x="1761" y="954.4" width="58.6" height="12" fill="#45cfd0"/>
<path d="M1763 964.4L1770.5 957.4V964.4z" fill="#0b2224"/>
<text x="1772.5" y="964.4" font-size="10.5" fill="#0b2224">-4.21 dB</text>
<rect x="2254.5" y="925.9" width="507" height="45" fill="#15150f"/>
<rect x="2255" y="926.4" width="506" height="44" fill="#44e2e2"/>
<rect x="2256.6" y="928" width="502.8" height="40.8" fill="#2ea2a3"/>
<path d="M2286.7 927.9v41M2318.3 927.9v41M2350 927.9v41M2381.6 927.9v41M2413.2 927.9v41M2444.9 927.9v41M2476.5 927.9v41M2508.1 927.9v41M2539.8 927.9v41M2571.4 927.9v41M2603 927.9v41M2634.7 927.9v41M2666.3 927.9v41M2697.9 927.9v41M2729.6 927.9v41" stroke="#25908f" stroke-width="1.2"/>
<path d="M2257 947.9l0 -0.6 1.5 -2.4 1.5 -0.7 1.5 1.1 1.5 1.9 1.5 -1.9 1.5 -1.3 1.5 -0.1 1.5 -0.3 1.5 0.2 1.5 0.3 1.5 0.8 1.5 -0.2 1.5 0.7 1.5 0.1 1.5 0.5 1.5 1 1.5 -2.7 1.5 -1.2 1.5 0.2 1.5 0.7 1.5 -0.1 1.5 0.6 1.5 0.7 1.5 0.3 1.5 1 1.5 -1.4 1.5 -3.4 1.5 0.3 1.5 0.7 1.5 -0.5 1.5 1.3 1.5 -0.6 1.5 0.8 1.5 0.2 1.5 0.7 1.5 0.7 1.5 1.2 1.5 -2.6 1.5 -1.3 1.5 0.6 1.5 0.1 1.5 0.5 1.5 0.8 1.5 0.9 1.5 1.6 1.5 0 1.5 -2.7 1.5 -0.4 1.5 0.6 1.5 2.5 1.5 0 1.5 0 1.5 -3.3 1.5 -2 1.5 0.5 1.5 -0.3 1.5 0.1 1.5 1.1 1.5 0.3 1.5 0.3 1.5 0.7 1.5 0.7 1.5 0.4 1.5 1.7 1.5 -0.1 1.5 0 1.5 -5.2 1.5 -0.6 1.5 1 1.5 1.2 1.5 0.8 1.5 0.8 1.5 1.2 1.5 0.8 1.5 0.1 1.5 -3.8 1.5 -1.5 1.5 0.2 1.5 1 1.5 0.7 1.5 0.8 1.5 0.7 1.5 1.7 1.5 0.1 1.5 -1.4 1.5 -1.8 1.5 1 1.5 0.2 1.5 1.3 1.5 -3.7 1.5 -1.5 1.5 1 1.5 0.8 1.5 1.3 1.5 1.5 1.5 -3.7 1.5 0.8 1.5 2 1.5 0.5 1.5 -3 1.5 0.6 1.5 1 1.5 0.9 1.5 0.5 1.5 -1.5 1.5 -0.8 1.5 1.5 1.5 2.3 1.5 -5.3 1.5 -0.5 1.5 0.8 1.5 1.5 1.5 0 1.5 1.4 1.5 1.1 1.5 -2.3 1.5 -1.4 1.5 0.4 1.5 0.6 1.5 0.2 1.5 1.2 1.5 0.8 1.5 1.5 1.5 -2.7 1.5 -0.4 1.5 0.5 1.5 0.7 1.5 0.4 1.5 0.8 1.5 0.6 1.5 -3.8 1.5 -0.5 1.5 0 1.5 0.7 1.5 0.2 1.5 0.8 1.5 0.5 1.5 0.5 1.5 0.9 1.5 -0.7 1.5 -2.3 1.5 0.9 1.5 0.4 1.5 0.1 1.5 0.3 1.5 0.2 1.5 0.6 1.5 0.5 1.5 0.7 1.5 -4.2 1.5 -0.8 1.5 0.9 1.5 0.5 1.5 0.8 1.5 1.6 1.5 1.2 1.5 0 1.5 -3.7 1.5 -1.4 1.5 0.7 1.5 0.7 1.5 1.2 1.5 1.3 1.5 -3.5 1.5 1.6 1.5 1.4 1.5 1.6 1.5 0 1.5 -0.8 1.5 -3.2 1.5 -1 1.5 0.8 1.5 -0.4 1.5 0.8 1.5 0.4 1.5 0.2 1.5 0.5 1.5 0.2 1.5 0.7 1.5 0.9 1.5 -1.3 1.5 -0.3 1.5 0.8 1.5 1.6 1.5 -2.6 1.5 0 1.5 0.1 1.5 0.5 1.5 0.5 1.5 0.3 1.5 0.7 1.5 0.5 1.5 -3.9 1.5 1.1 1.5 1.6 1.5 1.1 1.5 -2.5 1.5 -2 1.5 0.8 1.5 0.1 1.5 0.3 1.5 -0.3 1.5 0.8 1.5 0.5 1.5 -0.2 1.5 0.6 1.5 1 1.5 1 1.5 -1.7 1.5 -1.9 1.5 0.4 1.5 0.1 1.5 1 1.5 0.8 1.5 1.4 1.5 -5.5 1.5 1.2 1.5 2.3 1.5 2.1 1.5 0 1.5 -1.9 1.5 -0.9 1.5 -0.1 1.5 1.1 1.5 1 1.5 -2.5 1.5 0.8 1.5 1 1.5 1.4 1.5 -1.8 1.5 -2.3 1.5 -0.6 1.5 0.2 1.5 0.9 1.5 -0.4 1.5 0.4 1.5 0.7 1.5 0.5 1.5 0.7 1.5 0.4 1.5 0.7 1.5 0.5 1.5 -5.3 1.5 0.4 1.5 1.2 1.5 1.1 1.5 0.7 1.5 1.9 1.5 -4.3 1.5 -0.4 1.5 0.9 1.5 0 1.5 0.8 1.5 1 1.5 1.3 1.5 0.8 1.5 -4.2 1.5 0.1 1.5 0.2 1.5 0.8 1.5 0.6 1.5 0.8 1.5 0.8 1.5 0.9 1.5 0 1.5 -3.8 1.5 -1.6 1.5 1.5 1.5 0.8 1.5 0.9 1.5 1 1.5 -2.2 1.5 0 1.5 0.5 1.5 1.3 1.5 1.6 1.5 0.1 1.5 0 1.5 -3.4 1.5 1.1 1.5 1.3 1.5 1 1.5 0 1.5 -2.6 1.5 -2.2 1.5 -0.2 1.5 0.7 1.5 0 1.5 1 1.5 0.8 1.5 0.5 1.5 1 1.5 0.2 1.5 -2.8 1.5 -2.1 1.5 0.3 1.5 0.8 1.5 0.4 1.5 0 1.5 0.5 1.5 0.6 1.5 0.7 1.5 0.5 1.5 1 1.5 0.9 1.5 -2.7 1.5 -2.1 1.5 0.9 1.5 0.4 1.5 0.6 1.5 0.7 1.5 1.2 1.5 0.1 1.5 -2.3 1.5 -0.4 1.5 0.6 1.5 0.4 1.5 0.1 1.5 0.1 1.5 0.9 1.5 0.6 1.5 0.9 1.5 -3.3 1.5 -1.5 1.5 0.3 1.5 1 1.5 0.3 1.5 -0.1 1.5 0.8 1.5 0.7 1.5 1.2 1.5 0.7 1.5 -2.6 1.5 -2 0 10 -1.5 -1.9 -1.5 -2.4 -1.5 0.6 -1.5 1.2 -1.5 0.7 -1.5 0.8 -1.5 -0.1 -1.5 0.3 -1.5 0.9 -1.5 0.3 -1.5 -1.4 -1.5 -3.2 -1.5 0.9 -1.5 0.6 -1.5 0.8 -1.5 0.1 -1.5 0.1 -1.5 0.4 -1.5 0.6 -1.5 -0.3 -1.5 -2.2 -1.5 0.1 -1.5 1.2 -1.5 0.7 -1.5 0.5 -1.5 0.4 -1.5 0.9 -1.5 -2 -1.5 -2.6 -1.5 0.9 -1.5 0.9 -1.5 0.5 -1.5 0.6 -1.5 0.6 -1.5 0.4 -1.5 0 -1.5 0.4 -1.5 0.8 -1.5 0.3 -1.5 -2 -1.5 -2.7 -1.5 0.2 -1.5 0.9 -1.5 0.4 -1.5 0.8 -1.5 0.9 -1.5 0 -1.5 0.6 -1.5 -0.2 -1.5 -2.1 -1.5 -2.5 -1.5 0 -1.5 0.9 -1.5 1.2 -1.5 1.1 -1.5 -3.2 -1.5 0 -1.5 0.1 -1.5 1.5 -1.5 1.2 -1.5 0.5 -1.5 0 -1.5 -2.1 -1.5 0.9 -1.5 0.9 -1.5 0.7 -1.5 1.4 -1.5 -1.5 -1.5 -3.6 -1.5 0 -1.5 0.8 -1.5 0.8 -1.5 0.7 -1.5 0.6 -1.5 0.7 -1.5 0.2 -1.5 0.1 -1.5 -4 -1.5 0.7 -1.5 1.3 -1.5 0.9 -1.5 0.7 -1.5 0 -1.5 0.8 -1.5 -0.4 -1.5 -4.1 -1.5 1.8 -1.5 0.7 -1.5 1 -1.5 1.1 -1.5 0.4 -1.5 -5 -1.5 0.5 -1.5 0.7 -1.5 0.4 -1.5 0.6 -1.5 0.5 -1.5 0.7 -1.5 0.3 -1.5 -0.4 -1.5 0.9 -1.5 0.2 -1.5 -0.5 -1.5 -2.1 -1.5 -1.7 -1.5 1.4 -1.5 0.9 -1.5 0.7 -1.5 -2.4 -1.5 1 -1.5 1 -1.5 -0.1 -1.5 -0.8 -1.5 -1.8 -1.5 0 -1.5 2 -1.5 2.2 -1.5 1.1 -1.5 -5.3 -1.5 1.3 -1.5 0.7 -1.5 0.9 -1.5 0.1 -1.5 0.4 -1.5 -1.8 -1.5 -1.6 -1.5 1 -1.5 1 -1.5 0.5 -1.5 -0.2 -1.5 0.5 -1.5 0.8 -1.5 -0.3 -1.5 0.3 -1.5 0.1 -1.5 0.7 -1.5 -1.9 -1.5 -2.4 -1.5 1.1 -1.5 1.5 -1.5 1 -1.5 -3.7 -1.5 0.5 -1.5 0.7 -1.5 0.3 -1.5 0.5 -1.5 0.5 -1.5 0.1 -1.5 0 -1.5 -2.5 -1.5 1.5 -1.5 0.8 -1.5 -0.3 -1.5 -1.3 -1.5 0.8 -1.5 0.7 -1.5 0.2 -1.5 0.5 -1.5 0.2 -1.5 0.4 -1.5 0.8 -1.5 -0.4 -1.5 0.7 -1.5 -0.9 -1.5 -3 -1.5 -0.7 -1.5 0 -1.5 1.5 -1.5 1.4 -1.5 1.5 -1.5 -3.3 -1.5 1.3 -1.5 1.1 -1.5 0.7 -1.5 0.7 -1.5 -1.3 -1.5 -3.5 -1.5 0 -1.5 1.1 -1.5 1.5 -1.5 0.8 -1.5 0.5 -1.5 0.8 -1.5 -0.7 -1.5 -3.9 -1.5 0.6 -1.5 0.4 -1.5 0.6 -1.5 0.2 -1.5 0.3 -1.5 0.1 -1.5 0.3 -1.5 0.9 -1.5 -2.2 -1.5 -0.7 -1.5 0.9 -1.5 0.5 -1.5 0.5 -1.5 0.7 -1.5 0.2 -1.5 0.7 -1.5 0 -1.5 -0.5 -1.5 -3.6 -1.5 0.6 -1.5 0.8 -1.5 0.4 -1.5 0.7 -1.5 0.5 -1.5 -0.4 -1.5 -2.6 -1.5 1.4 -1.5 0.7 -1.5 1.1 -1.5 0.2 -1.5 0.5 -1.5 0.4 -1.5 -1.3 -1.5 -2.2 -1.5 1.1 -1.5 1.3 -1.5 0 -1.5 1.4 -1.5 0.8 -1.5 -0.5 -1.5 -5 -1.5 2.2 -1.5 1.4 -1.5 -0.7 -1.5 -1.4 -1.5 0.5 -1.5 0.9 -1.5 1 -1.5 0.6 -1.5 -2.8 -1.5 0.5 -1.5 1.9 -1.5 0.7 -1.5 -3.6 -1.5 1.4 -1.5 1.2 -1.5 0.7 -1.5 1 -1.5 -1.4 -1.5 -3.5 -1.5 1.3 -1.5 0.2 -1.5 1 -1.5 -1.7 -1.5 -1.4 -1.5 0.1 -1.5 1.6 -1.5 0.7 -1.5 0.8 -1.5 0.7 -1.5 0.9 -1.5 0.2 -1.5 -1.4 -1.5 -3.6 -1.5 0.1 -1.5 0.7 -1.5 1.1 -1.5 0.8 -1.5 0.7 -1.5 1.2 -1.5 1 -1.5 -0.6 -1.5 -4.9 -1.5 0 -1.5 -0.1 -1.5 1.6 -1.5 0.3 -1.5 0.7 -1.5 0.6 -1.5 0.3 -1.5 0.3 -1.5 1 -1.5 0.1 -1.5 -0.3 -1.5 0.5 -1.5 -1.9 -1.5 -3.2 -1.5 0 -1.5 0 -1.5 2.4 -1.5 0.6 -1.5 -0.4 -1.5 -2.5 -1.5 0 -1.5 1.5 -1.5 0.9 -1.5 0.8 -1.5 0.5 -1.5 0.1 -1.5 0.6 -1.5 -1.2 -1.5 -2.5 -1.5 1.1 -1.5 0.6 -1.5 0.6 -1.5 0.2 -1.5 0.7 -1.5 -0.5 -1.5 1.2 -1.5 -0.5 -1.5 0.7 -1.5 0.3 -1.5 -3.2 -1.5 -1.3 -1.5 0.9 -1.5 0.3 -1.5 0.6 -1.5 0.5 -1.5 -0.1 -1.5 0.7 -1.5 0.2 -1.5 -1.2 -1.5 -2.6 -1.5 0.9 -1.5 0.4 -1.5 0.1 -1.5 0.7 -1.5 -0.2 -1.5 0.8 -1.5 0.3 -1.5 0.2 -1.5 -0.2 -1.5 -0.1 -1.5 -1.2 -1.5 -1.8 -1.5 1.8 -1.5 1 -1.5 -0.6 -1.5 -2.3z" fill="#0b2224"/>
<rect x="2266" y="954.4" width="58.6" height="12" fill="#45cfd0"/>
<path d="M2268 964.4L2275.5 957.4V964.4z" fill="#0b2224"/>
<text x="2277.5" y="964.4" font-size="10.5" fill="#0b2224">-2.29 dB</text>
<rect x="737.2" y="974.9" width="253.3" height="45" fill="#15150f"/>
<rect x="737.7" y="975.4" width="252.3" height="44" fill="#44e2e2"/>
<rect x="739.3" y="977" width="249.1" height="40.8" fill="#2ea2a3"/>
<path d="M768.3 976.9v41M799.9 976.9v41M831.5 976.9v41M863.2 976.9v41M894.8 976.9v41M926.4 976.9v41M958.1 976.9v41" stroke="#25908f" stroke-width="1.2"/>
<path d="M739.7 996.9l0 -0.6 1.5 -1 1.5 -4.4 1.5 0.9 1.5 0.6 1.5 0.4 1.5 -0.2 1.5 1 1.5 0.6 1.5 0.6 1.5 1.6 1.5 -1.6 1.5 -1.7 1.5 0.9 1.5 0.6 1.5 0.8 1.5 -3 1.5 0.6 1.5 0.8 1.5 0.7 1.5 1.9 1.5 -3.3 1.5 -2 1.5 0.2 1.5 1 1.5 0.1 1.5 1 1.5 0.3 1.5 1.2 1.5 0.9 1.5 -4 1.5 1 1.5 0.3 1.5 1.5 1.5 1.9 1.5 -2.1 1.5 -2 1.5 0 1.5 0.3 1.5 1 1.5 -0.3 1.5 0.4 1.5 0.5 1.5 0.6 1.5 0.2 1.5 0.4 1.5 1.1 1.5 -1 1.5 -2.1 1.5 -1.5 1.5 0.4 1.5 0.5 1.5 0.2 1.5 0.4 1.5 0.2 1.5 0.7 1.5 -0.1 1.5 0.8 1.5 0.6 1.5 -1.5 1.5 -0.5 1.5 0.7 1.5 2.2 1.5 -5.9 1.5 0 1.5 1.3 1.5 0.3 1.5 1.2 1.5 0.7 1.5 1.6 1.5 1 1.5 -0.1 1.5 -1.9 1.5 -3.6 1.5 0.6 1.5 -0.2 1.5 0.6 1.5 -0.1 1.5 1.2 1.5 0.2 1.5 0 1.5 0.5 1.5 0.7 1.5 1.1 1.5 0.8 1.5 0 1.5 -1.5 1.5 -1.4 1.5 -0.2 1.5 0.5 1.5 -0.1 1.5 0.7 1.5 0.4 1.5 0 1.5 0.8 1.5 -0.8 1.5 -2.2 1.5 -0.1 1.5 1 1.5 0.6 1.5 0.9 1.5 0.1 1.5 -2.4 1.5 0.5 1.5 0.4 1.5 0.8 1.5 0.8 1.5 1.1 1.5 0 1.5 -1.7 1.5 -2.9 1.5 0.5 1.5 0.9 1.5 0.4 1.5 1.3 1.5 -1.1 1.5 -2.1 1.5 1 1.5 1.4 1.5 1.1 1.5 1.2 1.5 0 1.5 -1.3 1.5 -1.4 1.5 -0.2 1.5 0 1.5 0 1.5 0.4 1.5 0.3 1.5 0.1 1.5 0.6 1.5 -0.1 1.5 0.6 1.5 0.5 1.5 0.5 1.5 -0.1 1.5 -2 1.5 -2.8 1.5 0.2 1.5 -0.3 1.5 1.2 1.5 -0.4 1.5 0.4 1.5 0.8 1.5 -0.1 1.5 0.7 1.5 0.9 1.5 0.6 1.5 -1.6 1.5 -2.9 1.5 0 1.5 0.7 1.5 0.2 1.5 1.1 1.5 0.4 1.5 0.8 1.5 0.7 1.5 -0.2 1.5 -2.7 1.5 -0.4 1.5 0.6 1.5 1.1 1.5 0.2 1.5 1.2 1.5 1.4 1.3 0.1 0 1.1 -1.3 0.1 -1.5 1.3 -1.5 1.2 -1.5 0.2 -1.5 1.1 -1.5 0.6 -1.5 -0.4 -1.5 -2.6 -1.5 -0.2 -1.5 0.6 -1.5 0.8 -1.5 0.4 -1.5 1.1 -1.5 0.2 -1.5 0.7 -1.5 0 -1.5 -2.7 -1.5 -1.5 -1.5 0.6 -1.5 0.8 -1.5 0.7 -1.5 -0.1 -1.5 0.8 -1.5 0.4 -1.5 -0.4 -1.5 1.2 -1.5 -0.2 -1.5 0.2 -1.5 -2.7 -1.5 -1.9 -1.5 -0.1 -1.5 0.4 -1.5 0.5 -1.5 0.6 -1.5 -0.1 -1.5 0.6 -1.5 0.1 -1.5 0.3 -1.5 0.4 -1.5 0 -1.5 0 -1.5 -0.2 -1.5 -1.3 -1.5 -1.2 -1.5 0 -1.5 1.2 -1.5 1 -1.5 1.3 -1.5 1 -1.5 -2 -1.5 -1.1 -1.5 1.2 -1.5 0.3 -1.5 0.9 -1.5 0.5 -1.5 -2.7 -1.5 -1.6 -1.5 0 -1.5 1.1 -1.5 0.7 -1.5 0.8 -1.5 0.4 -1.5 0.5 -1.5 -2.3 -1.5 0.1 -1.5 0.9 -1.5 0.5 -1.5 0.9 -1.5 -0.1 -1.5 -2.1 -1.5 -0.7 -1.5 0.8 -1.5 0 -1.5 0.3 -1.5 0.7 -1.5 -0.1 -1.5 0.5 -1.5 -0.2 -1.5 -1.3 -1.5 -1.4 -1.5 0 -1.5 0.7 -1.5 1 -1.5 0.7 -1.5 0.5 -1.5 0 -1.5 0.2 -1.5 1.2 -1.5 -0.1 -1.5 0.6 -1.5 -0.2 -1.5 0.6 -1.5 -3.4 -1.5 -1.8 -1.5 0 -1.5 0.9 -1.5 1.5 -1.5 0.7 -1.5 1.2 -1.5 0.2 -1.5 1.2 -1.5 0 -1.5 -5.6 -1.5 2.1 -1.5 0.6 -1.5 -0.5 -1.5 -1.4 -1.5 0.6 -1.5 0.8 -1.5 -0.1 -1.5 0.6 -1.5 0.2 -1.5 0.4 -1.5 0.1 -1.5 0.5 -1.5 0.4 -1.5 -1.4 -1.5 -2 -1.5 -1 -1.5 1.1 -1.5 0.4 -1.5 0.2 -1.5 0.6 -1.5 0.4 -1.5 0.4 -1.5 -0.3 -1.5 0.9 -1.5 0.2 -1.5 0 -1.5 -1.9 -1.5 -2 -1.5 1.8 -1.5 1.4 -1.5 0.3 -1.5 0.9 -1.5 -3.8 -1.5 0.8 -1.5 1.1 -1.5 0.3 -1.5 0.9 -1.5 0.1 -1.5 1 -1.5 0.2 -1.5 -1.9 -1.5 -3.1 -1.5 1.8 -1.5 0.7 -1.5 0.8 -1.5 0.6 -1.5 -2.9 -1.5 0.8 -1.5 0.6 -1.5 0.9 -1.5 -1.6 -1.5 -1.5 -1.5 1.5 -1.5 0.6 -1.5 0.5 -1.5 1 -1.5 -0.2 -1.5 0.4 -1.5 0.6 -1.5 0.8 -1.5 -4.2 -1.5 -1z" fill="#0b2224"/>
<rect x="748.7" y="1003.4" width="58.6" height="12" fill="#45cfd0"/>
<path d="M750.7 1013.4L758.2 1006.4V1013.4z" fill="#0b2224"/>
<text x="760.2" y="1013.4" font-size="10.5" fill="#0b2224">-1.01 dB</text>
<rect x="1496.5" y="974.9" width="173" height="45" fill="#15150f"/>
<rect x="1497" y="975.4" width="172" height="44" fill="#44e2e2"/>
<rect x="1498.6" y="977" width="168.8" height="40.8" fill="#2ea2a3"/>
<path d="M1527.5 976.9v41M1559.1 976.9v41M1590.8 976.9v41M1622.4 976.9v41M1654 976.9v41" stroke="#25908f" stroke-width="1.2"/>
<path d="M1499 996.9l0 -1 2.5 0 2.5 0.2 2.5 -0.1 2.5 -0.3 2.5 -0.2 2.5 -0.1 2.5 -0.1 2.5 -0.1 2.5 -0.2 2.5 0.2 2.5 0.1 2.5 -0.2 2.5 0.1 2.5 -0.3 2.5 0.2 2.5 -0.1 2.5 -0.3 2.5 0.2 2.5 0.4 2.5 -0.3 2.5 0.3 2.5 0 2.5 0.3 2.5 -0.2 2.5 0.5 2.5 0 2.5 0.3 2.5 0 2.5 0.2 2.5 -0.1 2.5 -0.1 2.5 -0.1 2.5 -0.1 2.5 -0.3 2.5 0.1 2.5 -0.3 2.5 0.2 2.5 -0.2 2.5 -0.4 2.5 -0.2 2.5 0.1 2.5 0.2 2.5 0 2.5 0.1 2.5 -0.7 2.5 0.5 2.5 0.3 2.5 -0.6 2.5 0.2 2.5 0.6 2.5 -0.5 2.5 0.3 2.5 0 2.5 0.2 2.5 0.1 2.5 0.3 2.5 0.4 2.5 -0.1 2.5 -0.1 2.5 -0.3 2.5 -0.1 2.5 -0.2 2.5 -0.1 2.5 -0.3 2.5 -0.2 2.5 0.2 2 -0.2 0 4 -2 -0.2 -2.5 0.2 -2.5 -0.2 -2.5 -0.2 -2.5 -0.1 -2.5 -0.2 -2.5 -0.1 -2.5 -0.3 -2.5 -0.1 -2.5 -0.1 -2.5 0.3 -2.5 0.2 -2.5 0.1 -2.5 0.2 -2.5 0 -2.5 0.3 -2.5 -0.5 -2.5 0.6 -2.5 0.2 -2.5 -0.5 -2.5 0.2 -2.5 0.5 -2.5 -0.6 -2.5 0.1 -2.5 0 -2.5 0.2 -2.5 0.1 -2.5 -0.2 -2.5 -0.4 -2.5 -0.2 -2.5 0.2 -2.5 -0.3 -2.5 0.1 -2.5 -0.3 -2.5 -0.1 -2.5 -0.1 -2.5 -0.1 -2.5 -0.1 -2.5 0.2 -2.5 0 -2.5 0.3 -2.5 0 -2.5 0.5 -2.5 -0.2 -2.5 0.3 -2.5 0 -2.5 0.3 -2.5 -0.3 -2.5 0.4 -2.5 0.2 -2.5 -0.3 -2.5 -0.1 -2.5 0.1 -2.5 -0.3 -2.5 0.1 -2.5 -0.1 -2.5 0.1 -2.5 0.2 -2.5 -0.2 -2.5 -0.1 -2.5 -0.1 -2.5 -0.1 -2.5 -0.2 -2.5 -0.3 -2.5 -0.1 -2.5 0.2 -2.5 0z" fill="#0b2224"/>
<rect x="1508" y="1003.4" width="58.6" height="12" fill="#45cfd0"/>
<path d="M1510 1013.4L1517.5 1006.4V1013.4z" fill="#0b2224"/>
<text x="1519.5" y="1013.4" font-size="10.5" fill="#0b2224">-1.01 dB</text>
<rect x="1669.5" y="974.9" width="8" height="45" fill="#15150f"/>
<rect x="1670" y="975.4" width="7" height="44" fill="#44e2e2"/>
<rect x="1671.6" y="977" width="3.8" height="40.8" fill="#2ea2a3"/>
<path d="M1672 996.9l0 -0.6 1.5 -1.2 0.5 -1.4 0 6.3 -0.5 -1.3 -1.5 -1.2z" fill="#0b2224"/>
<rect x="1679.5" y="974.9" width="7" height="45" fill="#15150f"/>
<rect x="1680" y="975.4" width="6" height="44" fill="#44e2e2"/>
<rect x="1681.6" y="977" width="2.8" height="40.8" fill="#2ea2a3"/>
<path d="M1682 996.9l0 -0.7 1 0.1 0 1.1 -1 0.1z" fill="#0b2224"/>
<rect x="1685.5" y="974.9" width="64" height="45" fill="#15150f"/>
<rect x="1686" y="975.4" width="63" height="44" fill="#44e2e2"/>
<rect x="1687.6" y="977" width="59.8" height="40.8" fill="#2ea2a3"/>
<path d="M1717.3 976.9v41" stroke="#25908f" stroke-width="1.2"/>
<path d="M1689 996.9l0 -6.4 1 0 1 0.4 1 0.3 1 0.9 1 0.5 1 -0.1 1 0.7 1 0.8 1 0.4 1 0.3 1 0.8 1 -0.1 1 -4.2 1 -1.6 1 0.5 1 0.6 1 -0.1 1 1.3 1 0.2 1 0 1 0.3 1 0.5 1 0.3 1 0.5 1 0.7 1 0.8 1 0.5 1 -1.1 1 -4.7 1 -0.1 1 1.3 1 -0.3 1 0.1 1 0.2 1 1.4 1 -0.1 1 0.1 1 0.9 1 0 1 0.5 1 0.8 1 0.4 1 0.7 1 -1.8 1 -3.9 1 -0.4 1 0.3 1 1.5 1 0.3 1 -0.4 1 0.8 1 0.2 1 0.4 1 0.3 1 0.6 1 0.3 1 0.8 0 4.1 -1 0.8 -1 0.3 -1 0.6 -1 0.3 -1 0.4 -1 0.2 -1 0.8 -1 -0.4 -1 0.3 -1 1.5 -1 0.3 -1 -0.4 -1 -3.7 -1 -1.7 -1 0.7 -1 0.4 -1 0.8 -1 0.5 -1 0 -1 0.9 -1 0.1 -1 -0.1 -1 1.3 -1 0.2 -1 0.1 -1 -0.3 -1 1.3 -1 -0.1 -1 -4.5 -1 -1 -1 0.4 -1 0.8 -1 0.6 -1 0.5 -1 0.3 -1 0.5 -1 0.3 -1 0 -1 0.2 -1 1.2 -1 -0.1 -1 0.6 -1 0.5 -1 -1.5 -1 -4 -1 -0.1 -1 0.7 -1 0.3 -1 0.3 -1 0.7 -1 0.7 -1 -0.1 -1 0.5 -1 0.8 -1 0.3 -1 0.4 -1 0z" fill="#0b2224"/>
<rect x="1697" y="1003.4" width="12" height="12" fill="#45cfd0"/>
<path d="M1699 1013.4L1706.5 1006.4V1013.4z" fill="#0b2224"/>
<rect x="1749.5" y="974.9" width="506" height="45" fill="#15150f"/>
<rect x="1750" y="975.4" width="505" height="44" fill="#44e2e2"/>
<rect x="1751.6" y="977" width="501.8" height="40.8" fill="#2ea2a3"/>
<path d="M1780.6 976.9v41M1812.2 976.9v41M1843.8 976.9v41M1875.5 976.9v41M1907.1 976.9v41M1938.7 976.9v41M1970.4 976.9v41M2002 976.9v41M2033.6 976.9v41M2065.3 976.9v41M2096.9 976.9v41M2128.5 976.9v41M2160.2 976.9v41M2191.8 976.9v41M2223.4 976.9v41" stroke="#25908f" stroke-width="1.2"/>
<path d="M1752 996.9l0 -0.7 1.5 -3 1.5 -0.6 1.5 1.4 1.5 2.3 1.5 0 1.5 0 1.5 -3.5 1.5 0.6 1.5 0.1 1.5 0.8 1.5 0.7 1.5 1.4 1.5 -2.2 1.5 -1.5 1.5 0.3 1.5 0.3 1.5 -0.1 1.5 0.4 1.5 0 1.5 0.5 1.5 0.4 1.5 0.3 1.5 0.5 1.5 1.1 1.5 -1.6 1.5 -3.7 1.5 0.5 1.5 0.1 1.5 1.2 1.5 0.8 1.5 0.9 1.5 1.9 1.5 -1.6 1.5 -3.5 1.5 1.2 1.5 -0.3 1.5 0.9 1.5 1.1 1.5 0.7 1.5 1.6 1.5 -4.6 1.5 1.6 1.5 1.4 1.5 -0.2 1.5 -1.7 1.5 -0.2 1.5 0.8 1.5 0.3 1.5 0.3 1.5 0.6 1.5 0.2 1.5 0.6 1.5 -0.3 1.5 -3.1 1.5 -0.3 1.5 0.3 1.5 0.8 1.5 0.7 1.5 -0.1 1.5 0.5 1.5 0.7 1.5 1.4 1.5 -0.8 1.5 -2 1.5 0.1 1.5 0.1 1.5 0.7 1.5 0.2 1.5 0.6 1.5 1.2 1.5 -2.1 1.5 -1.6 1.5 0.1 1.5 -0.2 1.5 0.8 1.5 0.2 1.5 0.5 1.5 0 1.5 0.4 1.5 0.3 1.5 0.6 1.5 0.8 1.5 0 1.5 0 1.5 -3.3 1.5 0.7 1.5 1.6 1.5 0.9 1.5 0.1 1.5 -2 1.5 -1.1 1.5 -0.1 1.5 0.8 1.5 0.4 1.5 0.4 1.5 0.6 1.5 -0.3 1.5 -2.9 1.5 -0.3 1.5 0.5 1.5 0.3 1.5 0.3 1.5 0.4 1.5 1 1.5 0.6 1.5 1.3 1.5 -5.3 1.5 0.3 1.5 0.8 1.5 0 1.5 1.2 1.5 0.7 1.5 1.4 1.5 -1.6 1.5 -0.3 1.5 0.5 1.5 0.4 1.5 0.4 1.5 1 1.5 -2.3 1.5 -2.4 1.5 1.4 1.5 0 1.5 1 1.5 0.6 1.5 1.4 1.5 -0.1 1.5 -3.7 1.5 -0.2 1.5 0.3 1.5 0.7 1.5 0.4 1.5 1.2 1.5 0.2 1.5 0.6 1.5 1.7 1.5 -1.5 1.5 -3.9 1.5 0.9 1.5 1.2 1.5 0.1 1.5 0.8 1.5 0.6 1.5 1.9 1.5 0 1.5 0 1.5 -4.9 1.5 0.7 1.5 1 1.5 1.8 1.5 1.5 1.5 0 1.5 -1.3 1.5 -2.4 1.5 0.2 1.5 0.5 1.5 0.7 1.5 0.3 1.5 0.9 1.5 1.1 1.5 -1.5 1.5 -3.7 1.5 1 1.5 0 1.5 1 1.5 1 1.5 0.4 1.5 1.8 1.5 0 1.5 0.1 1.5 -2.4 1.5 -0.7 1.5 -0.1 1.5 0.2 1.5 0.6 1.5 0.5 1.5 0.1 1.5 0.4 1.5 0.7 1.5 0.5 1.5 -4.8 1.5 1.2 1.5 1.9 1.5 0.4 1.5 -1.6 1.5 -0.2 1.5 0.2 1.5 0.6 1.5 -0.1 1.5 0.9 1.5 0.1 1.5 0.6 1.5 0.9 1.5 -4.1 1.5 -0.7 1.5 1.2 1.5 -0.1 1.5 1 1.5 1.7 1.5 0.9 1.5 -1.8 1.5 -1.5 1.5 0.3 1.5 -0.3 1.5 0.5 1.5 -0.1 1.5 0.2 1.5 0.8 1.5 0.1 1.5 0.3 1.5 0.5 1.5 1 1.5 -3.8 1.5 1.4 1.5 1.2 1.5 -1.4 1.5 -1.9 1.5 0.7 1.5 0.8 1.5 0.3 1.5 0.8 1.5 0.9 1.5 1 1.5 -3.4 1.5 0.1 1.5 0.2 1.5 0.5 1.5 1 1.5 0.9 1.5 0.8 1.5 0 1.5 -2 1.5 -2.4 1.5 0.8 1.5 0.6 1.5 -0.1 1.5 0.6 1.5 0.1 1.5 0.7 1.5 0.8 1.5 0.9 1.5 0 1.5 -1.8 1.5 -1 1.5 0.5 1.5 0.5 1.5 1.1 1.5 -1.9 1.5 -0.8 1.5 -0.4 1.5 0.9 1.5 0.2 1.5 0.6 1.5 1.2 1.5 -2.4 1.5 -1.5 1.5 1.5 1.5 3.5 1.5 -3.4 1.5 0.2 1.5 0 1.5 0.5 1.5 0.8 1.5 0.2 1.5 1.1 1.5 0.6 1.5 -5.4 1.5 1.1 1.5 1 1.5 1.6 1.5 1.7 1.5 -3.3 1.5 -0.8 1.5 0.6 1.5 0.8 1.5 1 1.5 0.8 1.5 -3.1 1.5 0.2 1.5 1.1 1.5 0.6 1.5 2.1 1.5 0.1 1.5 0 1.5 -4.7 1.5 0.7 1.5 0.3 1.5 1.2 1.5 0.9 1.5 1.6 1.5 0 1.5 0 1.5 -3.7 1.5 0.8 1.5 1.6 1.5 -0.9 1.5 -2 1.5 0.2 1.5 0.9 1.5 -0.4 1.5 0.8 1.5 0.5 1.5 0.6 1.5 0.5 1.5 -1.1 1.5 -2.5 1.5 0.1 1.5 1.2 1.5 1.1 1.5 0.7 1.5 1.8 1.5 -0.1 1.5 -0.5 1.5 -1.6 1.5 -1 1.5 0.3 1.5 0 1.5 0.1 1.5 0.7 1.5 0.3 1.5 -0.3 1.5 0.7 1.5 0.2 1.5 0.5 1.5 0.7 1.5 -0.1 1.5 -1.4 1.5 -3.4 1.5 1.2 1.5 0.3 1.5 0.8 1.5 0.1 1.5 0.7 0.5 0.5 0 3.5 -0.5 0.5 -1.5 0.7 -1.5 0.1 -1.5 0.8 -1.5 0.3 -1.5 1.1 -1.5 -3.3 -1.5 -1.4 -1.5 0 -1.5 0.7 -1.5 0.5 -1.5 0.2 -1.5 0.7 -1.5 -0.2 -1.5 0.3 -1.5 0.6 -1.5 0.1 -1.5 0 -1.5 0.3 -1.5 -0.9 -1.5 -1.5 -1.5 -0.5 -1.5 -0.1 -1.5 1.7 -1.5 0.7 -1.5 1 -1.5 1.1 -1.5 0.1 -1.5 -2.4 -1.5 -1.1 -1.5 0.5 -1.5 0.5 -1.5 0.5 -1.5 0.8 -1.5 -0.4 -1.5 0.8 -1.5 0.2 -1.5 -1.9 -1.5 -0.9 -1.5 1.5 -1.5 0.8 -1.5 -3.5 -1.5 0 -1.5 0 -1.5 1.5 -1.5 0.8 -1.5 1.1 -1.5 0.3 -1.5 0.7 -1.5 -4.5 -1.5 0 -1.5 0.1 -1.5 2 -1.5 0.5 -1.5 1 -1.5 0.2 -1.5 -2.9 -1.5 0.8 -1.5 0.9 -1.5 0.7 -1.5 0.6 -1.5 -0.7 -1.5 -3.2 -1.5 1.6 -1.5 1.5 -1.5 0.9 -1.5 1 -1.5 -5.1 -1.5 0.6 -1.5 1.1 -1.5 0.2 -1.5 0.8 -1.5 0.5 -1.5 0 -1.5 0.2 -1.5 -3.2 -1.5 3.3 -1.5 1.4 -1.5 -1.4 -1.5 -2.3 -1.5 1.1 -1.5 0.5 -1.5 0.2 -1.5 0.9 -1.5 -0.4 -1.5 -0.8 -1.5 -1.8 -1.5 1 -1.5 0.5 -1.5 0.5 -1.5 -1 -1.5 -1.7 -1.5 0 -1.5 0.9 -1.5 0.7 -1.5 0.6 -1.5 0.1 -1.5 0.5 -1.5 -0.1 -1.5 0.6 -1.5 0.8 -1.5 -2.3 -1.5 -1.9 -1.5 0 -1.5 0.8 -1.5 0.8 -1.5 0.9 -1.5 0.5 -1.5 0.2 -1.5 0.1 -1.5 -3.2 -1.5 0.9 -1.5 0.8 -1.5 0.8 -1.5 0.3 -1.5 0.7 -1.5 0.6 -1.5 -1.8 -1.5 -1.3 -1.5 1.1 -1.5 1.3 -1.5 -3.6 -1.5 0.9 -1.5 0.5 -1.5 0.3 -1.5 0.1 -1.5 0.7 -1.5 0.2 -1.5 -0.1 -1.5 0.5 -1.5 -0.3 -1.5 0.3 -1.5 -1.4 -1.5 -1.7 -1.5 0.9 -1.5 1.6 -1.5 1 -1.5 -0.1 -1.5 1.1 -1.5 -0.7 -1.5 -3.9 -1.5 0.8 -1.5 0.5 -1.5 0.1 -1.5 0.8 -1.5 -0.1 -1.5 0.6 -1.5 0.2 -1.5 -0.2 -1.5 -1.5 -1.5 0.3 -1.5 1.8 -1.5 1.1 -1.5 -4.6 -1.5 0.5 -1.5 0.7 -1.5 0.4 -1.5 0.1 -1.5 0.5 -1.5 0.5 -1.5 0.2 -1.5 -0.1 -1.5 -0.6 -1.5 -2.3 -1.5 0.1 -1.5 0 -1.5 1.7 -1.5 0.4 -1.5 0.9 -1.5 0.9 -1.5 0 -1.5 1 -1.5 -3.6 -1.5 -1.4 -1.5 1 -1.5 0.9 -1.5 0.3 -1.5 0.7 -1.5 0.5 -1.5 0.2 -1.5 -2.3 -1.5 -1.3 -1.5 0 -1.5 1.4 -1.5 1.7 -1.5 0.9 -1.5 0.6 -1.5 -4.7 -1.5 0 -1.5 0 -1.5 1.8 -1.5 0.5 -1.5 0.8 -1.5 0.1 -1.5 1.1 -1.5 0.9 -1.5 -3.7 -1.5 -1.5 -1.5 1.6 -1.5 0.6 -1.5 0.2 -1.5 1.2 -1.5 0.4 -1.5 0.7 -1.5 0.3 -1.5 -0.2 -1.5 -3.5 -1.5 -0.1 -1.5 1.3 -1.5 0.6 -1.5 0.9 -1.5 0 -1.5 1.3 -1.5 -2.3 -1.5 -2.2 -1.5 0.9 -1.5 0.4 -1.5 0.4 -1.5 0.4 -1.5 -0.3 -1.5 -1.5 -1.5 1.3 -1.5 0.7 -1.5 1.1 -1.5 0 -1.5 0.8 -1.5 0.3 -1.5 -5.1 -1.5 1.3 -1.5 0.6 -1.5 0.9 -1.5 0.4 -1.5 0.3 -1.5 0.3 -1.5 0.4 -1.5 -0.2 -1.5 -2.8 -1.5 -0.3 -1.5 0.6 -1.5 0.3 -1.5 0.4 -1.5 0.7 -1.5 -0.1 -1.5 -1.1 -1.5 -1.9 -1.5 0.1 -1.5 0.9 -1.5 1.5 -1.5 0.7 -1.5 -3.1 -1.5 0 -1.5 0 -1.5 0.8 -1.5 0.6 -1.5 0.3 -1.5 0.4 -1.5 0 -1.5 0.4 -1.5 0.2 -1.5 0.8 -1.5 -0.2 -1.5 0.1 -1.5 -1.5 -1.5 -2 -1.5 1.1 -1.5 0.6 -1.5 0.2 -1.5 0.6 -1.5 0.1 -1.5 0.1 -1.5 -1.9 -1.5 -0.7 -1.5 1.3 -1.5 0.7 -1.5 0.4 -1.5 -0.1 -1.5 0.7 -1.5 0.8 -1.5 0.3 -1.5 -0.2 -1.5 -3 -1.5 -0.3 -1.5 0.6 -1.5 0.2 -1.5 0.5 -1.5 0.3 -1.5 0.3 -1.5 0.7 -1.5 -0.2 -1.5 -1.6 -1.5 -0.2 -1.5 1.4 -1.5 1.5 -1.5 -4.3 -1.5 1.5 -1.5 0.6 -1.5 1.1 -1.5 0.8 -1.5 -0.3 -1.5 1.2 -1.5 -3.3 -1.5 -1.5 -1.5 1.8 -1.5 0.9 -1.5 0.8 -1.5 1.1 -1.5 0.1 -1.5 0.4 -1.5 -3.6 -1.5 -1.5 -1.5 1 -1.5 0.5 -1.5 0.3 -1.5 0.4 -1.5 0.5 -1.5 0 -1.5 0.4 -1.5 -0.1 -1.5 0.3 -1.5 0.3 -1.5 -1.4 -1.5 -2.1 -1.5 1.3 -1.5 0.6 -1.5 0.8 -1.5 0.1 -1.5 0.6 -1.5 -3.4 -1.5 0 -1.5 0 -1.5 2.1 -1.5 1.4 -1.5 -0.6 -1.5 -2.8z" fill="#0b2224"/>
<rect x="1761" y="1003.4" width="58.6" height="12" fill="#45cfd0"/>
<path d="M1763 1013.4L1770.5 1006.4V1013.4z" fill="#0b2224"/>
<text x="1772.5" y="1013.4" font-size="10.5" fill="#0b2224">-4.21 dB</text>
<rect x="2254.5" y="974.9" width="507" height="45" fill="#15150f"/>
<rect x="2255" y="975.4" width="506" height="44" fill="#44e2e2"/>
<rect x="2256.6" y="977" width="502.8" height="40.8" fill="#2ea2a3"/>
<path d="M2286.7 976.9v41M2318.3 976.9v41M2350 976.9v41M2381.6 976.9v41M2413.2 976.9v41M2444.9 976.9v41M2476.5 976.9v41M2508.1 976.9v41M2539.8 976.9v41M2571.4 976.9v41M2603 976.9v41M2634.7 976.9v41M2666.3 976.9v41M2697.9 976.9v41M2729.6 976.9v41" stroke="#25908f" stroke-width="1.2"/>
<path d="M2257 996.9l0 -0.6 1.5 -3.5 1.5 -0.4 1.5 1 1.5 2.8 1.5 0 1.5 0.1 1.5 -4.9 1.5 0.3 1.5 1 1.5 0.6 1.5 1.2 1.5 1.7 1.5 0.1 1.5 -0.1 1.5 -4 1.5 1.1 1.5 1.7 1.5 -1.5 1.5 -2 1.5 0.4 1.5 1.1 1.5 0.5 1.5 0.6 1.5 0.7 1.5 1.4 1.5 -1.9 1.5 -2.5 1.5 0.5 1.5 -0.2 1.5 0.9 1.5 0.1 1.5 0.5 1.5 0.9 1.5 0.6 1.5 -2.5 1.5 -0.6 1.5 1.2 1.5 2.9 1.5 -1.3 1.5 -2.9 1.5 0.9 1.5 0.6 1.5 0.8 1.5 0.8 1.5 0 1.5 -3.2 1.5 -0.1 1.5 0.4 1.5 0.9 1.5 -0.2 1.5 0.8 1.5 0.7 1.5 0.6 1.5 1.1 1.5 -2 1.5 -3.1 1.5 1.4 1.5 0.1 1.5 1 1.5 1.2 1.5 0.1 1.5 -3 1.5 1 1.5 0.4 1.5 0.7 1.5 -0.1 1.5 0.9 1.5 1.4 1.5 -3.2 1.5 -2.3 1.5 1 1.5 -0.3 1.5 0.6 1.5 0.9 1.5 0 1.5 0.6 1.5 0.5 1.5 0.1 1.5 0.8 1.5 1.4 1.5 -0.8 1.5 -2.6 1.5 -1.4 1.5 0.1 1.5 0.4 1.5 0.2 1.5 0.2 1.5 0.9 1.5 0.6 1.5 -0.1 1.5 0.6 1.5 1 1.5 1 1.5 -4 1.5 0.5 1.5 1.2 1.5 0.8 1.5 1.5 1.5 -3.2 1.5 -0.1 1.5 0.6 1.5 0 1.5 0.9 1.5 0.4 1.5 1 1.5 -1.5 1.5 -1.7 1.5 0.4 1.5 0.5 1.5 0 1.5 0.2 1.5 0.8 1.5 0.3 1.5 0.6 1.5 -1.7 1.5 -2.4 1.5 1.4 1.5 0.4 1.5 2.1 1.5 1.1 1.5 0 1.5 -3.4 1.5 -1 1.5 1.4 1.5 0 1.5 1.2 1.5 0.9 1.5 -1.2 1.5 -0.6 1.5 0.4 1.5 -0.1 1.5 0.2 1.5 0.6 1.5 0.8 1.5 0.7 1.5 -2.2 1.5 -3.6 1.5 0.7 1.5 1 1.5 0.1 1.5 0.6 1.5 1 1.5 0.1 1.5 1.2 1.5 1.2 1.5 -0.1 1.5 -2.4 1.5 -1.7 1.5 0.7 1.5 1 1.5 1.4 1.5 -1.4 1.5 -2.3 1.5 0.7 1.5 0.7 1.5 -0.3 1.5 0.4 1.5 0.6 1.5 0.9 1.5 0.8 1.5 -0.6 1.5 -3.1 1.5 1.1 1.5 0.2 1.5 0.1 1.5 0.7 1.5 0.8 1.5 1.5 1.5 -5.1 1.5 1.7 1.5 1.7 1.5 1.6 1.5 0 1.5 -3.1 1.5 -0.6 1.5 1 1.5 0.2 1.5 0.8 1.5 1.2 1.5 -3.2 1.5 -1.3 1.5 1.1 1.5 0.4 1.5 1.6 1.5 0.9 1.5 1.2 1.5 0 1.5 -3.2 1.5 0.7 1.5 1.1 1.5 0.2 1.5 -2.6 1.5 0.2 1.5 0 1.5 0.8 1.5 -0.1 1.5 0.4 1.5 0.9 1.5 0.5 1.5 1.2 1.5 -1.9 1.5 -2.9 1.5 0.6 1.5 0.6 1.5 0.9 1.5 1.1 1.5 1.6 1.5 -1.6 1.5 -2 1.5 -0.3 1.5 0.1 1.5 0.3 1.5 0.6 1.5 0.2 1.5 0.2 1.5 0.7 1.5 0.1 1.5 0.7 1.5 0.7 1.5 0.5 1.5 0 1.5 -3 1.5 -3 1.5 1.1 1.5 0.2 1.5 1 1.5 0.4 1.5 0.5 1.5 0.8 1.5 0.9 1.5 -1.7 1.5 -3 1.5 2.1 1.5 1.1 1.5 1.3 1.5 1.3 1.5 0 1.5 -3.2 1.5 -0.1 1.5 0.7 1.5 0.9 1.5 1.7 1.5 -5.6 1.5 0.4 1.5 0.8 1.5 0.2 1.5 0.9 1.5 1.1 1.5 1.3 1.5 1 1.5 -3.9 1.5 -1.3 1.5 0.9 1.5 0.1 1.5 0.6 1.5 0.3 1.5 1.1 1.5 0.7 1.5 0.7 1.5 -3.8 1.5 -0.1 1.5 0.1 1.5 1.3 1.5 0.6 1.5 1.7 1.5 1 1.5 -6.1 1.5 0.9 1.5 1.6 1.5 0.6 1.5 0.8 1.5 2.4 1.5 0 1.5 -0.1 1.5 -3 1.5 -0.1 1.5 0.7 1.5 0.1 1.5 0.3 1.5 0.7 1.5 0.6 1.5 -3 1.5 -1.7 1.5 1.3 1.5 0.9 1.5 0.9 1.5 1 1.5 1.1 1.5 -3 1.5 -1.2 1.5 -0.1 1.5 0.6 1.5 0.8 1.5 0.6 1.5 0.5 1.5 0.2 1.5 1 1.5 -1.2 1.5 -3.1 1.5 -0.5 1.5 0.6 1.5 1 1.5 -0.3 1.5 0.8 1.5 0.1 1.5 0.7 1.5 0.3 1.5 0.5 1.5 1.1 1.5 -3.2 1.5 0.5 1.5 1.6 1.5 -0.9 1.5 -3 1.5 1.4 1.5 1.5 1.5 1.5 1.5 -1.1 1.5 -1.2 1.5 0.3 1.5 0.1 1.5 0.8 1.5 0.7 1.5 0.6 1.5 0.9 1.5 0.1 1.5 -0.8 1.5 -1.9 1.5 -1.2 1.5 0.7 1.5 0 1.5 0 1.5 0.6 1.5 0.1 0 5.9 -1.5 0.1 -1.5 0.6 -1.5 0 -1.5 0 -1.5 0.6 -1.5 -1.1 -1.5 -1.8 -1.5 -0.7 -1.5 0.1 -1.5 0.8 -1.5 0.6 -1.5 0.6 -1.5 0.7 -1.5 0.1 -1.5 0.3 -1.5 -1.1 -1.5 -1 -1.5 1.4 -1.5 1.5 -1.5 1.3 -1.5 -2.8 -1.5 -0.9 -1.5 1.6 -1.5 0.5 -1.5 -3.1 -1.5 1 -1.5 0.5 -1.5 0.3 -1.5 0.6 -1.5 0.1 -1.5 0.7 -1.5 -0.3 -1.5 0.9 -1.5 0.5 -1.5 -0.5 -1.5 -2.9 -1.5 -1.1 -1.5 0.9 -1.5 0.2 -1.5 0.4 -1.5 0.6 -1.5 0.7 -1.5 0.5 -1.5 -0.1 -1.5 -1.1 -1.5 -2.8 -1.5 1 -1.5 1 -1.5 0.9 -1.5 0.8 -1.5 1.2 -1.5 -1.6 -1.5 -2.9 -1.5 0.6 -1.5 0.6 -1.5 0.3 -1.5 0.1 -1.5 0.7 -1.5 -0.1 -1.5 -2.8 -1.5 0 -1.5 0 -1.5 2.3 -1.5 0.7 -1.5 0.5 -1.5 1.5 -1.5 0.8 -1.5 -5.8 -1.5 1 -1.5 1.6 -1.5 0.5 -1.5 1.2 -1.5 0.1 -1.5 -0.1 -1.5 -3.6 -1.5 0.7 -1.5 0.7 -1.5 1 -1.5 0.3 -1.5 0.5 -1.5 0.1 -1.5 0.8 -1.5 -1.2 -1.5 -3.7 -1.5 1 -1.5 1.2 -1.5 1 -1.5 0.9 -1.5 0.2 -1.5 0.7 -1.5 0.3 -1.5 -5.3 -1.5 1.6 -1.5 0.9 -1.5 0.7 -1.5 -0.1 -1.5 -3.1 -1.5 0 -1.5 1.2 -1.5 1.3 -1.5 1.1 -1.5 2 -1.5 -2.8 -1.5 -1.6 -1.5 0.9 -1.5 0.7 -1.5 0.5 -1.5 0.4 -1.5 0.9 -1.5 0.2 -1.5 1 -1.5 -2.9 -1.5 -2.9 -1.5 0 -1.5 0.5 -1.5 0.6 -1.5 0.6 -1.5 0.1 -1.5 0.6 -1.5 0.2 -1.5 0.2 -1.5 0.5 -1.5 0.3 -1.5 0.1 -1.5 -0.3 -1.5 -1.9 -1.5 -1.5 -1.5 1.5 -1.5 1.1 -1.5 0.9 -1.5 0.5 -1.5 0.5 -1.5 -2.7 -1.5 -1.8 -1.5 1.2 -1.5 0.5 -1.5 0.9 -1.5 0.4 -1.5 -0.1 -1.5 0.7 -1.5 0 -1.5 0.2 -1.5 -2.5 -1.5 0.2 -1.5 1 -1.5 0.7 -1.5 -3 -1.5 0 -1.5 1.1 -1.5 0.8 -1.5 1.5 -1.5 0.4 -1.5 1.1 -1.5 -1.3 -1.5 -3.1 -1.5 1.1 -1.5 0.8 -1.5 0.2 -1.5 1 -1.5 -0.6 -1.5 -2.9 -1.5 0 -1.5 1.6 -1.5 1.6 -1.5 1.6 -1.5 -4.8 -1.5 1.5 -1.5 0.7 -1.5 0.7 -1.5 0.1 -1.5 0.2 -1.5 1.1 -1.5 -3 -1.5 -0.5 -1.5 0.8 -1.5 0.8 -1.5 0.5 -1.5 0.4 -1.5 -0.3 -1.5 0.6 -1.5 0.7 -1.5 -2.1 -1.5 -1.4 -1.5 1.4 -1.5 1 -1.5 0.7 -1.5 -1.6 -1.5 -2.2 -1.5 -0.1 -1.5 1.1 -1.5 1.2 -1.5 0.1 -1.5 1 -1.5 0.5 -1.5 0.1 -1.5 0.9 -1.5 0.6 -1.5 -3.4 -1.5 -2.1 -1.5 0.7 -1.5 0.7 -1.5 0.6 -1.5 0.2 -1.5 0 -1.5 0.4 -1.5 -0.5 -1.5 -1.1 -1.5 0.9 -1.5 1.1 -1.5 0 -1.5 1.3 -1.5 -0.9 -1.5 -3.2 -1.5 0 -1.5 1 -1.5 2 -1.5 0.4 -1.5 1.3 -1.5 -2.3 -1.5 -1.7 -1.5 0.6 -1.5 0.3 -1.5 0.8 -1.5 0.2 -1.5 0 -1.5 0.5 -1.5 0.4 -1.5 -1.6 -1.5 -1.4 -1.5 0.9 -1.5 0.4 -1.5 0.8 -1.5 0 -1.5 0.6 -1.5 -0.1 -1.5 -3.1 -1.5 1.4 -1.5 0.8 -1.5 1.1 -1.5 0.4 -1.5 -3.8 -1.5 0.9 -1.5 1 -1.5 0.6 -1.5 -0.1 -1.5 0.5 -1.5 0.9 -1.5 0.2 -1.5 0.2 -1.5 0.4 -1.5 0.1 -1.5 -1.3 -1.5 -2.5 -1.5 -0.8 -1.5 1.4 -1.5 0.8 -1.5 0.1 -1.5 0.5 -1.5 0.6 -1.5 0 -1.5 0.8 -1.5 0.5 -1.5 -0.3 -1.5 1 -1.5 -2.2 -1.5 -3.1 -1.5 1.3 -1.5 0.8 -1.5 -0.1 -1.5 0.7 -1.5 0.3 -1.5 1 -1.5 -2.9 -1.5 0.1 -1.5 1.2 -1.5 1 -1.5 0.1 -1.5 1.4 -1.5 -2.9 -1.5 -1.9 -1.5 1 -1.5 0.6 -1.5 0.7 -1.5 0.7 -1.5 -0.2 -1.5 0.9 -1.5 0.4 -1.5 -0.1 -1.5 -3 -1.5 0 -1.5 0.8 -1.5 0.8 -1.5 0.5 -1.5 0.9 -1.5 -2.7 -1.5 -1.2 -1.5 2.8 -1.5 1.1 -1.5 -0.5 -1.5 -2.3 -1.5 0.6 -1.5 0.9 -1.5 0.5 -1.5 0.1 -1.5 0.9 -1.5 -0.2 -1.5 0.5 -1.5 -2.4 -1.5 -1.8 -1.5 1.3 -1.5 0.6 -1.5 0.6 -1.5 0.5 -1.5 1.1 -1.5 0.4 -1.5 -1.9 -1.5 -1.4 -1.5 1.6 -1.5 1.1 -1.5 -3.8 -1.5 -0.1 -1.5 0.1 -1.5 1.6 -1.5 1.1 -1.5 0.6 -1.5 1 -1.5 0.2 -1.5 -4.7 -1.5 0.1 -1.5 0 -1.5 2.6 -1.5 1 -1.5 -0.4 -1.5 -3.4z" fill="#0b2224"/>
<rect x="2266" y="1003.4" width="58.6" height="12" fill="#45cfd0"/>
<path d="M2268 1013.4L2275.5 1006.4V1013.4z" fill="#0b2224"/>
<text x="2277.5" y="1013.4" font-size="10.5" fill="#0b2224">-2.29 dB</text>
<rect x="737.2" y="1023.8" width="222.1" height="45" fill="#15150f"/>
<rect x="737.7" y="1024.3" width="221.1" height="44" fill="#44e2e2"/>
<rect x="739.3" y="1025.9" width="217.9" height="40.8" fill="#2ea2a3"/>
<path d="M768.3 1025.8v41M799.9 1025.8v41M831.5 1025.8v41M863.2 1025.8v41M894.8 1025.8v41M926.4 1025.8v41" stroke="#25908f" stroke-width="1.2"/>
<path d="M739.7 1045.8l0 -1.9 2.5 -0.2 2.5 -0.3 2.5 0 2.5 0.4 2.5 -0.3 2.5 0.7 2.5 0.1 2.5 -0.3 2.5 0.3 2.5 0.3 2.5 -0.1 2.5 0 2.5 0.2 2.5 0.2 2.5 0.3 2.5 0 2.5 -0.2 2.5 -0.3 2.5 -0.1 2.5 0.1 2.5 -0.2 2.5 -0.2 2.5 -0.3 2.5 0.1 2.5 0 2.5 -0.4 2.5 0 2.5 0.5 2.5 -0.3 2.5 0 2.5 0 2.5 0.3 2.5 0 2.5 -0.4 2.5 0.7 2.5 0 2.5 0.1 2.5 0 2.5 0.1 2.5 0.4 2.5 -0.2 2.5 0.2 2.5 0.2 2.5 -0.3 2.5 -0.1 2.5 -0.2 2.5 -0.1 2.5 0 2.5 -0.1 2.5 -0.5 2.5 0 2.5 -0.1 2.5 0.2 2.5 -0.3 2.5 0 2.5 -0.1 2.5 0.2 2.5 -0.5 2.5 0.5 2.5 -0.3 2.5 0.1 2.5 0.3 2.5 0.2 2.5 -0.4 2.5 0.3 2.5 0.3 2.5 0.2 2.5 -0.1 2.5 0.3 2.5 0.1 2.5 0 2.5 0.1 2.5 -0.2 2.5 -0.4 2.5 -0.1 2.5 0.1 2.5 -0.3 2.5 -0.1 2.5 0.1 2.5 -0.1 2.5 -0.2 2.5 0.2 2.5 -0.1 2.5 -0.1 2.5 -0.2 2.5 -0.2 1.1 0.6 0 3.6 -1.1 0.6 -2.5 -0.2 -2.5 -0.2 -2.5 -0.1 -2.5 -0.1 -2.5 0.2 -2.5 -0.2 -2.5 -0.1 -2.5 0.1 -2.5 -0.1 -2.5 -0.3 -2.5 0.1 -2.5 -0.1 -2.5 -0.4 -2.5 -0.2 -2.5 0.1 -2.5 0 -2.5 0.1 -2.5 0.3 -2.5 -0.1 -2.5 0.2 -2.5 0.3 -2.5 0.3 -2.5 -0.4 -2.5 0.2 -2.5 0.2 -2.5 0.1 -2.5 -0.3 -2.5 0.5 -2.5 -0.5 -2.5 0.2 -2.5 -0.1 -2.5 0 -2.5 -0.3 -2.5 0.2 -2.5 -0.1 -2.5 0 -2.5 -0.4 -2.5 -0.1 -2.5 0 -2.5 -0.1 -2.5 -0.2 -2.5 -0.1 -2.5 -0.3 -2.5 0.2 -2.5 0.2 -2.5 -0.2 -2.5 0.4 -2.5 0.1 -2.5 0 -2.5 0.1 -2.5 0 -2.5 0.6 -2.5 -0.4 -2.5 0 -2.5 0.2 -2.5 0 -2.5 0 -2.5 -0.3 -2.5 0.4 -2.5 0 -2.5 -0.4 -2.5 0 -2.5 0.1 -2.5 -0.2 -2.5 -0.2 -2.5 -0.2 -2.5 0.1 -2.5 -0.1 -2.5 -0.2 -2.5 -0.2 -2.5 0 -2.5 0.3 -2.5 0.1 -2.5 0.2 -2.5 0 -2.5 -0.1 -2.5 0.3 -2.5 0.3 -2.5 -0.3 -2.5 0.1 -2.5 0.6 -2.5 -0.3 -2.5 0.4 -2.5 0 -2.5 -0.3 -2.5 -0.2z" fill="#0b2224"/>
<rect x="748.7" y="1052.3" width="58.6" height="12" fill="#45cfd0"/>
<path d="M750.7 1062.3L758.2 1055.3V1062.3z" fill="#0b2224"/>
<text x="760.2" y="1062.3" font-size="10.5" fill="#0b2224">10.53 dB</text>
<rect x="958.3" y="1023.8" width="32.2" height="45" fill="#15150f"/>
<rect x="958.8" y="1024.3" width="31.2" height="44" fill="#44e2e2"/>
<rect x="960.4" y="1025.9" width="28" height="40.8" fill="#2ea2a3"/>
<path d="M960.8 1045.8l0 -0.8 2.5 -0.1 2.5 -0.1 2.5 0 2.5 -0.2 2.5 -0.5 2.5 0 2.5 -0.2 2.5 -0.2 2.5 0.5 2.5 -0.7 1.2 0.6 0 3.2 -1.2 0.6 -2.5 -0.7 -2.5 0.5 -2.5 -0.2 -2.5 -0.2 -2.5 0 -2.5 -0.5 -2.5 -0.1 -2.5 0 -2.5 -0.1 -2.5 -0.1z" fill="#0b2224"/>
<rect x="1623" y="1023.8" width="126.5" height="45" fill="#15150f"/>
<rect x="1623.5" y="1024.3" width="125.5" height="44" fill="#44e2e2"/>
<rect x="1625.1" y="1025.9" width="122.3" height="40.8" fill="#2ea2a3"/>
<path d="M1654 1025.8v41M1685.7 1025.8v41M1717.3 1025.8v41" stroke="#25908f" stroke-width="1.2"/>
<path d="M1625.5 1045.8l0 -1.4 2.5 -0.1 2.5 -0.4 2.5 0.2 2.5 0.1 2.5 -0.1 2.5 -0.2 2.5 -0.1 2.5 0.3 2.5 -0.1 2.5 -0.2 2.5 0 2.5 -0.2 2.5 0.4 2.5 0.1 2.5 0.2 2.5 -0.4 2.5 0.3 2.5 0.5 2.5 -0.1 2.5 0.1 2.5 0.2 2.5 0.1 2.5 0.2 2.5 -0.1 2.5 -0.2 2.5 -0.2 2.5 -0.1 2.5 -0.3 2.5 0 2.5 -0.3 2.5 0.4 2.5 -0.4 2.5 -0.3 2.5 0.4 2.5 0.2 2.5 -0.7 2.5 0 2.5 0.3 2.5 -0.1 2.5 0.1 2.5 -0.1 2.5 0.6 2.5 -0.2 2.5 -0.2 2.5 0.4 2.5 0.3 2.5 0.1 2.5 0 0.5 -0.1 0 2.5 -0.5 -0.1 -2.5 0 -2.5 0.1 -2.5 0.3 -2.5 0.4 -2.5 -0.2 -2.5 -0.2 -2.5 0.5 -2.5 -0.1 -2.5 0.1 -2.5 -0.1 -2.5 0.3 -2.5 0 -2.5 -0.7 -2.5 0.2 -2.5 0.4 -2.5 -0.3 -2.5 -0.4 -2.5 0.3 -2.5 -0.3 -2.5 0 -2.5 -0.3 -2.5 -0.1 -2.5 -0.2 -2.5 -0.2 -2.5 -0.1 -2.5 0.2 -2.5 0.1 -2.5 0.2 -2.5 0.1 -2.5 -0.1 -2.5 0.4 -2.5 0.2 -2.5 -0.4 -2.5 0.2 -2.5 0.1 -2.5 0.4 -2.5 -0.2 -2.5 0 -2.5 -0.1 -2.5 -0.1 -2.5 0.3 -2.5 -0.1 -2.5 -0.2 -2.5 -0.1 -2.5 0.1 -2.5 0.2 -2.5 -0.4 -2.5 -0.1z" fill="#0b2224"/>
<rect x="1634.5" y="1052.3" width="58.6" height="12" fill="#45cfd0"/>
<path d="M1636.5 1062.3L1644 1055.3V1062.3z" fill="#0b2224"/>
<text x="1646" y="1062.3" font-size="10.5" fill="#0b2224">10.53 dB</text>
<rect x="1749.5" y="1023.8" width="222" height="45" fill="#15150f"/>
<rect x="1750" y="1024.3" width="221" height="44" fill="#44e2e2"/>
<rect x="1751.6" y="1025.9" width="217.8" height="40.8" fill="#2ea2a3"/>
<path d="M1780.6 1025.8v41M1812.2 1025.8v41M1843.8 1025.8v41M1875.5 1025.8v41M1907.1 1025.8v41M1938.7 1025.8v41" stroke="#25908f" stroke-width="1.2"/>
<path d="M1752 1045.8l0 -1.8 2.5 0 2.5 -0.2 2.5 0.3 2.5 -0.2 2.5 -0.1 2.5 0 2.5 0 2.5 0.4 2.5 -0.3 2.5 0.3 2.5 0.1 2.5 0.1 2.5 0.1 2.5 0 2.5 0.1 2.5 0.2 2.5 0.2 2.5 -0.2 2.5 -0.2 2.5 0 2.5 -0.3 2.5 -0.1 2.5 0 2.5 0 2.5 -0.4 2.5 -0.1 2.5 0.2 2.5 -0.2 2.5 0.1 2.5 -0.2 2.5 0.4 2.5 -0.4 2.5 0 2.5 0.6 2.5 -0.3 2.5 0.4 2.5 0.1 2.5 0 2.5 -0.1 2.5 0.5 2.5 -0.2 2.5 0.4 2.5 0.1 2.5 0 2.5 0.2 2.5 -0.4 2.5 0.2 2.5 -0.5 2.5 -0.2 2.5 0.4 2.5 -0.4 2.5 -0.1 2.5 0.3 2.5 -0.1 2.5 -0.5 2.5 0.1 2.5 0.3 2.5 -0.3 2.5 0 2.5 0 2.5 0 2.5 -0.2 2.5 0.1 2.5 0.4 2.5 0.2 2.5 0.2 2.5 0.1 2.5 -0.2 2.5 0.2 2.5 0.3 2.5 0.2 2.5 0 2.5 -0.1 2.5 -0.1 2.5 0 2.5 -0.2 2.5 0 2.5 -0.3 2.5 0 2.5 -0.2 2.5 0.2 2.5 -0.3 2.5 -0.5 2.5 0.1 2.5 0.2 2.5 0.3 1 -0.2 0 4 -1 -0.2 -2.5 0.2 -2.5 0.2 -2.5 0.1 -2.5 -0.5 -2.5 -0.3 -2.5 0.2 -2.5 -0.2 -2.5 0 -2.5 -0.3 -2.5 0 -2.5 -0.2 -2.5 0 -2.5 -0.1 -2.5 -0.1 -2.5 0 -2.5 0.2 -2.5 0.3 -2.5 0.2 -2.5 -0.2 -2.5 0.1 -2.5 0.2 -2.5 0.2 -2.5 0.4 -2.5 0.1 -2.5 -0.2 -2.5 0 -2.5 0 -2.5 0 -2.5 -0.3 -2.5 0.3 -2.5 0.1 -2.5 -0.5 -2.5 -0.1 -2.5 0.3 -2.5 -0.1 -2.5 -0.4 -2.5 0.3 -2.5 -0.2 -2.5 -0.4 -2.5 0.2 -2.5 -0.4 -2.5 0.2 -2.5 0 -2.5 0.1 -2.5 0.4 -2.5 -0.2 -2.5 0.5 -2.5 -0.1 -2.5 0 -2.5 0.1 -2.5 0.4 -2.5 -0.3 -2.5 0.5 -2.5 0 -2.5 -0.4 -2.5 0.4 -2.5 -0.2 -2.5 0.1 -2.5 -0.2 -2.5 0.2 -2.5 -0.1 -2.5 -0.3 -2.5 0 -2.5 0 -2.5 -0.1 -2.5 -0.3 -2.5 0 -2.5 -0.2 -2.5 -0.2 -2.5 0.2 -2.5 0.2 -2.5 0.1 -2.5 0 -2.5 0.1 -2.5 0.1 -2.5 0.1 -2.5 0.3 -2.5 -0.3 -2.5 0.4 -2.5 0 -2.5 0 -2.5 -0.1 -2.5 -0.2 -2.5 0.3 -2.5 -0.2 -2.5 0z" fill="#0b2224"/>
<rect x="1761" y="1052.3" width="58.6" height="12" fill="#45cfd0"/>
<path d="M1763 1062.3L1770.5 1055.3V1062.3z" fill="#0b2224"/>
<text x="1772.5" y="1062.3" font-size="10.5" fill="#0b2224">10.53 dB</text>
<rect x="1970.5" y="1023.8" width="32" height="45" fill="#15150f"/>
<rect x="1971" y="1024.3" width="31" height="44" fill="#44e2e2"/>
<rect x="1972.6" y="1025.9" width="27.8" height="40.8" fill="#2ea2a3"/>
<path d="M1973 1045.8l0 -1.1 2.5 0.4 2.5 0.1 2.5 -0.3 2.5 0 2.5 -0.4 2.5 0 2.5 -0.1 2.5 -0.3 2.5 -0.1 2.5 0 1 0 0 3.5 -1 0 -2.5 0 -2.5 -0.1 -2.5 -0.3 -2.5 -0.1 -2.5 0 -2.5 -0.3 -2.5 0 -2.5 -0.3 -2.5 0.1 -2.5 0.3z" fill="#0b2224"/>
<rect x="2001.5" y="1023.8" width="187" height="45" fill="#15150f"/>
<rect x="2002" y="1024.3" width="186" height="44" fill="#44e2e2"/>
<rect x="2003.6" y="1025.9" width="182.8" height="40.8" fill="#2ea2a3"/>
<path d="M2033.6 1025.8v41M2065.3 1025.8v41M2096.9 1025.8v41M2128.5 1025.8v41M2160.2 1025.8v41" stroke="#25908f" stroke-width="1.2"/>
<path d="M2004 1045.8l0 -1.7 2.5 0.2 2.5 -0.6 2.5 0.3 2.5 -0.2 2.5 0.3 2.5 -0.2 2.5 -0.2 2.5 0.2 2.5 -0.3 2.5 -0.1 2.5 0.5 2.5 -0.3 2.5 0.4 2.5 0 2.5 0.1 2.5 0.2 2.5 0 2.5 0.2 2.5 0 2.5 0.4 2.5 0 2.5 -0.1 2.5 -0.1 2.5 -0.1 2.5 0 2.5 -0.1 2.5 -0.1 2.5 -0.3 2.5 -0.1 2.5 0 2.5 -0.2 2.5 0 2.5 -0.3 2.5 0.1 2.5 0.1 2.5 -0.1 2.5 0 2.5 0.1 2.5 -0.3 2.5 0.6 2.5 -0.4 2.5 0.4 2.5 0.1 2.5 -0.2 2.5 0.6 2.5 -0.3 2.5 0.2 2.5 0.3 2.5 0.1 2.5 -0.2 2.5 0 2.5 -0.1 2.5 -0.2 2.5 -0.2 2.5 -0.1 2.5 -0.2 2.5 -0.1 2.5 0.1 2.5 -0.4 2.5 -0.2 2.5 -0.1 2.5 0.6 2.5 0 2.5 -0.5 2.5 0.6 2.5 -0.6 2.5 0.3 2.5 0.2 2.5 0.3 2.5 0.1 2.5 -0.3 2.5 0.3 1 0 0 2.9 -1 0 -2.5 0.2 -2.5 -0.3 -2.5 0.1 -2.5 0.3 -2.5 0.2 -2.5 0.3 -2.5 -0.5 -2.5 0.6 -2.5 -0.5 -2.5 0 -2.5 0.6 -2.5 -0.1 -2.5 -0.2 -2.5 -0.4 -2.5 0.1 -2.5 -0.1 -2.5 -0.2 -2.5 -0.1 -2.5 -0.2 -2.5 -0.2 -2.5 -0.1 -2.5 0 -2.5 -0.2 -2.5 0.1 -2.5 0.3 -2.5 0.2 -2.5 -0.3 -2.5 0.6 -2.5 -0.2 -2.5 0.1 -2.5 0.4 -2.5 -0.4 -2.5 0.5 -2.5 -0.2 -2.5 0.1 -2.5 0 -2.5 -0.1 -2.5 0.1 -2.5 0.1 -2.5 -0.3 -2.5 0 -2.5 -0.2 -2.5 0 -2.5 -0.1 -2.5 -0.3 -2.5 -0.1 -2.5 -0.1 -2.5 0 -2.5 -0.1 -2.5 -0.1 -2.5 -0.1 -2.5 0 -2.5 0.4 -2.5 0 -2.5 0.2 -2.5 0 -2.5 0.2 -2.5 0.1 -2.5 0 -2.5 0.4 -2.5 -0.3 -2.5 0.4 -2.5 -0.1 -2.5 -0.2 -2.5 0.2 -2.5 -0.2 -2.5 -0.2 -2.5 0.3 -2.5 -0.2 -2.5 0.3 -2.5 -0.6 -2.5 0.2z" fill="#0b2224"/>
<rect x="2013" y="1052.3" width="58.6" height="12" fill="#45cfd0"/>
<path d="M2015 1062.3L2022.5 1055.3V1062.3z" fill="#0b2224"/>
<text x="2024.5" y="1062.3" font-size="10.5" fill="#0b2224">10.53 dB</text>
<rect x="2187.5" y="1023.8" width="68" height="45" fill="#15150f"/>
<rect x="2188" y="1024.3" width="67" height="44" fill="#44e2e2"/>
<rect x="2189.6" y="1025.9" width="63.8" height="40.8" fill="#2ea2a3"/>
<path d="M2191.8 1025.8v41M2223.4 1025.8v41" stroke="#25908f" stroke-width="1.2"/>
<path d="M2190 1045.8l0 -1.4 2.5 0.1 2.5 0.1 2.5 -0.3 2.5 -0.3 2.5 0 2.5 -0.4 2.5 0.4 2.5 0.1 2.5 -0.7 2.5 0.5 2.5 -0.6 2.5 0.5 2.5 -0.3 2.5 0 2.5 0.2 2.5 0.4 2.5 0 2.5 -0.1 2.5 0.3 2.5 -0.1 2.5 0.2 2.5 0.2 2.5 0 2.5 0.1 2 0.2 0 1.6 -2 0.2 -2.5 0.1 -2.5 0 -2.5 0.2 -2.5 0.2 -2.5 -0.1 -2.5 0.2 -2.5 0 -2.5 0 -2.5 0.4 -2.5 0.1 -2.5 0 -2.5 -0.3 -2.5 0.5 -2.5 -0.5 -2.5 0.5 -2.5 -0.7 -2.5 0.1 -2.5 0.4 -2.5 -0.4 -2.5 0 -2.5 -0.3 -2.5 -0.3 -2.5 0 -2.5 0.1z" fill="#0b2224"/>
<rect x="2199" y="1052.3" width="12" height="12" fill="#45cfd0"/>
<path d="M2201 1062.3L2208.5 1055.3V1062.3z" fill="#0b2224"/>
<rect x="2254.5" y="1023.8" width="221" height="45" fill="#15150f"/>
<rect x="2255" y="1024.3" width="220" height="44" fill="#44e2e2"/>
<rect x="2256.6" y="1025.9" width="216.8" height="40.8" fill="#2ea2a3"/>
<path d="M2286.7 1025.8v41M2318.3 1025.8v41M2350 1025.8v41M2381.6 1025.8v41M2413.2 1025.8v41M2444.9 1025.8v41" stroke="#25908f" stroke-width="1.2"/>
<path d="M2257 1045.8l0 -1.8 2.5 -0.2 2.5 -0.2 2.5 0.1 2.5 0.1 2.5 0 2.5 -0.2 2.5 0.4 2.5 -0.4 2.5 0.6 2.5 -0.2 2.5 0.3 2.5 -0.2 2.5 0.4 2.5 0.2 2.5 -0.1 2.5 0.4 2.5 0.1 2.5 -0.3 2.5 -0.1 2.5 -0.2 2.5 0.1 2.5 -0.3 2.5 0.1 2.5 -0.1 2.5 -0.2 2.5 0.1 2.5 -0.4 2.5 0.4 2.5 -0.3 2.5 -0.4 2.5 0.5 2.5 -0.3 2.5 0 2.5 0.3 2.5 0 2.5 -0.2 2.5 -0.1 2.5 0.4 2.5 -0.2 2.5 0.2 2.5 0.2 2.5 0.4 2.5 0 2.5 0.1 2.5 0.4 2.5 -0.2 2.5 -0.1 2.5 -0.3 2.5 -0.3 2.5 0.2 2.5 -0.2 2.5 -0.2 2.5 -0.4 2.5 -0.1 2.5 0.2 2.5 -0.4 2.5 0.4 2.5 0.2 2.5 -0.1 2.5 -0.2 2.5 0.3 2.5 -0.3 2.5 0.5 2.5 -0.2 2.5 -0.1 2.5 0.6 2.5 -0.1 2.5 0 2.5 0.1 2.5 0.2 2.5 0.2 2.5 0 2.5 0.3 2.5 -0.1 2.5 -0.2 2.5 -0.1 2.5 -0.3 2.5 0 2.5 -0.4 2.5 -0.1 2.5 -0.1 2.5 -0.1 2.5 0.5 2.5 -0.6 2.5 0 2.5 0.6 0 3.6 -2.5 0.5 -2.5 0 -2.5 -0.5 -2.5 0.4 -2.5 -0.1 -2.5 -0.1 -2.5 -0.1 -2.5 -0.4 -2.5 0 -2.5 -0.2 -2.5 -0.1 -2.5 -0.2 -2.5 -0.1 -2.5 0.3 -2.5 0 -2.5 0.2 -2.5 0.2 -2.5 0.1 -2.5 0 -2.5 -0.1 -2.5 0.6 -2.5 -0.1 -2.5 -0.2 -2.5 0.4 -2.5 -0.3 -2.5 0.3 -2.5 -0.2 -2.5 -0.1 -2.5 0.2 -2.5 0.4 -2.5 -0.4 -2.5 0.2 -2.5 -0.1 -2.5 -0.4 -2.5 -0.2 -2.5 -0.1 -2.5 0.2 -2.5 -0.3 -2.5 -0.3 -2.5 -0.1 -2.5 -0.2 -2.5 0.4 -2.5 0.1 -2.5 0 -2.5 0.3 -2.5 0.2 -2.5 0.2 -2.5 -0.2 -2.5 0.4 -2.5 -0.1 -2.5 -0.2 -2.5 0 -2.5 0.3 -2.5 0 -2.5 -0.2 -2.5 0.5 -2.5 -0.3 -2.5 -0.3 -2.5 0.4 -2.5 -0.4 -2.5 0.1 -2.5 -0.2 -2.5 -0.1 -2.5 0 -2.5 -0.3 -2.5 0.1 -2.5 -0.2 -2.5 -0.1 -2.5 -0.3 -2.5 0.1 -2.5 0.4 -2.5 -0.1 -2.5 0.2 -2.5 0.4 -2.5 -0.1 -2.5 0.3 -2.5 -0.2 -2.5 0.5 -2.5 -0.4 -2.5 0.4 -2.5 -0.2 -2.5 0 -2.5 0.1 -2.5 0.1 -2.5 -0.2 -2.5 -0.1z" fill="#0b2224"/>
<rect x="2266" y="1052.3" width="58.6" height="12" fill="#45cfd0"/>
<path d="M2268 1062.3L2275.5 1055.3V1062.3z" fill="#0b2224"/>
<text x="2277.5" y="1062.3" font-size="10.5" fill="#0b2224">10.53 dB</text>
<rect x="2474.5" y="1023.8" width="35" height="45" fill="#15150f"/>
<rect x="2475" y="1024.3" width="34" height="44" fill="#44e2e2"/>
<rect x="2476.6" y="1025.9" width="30.8" height="40.8" fill="#2ea2a3"/>
<path d="M2477 1045.8l0 -2 2.5 -0.3 2.5 0.2 2.5 -0.1 2.5 0.6 2.5 -0.3 2.5 0.3 2.5 0.1 2.5 0.3 2.5 -0.2 2.5 0.4 2.5 0 1.5 0.1 0 1.6 -1.5 0.1 -2.5 0 -2.5 0.4 -2.5 -0.2 -2.5 0.3 -2.5 0.1 -2.5 0.3 -2.5 -0.3 -2.5 0.6 -2.5 -0.1 -2.5 0.2 -2.5 -0.3z" fill="#0b2224"/>
<rect x="2508.5" y="1023.8" width="184" height="45" fill="#15150f"/>
<rect x="2509" y="1024.3" width="183" height="44" fill="#44e2e2"/>
<rect x="2510.6" y="1025.9" width="179.8" height="40.8" fill="#2ea2a3"/>
<path d="M2539.8 1025.8v41M2571.4 1025.8v41M2603 1025.8v41M2634.7 1025.8v41M2666.3 1025.8v41" stroke="#25908f" stroke-width="1.2"/>
<path d="M2511 1045.8l0 -1.2 2.5 0 2.5 0.4 2.5 0.1 2.5 -0.1 2.5 0 2.5 -0.5 2.5 -0.2 2.5 0.3 2.5 -0.6 2.5 0 2.5 -0.2 2.5 -0.2 2.5 0.6 2.5 -0.1 2.5 -0.5 2.5 -0.2 2.5 0.1 2.5 -0.2 2.5 0.6 2.5 -0.2 2.5 0.3 2.5 -0.2 2.5 0.2 2.5 0.3 2.5 -0.3 2.5 0.3 2.5 0.2 2.5 -0.1 2.5 0.1 2.5 0.2 2.5 0.3 2.5 0.1 2.5 -0.3 2.5 -0.2 2.5 -0.1 2.5 -0.1 2.5 0.1 2.5 -0.2 2.5 -0.5 2.5 0 2.5 0.3 2.5 -0.3 2.5 -0.2 2.5 0.1 2.5 0 2.5 -0.1 2.5 0 2.5 0.4 2.5 -0.3 2.5 0.4 2.5 0.1 2.5 -0.1 2.5 0.2 2.5 0.1 2.5 0.1 2.5 0.2 2.5 0.2 2.5 -0.1 2.5 0.3 2.5 -0.2 2.5 0 2.5 -0.3 2.5 0 2.5 -0.2 2.5 -0.5 2.5 0 2.5 -0.3 2.5 0.3 2.5 0.1 2.5 -0.2 2.5 -0.5 0.5 0.2 0 4.3 -0.5 0.2 -2.5 -0.5 -2.5 -0.2 -2.5 0.1 -2.5 0.3 -2.5 -0.3 -2.5 0 -2.5 -0.4 -2.5 -0.2 -2.5 0 -2.5 -0.2 -2.5 0 -2.5 -0.2 -2.5 0.3 -2.5 -0.1 -2.5 0.2 -2.5 0.2 -2.5 0.1 -2.5 0.1 -2.5 0.2 -2.5 -0.1 -2.5 0.1 -2.5 0.4 -2.5 -0.3 -2.5 0.3 -2.5 0 -2.5 -0.1 -2.5 0 -2.5 0.1 -2.5 -0.2 -2.5 -0.3 -2.5 0.2 -2.5 0 -2.5 -0.5 -2.5 -0.2 -2.5 0 -2.5 -0.1 -2.5 -0.1 -2.5 -0.2 -2.5 -0.3 -2.5 0.1 -2.5 0.2 -2.5 0.2 -2.5 0.1 -2.5 -0.1 -2.5 0.2 -2.5 0.3 -2.5 -0.3 -2.5 0.3 -2.5 0.2 -2.5 -0.2 -2.5 0.3 -2.5 -0.2 -2.5 0.6 -2.5 -0.2 -2.5 0.1 -2.5 -0.2 -2.5 -0.4 -2.5 -0.1 -2.5 0.5 -2.5 -0.2 -2.5 -0.2 -2.5 0 -2.5 -0.5 -2.5 0.3 -2.5 -0.2 -2.5 -0.4 -2.5 0 -2.5 -0.1 -2.5 0.1 -2.5 0.3 -2.5 0z" fill="#0b2224"/>
<rect x="2520" y="1052.3" width="58.6" height="12" fill="#45cfd0"/>
<path d="M2522 1062.3L2529.5 1055.3V1062.3z" fill="#0b2224"/>
<text x="2531.5" y="1062.3" font-size="10.5" fill="#0b2224">10.53 dB</text>
<rect x="2691.5" y="1023.8" width="69" height="45" fill="#15150f"/>
<rect x="2692" y="1024.3" width="68" height="44" fill="#44e2e2"/>
<rect x="2693.6" y="1025.9" width="64.8" height="40.8" fill="#2ea2a3"/>
<path d="M2697.9 1025.8v41M2729.6 1025.8v41" stroke="#25908f" stroke-width="1.2"/>
<path d="M2694 1045.8l0 -2 2.5 0.2 2.5 0.1 2.5 0.3 2.5 0.2 2.5 0.3 2.5 0.2 2.5 0 2.5 -0.2 2.5 0 2.5 -0.4 2.5 0 2.5 -0.2 2.5 0.3 2.5 -0.5 2.5 -0.3 2.5 0.3 2.5 -0.2 2.5 0.1 2.5 -0.5 2.5 0.1 2.5 0.6 2.5 0 2.5 -0.6 2.5 0.4 2.5 0.1 0.5 0.2 0 3.3 -0.5 0.2 -2.5 0.1 -2.5 0.4 -2.5 -0.6 -2.5 0 -2.5 0.6 -2.5 0.1 -2.5 -0.4 -2.5 0.1 -2.5 -0.2 -2.5 0.3 -2.5 -0.3 -2.5 -0.4 -2.5 0.3 -2.5 -0.2 -2.5 0 -2.5 -0.4 -2.5 0 -2.5 -0.2 -2.5 0 -2.5 0.1 -2.5 0.3 -2.5 0.2 -2.5 0.2 -2.5 0 -2.5 0.2z" fill="#0b2224"/>
<rect x="2703" y="1052.3" width="12" height="12" fill="#45cfd0"/>
<path d="M2705 1062.3L2712.5 1055.3V1062.3z" fill="#0b2224"/>
<rect x="737" y="1072.7" width="249.5" height="45" fill="#15150f"/>
<rect x="737.5" y="1073.2" width="248.5" height="44" fill="#44e2e2"/>
<rect x="739.1" y="1074.8" width="245.3" height="40.8" fill="#2ea2a3"/>
<path d="M768.3 1074.7v41M799.9 1074.7v41M831.5 1074.7v41M863.2 1074.7v41M894.8 1074.7v41M926.4 1074.7v41M958.1 1074.7v41" stroke="#25908f" stroke-width="1.2"/>
<path d="M739.5 1094.7l0 -10.3 1.5 0.5 1.5 -1.1 1.5 2.8 1.5 -1.3 1.5 0.6 1.5 0.3 1.5 1.6 1.5 0.7 1.5 -0.2 1.5 -0.1 1.5 1.3 1.5 -0.3 1.5 1.1 1.5 0.4 1.5 0 1.5 0.2 1.5 0 1.5 0.5 1.5 -0.4 1.5 0.6 1.5 -0.4 1.5 0.9 1.5 -0.1 1.5 -0.3 1.5 0.4 1.5 0.4 1.5 -0.5 1.5 0.7 1.5 -0.2 1.5 0.3 1.5 -0.1 1.5 0.2 1.5 -0.1 1.5 0.3 1.5 -0.3 1.5 0 1.5 0.4 1.5 -0.2 1.5 0.3 1.5 0.1 1.5 0 1.5 -0.1 1.5 0.2 1.5 -0.1 1.5 -0.1 1.5 0.1 1.5 0 1.5 0.2 1.5 0 1.5 0.1 1.5 -0.1 1.5 0 1.5 0 1.5 0.2 1.5 -0.1 1.5 0 1.5 0.2 1.5 -0.1 1.5 0.1 1.5 -0.1 1.5 0.1 1.5 -0.1 1.5 0.1 1.5 0 1.5 0.1 1.5 0.1 1.5 -0.2 1.5 0 1.5 0 1.5 0.1 1.5 0 1.5 0 1.5 -0.1 1.5 -0.1 1.5 0 1.5 0.1 1.5 0.1 1.5 0 1.5 0.1 1.5 0 1.5 0 1.5 0 1.5 0 1.5 -8.4 1.5 -2.1 1.5 1.6 1.5 -0.6 1.5 0.8 1.5 0.2 1.5 1 1.5 0.1 1.5 1.3 1.5 0 1.5 0.4 1.5 0.1 1.5 0.8 1.5 1.2 1.5 -0.1 1.5 -0.1 1.5 0.4 1.5 0 1.5 0 1.5 0.3 1.5 0.4 1.5 -0.2 1.5 0.5 1.5 0.2 1.5 -0.2 1.5 0.5 1.5 0.1 1.5 0.2 1.5 0.2 1.5 -0.3 1.5 0.5 1.5 0 1.5 -0.2 1.5 0.1 1.5 0.4 1.5 -0.2 1.5 0.1 1.5 0 1.5 0.1 1.5 0 1.5 0.1 1.5 0 1.5 0.1 1.5 0.2 1.5 -0.2 1.5 0.1 1.5 0.2 1.5 -0.2 1.5 0 1.5 0.2 1.5 -0.1 1.5 0 1.5 0.2 1.5 -0.1 1.5 -0.1 1.5 0.2 1.5 0.1 1.5 -0.1 1.5 0.1 1.5 -0.1 1.5 0.2 1.5 -0.1 1.5 0.2 1.5 -0.1 1.5 0.1 1.5 -0.1 1.5 0.1 1.5 -0.1 1.5 0 1.5 0 1.5 0 1.5 -0.1 1.5 0 1.5 0.2 1.5 0 1.5 0 1.5 -0.1 1.5 0.1 1.5 0 0.5 0 0 1.4 -0.5 0 -1.5 0 -1.5 0.1 -1.5 -0.1 -1.5 0 -1.5 0 -1.5 0.2 -1.5 0 -1.5 -0.1 -1.5 0 -1.5 0 -1.5 0 -1.5 -0.1 -1.5 0.1 -1.5 -0.1 -1.5 0.1 -1.5 -0.1 -1.5 0.2 -1.5 -0.1 -1.5 0.2 -1.5 -0.1 -1.5 0.1 -1.5 -0.1 -1.5 0.1 -1.5 0.2 -1.5 -0.1 -1.5 -0.1 -1.5 0.2 -1.5 0 -1.5 -0.1 -1.5 0.2 -1.5 0 -1.5 -0.2 -1.5 0.2 -1.5 0.1 -1.5 -0.1 -1.5 0.2 -1.5 0.1 -1.5 0 -1.5 0.1 -1.5 0 -1.5 0.1 -1.5 0 -1.5 0.1 -1.5 -0.2 -1.5 0.4 -1.5 0.1 -1.5 -0.1 -1.5 0 -1.5 0.5 -1.5 -0.3 -1.5 0.2 -1.5 0.1 -1.5 0.1 -1.5 0.5 -1.5 -0.2 -1.5 0.2 -1.5 0.4 -1.5 -0.2 -1.5 0.4 -1.5 0.3 -1.5 0 -1.5 0 -1.5 0.4 -1.5 -0.1 -1.5 -0.1 -1.5 1.2 -1.5 0.8 -1.5 0.1 -1.5 0.4 -1.5 0 -1.5 1.2 -1.5 0 -1.5 1 -1.5 0.2 -1.5 0.7 -1.5 -0.6 -1.5 1.6 -1.5 -2 -1.5 -8 -1.5 0 -1.5 0 -1.5 0 -1.5 0 -1.5 0.1 -1.5 0 -1.5 0.1 -1.5 0.1 -1.5 0 -1.5 -0.1 -1.5 -0.1 -1.5 0 -1.5 0 -1.5 0.1 -1.5 0 -1.5 0 -1.5 -0.2 -1.5 0.1 -1.5 0.1 -1.5 0 -1.5 0.1 -1.5 -0.1 -1.5 0.1 -1.5 -0.1 -1.5 0.1 -1.5 -0.1 -1.5 0.2 -1.5 0 -1.5 -0.1 -1.5 0.2 -1.5 0 -1.5 0 -1.5 -0.1 -1.5 0.1 -1.5 0 -1.5 0.1 -1.5 0 -1.5 0.1 -1.5 -0.1 -1.5 -0.1 -1.5 0.2 -1.5 -0.1 -1.5 0 -1.5 0.1 -1.5 0.2 -1.5 -0.2 -1.5 0.4 -1.5 0 -1.5 -0.3 -1.5 0.3 -1.5 -0.1 -1.5 0.2 -1.5 -0.1 -1.5 0.3 -1.5 -0.2 -1.5 0.6 -1.5 -0.5 -1.5 0.4 -1.5 0.4 -1.5 -0.3 -1.5 -0.1 -1.5 0.9 -1.5 -0.4 -1.5 0.6 -1.5 -0.3 -1.5 0.5 -1.5 0 -1.5 0.2 -1.5 0 -1.5 0.4 -1.5 1.1 -1.5 -0.3 -1.5 1.3 -1.5 -0.1 -1.5 -0.2 -1.5 0.7 -1.5 1.6 -1.5 0.3 -1.5 0.6 -1.5 -1.3 -1.5 2.7 -1.5 -1.1 -1.5 0.5z" fill="#0b2224"/>
<rect x="748.5" y="1101.2" width="12" height="12" fill="#45cfd0"/>
<path d="M750.5 1111.2L758 1104.2V1111.2z" fill="#0b2224"/>
<rect x="1746.5" y="1072.7" width="505" height="45" fill="#15150f"/>
<rect x="1747" y="1073.2" width="504" height="44" fill="#44e2e2"/>
<rect x="1748.6" y="1074.8" width="500.8" height="40.8" fill="#2ea2a3"/>
<path d="M1780.6 1074.7v41M1812.2 1074.7v41M1843.8 1074.7v41M1875.5 1074.7v41M1907.1 1074.7v41M1938.7 1074.7v41M1970.4 1074.7v41M2002 1074.7v41M2033.6 1074.7v41M2065.3 1074.7v41M2096.9 1074.7v41M2128.5 1074.7v41M2160.2 1074.7v41M2191.8 1074.7v41M2223.4 1074.7v41" stroke="#25908f" stroke-width="1.2"/>
<path d="M1749 1094.7l0 -9.7 1.5 -2.1 1.5 3.2 1.5 -1.1 1.5 1.2 1.5 0.4 1.5 -0.2 1.5 1 1.5 -0.1 1.5 1.7 1.5 -0.7 1.5 1.4 1.5 -0.8 1.5 0.7 1.5 1.2 1.5 -0.8 1.5 1.2 1.5 0 1.5 -0.3 1.5 0.4 1.5 0.5 1.5 -0.4 1.5 0.9 1.5 -0.6 1.5 0.4 1.5 -0.1 1.5 0.1 1.5 0.3 1.5 0 1.5 0.6 1.5 0.1 1.5 -0.3 1.5 0.3 1.5 -0.1 1.5 0.3 1.5 -0.1 1.5 0.1 1.5 -0.2 1.5 0.3 1.5 0.2 1.5 -0.3 1.5 0 1.5 0.1 1.5 0.1 1.5 0 1.5 0.2 1.5 0 1.5 0.1 1.5 -0.1 1.5 0 1.5 0 1.5 0.1 1.5 0.1 1.5 -0.2 1.5 0.1 1.5 0.1 1.5 -0.2 1.5 0.1 1.5 -0.1 1.5 0.2 1.5 0 1.5 0 1.5 0 1.5 -0.1 1.5 0 1.5 0.1 1.5 -0.1 1.5 0.2 1.5 -0.2 1.5 0.1 1.5 0 1.5 0.1 1.5 -0.1 1.5 0 1.5 -0.1 1.5 0.1 1.5 -0.1 1.5 0.1 1.5 -0.1 1.5 0.1 1.5 0 1.5 0 1.5 -0.1 1.5 -0.1 1.5 -7.3 1.5 -2.6 1.5 -0.4 1.5 2.5 1.5 0.1 1.5 0.5 1.5 1.3 1.5 -1.6 1.5 1.4 1.5 0.6 1.5 0 1.5 0 1.5 0.3 1.5 0.5 1.5 1 1.5 0.3 1.5 0.1 1.5 -0.2 1.5 0.8 1.5 -0.5 1.5 1 1.5 -0.5 1.5 0 1.5 0.1 1.5 0.8 1.5 -0.2 1.5 0.4 1.5 -0.4 1.5 0.4 1.5 0 1.5 0.1 1.5 0.4 1.5 -0.2 1.5 0.1 1.5 0.1 1.5 0.1 1.5 -0.1 1.5 -0.1 1.5 0.3 1.5 -0.1 1.5 0.2 1.5 -0.1 1.5 0 1.5 0 1.5 0.1 1.5 0 1.5 0 1.5 -0.1 1.5 0.1 1.5 0.2 1.5 0.1 1.5 0 1.5 -0.1 1.5 0 1.5 0.2 1.5 -0.1 1.5 0 1.5 0.1 1.5 -0.1 1.5 0 1.5 0.1 1.5 -0.1 1.5 0 1.5 0.1 1.5 -0.2 1.5 0.1 1.5 0 1.5 0 1.5 0 1.5 0.1 1.5 0 1.5 0 1.5 0 1.5 0 1.5 0 1.5 0 1.5 0 1.5 0 1.5 0.1 1.5 -0.2 1.5 0.1 1.5 0.1 1.5 0 1.5 0 1.5 -5.1 1.5 -4.7 1.5 0.9 1.5 -0.5 1.5 1.9 1.5 -1.1 1.5 1.6 1.5 1.4 1.5 -1.2 1.5 1 1.5 0.4 1.5 0.3 1.5 1.3 1.5 -1 1.5 0.3 1.5 0.7 1.5 0.8 1.5 -0.3 1.5 0.9 1.5 -0.2 1.5 0 1.5 0.4 1.5 0.4 1.5 -0.3 1.5 0.4 1.5 0.3 1.5 -0.2 1.5 0 1.5 0.6 1.5 -0.2 1.5 0.2 1.5 -0.1 1.5 0.2 1.5 0 1.5 -0.1 1.5 0.3 1.5 0 1.5 0 1.5 0.2 1.5 0 1.5 -0.3 1.5 0.2 1.5 -0.1 1.5 0.2 1.5 0.1 1.5 0 1.5 -0.1 1.5 0 1.5 0.1 1.5 -0.1 1.5 0 1.5 0.2 1.5 0.1 1.5 -0.1 1.5 0.1 1.5 -0.1 1.5 -0.1 1.5 0.1 1.5 0 1.5 0.1 1.5 0 1.5 0 1.5 -0.1 1.5 0 1.5 0 1.5 0 1.5 0.1 1.5 0.1 1.5 -0.2 1.5 0.1 1.5 0 1.5 -0.1 1.5 0 1.5 0 1.5 0.1 1.5 -0.1 1.5 0 1.5 0 1.5 -0.1 1.5 0 1.5 0 1.5 0.2 1.5 -0.1 1.5 0.1 1.5 -1.8 1.5 -7.3 1.5 -1.6 1.5 1.3 1.5 0.7 1.5 0.6 1.5 0.8 1.5 1.4 1.5 -0.3 1.5 0.8 1.5 -0.5 1.5 0.3 1.5 1.5 1.5 -0.1 1.5 0.6 1.5 -0.8 1.5 1 1.5 0.5 1.5 -0.7 1.5 0.9 1.5 0.2 1.5 -0.5 1.5 0.9 1.5 -0.2 1.5 0.5 1.5 0 1.5 -0.2 1.5 0.1 1.5 0 1.5 0.2 1.5 0 1.5 0.1 1.5 0.5 1.5 -0.3 1.5 0.2 1.5 0.2 1.5 0.1 1.5 0.1 1.5 -0.3 1.5 0.2 1.5 0 1.5 0.1 1.5 -0.2 1.5 0.3 1.5 0 1.5 0 1.5 -0.1 1.5 0.1 1.5 0.2 1.5 -0.1 1.5 -0.1 1.5 0.1 1.5 0.1 1.5 0.1 1.5 0 1.5 -0.1 1.5 0.1 1.5 -0.1 1.5 0 1.5 0 1.5 0.1 1.5 -0.1 1.5 0 1.5 0.2 1.5 -0.1 1.5 0.1 1.5 -0.1 1.5 -0.1 1.5 0 1.5 0 1.5 0 1.5 0.1 1.5 -0.1 1.5 0.1 1.5 -0.1 1.5 -0.1 1.5 0 1.5 0.1 1.5 0 1.5 0.1 1.5 -0.1 1 0.1 0 1.3 -1 0.1 -1.5 -0.1 -1.5 0.1 -1.5 0 -1.5 0.1 -1.5 0 -1.5 0 -1.5 -0.1 -1.5 0.1 -1.5 -0.1 -1.5 0.1 -1.5 0 -1.5 0 -1.5 0 -1.5 -0.1 -1.5 -0.1 -1.5 0.1 -1.5 -0.1 -1.5 0.1 -1.5 0 -1.5 -0.1 -1.5 0.1 -1.5 0 -1.5 0 -1.5 -0.1 -1.5 0.1 -1.5 -0.1 -1.5 0 -1.5 0.1 -1.5 0.1 -1.5 0.1 -1.5 -0.1 -1.5 -0.1 -1.5 0.2 -1.5 0.1 -1.5 -0.1 -1.5 0 -1.5 0 -1.5 0.3 -1.5 -0.2 -1.5 0.1 -1.5 0 -1.5 0.2 -1.5 -0.2 -1.5 0.1 -1.5 0.1 -1.5 0.2 -1.5 0.2 -1.5 -0.3 -1.5 0.4 -1.5 0.1 -1.5 0 -1.5 0.2 -1.5 0 -1.5 0.1 -1.5 -0.2 -1.5 0 -1.5 0.5 -1.5 -0.2 -1.5 0.8 -1.5 -0.5 -1.5 0.2 -1.5 0.9 -1.5 -0.6 -1.5 0.5 -1.5 0.9 -1.5 -0.7 -1.5 0.6 -1.5 -0.1 -1.5 1.4 -1.5 0.3 -1.5 -0.5 -1.5 0.8 -1.5 -0.3 -1.5 1.4 -1.5 0.8 -1.5 0.5 -1.5 0.7 -1.5 1.2 -1.5 -1.6 -1.5 -6.9 -1.5 -1.7 -1.5 0.1 -1.5 -0.1 -1.5 0.2 -1.5 0 -1.5 0 -1.5 -0.1 -1.5 0 -1.5 0 -1.5 -0.1 -1.5 0.1 -1.5 0 -1.5 0 -1.5 -0.1 -1.5 0 -1.5 0.1 -1.5 -0.2 -1.5 0.1 -1.5 0.1 -1.5 0 -1.5 0 -1.5 0 -1.5 -0.1 -1.5 0 -1.5 0 -1.5 0.1 -1.5 0 -1.5 0.1 -1.5 -0.1 -1.5 -0.1 -1.5 0.1 -1.5 -0.1 -1.5 0.1 -1.5 0.2 -1.5 0 -1.5 -0.1 -1.5 0.1 -1.5 0 -1.5 -0.1 -1.5 0 -1.5 0.1 -1.5 0.2 -1.5 -0.1 -1.5 0.1 -1.5 -0.2 -1.5 0 -1.5 0.2 -1.5 0 -1.5 0 -1.5 0.3 -1.5 -0.1 -1.5 0 -1.5 0.2 -1.5 -0.1 -1.5 0.2 -1.5 -0.2 -1.5 0.6 -1.5 0 -1.5 -0.2 -1.5 0.3 -1.5 0.4 -1.5 -0.3 -1.5 0.3 -1.5 0.4 -1.5 0 -1.5 -0.2 -1.5 0.8 -1.5 -0.3 -1.5 0.7 -1.5 0.6 -1.5 0.3 -1.5 -0.9 -1.5 1.3 -1.5 0.3 -1.5 0.3 -1.5 1 -1.5 -1.1 -1.5 1.3 -1.5 1.5 -1.5 -1.1 -1.5 1.8 -1.5 -0.5 -1.5 0.9 -1.5 -4.5 -1.5 -4.9 -1.5 0 -1.5 0 -1.5 0.1 -1.5 0 -1.5 -0.2 -1.5 0.1 -1.5 0 -1.5 0 -1.5 0 -1.5 0 -1.5 0 -1.5 0 -1.5 0 -1.5 0 -1.5 0.1 -1.5 0 -1.5 0 -1.5 0 -1.5 0.1 -1.5 -0.2 -1.5 0.1 -1.5 0 -1.5 -0.1 -1.5 0.1 -1.5 0 -1.5 -0.1 -1.5 0.1 -1.5 0 -1.5 -0.1 -1.5 0.2 -1.5 0 -1.5 -0.1 -1.5 0 -1.5 0.1 -1.5 0.1 -1.5 0.1 -1.5 -0.1 -1.5 0 -1.5 0 -1.5 0.1 -1.5 0 -1.5 0 -1.5 -0.1 -1.5 0.2 -1.5 -0.1 -1.5 0.2 -1.5 -0.1 -1.5 -0.1 -1.5 0.1 -1.5 0.1 -1.5 0.1 -1.5 -0.1 -1.5 0.4 -1.5 0.1 -1.5 0 -1.5 0.4 -1.5 -0.3 -1.5 0.3 -1.5 -0.2 -1.5 0.8 -1.5 0.1 -1.5 0 -1.5 -0.4 -1.5 1 -1.5 -0.5 -1.5 0.8 -1.5 -0.2 -1.5 0.1 -1.5 0.2 -1.5 1 -1.5 0.5 -1.5 0.3 -1.5 0 -1.5 0 -1.5 0.6 -1.5 1.3 -1.5 -1.5 -1.5 1.3 -1.5 0.5 -1.5 0.1 -1.5 2.4 -1.5 -0.3 -1.5 -2.4 -1.5 -6.9 -1.5 0 -1.5 -0.1 -1.5 0 -1.5 0 -1.5 0.1 -1.5 -0.1 -1.5 0.1 -1.5 -0.1 -1.5 0.1 -1.5 -0.1 -1.5 0 -1.5 -0.1 -1.5 0.1 -1.5 0 -1.5 0.1 -1.5 -0.1 -1.5 0.2 -1.5 -0.1 -1.5 0.1 -1.5 0 -1.5 -0.1 -1.5 0 -1.5 0 -1.5 0 -1.5 0.2 -1.5 -0.1 -1.5 0 -1.5 -0.1 -1.5 0.1 -1.5 0.1 -1.5 -0.2 -1.5 0.1 -1.5 0.1 -1.5 0 -1.5 0 -1.5 -0.1 -1.5 0.1 -1.5 0 -1.5 0.2 -1.5 0 -1.5 0.1 -1.5 0.1 -1.5 0 -1.5 -0.3 -1.5 0.2 -1.5 0.3 -1.5 -0.2 -1.5 0.1 -1.5 0 -1.5 0.3 -1.5 -0.1 -1.5 0.3 -1.5 -0.3 -1.5 0.1 -1.5 0.5 -1.5 0 -1.5 0.3 -1.5 0.1 -1.5 -0.1 -1.5 0.4 -1.5 -0.6 -1.5 0.8 -1.5 -0.4 -1.5 0.5 -1.5 0.4 -1.5 -0.3 -1.5 0 -1.5 1.1 -1.5 -0.8 -1.5 1.1 -1.5 0.6 -1.5 -0.8 -1.5 1.4 -1.5 -0.7 -1.5 1.6 -1.5 -0.1 -1.5 1 -1.5 -0.2 -1.5 0.4 -1.5 1.1 -1.5 -1.1 -1.5 3 -1.5 -2z" fill="#0b2224"/>
<rect x="1758" y="1101.2" width="12" height="12" fill="#45cfd0"/>
<path d="M1760 1111.2L1767.5 1104.2V1111.2z" fill="#0b2224"/>
<rect x="2250.5" y="1072.7" width="507" height="45" fill="#15150f"/>
<rect x="2251" y="1073.2" width="506" height="44" fill="#44e2e2"/>
<rect x="2252.6" y="1074.8" width="502.8" height="40.8" fill="#2ea2a3"/>
<path d="M2255.1 1074.7v41M2286.7 1074.7v41M2318.3 1074.7v41M2350 1074.7v41M2381.6 1074.7v41M2413.2 1074.7v41M2444.9 1074.7v41M2476.5 1074.7v41M2508.1 1074.7v41M2539.8 1074.7v41M2571.4 1074.7v41M2603 1074.7v41M2634.7 1074.7v41M2666.3 1074.7v41M2697.9 1074.7v41M2729.6 1074.7v41" stroke="#25908f" stroke-width="1.2"/>
<path d="M2253 1094.7l0 -11.9 1.5 2.8 1.5 -0.8 1.5 1.5 1.5 0.7 1.5 0.2 1.5 0.1 1.5 0.1 1.5 0.1 1.5 1.8 1.5 -0.8 1.5 1.5 1.5 -0.6 1.5 1.1 1.5 -0.6 1.5 0.3 1.5 1.1 1.5 -0.4 1.5 0.4 1.5 0.3 1.5 0 1.5 0.1 1.5 0.4 1.5 0.4 1.5 0 1.5 -0.1 1.5 0 1.5 0.2 1.5 0.4 1.5 0 1.5 -0.2 1.5 0.1 1.5 0.4 1.5 0.2 1.5 -0.3 1.5 0 1.5 0.1 1.5 0.3 1.5 -0.1 1.5 0.2 1.5 0 1.5 0.2 1.5 -0.2 1.5 0.1 1.5 0 1.5 0.1 1.5 0 1.5 -0.1 1.5 0.2 1.5 0 1.5 0.1 1.5 -0.1 1.5 0 1.5 0 1.5 0.1 1.5 0 1.5 0 1.5 0 1.5 0 1.5 0 1.5 0.1 1.5 0 1.5 -0.1 1.5 0 1.5 0 1.5 0.2 1.5 0 1.5 -0.2 1.5 0 1.5 0.2 1.5 -0.1 1.5 0 1.5 0.1 1.5 -0.2 1.5 0.2 1.5 -0.1 1.5 0.1 1.5 -0.1 1.5 0.1 1.5 -0.1 1.5 0.1 1.5 0 1.5 -0.1 1.5 0.1 1.5 -7.3 1.5 -4 1.5 2.8 1.5 0.6 1.5 0.9 1.5 -1.1 1.5 2.1 1.5 -0.4 1.5 0 1.5 1 1.5 0.4 1.5 0 1.5 0.4 1.5 0 1.5 -0.1 1.5 0.8 1.5 0.6 1.5 0.3 1.5 0.3 1.5 0.1 1.5 -0.2 1.5 0.2 1.5 0.3 1.5 -0.1 1.5 0.1 1.5 0.3 1.5 0.4 1.5 -0.4 1.5 0.7 1.5 -0.1 1.5 0.2 1.5 -0.1 1.5 0 1.5 -0.1 1.5 0.2 1.5 0.2 1.5 -0.2 1.5 0 1.5 0.2 1.5 0.3 1.5 -0.1 1.5 -0.1 1.5 0.2 1.5 0 1.5 0.1 1.5 0 1.5 0 1.5 -0.1 1.5 0.3 1.5 -0.1 1.5 -0.1 1.5 0 1.5 0.2 1.5 0.1 1.5 0.1 1.5 0 1.5 -0.1 1.5 -0.1 1.5 0 1.5 0.2 1.5 -0.2 1.5 0.2 1.5 -0.1 1.5 0.1 1.5 -0.1 1.5 -0.1 1.5 0 1.5 0.2 1.5 -0.2 1.5 0.2 1.5 0 1.5 0 1.5 0 1.5 -0.1 1.5 0.2 1.5 -0.2 1.5 0 1.5 0.2 1.5 0 1.5 -0.1 1.5 -0.1 1.5 0 1.5 -0.1 1.5 0.1 1.5 -4.2 1.5 -6.4 1.5 0.3 1.5 0.8 1.5 2.5 1.5 -1.2 1.5 1 1.5 0.8 1.5 0.6 1.5 0.5 1.5 0.7 1.5 0.3 1.5 0.1 1.5 0.3 1.5 -0.1 1.5 0.3 1.5 0.8 1.5 -0.6 1.5 0.2 1.5 0.7 1.5 -0.3 1.5 0.2 1.5 0.3 1.5 0.2 1.5 0.7 1.5 -0.4 1.5 0.1 1.5 0.2 1.5 0.1 1.5 0.4 1.5 0 1.5 0.1 1.5 0 1.5 -0.1 1.5 0.4 1.5 -0.2 1.5 0.2 1.5 0.2 1.5 -0.1 1.5 0.4 1.5 -0.2 1.5 0.2 1.5 0 1.5 -0.2 1.5 0.2 1.5 0 1.5 0 1.5 -0.1 1.5 0.2 1.5 0.1 1.5 0.1 1.5 0 1.5 -0.2 1.5 0 1.5 0 1.5 0.3 1.5 -0.1 1.5 -0.1 1.5 0.2 1.5 -0.2 1.5 0.2 1.5 0 1.5 -0.1 1.5 0 1.5 0.1 1.5 0 1.5 -0.1 1.5 0.1 1.5 0.1 1.5 0 1.5 0 1.5 -0.2 1.5 0.1 1.5 -0.1 1.5 0 1.5 -0.1 1.5 0.1 1.5 0.1 1.5 0 1.5 0 1.5 -0.1 1.5 0 1.5 0.1 1.5 0 1.5 -2.1 1.5 -5.9 1.5 -2.9 1.5 1.8 1.5 -0.2 1.5 0.7 1.5 1.1 1.5 1.7 1.5 -0.3 1.5 0.3 1.5 -0.1 1.5 0.2 1.5 1.1 1.5 0 1.5 0.3 1.5 0.9 1.5 0 1.5 0.3 1.5 0.5 1.5 0 1.5 0 1.5 0.2 1.5 0.1 1.5 -0.2 1.5 0.4 1.5 0 1.5 0.6 1.5 0.1 1.5 -0.1 1.5 0.1 1.5 0.1 1.5 0 1.5 0.2 1.5 0.5 1.5 0 1.5 -0.3 1.5 0.3 1.5 0 1.5 0.1 1.5 -0.1 1.5 0.1 1.5 0.2 1.5 0 1.5 0.2 1.5 -0.2 1.5 0.3 1.5 0 1.5 -0.2 1.5 0.2 1.5 -0.2 1.5 0.3 1.5 -0.1 1.5 -0.1 1.5 0 1.5 0.2 1.5 0 1.5 0 1.5 0 1.5 -0.2 1.5 0 1.5 0 1.5 0 1.5 0.1 1.5 0.1 1.5 -0.2 1.5 0 1.5 0 1.5 0.1 1.5 0 1.5 -0.2 1.5 0 1.5 0 1.5 0 1.5 0 1.5 0 1.5 0.1 1.5 0.1 1.5 0 1.5 -0.2 1.5 0 1.5 0.1 1.5 0 1.5 0 0 1.4 -1.5 0 -1.5 0 -1.5 0.1 -1.5 0 -1.5 -0.2 -1.5 0 -1.5 0.1 -1.5 0.1 -1.5 0 -1.5 0 -1.5 0 -1.5 0 -1.5 0 -1.5 -0.1 -1.5 0 -1.5 0.1 -1.5 0 -1.5 0 -1.5 -0.2 -1.5 0.1 -1.5 0.1 -1.5 0 -1.5 0 -1.5 0 -1.5 -0.2 -1.5 0 -1.5 0 -1.5 0 -1.5 0.2 -1.5 0 -1.5 -0.1 -1.5 -0.1 -1.5 0.3 -1.5 -0.1 -1.5 0.2 -1.5 -0.2 -1.5 0 -1.5 0.3 -1.5 -0.2 -1.5 0.2 -1.5 0 -1.5 0.2 -1.5 0.1 -1.5 -0.1 -1.5 0.1 -1.5 0 -1.5 0.3 -1.5 -0.3 -1.5 0 -1.5 0.5 -1.5 0.1 -1.5 0 -1.5 0.1 -1.5 0.1 -1.5 -0.1 -1.5 0.1 -1.5 0.6 -1.5 0 -1.5 0.4 -1.5 -0.2 -1.5 0.1 -1.5 0.2 -1.5 0 -1.5 0 -1.5 0.5 -1.5 0.3 -1.5 0 -1.5 0.8 -1.5 0.3 -1.5 0 -1.5 1 -1.5 0.2 -1.5 -0.1 -1.5 0.3 -1.5 -0.3 -1.5 1.6 -1.5 1 -1.5 0.7 -1.5 -0.2 -1.5 1.7 -1.5 -2.8 -1.5 -5.6 -1.5 -2 -1.5 0 -1.5 0.1 -1.5 0 -1.5 -0.1 -1.5 0 -1.5 0 -1.5 0.1 -1.5 0.1 -1.5 -0.1 -1.5 0 -1.5 -0.1 -1.5 0.1 -1.5 -0.2 -1.5 0 -1.5 0 -1.5 0.1 -1.5 0.1 -1.5 -0.1 -1.5 0 -1.5 0.1 -1.5 0 -1.5 -0.1 -1.5 0 -1.5 0.2 -1.5 -0.2 -1.5 0.2 -1.5 -0.1 -1.5 -0.1 -1.5 0.2 -1.5 0 -1.5 0 -1.5 -0.2 -1.5 0 -1.5 0.1 -1.5 0.1 -1.5 0.2 -1.5 -0.1 -1.5 0 -1.5 0 -1.5 0.2 -1.5 -0.2 -1.5 0 -1.5 0.2 -1.5 -0.2 -1.5 0.4 -1.5 -0.1 -1.5 0.2 -1.5 0.1 -1.5 -0.2 -1.5 0.4 -1.5 -0.1 -1.5 0 -1.5 0 -1.5 0 -1.5 0.3 -1.5 0.1 -1.5 0.2 -1.5 0.1 -1.5 -0.3 -1.5 0.7 -1.5 0.1 -1.5 0.3 -1.5 0.2 -1.5 -0.3 -1.5 0.7 -1.5 0.2 -1.5 -0.6 -1.5 0.8 -1.5 0.2 -1.5 -0.1 -1.5 0.3 -1.5 0.1 -1.5 0.3 -1.5 0.7 -1.5 0.5 -1.5 0.5 -1.5 0.8 -1.5 1 -1.5 -1.2 -1.5 2.3 -1.5 0.8 -1.5 0.3 -1.5 -6.1 -1.5 -4 -1.5 0.1 -1.5 -0.1 -1.5 0 -1.5 -0.1 -1.5 -0.1 -1.5 0 -1.5 0.2 -1.5 0 -1.5 -0.1 -1.5 0.2 -1.5 -0.1 -1.5 0 -1.5 0 -1.5 0 -1.5 0.2 -1.5 -0.2 -1.5 0.2 -1.5 0 -1.5 -0.1 -1.5 -0.1 -1.5 0.1 -1.5 -0.1 -1.5 0.2 -1.5 -0.2 -1.5 0.2 -1.5 0 -1.5 -0.1 -1.5 -0.1 -1.5 0 -1.5 0.1 -1.5 0.1 -1.5 0.1 -1.5 0 -1.5 -0.1 -1.5 -0.1 -1.5 0.3 -1.5 -0.1 -1.5 0 -1.5 0 -1.5 0.1 -1.5 0 -1.5 0.2 -1.5 -0.1 -1.5 -0.1 -1.5 0.3 -1.5 0.2 -1.5 0 -1.5 -0.2 -1.5 0.2 -1.5 0.2 -1.5 -0.1 -1.5 0 -1.5 -0.1 -1.5 0.2 -1.5 0 -1.5 0.6 -1.5 -0.4 -1.5 0.4 -1.5 0.3 -1.5 0.1 -1.5 -0.1 -1.5 0.3 -1.5 0.2 -1.5 -0.1 -1.5 0.1 -1.5 0.2 -1.5 0.3 -1.5 0.6 -1.5 0.8 -1.5 -0.1 -1.5 0 -1.5 0.4 -1.5 0 -1.5 0.4 -1.5 0.9 -1.5 0 -1.5 -0.4 -1.5 2 -1.5 -1 -1.5 0.8 -1.5 0.6 -1.5 2.7 -1.5 -3.8 -1.5 -7 -1.5 0.1 -1.5 -0.1 -1.5 0 -1.5 0.1 -1.5 -0.1 -1.5 0.1 -1.5 -0.1 -1.5 0.1 -1.5 -0.1 -1.5 0.2 -1.5 -0.2 -1.5 0.1 -1.5 0 -1.5 -0.1 -1.5 0.2 -1.5 0 -1.5 -0.2 -1.5 0 -1.5 0.2 -1.5 0 -1.5 0 -1.5 -0.1 -1.5 0 -1.5 0.1 -1.5 0 -1.5 0 -1.5 0 -1.5 0 -1.5 0 -1.5 0.1 -1.5 0 -1.5 0 -1.5 -0.1 -1.5 0.1 -1.5 0 -1.5 0.2 -1.5 -0.1 -1.5 0 -1.5 0.1 -1.5 0 -1.5 0.1 -1.5 -0.2 -1.5 0.2 -1.5 0 -1.5 0.2 -1.5 -0.1 -1.5 0.2 -1.5 0 -1.5 0 -1.5 -0.3 -1.5 0.2 -1.5 0.4 -1.5 0.1 -1.5 -0.2 -1.5 0 -1.5 0.3 -1.5 0.2 -1.5 0 -1.5 -0.1 -1.5 0 -1.5 0.4 -1.5 0.3 -1.5 0.1 -1.5 0 -1.5 0.2 -1.5 0.4 -1.5 -0.4 -1.5 1.1 -1.5 0.3 -1.5 -0.5 -1.5 1.1 -1.5 -0.6 -1.5 1.4 -1.5 -0.7 -1.5 1.7 -1.5 0.1 -1.5 0.1 -1.5 0.1 -1.5 0.2 -1.5 0.6 -1.5 1.4 -1.5 -0.8 -1.5 2.6z" fill="#0b2224"/>
<rect x="2262" y="1101.2" width="12" height="12" fill="#45cfd0"/>
<path d="M2264 1111.2L2271.5 1104.2V1111.2z" fill="#0b2224"/>
<rect x="923.5" y="1121.6" width="67" height="45" fill="#15150f"/>
<rect x="924" y="1122.1" width="66" height="44" fill="#44e2e2"/>
<rect x="925.6" y="1123.7" width="62.8" height="40.8" fill="#2ea2a3"/>
<path d="M958.1 1123.6v41" stroke="#25908f" stroke-width="1.2"/>
<path d="M927 1143.6l0 -6.2 1 0 1 0.3 1 0.3 1 1.2 1 -0.3 1 0.8 1 0.4 1 0.6 1 0.4 1 0.5 1 0.6 1 0 1 -4.2 1 -1.4 1 0.2 1 1.2 1 -0.4 1 0.5 1 0.9 1 0 1 0.8 1 -0.3 1 0.3 1 0.6 1 0.8 1 0.6 1 0.3 1 -0.8 1 -3.9 1 -1.4 1 0.6 1 1.2 1 -0.4 1 1.1 1 -0.5 1 0.9 1 0.8 1 -0.1 1 0.9 1 0.5 1 -0.1 1 0.8 1 0.4 1 -2.1 1 -4.5 1 0.8 1 0.8 1 0.6 1 -0.3 1 0.9 1 0 1 0.7 1 0.1 1 0.7 1 0.4 1 0.1 1 0.7 1 0.5 1 0.8 1 -3.1 0 8.1 -1 -3 -1 0.8 -1 0.5 -1 0.6 -1 0.1 -1 0.4 -1 0.7 -1 0.1 -1 0.7 -1 0 -1 0.9 -1 -0.3 -1 0.6 -1 0.8 -1 0.8 -1 -4.3 -1 -2 -1 0.4 -1 0.8 -1 0 -1 0.5 -1 0.9 -1 -0.1 -1 0.8 -1 0.8 -1 -0.5 -1 1.1 -1 -0.4 -1 1.1 -1 0.6 -1 -1.3 -1 -3.8 -1 -0.7 -1 0.3 -1 0.6 -1 0.7 -1 0.5 -1 0.3 -1 -0.3 -1 0.8 -1 0 -1 0.8 -1 0.5 -1 -0.4 -1 1.1 -1 0.2 -1 -1.3 -1 -4 -1 0 -1 0.5 -1 0.4 -1 0.4 -1 0.6 -1 0.3 -1 0.8 -1 -0.3 -1 1.1 -1 0.2 -1 0.3 -1 0z" fill="#0b2224"/>
<rect x="935" y="1150.1" width="12" height="12" fill="#45cfd0"/>
<path d="M937 1160.1L944.5 1153.1V1160.1z" fill="#0b2224"/>
<rect x="1937.5" y="1121.6" width="65" height="45" fill="#15150f"/>
<rect x="1938" y="1122.1" width="64" height="44" fill="#44e2e2"/>
<rect x="1939.6" y="1123.7" width="60.8" height="40.8" fill="#2ea2a3"/>
<path d="M1970.4 1123.6v41" stroke="#25908f" stroke-width="1.2"/>
<path d="M1941 1143.6l0 -6.6 1 0.5 1 0.2 1 0.6 1 0.3 1 1 1 -0.2 1 0.5 1 0.5 1 0.2 1 0.6 1 0.5 1 0.1 1 -4.6 1 -0.6 1 0.4 1 -0.4 1 1.2 1 -0.5 1 1.3 1 0.4 1 -0.3 1 0.5 1 0.9 1 0 1 0.8 1 0.5 1 0.5 1 -1.1 1 -4.5 1 -0.5 1 1 1 0.8 1 0.1 1 0.2 1 0.3 1 0.1 1 1.1 1 0 1 0.5 1 0.3 1 0.6 1 0.4 1 0.8 1 -1.8 1 -3.7 1 -0.5 1 0.1 1 1.1 1 -0.4 1 1.4 1 0.5 1 -0.2 1 0.3 1 0.7 1 0 1 0.8 1 0.6 1 0.5 0 3.2 -1 0.5 -1 0.6 -1 0.7 -1 0 -1 0.7 -1 0.3 -1 -0.2 -1 0.4 -1 1.4 -1 -0.4 -1 1.1 -1 0.1 -1 -0.4 -1 -3.5 -1 -1.7 -1 0.7 -1 0.4 -1 0.6 -1 0.3 -1 0.5 -1 0 -1 1 -1 0.1 -1 0.3 -1 0.2 -1 0.1 -1 0.8 -1 1 -1 -0.5 -1 -4.2 -1 -1 -1 0.5 -1 0.5 -1 0.8 -1 0 -1 0.8 -1 0.4 -1 -0.3 -1 0.3 -1 1.2 -1 -0.5 -1 1.2 -1 -0.4 -1 0.4 -1 -0.6 -1 -4.4 -1 0.1 -1 0.5 -1 0.6 -1 0.2 -1 0.5 -1 0.5 -1 -0.1 -1 0.9 -1 0.3 -1 0.6 -1 0.2 -1 0.5z" fill="#0b2224"/>
<rect x="1949" y="1150.1" width="12" height="12" fill="#45cfd0"/>
<path d="M1951 1160.1L1958.5 1153.1V1160.1z" fill="#0b2224"/>
<rect x="2187.5" y="1121.6" width="68" height="45" fill="#15150f"/>
<rect x="2188" y="1122.1" width="67" height="44" fill="#44e2e2"/>
<rect x="2189.6" y="1123.7" width="63.8" height="40.8" fill="#2ea2a3"/>
<path d="M2191.8 1123.6v41M2223.4 1123.6v41" stroke="#25908f" stroke-width="1.2"/>
<path d="M2191 1143.6l0 -5.7 1 -0.2 1 0.7 1 0.6 1 0.2 1 0.2 1 0.4 1 0.2 1 0.3 1 0.5 1 0.8 1 0.5 1 -0.3 1 -3.7 1 -0.9 1 -0.2 1 -0.1 1 0.4 1 1.4 1 0.3 1 -0.1 1 0 1 1.1 1 -0.2 1 0.7 1 0.7 1 0.2 1 0.8 1 -0.8 1 -3.6 1 -1 1 0 1 1.1 1 0.4 1 -0.1 1 0.3 1 0.8 1 0.4 1 -0.3 1 0.9 1 0.2 1 0.3 1 0.9 1 0.4 1 -2.2 1 -2.9 1 -0.7 1 0.2 1 0.3 1 1.5 1 -0.7 1 0.6 1 0.4 1 1.1 1 -0.3 1 1 1 0.3 1 0.4 1 0.6 1 0.5 1 -3.4 1 -3 0 14.7 -1 -2.9 -1 -3.2 -1 0.5 -1 0.5 -1 0.4 -1 0.3 -1 1 -1 -0.3 -1 1 -1 0.4 -1 0.6 -1 -0.6 -1 1.4 -1 0.3 -1 0.2 -1 -0.7 -1 -2.7 -1 -2.1 -1 0.4 -1 0.9 -1 0.3 -1 0.2 -1 0.9 -1 -0.3 -1 0.4 -1 0.8 -1 0.3 -1 -0.1 -1 0.3 -1 1.1 -1 0 -1 -0.9 -1 -3.4 -1 -0.8 -1 0.8 -1 0.1 -1 0.7 -1 0.7 -1 -0.2 -1 1 -1 0 -1 -0.1 -1 0.3 -1 1.3 -1 0.4 -1 -0.1 -1 -0.1 -1 -0.9 -1 -3.5 -1 -0.3 -1 0.4 -1 0.7 -1 0.5 -1 0.2 -1 0.2 -1 0.4 -1 0.2 -1 0.1 -1 0.6 -1 0.6 -1 -0.2z" fill="#0b2224"/>
<rect x="2199" y="1150.1" width="12" height="12" fill="#45cfd0"/>
<path d="M2201 1160.1L2208.5 1153.1V1160.1z" fill="#0b2224"/>
<rect x="2440.5" y="1121.6" width="67" height="45" fill="#15150f"/>
<rect x="2441" y="1122.1" width="66" height="44" fill="#44e2e2"/>
<rect x="2442.6" y="1123.7" width="62.8" height="40.8" fill="#2ea2a3"/>
<path d="M2444.9 1123.6v41M2476.5 1123.6v41" stroke="#25908f" stroke-width="1.2"/>
<path d="M2444 1143.6l0 -5.8 1 0.1 1 0.2 1 0.3 1 -0.2 1 0.8 1 0.5 1 0.6 1 0.3 1 0.7 1 0.2 1 0.7 1 -0.2 1 -4.5 1 -0.5 1 -0.1 1 0.3 1 0.3 1 1.3 1 -0.5 1 1.1 1 0.3 1 -0.2 1 0.6 1 0.5 1 0.7 1 0.8 1 0.5 1 -1.1 1 -4.1 1 -0.1 1 -0.1 1 0.3 1 0.4 1 0.7 1 0.3 1 0.7 1 -0.2 1 0.5 1 0.6 1 0.3 1 0.9 1 0.2 1 0.8 1 -2.2 1 -4.3 1 1.4 1 -0.6 1 0.3 1 0.6 1 1 1 0.3 1 0.4 1 -0.4 1 0.7 1 0.4 1 0.7 1 0.3 1 0.6 1 0.8 1 -3.3 0 8.5 -1 -3.2 -1 0.8 -1 0.6 -1 0.3 -1 0.6 -1 0.4 -1 0.7 -1 -0.3 -1 0.4 -1 0.2 -1 1 -1 0.6 -1 0.3 -1 -0.6 -1 1.3 -1 -4 -1 -2.1 -1 0.8 -1 0.2 -1 0.8 -1 0.3 -1 0.5 -1 0.5 -1 -0.2 -1 0.6 -1 0.3 -1 0.7 -1 0.4 -1 0.3 -1 -0.1 -1 -0.1 -1 -3.9 -1 -1.1 -1 0.5 -1 0.7 -1 0.6 -1 0.5 -1 0.5 -1 -0.2 -1 0.3 -1 1 -1 -0.5 -1 1.3 -1 0.3 -1 0.3 -1 -0.1 -1 -0.5 -1 -4.2 -1 -0.2 -1 0.7 -1 0.2 -1 0.6 -1 0.3 -1 0.5 -1 0.5 -1 0.8 -1 -0.2 -1 0.3 -1 0.2 -1 0.1z" fill="#0b2224"/>
<rect x="2452" y="1150.1" width="12" height="12" fill="#45cfd0"/>
<path d="M2454 1160.1L2461.5 1153.1V1160.1z" fill="#0b2224"/>
<rect x="2693.5" y="1121.6" width="67" height="45" fill="#15150f"/>
<rect x="2694" y="1122.1" width="66" height="44" fill="#44e2e2"/>
<rect x="2695.6" y="1123.7" width="62.8" height="40.8" fill="#2ea2a3"/>
<path d="M2697.9 1123.6v41M2729.6 1123.6v41" stroke="#25908f" stroke-width="1.2"/>
<path d="M2697 1143.6l0 -6.6 1 1 1 -0.4 1 0.5 1 1.2 1 -0.5 1 0.5 1 0.6 1 0.4 1 0.4 1 0.7 1 0.6 1 -0.3 1 -3.7 1 -1.2 1 0 1 1 1 0.1 1 0.6 1 0.4 1 0.4 1 -0.2 1 0.3 1 0.4 1 0.6 1 0.4 1 0.7 1 0.7 1 -1.3 1 -3.8 1 -0.3 1 -0.1 1 1.2 1 0 1 0.3 1 -0.2 1 1.2 1 0.2 1 0.7 1 0.3 1 0.5 1 0.4 1 0.4 1 0.5 1 -1.8 1 -3.8 1 -0.1 1 -0.2 1 0.5 1 0.5 1 1.4 1 -0.5 1 0.6 1 0.9 1 -0.2 1 0.6 1 0.4 1 1 1 0.3 1 0.7 1 -3.5 0 8.7 -1 -3.3 -1 0.7 -1 0.3 -1 0.9 -1 0.4 -1 0.5 -1 -0.2 -1 0.8 -1 0.6 -1 -0.5 -1 1.3 -1 0.5 -1 0.5 -1 -0.2 -1 -0.1 -1 -3.6 -1 -1.7 -1 0.5 -1 0.4 -1 0.4 -1 0.4 -1 0.3 -1 0.6 -1 0.2 -1 1.2 -1 -0.2 -1 0.3 -1 0 -1 1.2 -1 -0.1 -1 -0.3 -1 -3.6 -1 -1.2 -1 0.7 -1 0.7 -1 0.4 -1 0.6 -1 0.4 -1 0.3 -1 -0.2 -1 0.4 -1 0.4 -1 0.6 -1 0.1 -1 0.9 -1 0 -1 -1.1 -1 -3.6 -1 -0.3 -1 0.6 -1 0.7 -1 0.4 -1 0.4 -1 0.6 -1 0.5 -1 -0.5 -1 1.1 -1 0.5 -1 -0.4 -1 1z" fill="#0b2224"/>
<rect x="2705" y="1150.1" width="12" height="12" fill="#45cfd0"/>
<path d="M2707 1160.1L2714.5 1153.1V1160.1z" fill="#0b2224"/>
<rect x="923.5" y="1170.5" width="67" height="45" fill="#15150f"/>
<rect x="924" y="1171" width="66" height="44" fill="#44e2e2"/>
<rect x="925.6" y="1172.6" width="62.8" height="40.8" fill="#2ea2a3"/>
<path d="M958.1 1172.5v41" stroke="#25908f" stroke-width="1.2"/>
<path d="M927 1192.5l0 -5.7 1 -0.5 1 0 1 1 1 0.6 1 -0.2 1 0.5 1 1.1 1 0.3 1 0.5 1 0.5 1 0.5 1 -0.4 1 -4.3 1 0 1 0.3 1 -0.4 1 -0.1 1 1 1 0 1 0.3 1 1.2 1 -0.3 1 0.9 1 0.6 1 0.1 1 0.7 1 0.4 1 -1.1 1 -3.4 1 -0.3 1 0.1 1 -0.6 1 1 1 -0.2 1 1.3 1 -0.4 1 0.5 1 0.8 1 0.1 1 0.5 1 0.7 1 0.5 1 0.6 1 -2.4 1 -3.8 1 0.8 1 0.3 1 -0.1 1 0.2 1 1 1 0.5 1 0.6 1 0.4 1 0.3 1 0.1 1 0.7 1 0.4 1 0.7 1 0.5 1 -3.1 0 8.2 -1 -2.9 -1 0.5 -1 0.7 -1 0.4 -1 0.7 -1 0.1 -1 0.3 -1 0.3 -1 0.6 -1 0.5 -1 0.9 -1 0.1 -1 -0.1 -1 0.3 -1 0.8 -1 -3.6 -1 -2.3 -1 0.5 -1 0.5 -1 0.7 -1 0.5 -1 0.1 -1 0.8 -1 0.5 -1 -0.3 -1 1.3 -1 -0.2 -1 1 -1 -0.6 -1 0.1 -1 -0.3 -1 -3.2 -1 -1 -1 0.4 -1 0.7 -1 0.1 -1 0.6 -1 0.9 -1 -0.3 -1 1.1 -1 0.3 -1 0 -1 1 -1 -0.1 -1 -0.4 -1 0.2 -1 0 -1 -4.1 -1 -0.4 -1 0.4 -1 0.5 -1 0.5 -1 0.3 -1 1 -1 0.5 -1 -0.2 -1 0.5 -1 0.9 -1 0 -1 -0.5z" fill="#0b2224"/>
<rect x="935" y="1199" width="12" height="12" fill="#45cfd0"/>
<path d="M937 1209L944.5 1202V1209z" fill="#0b2224"/>
<rect x="1937.5" y="1170.5" width="65" height="45" fill="#15150f"/>
<rect x="1938" y="1171" width="64" height="44" fill="#44e2e2"/>
<rect x="1939.6" y="1172.6" width="60.8" height="40.8" fill="#2ea2a3"/>
<path d="M1970.4 1172.5v41" stroke="#25908f" stroke-width="1.2"/>
<path d="M1941 1192.5l0 -6 1 0.2 1 0.4 1 -0.3 1 1 1 0.2 1 0.6 1 0.5 1 0.2 1 0.5 1 0.6 1 0.6 1 0 1 -3.7 1 -2.4 1 0.7 1 1.3 1 -0.7 1 0.6 1 0.9 1 0.6 1 0.1 1 0.7 1 -0.3 1 0.9 1 0.6 1 0.3 1 0.4 1 -0.9 1 -4.2 1 -1 1 1.7 1 -0.7 1 0.5 1 0.3 1 1 1 0.4 1 0 1 0.4 1 0.2 1 1 1 0.1 1 0.7 1 0.7 1 -1.6 1 -4.6 1 0.6 1 0.6 1 0 1 0.8 1 0.4 1 -0.1 1 1.1 1 0.3 1 0.3 1 0.3 1 0.8 1 0.3 1 0.5 0 3.3 -1 0.5 -1 0.3 -1 0.7 -1 0.3 -1 0.3 -1 0.3 -1 1 -1 -0.1 -1 0.4 -1 0.7 -1 0 -1 0.5 -1 0.6 -1 -4.3 -1 -1.5 -1 0.6 -1 0.6 -1 0 -1 1 -1 0.2 -1 0.4 -1 0 -1 0.4 -1 0.9 -1 0.3 -1 0.5 -1 -0.6 -1 1.6 -1 -0.9 -1 -4 -1 -0.9 -1 0.4 -1 0.3 -1 0.6 -1 0.8 -1 -0.3 -1 0.7 -1 0.1 -1 0.6 -1 0.8 -1 0.6 -1 -0.6 -1 1.2 -1 0.7 -1 -2.3 -1 -3.5 -1 0 -1 0.6 -1 0.6 -1 0.5 -1 0.2 -1 0.4 -1 0.6 -1 0.2 -1 0.9 -1 -0.3 -1 0.4 -1 0.2z" fill="#0b2224"/>
<rect x="1949" y="1199" width="12" height="12" fill="#45cfd0"/>
<path d="M1951 1209L1958.5 1202V1209z" fill="#0b2224"/>
<rect x="2187.5" y="1170.5" width="68" height="45" fill="#15150f"/>
<rect x="2188" y="1171" width="67" height="44" fill="#44e2e2"/>
<rect x="2189.6" y="1172.6" width="63.8" height="40.8" fill="#2ea2a3"/>
<path d="M2191.8 1172.5v41M2223.4 1172.5v41" stroke="#25908f" stroke-width="1.2"/>
<path d="M2191 1192.5l0 -6.6 1 1.2 1 0 1 0.4 1 0 1 0.3 1 0.5 1 0.8 1 0.4 1 0.6 1 0.5 1 0.4 1 -0.2 1 -4.6 1 -0.2 1 -0.2 1 0.9 1 0.1 1 -0.4 1 0.6 1 1.1 1 0.5 1 -0.3 1 0.6 1 0.8 1 0.3 1 0.6 1 0.6 1 -1 1 -4 1 -0.3 1 0.6 1 -0.1 1 -0.2 1 0.2 1 0.4 1 0.9 1 0.2 1 0.7 1 0.3 1 0.5 1 0.9 1 0.3 1 0.7 1 -2 1 -3.9 1 0.8 1 0.1 1 0.6 1 0 1 0.3 1 -0.3 1 1.1 1 0.7 1 0.4 1 0 1 0.5 1 0.3 1 0.9 1 0.4 1 -2.8 1 -3.4 0 14.3 -1 -3.2 -1 -2.7 -1 0.4 -1 0.9 -1 0.3 -1 0.5 -1 0 -1 0.4 -1 0.6 -1 1 -1 -0.3 -1 0.3 -1 0 -1 0.5 -1 0.1 -1 0.8 -1 -3.7 -1 -1.9 -1 0.6 -1 0.3 -1 0.8 -1 0.5 -1 0.3 -1 0.6 -1 0.2 -1 0.9 -1 0.4 -1 0.2 -1 -0.2 -1 -0.1 -1 0.6 -1 -0.3 -1 -3.8 -1 -1 -1 0.5 -1 0.6 -1 0.3 -1 0.7 -1 0.6 -1 -0.3 -1 0.5 -1 1 -1 0.6 -1 -0.4 -1 0.1 -1 0.8 -1 -0.2 -1 -0.2 -1 -4.4 -1 -0.2 -1 0.4 -1 0.5 -1 0.6 -1 0.4 -1 0.8 -1 0.4 -1 0.2 -1 0 -1 0.4 -1 0 -1 1.2z" fill="#0b2224"/>
<rect x="2199" y="1199" width="12" height="12" fill="#45cfd0"/>
<path d="M2201 1209L2208.5 1202V1209z" fill="#0b2224"/>
<rect x="2440.5" y="1170.5" width="67" height="45" fill="#15150f"/>
<rect x="2441" y="1171" width="66" height="44" fill="#44e2e2"/>
<rect x="2442.6" y="1172.6" width="62.8" height="40.8" fill="#2ea2a3"/>
<path d="M2444.9 1172.5v41M2476.5 1172.5v41" stroke="#25908f" stroke-width="1.2"/>
<path d="M2444 1192.5l0 -5.8 1 0.2 1 0.5 1 0 1 0.6 1 0.6 1 -0.3 1 0.8 1 0.6 1 0.5 1 0.2 1 0.8 1 -0.1 1 -4.5 1 -0.3 1 -0.6 1 0.2 1 0.3 1 1.3 1 0.1 1 -0.2 1 1.2 1 0.1 1 0.8 1 0.3 1 0.6 1 0.3 1 0.6 1 -1.4 1 -4.1 1 0.6 1 -0.9 1 0.3 1 1.4 1 0.1 1 0.6 1 -0.4 1 1.2 1 0.1 1 0.3 1 0.3 1 0.7 1 0.3 1 0.7 1 -2 1 -3.1 1 -0.7 1 0.5 1 0.1 1 0.7 1 0.4 1 0.7 1 0.5 1 0.1 1 0.8 1 0.4 1 0.3 1 0.2 1 0.7 1 0.7 1 -3.1 0 8.5 -1 -3 -1 0.7 -1 0.6 -1 0.2 -1 0.3 -1 0.4 -1 0.8 -1 0.1 -1 0.4 -1 0.7 -1 0.3 -1 0.6 -1 0.1 -1 0.5 -1 -0.7 -1 -3 -1 -1.9 -1 0.7 -1 0.3 -1 0.7 -1 0.3 -1 0.3 -1 0.1 -1 1.1 -1 -0.4 -1 0.6 -1 0.1 -1 1.4 -1 0.3 -1 -0.9 -1 0.6 -1 -3.9 -1 -1.3 -1 0.5 -1 0.3 -1 0.6 -1 0.3 -1 0.7 -1 0.1 -1 1.1 -1 -0.2 -1 0.1 -1 1.3 -1 0.3 -1 0.2 -1 -0.6 -1 -0.3 -1 -4.3 -1 -0.1 -1 0.7 -1 0.2 -1 0.5 -1 0.5 -1 0.8 -1 -0.3 -1 0.6 -1 0.6 -1 0 -1 0.5 -1 0.2z" fill="#0b2224"/>
<rect x="2452" y="1199" width="12" height="12" fill="#45cfd0"/>
<path d="M2454 1209L2461.5 1202V1209z" fill="#0b2224"/>
<rect x="2693.5" y="1170.5" width="67" height="45" fill="#15150f"/>
<rect x="2694" y="1171" width="66" height="44" fill="#44e2e2"/>
<rect x="2695.6" y="1172.6" width="62.8" height="40.8" fill="#2ea2a3"/>
<path d="M2697.9 1172.5v41M2729.6 1172.5v41" stroke="#25908f" stroke-width="1.2"/>
<path d="M2697 1192.5l0 -6.9 1 0.4 1 1.4 1 -0.1 1 0 1 0.8 1 0.4 1 0.2 1 0.4 1 0.5 1 0.8 1 0.4 1 -0.2 1 -3.4 1 -2 1 0 1 0.5 1 0.7 1 0.7 1 0 1 0.1 1 0.6 1 1 1 0.3 1 0.5 1 0.1 1 0.4 1 0.7 1 -0.8 1 -4.4 1 -0.3 1 0.4 1 0.1 1 0.6 1 0.7 1 0.6 1 -0.2 1 0.6 1 0.6 1 0.1 1 0.4 1 0.7 1 0.5 1 0.4 1 -2 1 -3.3 1 0.1 1 0.2 1 0.2 1 0.7 1 0.7 1 0.5 1 0.1 1 0.7 1 -0.1 1 0.8 1 0.4 1 0 1 0.8 1 0.7 1 -2.9 0 7.6 -1 -2.7 -1 0.7 -1 0.8 -1 0 -1 0.4 -1 0.7 -1 -0.1 -1 0.7 -1 0.1 -1 0.5 -1 0.7 -1 0.6 -1 0.2 -1 0.2 -1 0.1 -1 -3.2 -1 -1.9 -1 0.4 -1 0.5 -1 0.7 -1 0.4 -1 0.1 -1 0.6 -1 0.6 -1 -0.2 -1 0.5 -1 0.6 -1 0.6 -1 0.1 -1 0.4 -1 -0.3 -1 -4.1 -1 -0.8 -1 0.6 -1 0.4 -1 0.1 -1 0.5 -1 0.3 -1 1 -1 0.6 -1 0 -1 0 -1 0.6 -1 0.6 -1 0.5 -1 0 -1 -1.9 -1 -3.3 -1 -0.2 -1 0.4 -1 0.8 -1 0.5 -1 0.4 -1 0.2 -1 0.4 -1 0.8 -1 0 -1 -0.1 -1 1.4 -1 0.4z" fill="#0b2224"/>
<rect x="2705" y="1199" width="12" height="12" fill="#45cfd0"/>
<path d="M2707 1209L2714.5 1202V1209z" fill="#0b2224"/>
<rect x="987.4" y="1219.5" width="511.9" height="45" fill="#15150f"/>
<rect x="987.9" y="1220" width="510.9" height="44" fill="#44e2e2"/>
<rect x="989.5" y="1221.6" width="507.7" height="40.8" fill="#2ea2a3"/>
<path d="M1021.3 1221.5v41M1053 1221.5v41M1084.6 1221.5v41M1116.2 1221.5v41M1147.9 1221.5v41M1179.5 1221.5v41M1211.1 1221.5v41M1242.8 1221.5v41M1274.4 1221.5v41M1306 1221.5v41M1337.7 1221.5v41M1369.3 1221.5v41M1401 1221.5v41M1432.6 1221.5v41M1464.2 1221.5v41" stroke="#25908f" stroke-width="1.2"/>
<path d="M990.9 1241.5l0 -1.2 1.5 0 1.5 0 1.5 0.2 1.5 -0.2 1.5 0.1 1.5 0 1.5 0.1 1.5 0 1.5 -0.1 1.5 0.1 1.5 -0.1 1.5 0.1 1.5 0 1.5 -0.2 1.5 0.1 1.5 0 1.5 -0.1 1.5 0.1 1.5 0.1 1.5 -0.2 1.5 0.1 1.5 0 1.5 0 1.5 -0.1 1.5 0.2 1.5 -0.1 1.5 0.1 1.5 -0.1 1.5 0 1.5 0.1 1.5 0.1 1.5 -0.1 1.5 -0.1 1.5 0 1.5 0 1.5 -0.1 1.5 0.1 1.5 0 1.5 0 1.5 -0.1 1.5 -4.3 1.5 0.1 1.5 1 1.5 0.8 1.5 0.4 1.5 0.3 1.5 0.3 1.5 0.7 1.5 0.2 1.5 0.2 1.5 0.1 1.5 -5.8 1.5 1.7 1.5 1.4 1.5 0.9 1.5 -0.1 1.5 0.6 1.5 0.3 1.5 0.7 1.5 0.1 1.5 0 1.5 -3.1 1.5 -2 1.5 2.3 1.5 -0.2 1.5 1.7 1.5 0.2 1.5 0.7 1.5 -0.2 1.5 0.4 1.5 0.1 1.5 0.3 1.5 -6.1 1.5 2.1 1.5 0.4 1.5 1.1 1.5 1 1.5 0 1.5 0.8 1.5 0.4 1.5 0.3 1.5 0 1.5 0.6 1.5 -0.2 1.5 0 1.5 0.2 1.5 0 1.5 -0.1 1.5 0.1 1.5 -0.1 1.5 -0.1 1.5 0.2 1.5 -0.1 1.5 -0.1 1.5 0.1 1.5 0 1.5 -0.2 1.5 0 1.5 0 1.5 0.1 1.5 0.1 1.5 -0.1 1.5 0 1.5 0.1 1.5 0.1 1.5 0 1.5 0 1.5 -0.1 1.5 0.1 1.5 0 1.5 -0.1 1.5 0.2 1.5 -0.2 1.5 0.1 1.5 -0.1 1.5 -0.1 1.5 0.2 1.5 -0.2 1.5 0.3 1.5 -0.1 1.5 0 1.5 0.1 1.5 -0.1 1.5 0 1.5 0 1.5 -5.8 1.5 2.3 1.5 0.3 1.5 0.3 1.5 1.2 1.5 -0.1 1.5 0.8 1.5 0 1.5 0.5 1.5 0 1.5 -5.5 1.5 1.9 1.5 0.1 1.5 1.1 1.5 0.5 1.5 0.7 1.5 0.4 1.5 0.3 1.5 0.4 1.5 -0.1 1.5 0.5 1.5 -6 1.5 1.3 1.5 1.5 1.5 0.5 1.5 0.7 1.5 0.5 1.5 0.6 1.5 0.3 1.5 0.2 1.5 0.2 1.5 -5.5 1.5 1.2 1.5 1 1.5 0.8 1.5 0.3 1.5 0.9 1.5 0.4 1.5 0.5 1.5 0.2 1.5 0.3 1.5 0.1 1.5 0.4 1.5 -0.2 1.5 0.1 1.5 0.1 1.5 -0.1 1.5 0.1 1.5 -0.1 1.5 0 1.5 -0.1 1.5 0.2 1.5 -0.2 1.5 0.2 1.5 -0.2 1.5 0.1 1.5 0.2 1.5 -0.2 1.5 0.2 1.5 0 1.5 0.1 1.5 -0.2 1.5 0.2 1.5 -0.2 1.5 0.1 1.5 -0.1 1.5 0.1 1.5 0.1 1.5 -0.3 1.5 0.1 1.5 0.1 1.5 -0.2 1.5 0 1.5 0.2 1.5 0 1.5 -0.2 1.5 0.1 1.5 -0.2 1.5 0.1 1.5 -0.1 1.5 0 1.5 -0.1 1.5 0 1.5 0.1 1.5 -6 1.5 1.7 1.5 1.2 1.5 0.8 1.5 -0.1 1.5 1.1 1.5 0.2 1.5 0.4 1.5 0.1 1.5 0.2 1.5 -0.7 1.5 -3.9 1.5 1.2 1.5 0.5 1.5 0.6 1.5 0.4 1.5 0.9 1.5 0 1.5 0.3 1.5 0.2 1.5 0.6 1.5 -5.5 1.5 0.6 1.5 1 1.5 1.8 1.5 0.2 1.5 0.2 1.5 0.4 1.5 0.5 1.5 0.4 1.5 0.1 1.5 0.3 1.5 -4.8 1.5 0.9 1.5 0.4 1.5 1 1.5 0.7 1.5 0.6 1.5 0.3 1.5 0.1 1.5 0.3 1.5 0.3 1.5 0.2 1.5 0.1 1.5 -0.1 1.5 0.1 1.5 0 1.5 0.1 1.5 -0.1 1.5 -0.1 1.5 0 1.5 0.1 1.5 0.1 1.5 0.1 1.5 -0.2 1.5 0.1 1.5 0 1.5 0.1 1.5 0 1.5 -0.1 1.5 -0.2 1.5 0.1 1.5 0 1.5 0 1.5 0.1 1.5 0 1.5 -0.1 1.5 0.2 1.5 -0.2 1.5 0 1.5 0 1.5 0.1 1.5 0 1.5 -0.1 1.5 0.1 1.5 -0.1 1.5 0.1 1.5 -0.1 1.5 0 1.5 0 1.5 0 1.5 0.1 1.5 0 1.5 -0.2 1.5 -3.4 1.5 -1.1 1.5 0.7 1.5 0.8 1.5 0.5 1.5 1 1.5 -0.1 1.5 1 1.5 -0.2 1.5 0.3 1.5 0 1.5 -4.4 1.5 0.3 1.5 0.7 1.5 1.2 1.5 1.1 1.5 -0.2 1.5 0.4 1.5 0.8 1.5 -0.1 1.5 0.5 1.5 -1.8 1.5 -3.5 1.5 1.3 1.5 0.7 1.5 1.1 1.5 0.7 1.5 0.6 1.5 0.1 1.5 0 1.5 0.4 1.5 0.1 1.5 -4.6 1.5 0.3 1.5 1.1 1.5 1.6 1.5 -0.1 1.5 1 1.5 0.3 1.5 0.4 1.5 -0.1 1.5 0.4 1.5 0.2 0.9 0.3 0 1.8 -0.9 0.3 -1.5 0.2 -1.5 0.4 -1.5 -0.1 -1.5 0.4 -1.5 0.3 -1.5 1 -1.5 -0.1 -1.5 1.5 -1.5 1 -1.5 0.3 -1.5 -4.4 -1.5 0.1 -1.5 0.4 -1.5 0 -1.5 0.1 -1.5 0.6 -1.5 0.6 -1.5 1.1 -1.5 0.6 -1.5 1.3 -1.5 -3.3 -1.5 -1.7 -1.5 0.5 -1.5 -0.1 -1.5 0.8 -1.5 0.4 -1.5 -0.2 -1.5 1.1 -1.5 1.1 -1.5 0.7 -1.5 0.3 -1.5 -4.2 -1.5 0 -1.5 0.3 -1.5 -0.2 -1.5 0.9 -1.5 -0.1 -1.5 0.9 -1.5 0.4 -1.5 0.8 -1.5 0.7 -1.5 -1 -1.5 -3.3 -1.5 -0.2 -1.5 0 -1.5 0.1 -1.5 0 -1.5 0 -1.5 0 -1.5 -0.1 -1.5 0.1 -1.5 -0.1 -1.5 0.1 -1.5 -0.1 -1.5 0 -1.5 0.1 -1.5 0 -1.5 0 -1.5 -0.1 -1.5 0.2 -1.5 -0.1 -1.5 0 -1.5 0.1 -1.5 0 -1.5 0 -1.5 0.1 -1.5 -0.2 -1.5 -0.1 -1.5 0 -1.5 0.1 -1.5 0 -1.5 0.1 -1.5 -0.2 -1.5 0.1 -1.5 0.1 -1.5 0.1 -1.5 0 -1.5 -0.1 -1.5 -0.1 -1.5 0.1 -1.5 0 -1.5 0.1 -1.5 -0.1 -1.5 0.1 -1.5 0.2 -1.5 0.3 -1.5 0.3 -1.5 0.1 -1.5 0.3 -1.5 0.5 -1.5 0.7 -1.5 1 -1.5 0.4 -1.5 0.9 -1.5 -4.6 -1.5 0.3 -1.5 0.1 -1.5 0.4 -1.5 0.4 -1.5 0.4 -1.5 0.2 -1.5 0.2 -1.5 1.7 -1.5 1 -1.5 0.6 -1.5 -5.2 -1.5 0.5 -1.5 0.2 -1.5 0.2 -1.5 0 -1.5 0.9 -1.5 0.4 -1.5 0.6 -1.5 0.5 -1.5 1.2 -1.5 -3.7 -1.5 -0.7 -1.5 0.2 -1.5 0.1 -1.5 0.3 -1.5 0.2 -1.5 1 -1.5 -0.1 -1.5 0.7 -1.5 1.2 -1.5 1.6 -1.5 -5.7 -1.5 0.1 -1.5 0 -1.5 -0.1 -1.5 0 -1.5 -0.1 -1.5 0.1 -1.5 -0.2 -1.5 0.1 -1.5 -0.2 -1.5 0 -1.5 0.2 -1.5 0 -1.5 -0.2 -1.5 0.1 -1.5 0.1 -1.5 -0.2 -1.5 0.1 -1.5 0.1 -1.5 -0.1 -1.5 0.1 -1.5 -0.2 -1.5 0.2 -1.5 -0.2 -1.5 0.1 -1.5 0 -1.5 0.2 -1.5 -0.2 -1.5 0.2 -1.5 0.1 -1.5 -0.2 -1.5 0.2 -1.5 -0.2 -1.5 0.2 -1.5 -0.1 -1.5 0 -1.5 -0.1 -1.5 0.1 -1.5 -0.1 -1.5 0.1 -1.5 0.1 -1.5 -0.2 -1.5 0.4 -1.5 0.1 -1.5 0.3 -1.5 0.2 -1.5 0.5 -1.5 0.3 -1.5 0.8 -1.5 0.3 -1.5 0.7 -1.5 0.9 -1.5 1.2 -1.5 -5.2 -1.5 0.2 -1.5 0.2 -1.5 0.2 -1.5 0.5 -1.5 0.5 -1.5 0.7 -1.5 0.4 -1.5 1.4 -1.5 1.3 -1.5 -5.7 -1.5 0.5 -1.5 -0.1 -1.5 0.4 -1.5 0.3 -1.5 0.4 -1.5 0.6 -1.5 0.4 -1.5 1.1 -1.5 0.1 -1.5 1.8 -1.5 -5.2 -1.5 0 -1.5 0.5 -1.5 0 -1.5 0.8 -1.5 -0.1 -1.5 1.1 -1.5 0.3 -1.5 0.3 -1.5 2.2 -1.5 -5.5 -1.5 0 -1.5 0 -1.5 -0.1 -1.5 0.1 -1.5 0 -1.5 -0.1 -1.5 0.2 -1.5 -0.2 -1.5 0.2 -1.5 -0.1 -1.5 -0.1 -1.5 0.1 -1.5 -0.1 -1.5 0.2 -1.5 -0.1 -1.5 0 -1.5 0.1 -1.5 -0.1 -1.5 0 -1.5 0 -1.5 0.1 -1.5 0.1 -1.5 0 -1.5 -0.1 -1.5 0.1 -1.5 0.1 -1.5 0 -1.5 0 -1.5 -0.2 -1.5 0 -1.5 0.1 -1.5 -0.1 -1.5 0 -1.5 0.2 -1.5 -0.1 -1.5 -0.1 -1.5 0.1 -1.5 -0.1 -1.5 0 -1.5 0.2 -1.5 0 -1.5 -0.2 -1.5 0.6 -1.5 0 -1.5 0.3 -1.5 0.4 -1.5 0.8 -1.5 0 -1.5 1 -1.5 1.1 -1.5 0.4 -1.5 2 -1.5 -5.8 -1.5 0.2 -1.5 0.1 -1.5 0.3 -1.5 -0.2 -1.5 0.7 -1.5 0.2 -1.5 1.6 -1.5 -0.2 -1.5 2.2 -1.5 -1.9 -1.5 -2.9 -1.5 0 -1.5 0.1 -1.5 0.6 -1.5 0.3 -1.5 0.5 -1.5 -0.1 -1.5 0.8 -1.5 1.3 -1.5 1.6 -1.5 -5.5 -1.5 0.1 -1.5 0.2 -1.5 0.2 -1.5 0.6 -1.5 0.2 -1.5 0.2 -1.5 0.3 -1.5 0.8 -1.5 0.9 -1.5 0.1 -1.5 -4.1 -1.5 -0.1 -1.5 0 -1.5 0 -1.5 0.1 -1.5 -0.1 -1.5 0 -1.5 0 -1.5 -0.1 -1.5 -0.1 -1.5 0.1 -1.5 0.1 -1.5 0 -1.5 -0.1 -1.5 0.1 -1.5 -0.1 -1.5 0.2 -1.5 -0.1 -1.5 0 -1.5 0 -1.5 0.1 -1.5 -0.2 -1.5 0.1 -1.5 0.1 -1.5 -0.1 -1.5 0 -1.5 0.1 -1.5 -0.2 -1.5 0 -1.5 0.1 -1.5 -0.1 -1.5 0.1 -1.5 -0.1 -1.5 0 -1.5 0.1 -1.5 0 -1.5 0 -1.5 -0.1 -1.5 0.2 -1.5 0 -1.5 0z" fill="#0b2224"/>
<rect x="998.9" y="1248" width="12" height="12" fill="#45cfd0"/>
<path d="M1000.9 1258L1008.4 1251V1258z" fill="#0b2224"/>
<rect x="987.4" y="1268.4" width="511.9" height="45" fill="#15150f"/>
<rect x="987.9" y="1268.9" width="510.9" height="44" fill="#44e2e2"/>
<rect x="989.5" y="1270.5" width="507.7" height="40.8" fill="#2ea2a3"/>
<path d="M1021.3 1270.4v41M1053 1270.4v41M1084.6 1270.4v41M1116.2 1270.4v41M1147.9 1270.4v41M1179.5 1270.4v41M1211.1 1270.4v41M1242.8 1270.4v41M1274.4 1270.4v41M1306 1270.4v41M1337.7 1270.4v41M1369.3 1270.4v41M1401 1270.4v41M1432.6 1270.4v41M1464.2 1270.4v41" stroke="#25908f" stroke-width="1.2"/>
<path d="M990.9 1290.4l0 -1.1 1.5 0 1.5 0.2 1.5 -0.2 1.5 0.2 1.5 -0.1 1.5 0.2 1.5 -0.2 1.5 0.2 1.5 -0.2 1.5 0 1.5 0 1.5 0.1 1.5 -0.1 1.5 0 1.5 0.3 1.5 -0.1 1.5 -0.1 1.5 0.1 1.5 0.1 1.5 0 1.5 -0.2 1.5 0.3 1.5 -0.2 1.5 0 1.5 0.2 1.5 -0.1 1.5 0 1.5 -0.1 1.5 0.1 1.5 -0.2 1.5 0 1.5 0.2 1.5 -0.2 1.5 0.2 1.5 0 1.5 -0.2 1.5 0 1.5 0 1.5 -0.1 1.5 0 1.5 -4.4 1.5 -0.8 1.5 0.9 1.5 1.9 1.5 0.2 1.5 0.8 1.5 0.4 1.5 0.1 1.5 0.2 1.5 0.1 1.5 0.5 1.5 -5.4 1.5 0.5 1.5 1.4 1.5 1.1 1.5 0.9 1.5 0.1 1.5 0.6 1.5 0.1 1.5 0.2 1.5 0.3 1.5 -3.6 1.5 -0.8 1.5 1 1.5 0.4 1.5 1.3 1.5 0.6 1.5 0.1 1.5 0.4 1.5 0 1.5 0.5 1.5 0.1 1.5 -4.5 1.5 0.5 1.5 1.2 1.5 0.6 1.5 0.3 1.5 1.1 1.5 -0.3 1.5 0.5 1.5 0.2 1.5 0.3 1.5 0.5 1.5 0.1 1.5 0 1.5 0.1 1.5 0 1.5 0 1.5 0 1.5 -0.2 1.5 0 1.5 0 1.5 0.2 1.5 -0.1 1.5 -0.1 1.5 0 1.5 0.1 1.5 -0.1 1.5 -0.1 1.5 0.2 1.5 0 1.5 -0.1 1.5 0.1 1.5 -0.1 1.5 0.1 1.5 0.1 1.5 -0.1 1.5 0.1 1.5 -0.2 1.5 0 1.5 0.1 1.5 -0.1 1.5 0.2 1.5 -0.1 1.5 0.1 1.5 0 1.5 -0.2 1.5 0.2 1.5 -0.3 1.5 0.1 1.5 0 1.5 0.2 1.5 -0.3 1.5 0 1.5 0.2 1.5 -4.9 1.5 1.1 1.5 0.4 1.5 1.2 1.5 -0.1 1.5 0.7 1.5 0.2 1.5 0.5 1.5 0 1.5 0.3 1.5 -6 1.5 1.8 1.5 0.2 1.5 1.1 1.5 0.7 1.5 1 1.5 0.5 1.5 0.3 1.5 0.2 1.5 -0.2 1.5 0.5 1.5 -5.9 1.5 2.3 1.5 0.4 1.5 1.2 1.5 0.5 1.5 0.1 1.5 0.5 1.5 0.1 1.5 0.6 1.5 0.2 1.5 -3.9 1.5 -0.1 1.5 -0.1 1.5 1.4 1.5 0.8 1.5 0.6 1.5 0.1 1.5 0.4 1.5 0.6 1.5 0.2 1.5 0.1 1.5 0.2 1.5 0 1.5 0.2 1.5 0 1.5 0 1.5 -0.1 1.5 0 1.5 0.2 1.5 0 1.5 0 1.5 -0.2 1.5 0.1 1.5 -0.1 1.5 0.2 1.5 -0.1 1.5 0 1.5 -0.1 1.5 0.2 1.5 0 1.5 -0.2 1.5 0 1.5 0.1 1.5 0.1 1.5 0.1 1.5 -0.1 1.5 -0.1 1.5 0.2 1.5 0 1.5 0 1.5 0.1 1.5 0 1.5 -0.1 1.5 -0.1 1.5 0 1.5 0.2 1.5 -0.1 1.5 0 1.5 0.1 1.5 0.1 1.5 0 1.5 -0.2 1.5 0 1.5 -5.2 1.5 1.3 1.5 0.9 1.5 -0.1 1.5 0.6 1.5 0.8 1.5 0.3 1.5 0.3 1.5 0.5 1.5 0 1.5 -0.5 1.5 -4.9 1.5 2.3 1.5 0 1.5 1.5 1.5 0.1 1.5 0.3 1.5 0.9 1.5 0 1.5 0.4 1.5 -0.1 1.5 -5.5 1.5 0.5 1.5 1.8 1.5 0.3 1.5 0.9 1.5 0.4 1.5 0.8 1.5 0.4 1.5 -0.1 1.5 0.4 1.5 -0.1 1.5 -4.3 1.5 0.4 1.5 0.8 1.5 0.6 1.5 1.3 1.5 0.4 1.5 0.2 1.5 0 1.5 0.6 1.5 0.1 1.5 0.5 1.5 0.1 1.5 -0.1 1.5 0.1 1.5 0 1.5 -0.1 1.5 0 1.5 0.1 1.5 -0.1 1.5 0 1.5 -0.1 1.5 0.2 1.5 -0.1 1.5 -0.1 1.5 0 1.5 0 1.5 0 1.5 0 1.5 0 1.5 0 1.5 0 1.5 0 1.5 0.1 1.5 0.1 1.5 -0.1 1.5 -0.1 1.5 0 1.5 0 1.5 0.1 1.5 0 1.5 -0.1 1.5 0.1 1.5 0.1 1.5 -0.2 1.5 0.2 1.5 -0.2 1.5 0.1 1.5 -0.1 1.5 0.1 1.5 0.2 1.5 0 1.5 -0.2 1.5 -3.7 1.5 -1.2 1.5 0.8 1.5 1.1 1.5 0.6 1.5 0.7 1.5 0.6 1.5 0 1.5 0.6 1.5 -0.1 1.5 0.1 1.5 -4.5 1.5 1.3 1.5 -0.3 1.5 1.7 1.5 0.2 1.5 0.7 1.5 0.5 1.5 0.2 1.5 0.3 1.5 -0.2 1.5 -2.2 1.5 -2.8 1.5 2.1 1.5 0.6 1.5 0.9 1.5 -0.1 1.5 0.4 1.5 0.4 1.5 0.4 1.5 0.3 1.5 0.2 1.5 -4.6 1.5 1.3 1.5 0.1 1.5 0.4 1.5 0.7 1.5 1 1.5 0.3 1.5 0.1 1.5 0.6 1.5 0 1.5 0.6 0.9 0 0 2 -0.9 0 -1.5 0.6 -1.5 0 -1.5 0.5 -1.5 0.1 -1.5 0.3 -1.5 0.9 -1.5 0.7 -1.5 0.4 -1.5 0.1 -1.5 1.2 -1.5 -4.4 -1.5 0.2 -1.5 0.3 -1.5 0.3 -1.5 0.4 -1.5 0.4 -1.5 -0.1 -1.5 0.8 -1.5 0.6 -1.5 2 -1.5 -2.6 -1.5 -2.1 -1.5 -0.2 -1.5 0.3 -1.5 0.2 -1.5 0.4 -1.5 0.6 -1.5 0.2 -1.5 1.6 -1.5 -0.3 -1.5 1.3 -1.5 -4.2 -1.5 0.1 -1.5 -0.1 -1.5 0.6 -1.5 0 -1.5 0.6 -1.5 0.7 -1.5 0.6 -1.5 1 -1.5 0.7 -1.5 -1.2 -1.5 -3.5 -1.5 -0.2 -1.5 0 -1.5 0.2 -1.5 0.1 -1.5 -0.1 -1.5 0.1 -1.5 -0.2 -1.5 0.2 -1.5 -0.2 -1.5 0.1 -1.5 0.1 -1.5 -0.1 -1.5 0 -1.5 0.1 -1.5 0 -1.5 0 -1.5 -0.1 -1.5 -0.1 -1.5 0.1 -1.5 0.1 -1.5 0 -1.5 0 -1.5 0 -1.5 0 -1.5 0 -1.5 0 -1.5 0 -1.5 0 -1.5 -0.1 -1.5 -0.1 -1.5 0.2 -1.5 -0.1 -1.5 0 -1.5 -0.1 -1.5 0.1 -1.5 0 -1.5 -0.1 -1.5 0 -1.5 0.1 -1.5 -0.1 -1.5 0.1 -1.5 0.5 -1.5 0.1 -1.5 0.6 -1.5 0 -1.5 0.2 -1.5 0.4 -1.5 1.2 -1.5 0.6 -1.5 0.7 -1.5 0.4 -1.5 -4.1 -1.5 -0.1 -1.5 0.4 -1.5 -0.1 -1.5 0.4 -1.5 0.7 -1.5 0.4 -1.5 0.8 -1.5 0.3 -1.5 1.7 -1.5 0.5 -1.5 -5.2 -1.5 -0.1 -1.5 0.4 -1.5 0 -1.5 0.9 -1.5 0.2 -1.5 0.1 -1.5 1.4 -1.5 0 -1.5 2.2 -1.5 -4.7 -1.5 -0.4 -1.5 0 -1.5 0.5 -1.5 0.2 -1.5 0.3 -1.5 0.8 -1.5 0.6 -1.5 -0.1 -1.5 0.9 -1.5 1.2 -1.5 -5 -1.5 0 -1.5 -0.1 -1.5 0 -1.5 0.1 -1.5 0.1 -1.5 0 -1.5 -0.1 -1.5 0.2 -1.5 0 -1.5 -0.1 -1.5 -0.1 -1.5 0 -1.5 0.1 -1.5 0 -1.5 0 -1.5 0.2 -1.5 -0.1 -1.5 -0.1 -1.5 0.1 -1.5 0.1 -1.5 0.1 -1.5 0 -1.5 -0.2 -1.5 0 -1.5 0.2 -1.5 -0.1 -1.5 0 -1.5 -0.1 -1.5 0.2 -1.5 -0.1 -1.5 0.1 -1.5 -0.2 -1.5 0 -1.5 0 -1.5 0.1 -1.5 0 -1.5 -0.1 -1.5 0 -1.5 0 -1.5 0.1 -1.5 0 -1.5 0.2 -1.5 0.1 -1.5 0.2 -1.5 0.5 -1.5 0.4 -1.5 0.1 -1.5 0.6 -1.5 0.7 -1.5 1.4 -1.5 -0.1 -1.5 -0.1 -1.5 -3.7 -1.5 0.1 -1.5 0.6 -1.5 0.1 -1.5 0.5 -1.5 0.1 -1.5 0.5 -1.5 1.1 -1.5 0.4 -1.5 2.2 -1.5 -5.6 -1.5 0.4 -1.5 -0.2 -1.5 0.2 -1.5 0.3 -1.5 0.5 -1.5 0.9 -1.5 0.7 -1.5 1.1 -1.5 0.2 -1.5 1.7 -1.5 -5.7 -1.5 0.3 -1.5 0 -1.5 0.5 -1.5 0.2 -1.5 0.7 -1.5 -0.1 -1.5 1.1 -1.5 0.4 -1.5 1.1 -1.5 -4.7 -1.5 0.2 -1.5 0 -1.5 -0.2 -1.5 0.2 -1.5 0 -1.5 0.1 -1.5 -0.3 -1.5 0.2 -1.5 -0.2 -1.5 0 -1.5 0.1 -1.5 -0.1 -1.5 0.2 -1.5 -0.1 -1.5 0.1 -1.5 0 -1.5 -0.2 -1.5 0.1 -1.5 -0.1 -1.5 0.1 -1.5 0.1 -1.5 -0.1 -1.5 0.1 -1.5 -0.1 -1.5 0 -1.5 0.2 -1.5 -0.1 -1.5 -0.1 -1.5 0.1 -1.5 0 -1.5 -0.1 -1.5 -0.1 -1.5 0.2 -1.5 0 -1.5 0 -1.5 -0.2 -1.5 0 -1.5 0 -1.5 0 -1.5 0 -1.5 0 -1.5 0 -1.5 0.5 -1.5 0.3 -1.5 0.2 -1.5 0.5 -1.5 -0.3 -1.5 1 -1.5 0.3 -1.5 0.6 -1.5 1.1 -1.5 0.4 -1.5 -4.3 -1.5 0.1 -1.5 0.5 -1.5 0 -1.5 0.4 -1.5 0.1 -1.5 0.5 -1.5 1.3 -1.5 0.4 -1.5 0.9 -1.5 -0.8 -1.5 -3.4 -1.5 0.3 -1.5 0.2 -1.5 0.1 -1.5 0.6 -1.5 0.1 -1.5 0.8 -1.5 1 -1.5 1.3 -1.5 0.4 -1.5 -5.1 -1.5 0.5 -1.5 0.1 -1.5 0.1 -1.5 0.1 -1.5 0.4 -1.5 0.8 -1.5 0.2 -1.5 1.8 -1.5 0.9 -1.5 -0.8 -1.5 -4.2 -1.5 0 -1.5 0 -1.5 0 -1.5 0 -1.5 -0.2 -1.5 0 -1.5 0.2 -1.5 -0.2 -1.5 0.2 -1.5 0 -1.5 -0.2 -1.5 0 -1.5 -0.1 -1.5 0 -1.5 0 -1.5 0.2 -1.5 0 -1.5 -0.2 -1.5 0.2 -1.5 -0.2 -1.5 0 -1.5 0.1 -1.5 0.1 -1.5 -0.1 -1.5 -0.1 -1.5 0.2 -1.5 0 -1.5 -0.1 -1.5 0.1 -1.5 0 -1.5 0 -1.5 -0.2 -1.5 0.2 -1.5 -0.2 -1.5 0.2 -1.5 -0.1 -1.5 0.2 -1.5 -0.2 -1.5 0.2 -1.5 0z" fill="#0b2224"/>
<rect x="998.9" y="1296.9" width="12" height="12" fill="#45cfd0"/>
<path d="M1000.9 1306.9L1008.4 1299.9V1306.9z" fill="#0b2224"/>
<rect x="1029.3" y="1317.3" width="9.1" height="45" fill="#15150f"/>
<rect x="1029.8" y="1317.8" width="8.1" height="44" fill="#44e2e2"/>
<rect x="1031.4" y="1319.4" width="4.9" height="40.8" fill="#2ea2a3"/>
<path d="M1032.8 1339.3l0 -6 1 -0.1 1 0.6 0.1 -0.3 0 11.1 -0.1 -0.2 -1 0.6 -1 -0.1z" fill="#0b2224"/>
<rect x="1038.4" y="1317.3" width="15.8" height="45" fill="#15150f"/>
<rect x="1038.9" y="1317.8" width="14.8" height="44" fill="#44e2e2"/>
<rect x="1040.5" y="1319.4" width="11.6" height="40.8" fill="#2ea2a3"/>
<path d="M1041.9 1339.3l0 -6 1 0.5 1 0 1 0.7 1 0.5 1 0 1 0 1 0.6 1 0.5 0.8 0.7 0 5 -0.8 0.7 -1 0.5 -1 0.5 -1 0 -1 0 -1 0.4 -1 0.6 -1 0 -1 0.5z" fill="#0b2224"/>
<rect x="1059.5" y="1366.2" width="18.6" height="45" fill="#15150f"/>
<rect x="1060" y="1366.7" width="17.6" height="44" fill="#44e2e2"/>
<rect x="1061.6" y="1368.3" width="14.4" height="40.8" fill="#2ea2a3"/>
<path d="M1063 1388.2l0 -6.5 1 0.2 1 0.3 1 0.2 1 0.6 1 0.2 1 1.2 1 0 1 0.1 1 0.7 1 0.4 1 0.9 0.6 0.3 0 2.1 -0.6 0.3 -1 0.8 -1 0.4 -1 0.7 -1 0.1 -1 0 -1 1.2 -1 0.2 -1 0.6 -1 0.2 -1 0.3 -1 0.2z" fill="#0b2224"/>
<rect x="1243.5" y="1415.1" width="126.6" height="45" fill="#15150f"/>
<rect x="1244" y="1415.6" width="125.6" height="44" fill="#44e2e2"/>
<rect x="1245.6" y="1417.2" width="122.4" height="40.8" fill="#2ea2a3"/>
<path d="M1274.4 1417.1v41M1306 1417.1v41M1337.7 1417.1v41" stroke="#25908f" stroke-width="1.2"/>
<path d="M1247 1437.1l0 -6.7 1.5 -0.5 1.5 0.2 1.5 1 1.5 1.8 1.5 -0.5 1.5 0.1 1.5 -1.6 1.5 0.8 1.5 0.2 1.5 2 1.5 -0.9 1.5 -1 1.5 0.2 1.5 0.5 1.5 1 1.5 0.8 1.5 -1.4 1.5 -1.3 1.5 1.5 1.5 -3.3 1.5 0.5 1.5 -0.9 1.5 0.8 1.5 1.1 1.5 -0.5 1.5 1.1 1.5 0.4 1.5 0 1.5 -0.3 1.5 0.1 1.5 1.7 1.5 -1.1 1.5 -0.4 1.5 0.4 1.5 -0.1 1.5 1.6 1.5 -0.6 1.5 -1.1 1.5 -0.1 1.5 0.3 1.5 -2 1.5 -0.5 1.5 -1 1.5 2.1 1.5 -0.6 1.5 0.7 1.5 1.5 1.5 -1 1.5 0.3 1.5 -1.9 1.5 2 1.5 1.7 1.5 -1 1.5 -0.3 1.5 -0.1 1.5 0.3 1.5 1.6 1.5 0 1.5 -2 1.5 -0.4 1.5 1.8 1.5 -2.9 1.5 1.2 1.5 -1.3 1.5 -2.3 1.5 1.4 1.5 2.2 1.5 0.6 1.5 -0.5 1.5 -0.2 1.5 -2 1.5 3.3 1.5 0.2 1.5 -0.8 1.5 -0.4 1.5 -1.5 1.5 2.4 1.5 0 1.5 0.1 1.1 -0.5 0 7.8 -1.1 -0.4 -1.5 0.1 -1.5 0 -1.5 2.3 -1.5 -1.4 -1.5 -0.4 -1.5 -0.7 -1.5 0.2 -1.5 3.1 -1.5 -1.9 -1.5 -0.2 -1.5 -0.4 -1.5 0.6 -1.5 2.1 -1.5 1.4 -1.5 -2.2 -1.5 -1.2 -1.5 1.1 -1.5 -2.7 -1.5 1.7 -1.5 -0.4 -1.5 -1.9 -1.5 0 -1.5 1.5 -1.5 0.3 -1.5 -0.1 -1.5 -0.3 -1.5 -1 -1.5 1.6 -1.5 1.9 -1.5 -1.8 -1.5 0.3 -1.5 -0.9 -1.5 1.4 -1.5 0.7 -1.5 -0.6 -1.5 2 -1.5 -1 -1.5 -0.5 -1.5 -1.9 -1.5 0.3 -1.5 -0.1 -1.5 -1 -1.5 -0.6 -1.5 1.5 -1.5 -0.1 -1.5 0.4 -1.5 -0.4 -1.5 -1.1 -1.5 1.6 -1.5 0.1 -1.5 -0.3 -1.5 0 -1.5 0.3 -1.5 1 -1.5 -0.5 -1.5 1 -1.5 0.7 -1.5 -0.9 -1.5 0.5 -1.5 -3.2 -1.5 1.4 -1.5 -1.2 -1.5 -1.3 -1.5 0.8 -1.5 1 -1.5 0.5 -1.5 0.1 -1.5 -0.9 -1.5 -0.8 -1.5 1.9 -1.5 0.2 -1.5 0.8 -1.5 -1.5 -1.5 0.1 -1.5 -0.4 -1.5 1.7 -1.5 0.9 -1.5 0.2 -1.5 -0.5z" fill="#0b2224"/>
<rect x="1255" y="1443.6" width="52.9" height="12" fill="#45cfd0"/>
<path d="M1257 1453.6L1264.5 1446.6V1453.6z" fill="#0b2224"/>
<text x="1266.5" y="1453.6" font-size="10.5" fill="#0b2224">9.89 dB</text>
<rect x="1369.1" y="1415.1" width="127.7" height="45" fill="#15150f"/>
<rect x="1369.6" y="1415.6" width="126.7" height="44" fill="#44e2e2"/>
<rect x="1371.2" y="1417.2" width="123.5" height="40.8" fill="#2ea2a3"/>
<path d="M1401 1417.1v41M1432.6 1417.1v41M1464.2 1417.1v41" stroke="#25908f" stroke-width="1.2"/>
<path d="M1372.6 1437.1l0 -5.5 1.5 0.1 1.5 -2.1 1.5 1.9 1.5 0 1.5 1.4 1.5 0.4 1.5 -1.8 1.5 1 1.5 0 1.5 1.7 1.5 0 1.5 -1.4 1.5 -1.4 1.5 2.1 1.5 0.9 1.5 -0.3 1.5 -1.4 1.5 -0.2 1.5 0.7 1.5 -3.6 1.5 2.7 1.5 -2.5 1.5 0.9 1.5 0.7 1.5 1.2 1.5 0.5 1.5 -1.3 1.5 0.5 1.5 -1.1 1.5 1 1.5 1.6 1.5 -0.3 1.5 0 1.5 -0.4 1.5 0.4 1.5 0.4 1.5 0.5 1.5 -0.7 1.5 -1.2 1.5 0.7 1.5 -1.3 1.5 -1.5 1.5 -0.2 1.5 0.7 1.5 -0.6 1.5 1.5 1.5 0.3 1.5 -0.1 1.5 0.1 1.5 -1.7 1.5 3 1.5 0.4 1.5 -0.7 1.5 0.1 1.5 -1.1 1.5 1.7 1.5 0.1 1.5 0 1.5 -0.7 1.5 -1.3 1.5 1.6 1.5 -2.2 1.5 -0.5 1.5 -0.5 1.5 -0.3 1.5 -0.6 1.5 1.3 1.5 1.9 1.5 -0.8 1.5 0.6 1.5 -1.5 1.5 1.4 1.5 0.6 1.5 0 1.5 0 1.5 -0.5 1.5 0.4 1.5 2 1.5 -0.5 1.5 -0.5 0.7 -0.3 0 7.2 -0.7 -0.3 -1.5 -0.4 -1.5 -0.5 -1.5 1.9 -1.5 0.3 -1.5 -0.5 -1.5 0 -1.5 0 -1.5 0.5 -1.5 1.3 -1.5 -1.4 -1.5 0.5 -1.5 -0.8 -1.5 1.8 -1.5 1.3 -1.5 -0.6 -1.5 -0.2 -1.5 -0.4 -1.5 -0.4 -1.5 -2.1 -1.5 1.5 -1.5 -1.2 -1.5 -0.7 -1.5 0 -1.5 0.1 -1.5 1.6 -1.5 -1 -1.5 0.1 -1.5 -0.6 -1.5 0.4 -1.5 2.9 -1.5 -1.6 -1.5 0.1 -1.5 -0.1 -1.5 0.3 -1.5 1.4 -1.5 -0.6 -1.5 0.6 -1.5 -0.2 -1.5 -1.4 -1.5 -1.3 -1.5 0.7 -1.5 -1.2 -1.5 -0.7 -1.5 0.5 -1.5 0.4 -1.5 0.4 -1.5 -0.4 -1.5 0 -1.5 -0.3 -1.5 1.5 -1.5 0.9 -1.5 -1 -1.5 0.5 -1.5 -1.2 -1.5 0.4 -1.5 1.1 -1.5 0.7 -1.5 0.9 -1.5 -2.4 -1.5 2.6 -1.5 -3.4 -1.5 0.7 -1.5 -0.2 -1.5 -1.4 -1.5 -0.3 -1.5 0.8 -1.5 2 -1.5 -1.3 -1.5 -1.4 -1.5 0 -1.5 1.6 -1.5 0 -1.5 0.9 -1.5 -1.7 -1.5 0.4 -1.5 1.3 -1.5 0 -1.5 1.8 -1.5 -2 -1.5 0.1z" fill="#0b2224"/>
<rect x="1380.6" y="1443.6" width="52.9" height="12" fill="#45cfd0"/>
<path d="M1382.6 1453.6L1390.1 1446.6V1453.6z" fill="#0b2224"/>
<text x="1392.1" y="1453.6" font-size="10.5" fill="#0b2224">9.89 dB</text>
<rect x="1491.5" y="1464.1" width="192.9" height="45" fill="#15150f"/>
<rect x="1492" y="1464.6" width="191.9" height="44" fill="#44e2e2"/>
<rect x="1493.6" y="1466.2" width="188.7" height="40.8" fill="#2ea2a3"/>
<path d="M1495.9 1466.1v41M1527.5 1466.1v41M1559.1 1466.1v41M1590.8 1466.1v41M1622.4 1466.1v41M1654 1466.1v41" stroke="#25908f" stroke-width="1.2"/>
<path d="M1495 1486.1l0 -8.9 1.5 -0.9 1.5 2.2 1.5 -0.5 1.5 1.5 1.5 0.2 1.5 -0.7 1.5 1.5 1.5 -0.2 1.5 0.6 1.5 0.3 1.5 0.2 1.5 0.6 1.5 -0.4 1.5 0.9 1.5 0.1 1.5 0.4 1.5 0 1.5 0.1 1.5 -0.2 1.5 0.5 1.5 0.3 1.5 0 1.5 -0.3 1.5 0.6 1.5 -0.2 1.5 0.2 1.5 0 1.5 0.2 1.5 -0.1 1.5 0.2 1.5 0 1.5 0 1.5 0.2 1.5 0.2 1.5 0.1 1.5 -0.3 1.5 0.2 1.5 0.1 1.5 -0.2 1.5 0.2 1.5 -5.3 1.5 -3.7 1.5 1.8 1.5 0.4 1.5 -0.4 1.5 1.8 1.5 -0.6 1.5 1.4 1.5 -0.5 1.5 0.4 1.5 0.1 1.5 0.5 1.5 0.7 1.5 0.6 1.5 0.3 1.5 -0.1 1.5 0.2 1.5 0.6 1.5 -0.5 1.5 0.5 1.5 0 1.5 0.5 1.5 0.1 1.5 0.3 1.5 -0.1 1.5 0.2 1.5 0 1.5 0.1 1.5 -0.1 1.5 0.1 1.5 0.4 1.5 0 1.5 0.2 1.5 -0.1 1.5 -0.1 1.5 0.4 1.5 -0.2 1.5 0.2 1.5 0.1 1.5 -0.2 1.5 0.2 1.5 0.1 1.5 -3.8 1.5 -4 1.5 0.2 1.5 0.5 1.5 0.6 1.5 0.2 1.5 0.9 1.5 0.7 1.5 0.4 1.5 0.3 1.5 -0.2 1.5 0.5 1.5 -0.2 1.5 0.6 1.5 0.1 1.5 0 1.5 1 1.5 0.2 1.5 0.1 1.5 0 1.5 0 1.5 0 1.5 0.4 1.5 -0.2 1.5 0.7 1.5 -0.4 1.5 0.4 1.5 -0.2 1.5 0.5 1.5 -0.4 1.5 0.2 1.5 0 1.5 0.3 1.5 0.2 1.5 -0.2 1.5 0.3 1.5 0.2 1.5 -0.1 1.5 0.1 1.5 0.1 1.5 0.1 1.4 0 0 2.5 -1.4 0 -1.5 0.1 -1.5 0 -1.5 0.1 -1.5 -0.1 -1.5 0.2 -1.5 0.2 -1.5 -0.2 -1.5 0.2 -1.5 0.2 -1.5 0 -1.5 0.2 -1.5 -0.3 -1.5 0.5 -1.5 -0.2 -1.5 0.4 -1.5 -0.3 -1.5 0.7 -1.5 -0.2 -1.5 0.4 -1.5 0 -1.5 0 -1.5 0 -1.5 0.1 -1.5 0.2 -1.5 1 -1.5 0 -1.5 0.1 -1.5 0.6 -1.5 -0.2 -1.5 0.5 -1.5 -0.2 -1.5 0.3 -1.5 0.4 -1.5 0.7 -1.5 0.9 -1.5 0.2 -1.5 0.5 -1.5 0.5 -1.5 0.2 -1.5 -3.8 -1.5 -3.7 -1.5 0.1 -1.5 0.2 -1.5 -0.2 -1.5 0.1 -1.5 0.2 -1.5 -0.1 -1.5 0.3 -1.5 -0.1 -1.5 -0.1 -1.5 0.2 -1.5 0 -1.5 0.4 -1.5 0.1 -1.5 -0.1 -1.5 0.1 -1.5 0 -1.5 0.1 -1.5 -0.1 -1.5 0.3 -1.5 0.1 -1.5 0.5 -1.5 0 -1.5 0.5 -1.5 -0.4 -1.5 0.5 -1.5 0.2 -1.5 -0.1 -1.5 0.3 -1.5 0.6 -1.5 0.6 -1.5 0.4 -1.5 0 -1.5 0.3 -1.5 -0.4 -1.5 1.3 -1.5 -0.5 -1.5 1.7 -1.5 -0.4 -1.5 0.4 -1.5 1.7 -1.5 -3.5 -1.5 -5 -1.5 0.1 -1.5 -0.2 -1.5 0.1 -1.5 0.2 -1.5 -0.2 -1.5 0.1 -1.5 0.2 -1.5 0.2 -1.5 0 -1.5 0 -1.5 0.2 -1.5 -0.1 -1.5 0.2 -1.5 0 -1.5 0.2 -1.5 -0.2 -1.5 0.6 -1.5 -0.3 -1.5 0 -1.5 0.3 -1.5 0.5 -1.5 -0.2 -1.5 0.1 -1.5 0 -1.5 0.3 -1.5 0.1 -1.5 0.9 -1.5 -0.4 -1.5 0.5 -1.5 0.2 -1.5 0.3 -1.5 0.5 -1.5 -0.2 -1.5 1.4 -1.5 -0.7 -1.5 0.1 -1.5 1.4 -1.5 -0.5 -1.5 2 -1.5 -0.9z" fill="#0b2224"/>
<rect x="1503" y="1492.6" width="12" height="12" fill="#45cfd0"/>
<path d="M1505 1502.6L1512.5 1495.6V1502.6z" fill="#0b2224"/>
<rect x="1527.5" y="1513" width="103.4" height="45" fill="#15150f"/>
<rect x="1528" y="1513.5" width="102.4" height="44" fill="#44e2e2"/>
<rect x="1529.6" y="1515.1" width="99.2" height="40.8" fill="#2ea2a3"/>
<path d="M1559.1 1515v41M1590.8 1515v41M1622.4 1515v41" stroke="#25908f" stroke-width="1.2"/>
<path d="M1530 1535l0 -1.6 2.5 0.2 2.5 0.2 2.5 -0.2 2.5 0.5 2.5 0 2.5 0 2.5 0.1 2.5 -0.3 2.5 -0.2 2.5 0.1 2.5 -0.3 2.5 -0.3 2.5 0 2.5 -0.3 2.5 0.3 2.5 -0.1 2.5 0 2.5 -0.3 2.5 -0.3 2.5 0.2 2.5 -0.1 2.5 0.3 2.5 -0.2 2.5 0.5 2.5 -0.1 2.5 -0.2 2.5 0.1 2.5 0.3 2.5 0.3 2.5 0 2.5 0.2 2.5 0.1 2.5 0 2.5 0.3 2.5 -0.3 2.5 -0.2 2.5 0.2 2.5 -0.3 2.4 -0.2 0 2.9 -2.4 -0.2 -2.5 -0.3 -2.5 0.2 -2.5 -0.2 -2.5 -0.3 -2.5 0.3 -2.5 0 -2.5 0.1 -2.5 0.1 -2.5 0 -2.5 0.3 -2.5 0.3 -2.5 0.1 -2.5 -0.2 -2.5 -0.1 -2.5 0.5 -2.5 -0.2 -2.5 0.3 -2.5 -0.1 -2.5 0.2 -2.5 -0.3 -2.5 -0.3 -2.5 0 -2.5 -0.1 -2.5 0.3 -2.5 -0.3 -2.5 0 -2.5 -0.3 -2.5 -0.3 -2.5 0.1 -2.5 -0.2 -2.5 -0.3 -2.5 0.1 -2.5 0 -2.5 0 -2.5 0.5 -2.5 -0.2 -2.5 0.2 -2.5 0.2z" fill="#0b2224"/>
<rect x="1539" y="1541.5" width="12" height="12" fill="#45cfd0"/>
<path d="M1541 1551.5L1548.5 1544.5V1551.5z" fill="#0b2224"/>
<rect x="737" y="1561.4" width="253.5" height="45.5" fill="#15150f"/>
<rect x="737.5" y="1561.9" width="252.5" height="44.5" fill="#4bb0f3"/>
<rect x="739.1" y="1563.5" width="249.3" height="41.3" fill="#3a8dc3"/>
<path d="M768.3 1563.4v41.5M799.9 1563.4v41.5M831.5 1563.4v41.5M863.2 1563.4v41.5M894.8 1563.4v41.5M926.4 1563.4v41.5M958.1 1563.4v41.5" stroke="#2a7cb8" stroke-width="1.2"/>
<rect x="738.8" y="1564.9" width="249.9" height="12.5" fill="#1a7ccb"/>
<rect x="989.5" y="1561.4" width="507" height="45.5" fill="#15150f"/>
<rect x="990" y="1561.9" width="506" height="44.5" fill="#4bb0f3"/>
<rect x="991.6" y="1563.5" width="502.8" height="41.3" fill="#3a8dc3"/>
<path d="M1021.3 1563.4v41.5M1053 1563.4v41.5M1084.6 1563.4v41.5M1116.2 1563.4v41.5M1147.9 1563.4v41.5M1179.5 1563.4v41.5M1211.1 1563.4v41.5M1242.8 1563.4v41.5M1274.4 1563.4v41.5M1306 1563.4v41.5M1337.7 1563.4v41.5M1369.3 1563.4v41.5M1401 1563.4v41.5M1432.6 1563.4v41.5M1464.2 1563.4v41.5" stroke="#2a7cb8" stroke-width="1.2"/>
<rect x="991.3" y="1579.4" width="503.4" height="2" fill="#1a7ccb"/>
<rect x="991.3" y="1586.4" width="503.4" height="2" fill="#1a7ccb"/>
<rect x="1495.5" y="1561.4" width="190" height="45.5" fill="#15150f"/>
<rect x="1496" y="1561.9" width="189" height="44.5" fill="#4bb0f3"/>
<rect x="1497.6" y="1563.5" width="185.8" height="41.3" fill="#3a8dc3"/>
<path d="M1527.5 1563.4v41.5M1559.1 1563.4v41.5M1590.8 1563.4v41.5M1622.4 1563.4v41.5M1654 1563.4v41.5" stroke="#2a7cb8" stroke-width="1.2"/>
<rect x="1497.3" y="1579.4" width="186.4" height="2" fill="#1a7ccb"/>
<rect x="1497.3" y="1586.4" width="186.4" height="2" fill="#1a7ccb"/>
<rect x="1737.5" y="1561.4" width="511" height="45.5" fill="#15150f"/>
<rect x="1738" y="1561.9" width="510" height="44.5" fill="#4bb0f3"/>
<rect x="1739.6" y="1563.5" width="506.8" height="41.3" fill="#3a8dc3"/>
<path d="M1748.9 1563.4v41.5M1780.6 1563.4v41.5M1812.2 1563.4v41.5M1843.8 1563.4v41.5M1875.5 1563.4v41.5M1907.1 1563.4v41.5M1938.7 1563.4v41.5M1970.4 1563.4v41.5M2002 1563.4v41.5M2033.6 1563.4v41.5M2065.3 1563.4v41.5M2096.9 1563.4v41.5M2128.5 1563.4v41.5M2160.2 1563.4v41.5M2191.8 1563.4v41.5M2223.4 1563.4v41.5" stroke="#2a7cb8" stroke-width="1.2"/>
<rect x="1739.3" y="1579.4" width="507.4" height="2" fill="#1a7ccb"/>
<rect x="1739.3" y="1586.4" width="507.4" height="2" fill="#1a7ccb"/>
<rect x="2247.5" y="1561.4" width="515" height="45.5" fill="#15150f"/>
<rect x="2248" y="1561.9" width="514" height="44.5" fill="#4bb0f3"/>
<rect x="2249.6" y="1563.5" width="510.8" height="41.3" fill="#3a8dc3"/>
<path d="M2255.1 1563.4v41.5M2286.7 1563.4v41.5M2318.3 1563.4v41.5M2350 1563.4v41.5M2381.6 1563.4v41.5M2413.2 1563.4v41.5M2444.9 1563.4v41.5M2476.5 1563.4v41.5M2508.1 1563.4v41.5M2539.8 1563.4v41.5M2571.4 1563.4v41.5M2603 1563.4v41.5M2634.7 1563.4v41.5M2666.3 1563.4v41.5M2697.9 1563.4v41.5M2729.6 1563.4v41.5" stroke="#2a7cb8" stroke-width="1.2"/>
<rect x="2249.3" y="1564.9" width="511.4" height="14" fill="#1a7ccb"/>
<rect x="2249.3" y="1584.9" width="511.4" height="20" fill="#1a7ccb"/>
<rect x="737" y="1659.2" width="127.5" height="46" fill="#15150f"/>
<rect x="737.5" y="1659.7" width="126.5" height="45" fill="#4bb0f3"/>
<rect x="739.1" y="1661.3" width="123.3" height="41.8" fill="#3a8dc3"/>
<path d="M768.3 1661.2v42M799.9 1661.2v42M831.5 1661.2v42" stroke="#2a7cb8" stroke-width="1.2"/>
<rect x="738.8" y="1663.7" width="123.9" height="12" fill="#2c80bd"/>
<path d="M740.5 1683.2H861" stroke="#1669a8" stroke-width="38" stroke-dasharray="1.2 2.75" opacity="0.28"/>
<path d="M738.8 1681.7H862.7M738.8 1690.7H862.7" stroke="#1669a8" stroke-width="1" opacity="0.2"/>
<rect x="739.5" y="1661.7" width="26" height="18" fill="#8cc8ee"/>
<text x="742.5" y="1675.2" font-size="12" font-weight="bold" fill="#1a1a1a">1</text>
<path d="M751.5 1666.7h8l-4 5z" fill="#1a1a1a"/>
<rect x="863.5" y="1659.2" width="127" height="46" fill="#15150f"/>
<rect x="864" y="1659.7" width="126" height="45" fill="#4bb0f3"/>
<rect x="865.6" y="1661.3" width="122.8" height="41.8" fill="#3a8dc3"/>
<path d="M894.8 1661.2v42M926.4 1661.2v42M958.1 1661.2v42" stroke="#2a7cb8" stroke-width="1.2"/>
<rect x="865.3" y="1663.7" width="123.4" height="12" fill="#2c80bd"/>
<path d="M867 1683.2H987" stroke="#1669a8" stroke-width="38" stroke-dasharray="1.2 2.75" opacity="0.28"/>
<path d="M865.3 1681.7H988.7M865.3 1690.7H988.7" stroke="#1669a8" stroke-width="1" opacity="0.2"/>
<rect x="866" y="1661.7" width="26" height="18" fill="#8cc8ee"/>
<text x="869" y="1675.2" font-size="12" font-weight="bold" fill="#1a1a1a">2</text>
<path d="M878 1666.7h8l-4 5z" fill="#1a1a1a"/>
<rect x="2254.5" y="1659.2" width="128" height="46" fill="#15150f"/>
<rect x="2255" y="1659.7" width="127" height="45" fill="#4bb0f3"/>
<rect x="2256.6" y="1661.3" width="123.8" height="41.8" fill="#3a8dc3"/>
<path d="M2286.7 1661.2v42M2318.3 1661.2v42M2350 1661.2v42" stroke="#2a7cb8" stroke-width="1.2"/>
<rect x="2256.3" y="1663.7" width="124.4" height="12" fill="#2c80bd"/>
<path d="M2258 1683.2H2379" stroke="#1669a8" stroke-width="38" stroke-dasharray="1.2 2.75" opacity="0.28"/>
<path d="M2256.3 1681.7H2380.7M2256.3 1690.7H2380.7" stroke="#1669a8" stroke-width="1" opacity="0.2"/>
<rect x="2257" y="1661.7" width="26" height="18" fill="#8cc8ee"/>
<text x="2260" y="1675.2" font-size="12" font-weight="bold" fill="#1a1a1a">1</text>
<path d="M2269 1666.7h8l-4 5z" fill="#1a1a1a"/>
<rect x="2381.5" y="1659.2" width="127" height="46" fill="#15150f"/>
<rect x="2382" y="1659.7" width="126" height="45" fill="#4bb0f3"/>
<rect x="2383.6" y="1661.3" width="122.8" height="41.8" fill="#3a8dc3"/>
<path d="M2413.2 1661.2v42M2444.9 1661.2v42M2476.5 1661.2v42" stroke="#2a7cb8" stroke-width="1.2"/>
<rect x="2383.3" y="1663.7" width="123.4" height="12" fill="#2c80bd"/>
<path d="M2385 1683.2H2505" stroke="#1669a8" stroke-width="38" stroke-dasharray="1.2 2.75" opacity="0.28"/>
<path d="M2383.3 1681.7H2506.7M2383.3 1690.7H2506.7" stroke="#1669a8" stroke-width="1" opacity="0.2"/>
<rect x="2384" y="1661.7" width="26" height="18" fill="#8cc8ee"/>
<text x="2387" y="1675.2" font-size="12" font-weight="bold" fill="#1a1a1a">2</text>
<path d="M2396 1666.7h8l-4 5z" fill="#1a1a1a"/>
<rect x="2507.5" y="1659.2" width="128" height="46" fill="#15150f"/>
<rect x="2508" y="1659.7" width="127" height="45" fill="#4bb0f3"/>
<rect x="2509.6" y="1661.3" width="123.8" height="41.8" fill="#3a8dc3"/>
<path d="M2539.8 1661.2v42M2571.4 1661.2v42M2603 1661.2v42" stroke="#2a7cb8" stroke-width="1.2"/>
<rect x="2509.3" y="1663.7" width="124.4" height="12" fill="#2c80bd"/>
<path d="M2511 1683.2H2632" stroke="#1669a8" stroke-width="38" stroke-dasharray="1.2 2.75" opacity="0.28"/>
<path d="M2509.3 1681.7H2633.7M2509.3 1690.7H2633.7" stroke="#1669a8" stroke-width="1" opacity="0.2"/>
<rect x="2510" y="1661.7" width="26" height="18" fill="#8cc8ee"/>
<text x="2513" y="1675.2" font-size="12" font-weight="bold" fill="#1a1a1a">1</text>
<path d="M2522 1666.7h8l-4 5z" fill="#1a1a1a"/>
<rect x="2634.5" y="1659.2" width="128" height="46" fill="#15150f"/>
<rect x="2635" y="1659.7" width="127" height="45" fill="#4bb0f3"/>
<rect x="2636.6" y="1661.3" width="123.8" height="41.8" fill="#3a8dc3"/>
<path d="M2666.3 1661.2v42M2697.9 1661.2v42M2729.6 1661.2v42" stroke="#2a7cb8" stroke-width="1.2"/>
<rect x="2636.3" y="1663.7" width="124.4" height="12" fill="#2c80bd"/>
<path d="M2638 1683.2H2759" stroke="#1669a8" stroke-width="38" stroke-dasharray="1.2 2.75" opacity="0.28"/>
<path d="M2636.3 1681.7H2760.7M2636.3 1690.7H2760.7" stroke="#1669a8" stroke-width="1" opacity="0.2"/>
<rect x="2637" y="1661.7" width="26" height="18" fill="#8cc8ee"/>
<text x="2640" y="1675.2" font-size="12" font-weight="bold" fill="#1a1a1a">2</text>
<path d="M2649 1666.7h8l-4 5z" fill="#1a1a1a"/>
<rect x="737" y="1708.2" width="127.5" height="46" fill="#15150f"/>
<rect x="737.5" y="1708.7" width="126.5" height="45" fill="#4bb0f3"/>
<rect x="739.1" y="1710.3" width="123.3" height="41.8" fill="#3a8dc3"/>
<path d="M768.3 1710.2v42M799.9 1710.2v42M831.5 1710.2v42" stroke="#2a7cb8" stroke-width="1.2"/>
<rect x="738.8" y="1712.7" width="123.9" height="12" fill="#2c80bd"/>
<path d="M740.5 1732.2H861" stroke="#1669a8" stroke-width="38" stroke-dasharray="1.2 2.75" opacity="0.28"/>
<path d="M738.8 1730.7H862.7M738.8 1739.7H862.7" stroke="#1669a8" stroke-width="1" opacity="0.2"/>
<rect x="739.5" y="1710.7" width="26" height="18" fill="#8cc8ee"/>
<text x="742.5" y="1724.2" font-size="12" font-weight="bold" fill="#1a1a1a">1</text>
<path d="M751.5 1715.7h8l-4 5z" fill="#1a1a1a"/>
<rect x="863.5" y="1708.2" width="127" height="46" fill="#15150f"/>
<rect x="864" y="1708.7" width="126" height="45" fill="#4bb0f3"/>
<rect x="865.6" y="1710.3" width="122.8" height="41.8" fill="#3a8dc3"/>
<path d="M894.8 1710.2v42M926.4 1710.2v42M958.1 1710.2v42" stroke="#2a7cb8" stroke-width="1.2"/>
<rect x="865.3" y="1712.7" width="123.4" height="12" fill="#2c80bd"/>
<path d="M867 1732.2H987" stroke="#1669a8" stroke-width="38" stroke-dasharray="1.2 2.75" opacity="0.28"/>
<path d="M865.3 1730.7H988.7M865.3 1739.7H988.7" stroke="#1669a8" stroke-width="1" opacity="0.2"/>
<rect x="866" y="1710.7" width="26" height="18" fill="#8cc8ee"/>
<text x="869" y="1724.2" font-size="12" font-weight="bold" fill="#1a1a1a">2</text>
<path d="M878 1715.7h8l-4 5z" fill="#1a1a1a"/>
<rect x="1749.5" y="1708.2" width="127" height="46" fill="#15150f"/>
<rect x="1750" y="1708.7" width="126" height="45" fill="#4bb0f3"/>
<rect x="1751.6" y="1710.3" width="122.8" height="41.8" fill="#3a8dc3"/>
<path d="M1780.6 1710.2v42M1812.2 1710.2v42M1843.8 1710.2v42" stroke="#2a7cb8" stroke-width="1.2"/>
<rect x="1751.3" y="1712.7" width="123.4" height="12" fill="#2c80bd"/>
<path d="M1753 1732.2H1873" stroke="#1669a8" stroke-width="38" stroke-dasharray="1.2 2.75" opacity="0.28"/>
<path d="M1751.3 1730.7H1874.7M1751.3 1739.7H1874.7" stroke="#1669a8" stroke-width="1" opacity="0.2"/>
<rect x="1752" y="1710.7" width="26" height="18" fill="#8cc8ee"/>
<text x="1755" y="1724.2" font-size="12" font-weight="bold" fill="#1a1a1a">1</text>
<path d="M1764 1715.7h8l-4 5z" fill="#1a1a1a"/>
<rect x="1875.5" y="1708.2" width="127" height="46" fill="#15150f"/>
<rect x="1876" y="1708.7" width="126" height="45" fill="#4bb0f3"/>
<rect x="1877.6" y="1710.3" width="122.8" height="41.8" fill="#3a8dc3"/>
<path d="M1907.1 1710.2v42M1938.7 1710.2v42M1970.4 1710.2v42" stroke="#2a7cb8" stroke-width="1.2"/>
<rect x="1877.3" y="1712.7" width="123.4" height="12" fill="#2c80bd"/>
<path d="M1879 1732.2H1999" stroke="#1669a8" stroke-width="38" stroke-dasharray="1.2 2.75" opacity="0.28"/>
<path d="M1877.3 1730.7H2000.7M1877.3 1739.7H2000.7" stroke="#1669a8" stroke-width="1" opacity="0.2"/>
<rect x="1878" y="1710.7" width="26" height="18" fill="#8cc8ee"/>
<text x="1881" y="1724.2" font-size="12" font-weight="bold" fill="#1a1a1a">2</text>
<path d="M1890 1715.7h8l-4 5z" fill="#1a1a1a"/>
<rect x="2001.5" y="1708.2" width="128" height="46" fill="#15150f"/>
<rect x="2002" y="1708.7" width="127" height="45" fill="#4bb0f3"/>
<rect x="2003.6" y="1710.3" width="123.8" height="41.8" fill="#3a8dc3"/>
<path d="M2033.6 1710.2v42M2065.3 1710.2v42M2096.9 1710.2v42" stroke="#2a7cb8" stroke-width="1.2"/>
<rect x="2003.3" y="1712.7" width="124.4" height="12" fill="#2c80bd"/>
<path d="M2005 1732.2H2126" stroke="#1669a8" stroke-width="38" stroke-dasharray="1.2 2.75" opacity="0.28"/>
<path d="M2003.3 1730.7H2127.7M2003.3 1739.7H2127.7" stroke="#1669a8" stroke-width="1" opacity="0.2"/>
<rect x="2004" y="1710.7" width="26" height="18" fill="#8cc8ee"/>
<text x="2007" y="1724.2" font-size="12" font-weight="bold" fill="#1a1a1a">1</text>
<path d="M2016 1715.7h8l-4 5z" fill="#1a1a1a"/>
<rect x="2128.5" y="1708.2" width="127" height="46" fill="#15150f"/>
<rect x="2129" y="1708.7" width="126" height="45" fill="#4bb0f3"/>
<rect x="2130.6" y="1710.3" width="122.8" height="41.8" fill="#3a8dc3"/>
<path d="M2160.2 1710.2v42M2191.8 1710.2v42M2223.4 1710.2v42" stroke="#2a7cb8" stroke-width="1.2"/>
<rect x="2130.3" y="1712.7" width="123.4" height="12" fill="#2c80bd"/>
<path d="M2132 1732.2H2252" stroke="#1669a8" stroke-width="38" stroke-dasharray="1.2 2.75" opacity="0.28"/>
<path d="M2130.3 1730.7H2253.7M2130.3 1739.7H2253.7" stroke="#1669a8" stroke-width="1" opacity="0.2"/>
<rect x="2131" y="1710.7" width="26" height="18" fill="#8cc8ee"/>
<text x="2134" y="1724.2" font-size="12" font-weight="bold" fill="#1a1a1a">2</text>
<path d="M2143 1715.7h8l-4 5z" fill="#1a1a1a"/>
<rect x="2254.5" y="1708.2" width="128" height="46" fill="#15150f"/>
<rect x="2255" y="1708.7" width="127" height="45" fill="#4bb0f3"/>
<rect x="2256.6" y="1710.3" width="123.8" height="41.8" fill="#3a8dc3"/>
<path d="M2286.7 1710.2v42M2318.3 1710.2v42M2350 1710.2v42" stroke="#2a7cb8" stroke-width="1.2"/>
<rect x="2256.3" y="1712.7" width="124.4" height="12" fill="#2c80bd"/>
<path d="M2258 1732.2H2379" stroke="#1669a8" stroke-width="38" stroke-dasharray="1.2 2.75" opacity="0.28"/>
<path d="M2256.3 1730.7H2380.7M2256.3 1739.7H2380.7" stroke="#1669a8" stroke-width="1" opacity="0.2"/>
<rect x="2257" y="1710.7" width="26" height="18" fill="#8cc8ee"/>
<text x="2260" y="1724.2" font-size="12" font-weight="bold" fill="#1a1a1a">1</text>
<path d="M2269 1715.7h8l-4 5z" fill="#1a1a1a"/>
<rect x="2381.5" y="1708.2" width="127" height="46" fill="#15150f"/>
<rect x="2382" y="1708.7" width="126" height="45" fill="#4bb0f3"/>
<rect x="2383.6" y="1710.3" width="122.8" height="41.8" fill="#3a8dc3"/>
<path d="M2413.2 1710.2v42M2444.9 1710.2v42M2476.5 1710.2v42" stroke="#2a7cb8" stroke-width="1.2"/>
<rect x="2383.3" y="1712.7" width="123.4" height="12" fill="#2c80bd"/>
<path d="M2385 1732.2H2505" stroke="#1669a8" stroke-width="38" stroke-dasharray="1.2 2.75" opacity="0.28"/>
<path d="M2383.3 1730.7H2506.7M2383.3 1739.7H2506.7" stroke="#1669a8" stroke-width="1" opacity="0.2"/>
<rect x="2384" y="1710.7" width="26" height="18" fill="#8cc8ee"/>
<text x="2387" y="1724.2" font-size="12" font-weight="bold" fill="#1a1a1a">2</text>
<path d="M2396 1715.7h8l-4 5z" fill="#1a1a1a"/>
<rect x="2507.5" y="1708.2" width="128" height="46" fill="#15150f"/>
<rect x="2508" y="1708.7" width="127" height="45" fill="#4bb0f3"/>
<rect x="2509.6" y="1710.3" width="123.8" height="41.8" fill="#3a8dc3"/>
<path d="M2539.8 1710.2v42M2571.4 1710.2v42M2603 1710.2v42" stroke="#2a7cb8" stroke-width="1.2"/>
<rect x="2509.3" y="1712.7" width="124.4" height="12" fill="#2c80bd"/>
<path d="M2511 1732.2H2632" stroke="#1669a8" stroke-width="38" stroke-dasharray="1.2 2.75" opacity="0.28"/>
<path d="M2509.3 1730.7H2633.7M2509.3 1739.7H2633.7" stroke="#1669a8" stroke-width="1" opacity="0.2"/>
<rect x="2510" y="1710.7" width="26" height="18" fill="#8cc8ee"/>
<text x="2513" y="1724.2" font-size="12" font-weight="bold" fill="#1a1a1a">1</text>
<path d="M2522 1715.7h8l-4 5z" fill="#1a1a1a"/>
<rect x="2634.5" y="1708.2" width="128" height="46" fill="#15150f"/>
<rect x="2635" y="1708.7" width="127" height="45" fill="#4bb0f3"/>
<rect x="2636.6" y="1710.3" width="123.8" height="41.8" fill="#3a8dc3"/>
<path d="M2666.3 1710.2v42M2697.9 1710.2v42M2729.6 1710.2v42" stroke="#2a7cb8" stroke-width="1.2"/>
<rect x="2636.3" y="1712.7" width="124.4" height="12" fill="#2c80bd"/>
<path d="M2638 1732.2H2759" stroke="#1669a8" stroke-width="38" stroke-dasharray="1.2 2.75" opacity="0.28"/>
<path d="M2636.3 1730.7H2760.7M2636.3 1739.7H2760.7" stroke="#1669a8" stroke-width="1" opacity="0.2"/>
<rect x="2637" y="1710.7" width="26" height="18" fill="#8cc8ee"/>
<text x="2640" y="1724.2" font-size="12" font-weight="bold" fill="#1a1a1a">2</text>
<path d="M2649 1715.7h8l-4 5z" fill="#1a1a1a"/>
<rect x="2119.8" y="84.4" width="1.6" height="1650.6" fill="#f2f2f2"/>
</g>
</svg>
<div class="a" style="left:2893.2px;top:54.0px;width:12.5px;height:22.0px;background:#3a3d40;border-radius:3px"></div>
<svg class="sv" style="left:2895.5px;top:61px;width:8px;height:7px"><path d="M0 0h8L4 7z" fill="#e0e0e0"/></svg>
<div class="a" style="left:2893.2px;top:86.5px;width:12.5px;height:11.0px;background:#3a3d40;border-radius:3px"></div>
<svg class="sv" style="left:2895px;top:88px;width:9px;height:8px"><path d="M1 7L8 1" stroke="#e0e0e0" stroke-width="1.6"/></svg>
<div class="a" style="left:2893.2px;top:102.0px;width:12.5px;height:50.0px;background:#3a3d40;border-radius:3px"></div>
<div class="a" style="left:2898.6px;top:106.0px;width:1.6px;height:38.0px;background:#6a6d70;"></div>
<div class="a" style="left:2895.5px;top:140.5px;width:8.0px;height:8.0px;background:#f0f0f0;border-radius:50%"></div>
<div class="a" style="left:2893.2px;top:156.6px;width:12.5px;height:1449.0px;background:#3a3d40;border-radius:3px"></div>
<svg class="sv" style="left:2895.5px;top:161px;width:8px;height:6px"><path d="M0.5 5L4 1.5L7.5 5" stroke="#e0e0e0" stroke-width="1.3" fill="none"/></svg>
<div class="a" style="left:2895.2px;top:172.0px;width:8.5px;height:1430.0px;background:#55585b;border-radius:3px"></div>
<div class="a" style="left:2895.2px;top:189.7px;width:8.5px;height:575.0px;background:#f0f0f0;border-radius:3px"></div>
<svg class="sv" style="left:2895.5px;top:1614px;width:8px;height:6px"><path d="M0.5 1L4 4.5L7.5 1" stroke="#e0e0e0" stroke-width="1.3" fill="none"/></svg>
<div class="a" style="left:2893.2px;top:1629.0px;width:12.5px;height:11.7px;background:#3a3d40;border-radius:3px"></div>
<svg class="sv" style="left:2895.5px;top:1632px;width:8px;height:7px"><path d="M0 0h8L4 7z" fill="#e0e0e0"/></svg>
<div class="a" style="left:2893.2px;top:1645.0px;width:12.5px;height:88.0px;background:#3a3d40;border-radius:3px"></div>
<div class="a" style="left:2896.0px;top:1651.0px;width:7.0px;height:1.8px;background:#e8e8e8;"></div>
<div class="a" style="left:2898.8px;top:1672.0px;width:1.4px;height:52.0px;background:#6a6d70;"></div>
<div class="a" style="left:2895.2px;top:1663.0px;width:8.5px;height:8.5px;background:#f0f0f0;border-radius:50%"></div>
<div class="gl" style="left:2894.5px;top:1719px;font-size:12px;color:#e8e8e8">+</div>
<div class="a" style="left:1727px;top:82px;width:22px;height:2.5px;background:repeating-linear-gradient(90deg,#e8e8e8 0 3.5px,transparent 3.5px 5.5px)"></div>
<div class="a" style="left:570px;top:887px;width:2.5px;height:26px;background:repeating-linear-gradient(#e8e8e8 0 4px,transparent 4px 6.5px)"></div>
<div class="a" style="left:573.9px;top:1734.6px;width:2209.6px;height:11.6px;background:#595c5e;border-radius:3px"></div>
<div class="a" style="left:573.9px;top:1734.6px;width:19.5px;height:11.6px;background:#48494b;border-radius:3px 0 0 3px"></div>
<svg class="sv" style="left:579px;top:1736.5px;width:6px;height:8px"><path d="M5 0.5L1.5 4L5 7.5" stroke="#e8e8e8" stroke-width="1.3" fill="none"/></svg>
<div class="a" style="left:594.6px;top:1736.3px;width:119.8px;height:8.0px;background:#f0f0f0;border-radius:3px"></div>
<div class="a" style="left:2764.0px;top:1734.6px;width:19.5px;height:11.6px;background:#48494b;border-radius:0 3px 3px 0"></div>
<svg class="sv" style="left:2772px;top:1736.5px;width:6px;height:8px"><path d="M1 0.5L4.5 4L1 7.5" stroke="#e8e8e8" stroke-width="1.3" fill="none"/></svg>
<div class="a" style="left:2787.6px;top:1734.6px;width:12.4px;height:12.0px;background:#3a3d40;border-radius:3px"></div>
<svg class="sv" style="left:2790px;top:1737.5px;width:8px;height:7px"><path d="M0 0h8L4 7z" fill="#e0e0e0"/></svg>
<div class="a" style="left:2803.5px;top:1734.6px;width:89.0px;height:12.0px;background:#3a3d40;border-radius:3px"></div>
<div class="a" style="left:2806.5px;top:1739.6px;width:8.0px;height:1.8px;background:#e8e8e8;"></div>
<div class="a" style="left:2820.0px;top:1739.8px;width:55.0px;height:1.4px;background:#6a6d70;"></div>
<div class="a" style="left:2839.3px;top:1736.5px;width:8.5px;height:8.5px;background:#f0f0f0;border-radius:50%"></div>
<div class="gl" style="left:2880px;top:1735px;font-size:12px;color:#e8e8e8">+</div>
</body></html>
